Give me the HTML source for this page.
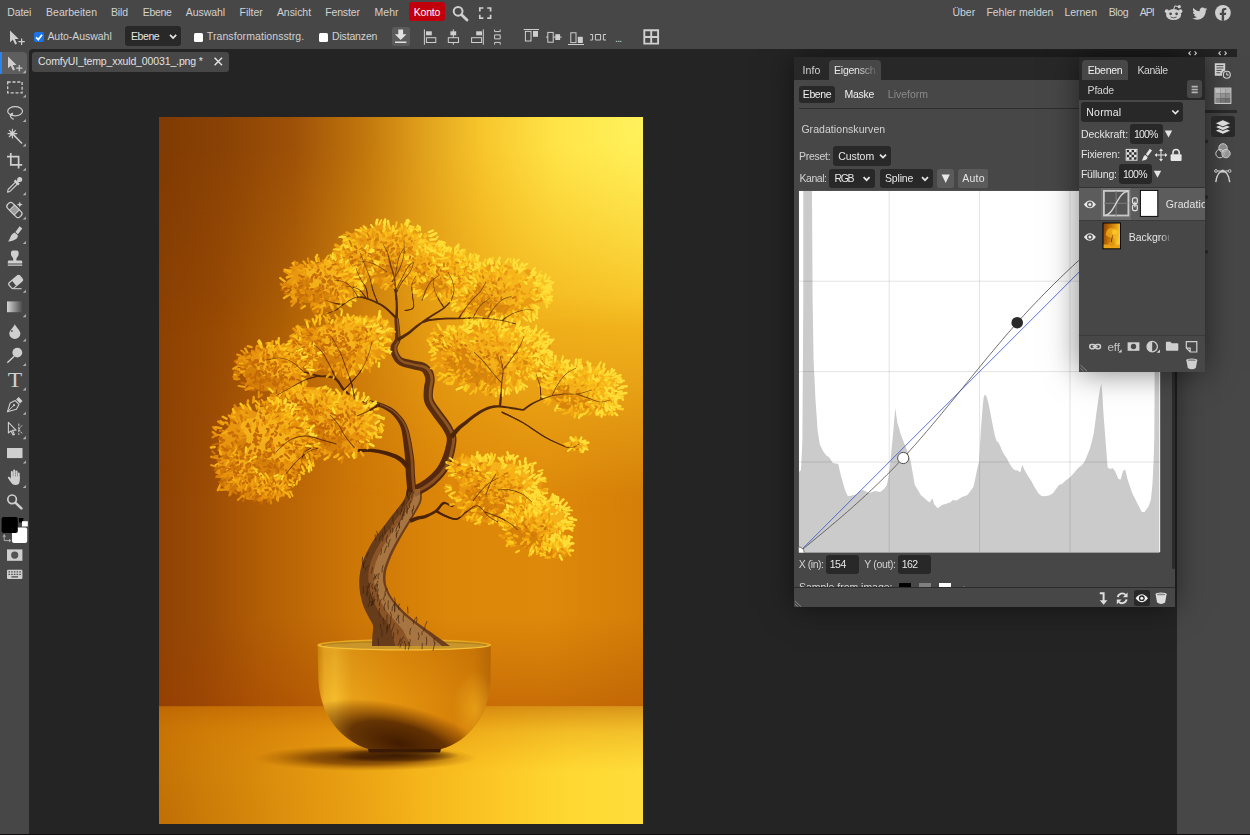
<!DOCTYPE html>
<html lang="de">
<head>
<meta charset="utf-8">
<title>Photopea</title>
<style>
*{box-sizing:border-box;margin:0;padding:0}
html,body{width:1250px;height:835px;overflow:hidden;background:#474747}
body{font-family:"Liberation Sans",sans-serif;font-size:10.5px;color:#d2d2d2;position:relative}
#app{position:absolute;left:0;top:0;width:1250px;height:835px}
#float{position:absolute;left:0;top:0;width:1250px;height:835px;will-change:transform;clip-path:inset(49px 0 0 0)}
.abs{position:absolute}
.t{position:absolute;white-space:nowrap;line-height:14px;height:14px}
svg{position:absolute;overflow:visible}
</style>
</head>
<body>
<div id="app">
<!-- workspace -->
<div class="abs" style="left:29.4px;top:49.0px;width:1147.6px;height:786.0px;background:#242424;border-radius:4px 0 0 0;"></div>
<div class="abs" style="left:1177.0px;top:49.0px;width:73.0px;height:786.0px;background:#474747;"></div>
<div class="abs" style="left:1177.0px;top:49.0px;width:60.4px;height:7.8px;background:#242424;"></div>
<div class="abs" style="left:1205.3px;top:110.0px;width:32.1px;height:3.0px;background:#2a2a2a;"></div>
<!-- menu bar -->
<span class="t" style="left:7.3px;top:5px;letter-spacing:-0.10px;">Datei</span>
<span class="t" style="left:46.0px;top:5px;letter-spacing:0.02px;">Bearbeiten</span>
<span class="t" style="left:111.0px;top:5px;letter-spacing:-0.17px;">Bild</span>
<span class="t" style="left:142.8px;top:5px;letter-spacing:-0.32px;">Ebene</span>
<span class="t" style="left:185.7px;top:5px;letter-spacing:-0.03px;">Auswahl</span>
<span class="t" style="left:239.6px;top:5px;letter-spacing:-0.03px;">Filter</span>
<span class="t" style="left:276.9px;top:5px;letter-spacing:-0.04px;">Ansicht</span>
<span class="t" style="left:325.2px;top:5px;letter-spacing:-0.15px;">Fenster</span>
<span class="t" style="left:374.5px;top:5px;letter-spacing:0.02px;">Mehr</span>
<div class="abs" style="left:409.2px;top:2.4px;width:35.5px;height:18.4px;background:#c1000c;border-radius:3px;"></div>
<span class="t" style="left:413.7px;top:5px;letter-spacing:-0.19px;color:#ffffff;">Konto</span>
<span class="t" style="left:952.4px;top:5px;letter-spacing:0.01px;">Über</span>
<span class="t" style="left:986.4px;top:5px;letter-spacing:-0.01px;">Fehler melden</span>
<span class="t" style="left:1064.5px;top:5px;letter-spacing:-0.04px;">Lernen</span>
<span class="t" style="left:1108.7px;top:5px;letter-spacing:-0.37px;">Blog</span>
<span class="t" style="left:1139.7px;top:5px;letter-spacing:-1.02px;">API</span>
<svg width="1250" height="835" viewBox="0 0 1250 835" style="left:0;top:0;pointer-events:none"><circle cx="458.1" cy="11.3" r="4.4" fill="none" stroke="#cfcfcf" stroke-width="2"/><path d="M461.6 14.8L467 20.1" stroke="#cfcfcf" stroke-width="2.8" stroke-linecap="round"/><path d="M479.8 11.4V8H483.4M487.2 8H490.6V11.4M490.6 14.8V18.2H487.2M483.4 18.2H479.8V14.8" fill="none" stroke="#cfcfcf" stroke-width="1.7"/><g fill="#cfcfcf"><ellipse cx="1173.6" cy="14.6" rx="7.6" ry="5.5"/><circle cx="1166.8" cy="11.2" r="2"/><circle cx="1180.4" cy="11.2" r="2"/><circle cx="1179.3" cy="6.7" r="1.6"/></g><path d="M1173.6 9.6L1174.8 5.9L1178.4 6.6" fill="none" stroke="#cfcfcf" stroke-width="1"/><circle cx="1170.6" cy="13.8" r="1.35" fill="#474747"/><circle cx="1176.6" cy="13.8" r="1.35" fill="#474747"/><path d="M1170.6 17Q1173.6 18.8 1176.6 17" fill="none" stroke="#474747" stroke-width=".9"/><path transform="translate(1192.3 6.1) scale(.625)" fill="#cfcfcf" d="M23.953 4.57a10 10 0 01-2.825.775 4.958 4.958 0 002.163-2.723c-.951.555-2.005.959-3.127 1.184a4.92 4.92 0 00-8.384 4.482C7.69 8.095 4.067 6.13 1.64 3.162a4.822 4.822 0 00-.666 2.475c0 1.71.87 3.213 2.188 4.096a4.904 4.904 0 01-2.228-.616v.06a4.923 4.923 0 003.946 4.827 4.996 4.996 0 01-2.212.085 4.936 4.936 0 004.604 3.417 9.867 9.867 0 01-6.102 2.105c-.39 0-.779-.023-1.17-.067a13.995 13.995 0 007.557 2.209c9.053 0 13.998-7.496 13.998-13.985 0-.21 0-.42-.015-.63A9.935 9.935 0 0024 4.59z"/><circle cx="1222.9" cy="12.8" r="7.9" fill="#cfcfcf"/><path fill="#474747" d="M1221.7 20.7v-5.7h-1.9v-2.3h1.9v-1.7c0-1.9 1.1-3 2.9-3 .8 0 1.7.15 1.7.15v1.9h-1c-.9 0-1.2.6-1.2 1.2v1.45h2.1l-.33 2.3h-1.77v5.7z"/></svg>
<!-- options bar -->
<div class="abs" style="left:34.0px;top:32.4px;width:10.0px;height:9.8px;background:#1a73e8;border-radius:2px;"></div>
<span class="t" style="left:47.4px;top:29px;letter-spacing:-0.04px;">Auto-Auswahl</span>
<div class="abs" style="left:125.2px;top:26.2px;width:55.8px;height:19.6px;background:#282828;border-radius:3px;"></div>
<span class="t" style="left:131.0px;top:29px;letter-spacing:-0.42px;color:#e6e6e6;">Ebene</span>
<div class="abs" style="left:193.7px;top:32.6px;width:9.5px;height:9.2px;background:#ffffff;border-radius:1.5px;"></div>
<span class="t" style="left:206.8px;top:29px;letter-spacing:0.08px;">Transformationsstrg.</span>
<div class="abs" style="left:319.0px;top:32.6px;width:9.4px;height:9.2px;background:#ffffff;border-radius:1.5px;"></div>
<span class="t" style="left:332.0px;top:29px;letter-spacing:-0.16px;">Distanzen</span>
<div class="abs" style="left:391.7px;top:27.1px;width:17.9px;height:18.7px;background:#5b5b5b;border-radius:2.5px;"></div>
<span class="t" style="left:615.0px;top:31px;letter-spacing:-0.73px;">...</span>
<svg width="1250" height="835" viewBox="0 0 1250 835" style="left:0;top:0;pointer-events:none"><path fill="#cfcfcf" d="M10 30.4V42.3L12.9 39.7L15.1 44.6L17 43.8L14.9 39H18.8Z"/><path d="M18.4 41.7H24.8M21.6 38.5V44.9" stroke="#cfcfcf" stroke-width="1.2"/><path d="M36.1 37.3L38.3 39.6L42 34.8" fill="none" stroke="#fff" stroke-width="1.7"/><path d="M170 34.9L173.1 38L176.2 34.9" fill="none" stroke="#e6e6e6" stroke-width="1.7"/><path fill="#e2e2e2" d="M398.3 29.4h4.8v4.9h3.4l-5.8 5.6l-5.8-5.6h3.4zM395 41.4h11.4v1.7H395z"/><path d="M424.4 29.4V44.8" stroke="#cfcfcf" stroke-width="1"/><rect x="426" y="31.3" width="5.8" height="4" fill="#cfcfcf"/><rect x="426.4" y="37.7" width="9.4" height="4.8" fill="none" stroke="#cfcfcf" stroke-width="1"/><path d="M453.3 29.4V44.8" stroke="#cfcfcf" stroke-width="1"/><rect x="450.4" y="31.3" width="5.8" height="4" fill="#cfcfcf"/><rect x="448.3" y="37.7" width="10.2" height="4.8" fill="#474747" stroke="#cfcfcf" stroke-width="1"/><path d="M483.3 29.4V44.8" stroke="#cfcfcf" stroke-width="1"/><rect x="476.2" y="31.3" width="5.8" height="4" fill="#cfcfcf"/><rect x="471.6" y="37.7" width="10" height="4.8" fill="none" stroke="#cfcfcf" stroke-width="1"/><path d="M494.6 29.6V31.6H500.2V29.6M494.6 34.9H500.2V38.9H494.6ZM494.6 44.6V42.4H500.2V44.6" fill="none" stroke="#cfcfcf" stroke-width="1"/><path d="M523.7 29.5H539" stroke="#cfcfcf" stroke-width="1"/><rect x="525.4" y="31.4" width="5.6" height="9.6" fill="none" stroke="#cfcfcf" stroke-width="1"/><rect x="533" y="31" width="5" height="5.8" fill="#cfcfcf"/><path d="M546 37.1H561.7" stroke="#cfcfcf" stroke-width="1"/><rect x="547.8" y="32.4" width="5.4" height="9.8" fill="#474747" stroke="#cfcfcf" stroke-width="1"/><rect x="555.3" y="34.2" width="4.8" height="5.8" fill="#cfcfcf"/><path d="M568 44.5H584" stroke="#cfcfcf" stroke-width="1"/><rect x="570.8" y="32.8" width="5.2" height="9.8" fill="none" stroke="#cfcfcf" stroke-width="1"/><rect x="577.8" y="36.8" width="5" height="6.2" fill="#cfcfcf"/><path d="M590.2 34.5H592.6V40H590.2M595.4 34.5H600.6V40H595.4ZM606 34.5H603.4V40H606" fill="none" stroke="#cfcfcf" stroke-width="1"/><path d="M644.3 30.3H658.1V43.6H644.3ZM651.2 30.3V43.6M644.3 37H658.1" fill="none" stroke="#cfcfcf" stroke-width="1.9"/></svg>
<!-- toolbar -->
<div class="abs" style="left:0.0px;top:51.8px;width:26.6px;height:21.9px;background:#5e5e5e;border-radius:0 4px 4px 0;"></div>
<div class="abs" style="left:0.0px;top:51.8px;width:2.2px;height:21.9px;background:#2c82f0;"></div>
<svg width="1250" height="835" viewBox="0 0 1250 835" style="left:0;top:0;pointer-events:none"><path fill="#b4b4b4" d="M25.9 70.1V73.2H22.8Z"/><path fill="#b4b4b4" d="M25.9 94.5V97.6H22.8Z"/><path fill="#b4b4b4" d="M25.9 118.9V122.0H22.8Z"/><path fill="#b4b4b4" d="M25.9 143.3V146.4H22.8Z"/><path fill="#b4b4b4" d="M25.9 167.7V170.8H22.8Z"/><path fill="#b4b4b4" d="M25.9 192.1V195.2H22.8Z"/><path fill="#b4b4b4" d="M25.9 216.5V219.6H22.8Z"/><path fill="#b4b4b4" d="M25.9 240.9V244.0H22.8Z"/><path fill="#b4b4b4" d="M25.9 289.7V292.8H22.8Z"/><path fill="#b4b4b4" d="M25.9 314.1V317.2H22.8Z"/><path fill="#b4b4b4" d="M25.9 338.5V341.6H22.8Z"/><path fill="#b4b4b4" d="M25.9 362.9V366.0H22.8Z"/><path fill="#b4b4b4" d="M25.9 387.3V390.4H22.8Z"/><path fill="#b4b4b4" d="M25.9 411.7V414.8H22.8Z"/><path fill="#b4b4b4" d="M25.9 436.1V439.2H22.8Z"/><path fill="#b4b4b4" d="M25.9 460.5V463.6H22.8Z"/><path fill="#b4b4b4" d="M25.9 484.9V488.0H22.8Z"/><path fill="#cfcfcf" d="M8 56.6V68.3L10.8 65.8L13 70.5L14.9 69.7L12.8 65H16.6Z"/><path d="M16.2 68.2H22.4M19.3 65.1V71.3" stroke="#cfcfcf" stroke-width="1.2"/><rect x="7.7" y="82" width="14.4" height="10.8" fill="none" stroke="#cfcfcf" stroke-width="1.3" stroke-dasharray="3 1.8"/><ellipse cx="15.1" cy="111.2" rx="7.4" ry="4.6" fill="none" stroke="#cfcfcf" stroke-width="1.2"/><path d="M12.6 113.4Q9.6 114.8 10.6 116.8Q11.4 118.4 13.6 119.4" fill="none" stroke="#cfcfcf" stroke-width="1.2"/><path d="M9.4 114.6L13.2 112.6L12.6 116" fill="#cfcfcf"/><path d="M14.2 135.6L22 143.6" stroke="#cfcfcf" stroke-width="1.5"/><path d="M12.4 128.8V138.4M7.6 133.6H17.2M9 130.2L15.8 137M15.8 130.2L9 137" stroke="#cfcfcf" stroke-width="1.1"/><circle cx="12.4" cy="133.6" r="2.3" fill="#cfcfcf"/><path d="M10.8 153V164.8H22.2M7 156.7H18.6V168.4" fill="none" stroke="#cfcfcf" stroke-width="1.7"/><circle cx="19.7" cy="179.5" r="2.5" fill="#cfcfcf"/><path d="M14.6 180.4L18.9 184.7" stroke="#cfcfcf" stroke-width="2.4"/><path d="M17.6 181.8L19 180.4" stroke="#cfcfcf" stroke-width="2.6"/><path d="M15.5 182.1L17.4 184L10 191.4L7.5 192.1L8.1 189.5Z" fill="none" stroke="#cfcfcf" stroke-width="1.1" stroke-linejoin="round"/><g transform="rotate(45 14.4 210)"><rect x="5.6" y="206.4" width="17.6" height="7.2" rx="3" fill="none" stroke="#cfcfcf" stroke-width="1.2"/><rect x="11" y="206.4" width="6.8" height="7.2" fill="#9a9a9a" stroke="#cfcfcf" stroke-width="1"/></g><path fill="#cfcfcf" d="M19.8 201.6L20.6 203.8L22.8 204.6L20.6 205.4L19.8 207.6L19 205.4L16.8 204.6L19 203.8Z"/><path fill="#cfcfcf" d="M19.6 226.2L22.3 228.5L17.9 234.2L15.4 232.1Z"/><path fill="#cfcfcf" d="M14.6 232.6L17.7 235.1C18.6 238.4 14.8 241.2 7.9 241.5C10.6 239.6 9.8 234.6 14.6 232.6Z"/><path fill="#cfcfcf" d="M11 252.4Q11 250.4 13 250.4H16.6Q18.6 250.4 18.6 252.4V254.6Q18.6 256 17.2 257.2Q16.4 258 16.4 259.2V260.4H20.8Q22.2 260.4 22.2 261.8V263.6H7.8V261.8Q7.8 260.4 9.2 260.4H13.2V259.2Q13.2 258 12.4 257.2Q11 256 11 254.6ZM7.8 264.6H22.2V265.8H7.8Z"/><g transform="rotate(-40 15.4 282)"><rect x="8.6" y="278.6" width="14" height="7" rx="1.6" fill="none" stroke="#cfcfcf" stroke-width="1.2"/><path fill="#cfcfcf" d="M13.6 278.6H21Q22.6 278.6 22.6 280.2V284Q22.6 285.6 21 285.6H13.6Z"/></g><path d="M13.4 288.7H21.6" stroke="#cfcfcf" stroke-width="1.1"/><defs><linearGradient id="tg" x1="0" x2="1"><stop offset="0" stop-color="#d4d4d4"/><stop offset="1" stop-color="#4c4c4c"/></linearGradient></defs><rect x="7" y="301.4" width="15.2" height="10.8" fill="url(#tg)"/><path fill="#cfcfcf" d="M14.85 324.2C17 328.2 20.4 330.6 20.4 333.5A5.55 5.4 0 0 1 9.3 333.5C9.3 330.6 12.7 328.2 14.85 324.2Z"/><circle cx="11.9" cy="331" r=".9" fill="#555"/><circle cx="17.3" cy="352.6" r="4.9" fill="#cfcfcf"/><path d="M14.2 356.2L7.3 362.8" stroke="#cfcfcf" stroke-width="1.4"/><text x="15" y="387" text-anchor="middle" font-family="Liberation Serif,serif" font-size="21.5" fill="#cfcfcf" transform="translate(15 0) scale(1.1 1) translate(-15 0)">T</text><path fill="#cfcfcf" d="M18.7 397L22.5 400.9L20 403.5L16.1 399.6Z"/><path d="M15.2 400.6L19 404.4L16.4 409.2L7.4 411.8L10.2 402.9Z" fill="none" stroke="#cfcfcf" stroke-width="1.1" stroke-linejoin="round"/><path d="M7.6 411.6L13.4 405.8" stroke="#cfcfcf" stroke-width="1"/><circle cx="14" cy="405.2" r="1.1" fill="#cfcfcf"/><path d="M8.4 422.4V433L11 430.8L13 435L14.4 434.4L12.5 430.2H16Z" fill="none" stroke="#cfcfcf" stroke-width="1.1" stroke-linejoin="round"/><path d="M18.8 423.6V434.8M18.8 429.2L22 425.4M18.8 429.2L22 433.4" stroke="#cfcfcf" stroke-width="1" stroke-dasharray="2.2 1"/><rect x="7" y="448" width="15.5" height="10.1" fill="#cfcfcf"/><g fill="#cfcfcf"><rect x="10.9" y="471" width="2" height="8" rx="1"/><rect x="13.2" y="469.6" width="2" height="9" rx="1"/><rect x="15.5" y="470.4" width="2" height="9" rx="1"/><rect x="17.8" y="472.6" width="1.9" height="7" rx=".95"/><path d="M10.9 476.4H19.7V480.4Q19.7 485 15.4 485Q12.6 485 11.2 482.8L7.9 478Q7.6 477.2 8.4 476.8Q9.2 476.4 9.8 477.2L10.9 478.6Z"/></g><circle cx="12.1" cy="499.3" r="4.3" fill="none" stroke="#cfcfcf" stroke-width="1.7"/><path d="M15.6 502.8L21.4 508.4" stroke="#cfcfcf" stroke-width="2.5" stroke-linecap="round"/><rect x="18.9" y="518" width="4.4" height="4.5" fill="#000"/><rect x="22" y="521.2" width="5.8" height="5.3" fill="#fff"/><rect x="12" y="527.6" width="15.2" height="15.4" rx="2" fill="#fff"/><rect x="1.6" y="517" width="16.2" height="16" rx="2" fill="#000"/><path d="M4.2 536.4V540.6H9.4" fill="none" stroke="#aaa" stroke-width="1"/><path fill="#aaa" d="M2.4 536.8L4.2 534L6 536.8ZM9 538.8L11.4 540.6L9 542.4Z"/><rect x="7" y="549.4" width="15.4" height="11.4" fill="#cfcfcf"/><circle cx="14.7" cy="555.1" r="3.6" fill="#555"/><rect x="7" y="569.7" width="15.4" height="9.4" rx="1" fill="#cfcfcf"/><path fill="#4a4a4a" d="M8.5 571.3h1.5v1.3h-1.5zM8.5 573.7h1.5v1.3h-1.5zM11.2 571.3h1.5v1.3h-1.5zM11.2 573.7h1.5v1.3h-1.5zM13.9 571.3h1.5v1.3h-1.5zM13.9 573.7h1.5v1.3h-1.5zM16.6 571.3h1.5v1.3h-1.5zM16.6 573.7h1.5v1.3h-1.5zM19.3 571.3h1.5v1.3h-1.5zM19.3 573.7h1.5v1.3h-1.5zM11.4 576.2h6.6v1.4h-6.6z"/></svg>
<!-- document tab -->
<div class="abs" style="left:32.4px;top:52.0px;width:196.2px;height:19.6px;background:#474747;border-radius:3px;"></div>
<span class="t" style="left:38.1px;top:54px;letter-spacing:-0.13px;color:#e2e2e2;">ComfyUI_temp_xxuld_00031_.png *</span>
<svg width="1250" height="835" viewBox="0 0 1250 835" style="left:0;top:0;pointer-events:none"><path d="M214.6 57.8L222 65.2M222 57.8L214.6 65.2" stroke="#e2e2e2" stroke-width="1.5"/></svg>
<!-- image canvas -->
<svg width="484" height="707" viewBox="0 0 484 707" preserveAspectRatio="none" style="left:159px;top:117px"><defs><linearGradient id="pwa" x1="0" x2="1" y1="0" y2="0"><stop offset="0" stop-color="#803a03"/><stop offset="0.14" stop-color="#883f03"/><stop offset="0.28" stop-color="#9a4a05"/><stop offset="0.43" stop-color="#be7008"/><stop offset="0.53" stop-color="#d99315"/><stop offset="0.67" stop-color="#f6be24"/><stop offset="0.82" stop-color="#ffe040"/><stop offset="1" stop-color="#fff055"/></linearGradient><linearGradient id="pwb" x1="0" x2="1" y1="0" y2="0"><stop offset="0" stop-color="#8c4203"/><stop offset="0.12" stop-color="#984a04"/><stop offset="0.25" stop-color="#aa5c05"/><stop offset="0.4" stop-color="#ca7a09"/><stop offset="0.55" stop-color="#e59a10"/><stop offset="0.75" stop-color="#f0ae18"/><stop offset="1" stop-color="#f5b81c"/></linearGradient><linearGradient id="pwc" x1="0" x2="1" y1="0" y2="0"><stop offset="0" stop-color="#8e4204"/><stop offset="0.1" stop-color="#9c4c05"/><stop offset="0.2" stop-color="#b05c05"/><stop offset="0.4" stop-color="#cc7607"/><stop offset="0.6" stop-color="#dd8709"/><stop offset="0.8" stop-color="#de890a"/><stop offset="1" stop-color="#d47e08"/></linearGradient><linearGradient id="pma" x1="0" x2="0" y1="0" y2="1"><stop offset="0" stop-color="#fff"/><stop offset="0.05" stop-color="#fff"/><stop offset="0.36" stop-color="#000"/></linearGradient><linearGradient id="pmb" x1="0" x2="0" y1="0" y2="1"><stop offset="0" stop-color="#fff"/><stop offset="0.3" stop-color="#fff"/><stop offset="0.64" stop-color="#000"/></linearGradient><mask id="pmka"><rect width="484" height="592" fill="url(#pma)"/></mask><mask id="pmkb"><rect width="484" height="592" fill="url(#pmb)"/></mask><linearGradient id="pwd" x1="0" x2="0" y1="0" y2="1"><stop offset="0" stop-color="#7a3600"/><stop offset="0" stop-color="#a03c00" stop-opacity="0"/><stop offset="1" stop-color="#a03c00" stop-opacity=".36"/></linearGradient><linearGradient id="pfl" x1="0" x2="1" y1="0" y2="0"><stop offset="0" stop-color="#d08008"/><stop offset="0.1" stop-color="#dc8e0b"/><stop offset="0.3" stop-color="#ea9e10"/><stop offset="0.5" stop-color="#f3b018"/><stop offset="0.7" stop-color="#fcc826"/><stop offset="0.85" stop-color="#ffd832"/><stop offset="1" stop-color="#ffdd3a"/></linearGradient><linearGradient id="pfv" x1="0" x2="0" y1="0" y2="1"><stop offset="0" stop-color="#b85a00" stop-opacity=".55"/><stop offset=".22" stop-color="#cc6c00" stop-opacity=".24"/><stop offset=".55" stop-color="#d87800" stop-opacity="0"/></linearGradient><linearGradient id="pbw" x1="0" x2="1" y1="0" y2="0"><stop offset="0" stop-color="#d48a10"/><stop offset="0.04" stop-color="#eeb026"/><stop offset="0.1" stop-color="#f4ba2c"/><stop offset="0.2" stop-color="#e8a018"/><stop offset="0.4" stop-color="#e4940e"/><stop offset="0.7" stop-color="#da860a"/><stop offset="0.9" stop-color="#d07c08"/><stop offset="1" stop-color="#b86a06"/></linearGradient><radialGradient id="pbs" cx=".5" cy=".5" r=".5"><stop offset="0" stop-color="#3a1600" stop-opacity=".95"/><stop offset=".5" stop-color="#4e2200" stop-opacity=".85"/><stop offset=".8" stop-color="#703400" stop-opacity=".4"/><stop offset="1" stop-color="#7a3c00" stop-opacity="0"/></radialGradient><radialGradient id="psh" cx=".5" cy=".5" r=".5"><stop offset="0" stop-color="#4a2000" stop-opacity=".9"/><stop offset=".5" stop-color="#6e3600" stop-opacity=".7"/><stop offset="1" stop-color="#a05a00" stop-opacity="0"/></radialGradient><linearGradient id="ptr" x1="0" x2="1" y1="0" y2="0"><stop offset="0" stop-color="#4a2810"/><stop offset="0.35" stop-color="#7c4c24"/><stop offset="0.7" stop-color="#b4824a"/><stop offset="1" stop-color="#8a5a2c"/></linearGradient><clipPath id="pbc"><path d="M158.6 528L159.4 563C161 598 181 623 209 632H282C309 625 331 598 331.5 563L331.8 528Z"/></clipPath><linearGradient id="pbt" x1="0" x2="0" y1="0" y2="1"><stop offset="0" stop-color="#8a4400" stop-opacity=".0"/><stop offset=".25" stop-color="#b05e00" stop-opacity=".22"/><stop offset="1" stop-color="#b05e00" stop-opacity="0"/></linearGradient><radialGradient id="phl" cx="1" cy="0" r="1"><stop offset="0" stop-color="#fff46a" stop-opacity=".35"/><stop offset=".5" stop-color="#ffe84a" stop-opacity=".08"/><stop offset="1" stop-color="#ffe84a" stop-opacity="0"/></radialGradient><radialGradient id="pfc" gradientUnits="userSpaceOnUse" cx="0" cy="720" r="260"><stop offset="0" stop-color="#a85400" stop-opacity=".42"/><stop offset=".5" stop-color="#a85400" stop-opacity=".16"/><stop offset="1" stop-color="#a85400" stop-opacity="0"/></radialGradient><radialGradient id="pbr" cx=".5" cy=".5" r=".5"><stop offset="0" stop-color="#f8b822" stop-opacity=".55"/><stop offset="1" stop-color="#f8b822" stop-opacity="0"/></radialGradient><radialGradient id="ps2" cx=".5" cy=".5" r=".5"><stop offset="0" stop-color="#2e1200" stop-opacity=".85"/><stop offset=".6" stop-color="#3a1800" stop-opacity=".6"/><stop offset="1" stop-color="#3a1800" stop-opacity="0"/></radialGradient></defs><rect width="484" height="592" fill="url(#pwc)"/><rect width="484" height="592" fill="url(#pwb)" mask="url(#pmkb)"/><rect width="484" height="592" fill="url(#pwa)" mask="url(#pmka)"/><rect y="500" width="484" height="92" fill="url(#pwd)"/><rect y="589.5" width="484" height="117.5" fill="url(#pfl)"/><rect y="589.5" width="484" height="117.5" fill="url(#pfv)"/><rect y="589.5" width="484" height="117.5" fill="url(#pfc)"/><ellipse cx="206" cy="641" rx="112" ry="13" fill="url(#psh)"/><ellipse cx="238" cy="638.5" rx="62" ry="7" fill="url(#ps2)"/><path d="M158.6 528L159.4 563C161 598 181 623 209 632H282C309 625 331 598 331.5 563L331.8 528Z" fill="url(#pbw)"/><g clip-path="url(#pbc)"><rect x="150" y="520" width="190" height="60" fill="url(#pbt)"/><ellipse cx="240" cy="626" rx="100" ry="38" transform="rotate(14 240 626)" fill="url(#pbs)"/><ellipse cx="316" cy="592" rx="22" ry="38" fill="url(#pbr)"/></g><ellipse cx="245.2" cy="527.6" rx="86.6" ry="5.4" fill="#e8a820"/><ellipse cx="245.2" cy="528" rx="83.5" ry="4.2" fill="#b8821e"/><ellipse cx="245.2" cy="528.8" rx="80" ry="3.2" fill="#c8962a"/><path d="M158.8 527.8A86.6 5.4 0 0 0 331.8 527.8" fill="none" stroke="#f6c03a" stroke-width="1.2"/><path d="M209 632H282L281 635.4H210Z" fill="#3a1a04"/><path d="M213.0 529.0C213.1 527.3 213.3 522.2 213.5 518.8C213.6 515.4 214.6 511.8 214.0 508.6C213.3 505.4 210.9 502.5 209.4 499.5C207.9 496.5 206.2 493.5 204.9 490.3C203.7 487.2 202.7 483.9 202.0 480.6C201.2 477.3 200.7 473.9 200.5 470.5C200.3 467.2 200.2 463.7 200.5 460.3C200.8 456.9 201.4 453.5 202.2 450.3C203.1 447.0 204.1 443.7 205.4 440.6C206.6 437.5 208.2 434.4 209.8 431.4C211.4 428.4 213.2 425.5 215.0 422.6C216.9 419.8 219.0 417.1 221.0 414.3C223.0 411.6 225.1 408.9 227.2 406.2C229.2 403.5 231.3 400.8 233.4 398.1C235.5 395.4 237.7 392.8 239.8 390.1C241.8 387.4 244.1 384.8 245.5 381.8C247.0 378.8 248.0 373.6 248.5 372.0L262.5 372.0C262.5 373.9 263.2 379.8 262.4 383.5C261.6 387.1 259.3 390.5 257.5 393.8C255.7 397.2 253.8 400.5 251.8 403.8C249.9 407.1 247.8 410.3 245.9 413.6C243.9 416.9 242.0 420.2 240.2 423.6C238.3 426.9 236.5 430.3 234.8 433.7C233.1 437.2 231.5 440.7 230.2 444.2C228.9 447.8 227.4 451.5 226.9 455.2C226.3 458.9 226.1 462.8 226.8 466.4C227.4 470.0 229.0 473.6 230.7 476.9C232.5 480.2 234.9 483.3 237.3 486.3C239.7 489.3 242.3 492.1 245.0 494.8C247.8 497.4 250.7 499.8 253.7 502.2C256.7 504.6 259.9 506.7 263.0 508.9C266.1 511.2 269.2 513.4 272.3 515.6C275.4 517.9 278.5 520.1 281.7 522.3C284.8 524.6 289.4 527.9 291.0 529.0Z" fill="#8a5426"/><path d="M256.5 379.9C258.2 379.0 263.4 376.6 266.7 374.5C270.1 372.4 273.2 370.3 276.5 367.4C279.7 364.5 283.6 360.7 286.2 357.1C288.9 353.6 290.7 349.9 292.3 346.1C293.9 342.2 295.0 338.3 295.9 334.1C296.7 329.8 297.8 324.6 297.4 320.5C296.9 316.5 294.7 312.8 293.3 309.9C291.8 307.0 290.9 305.9 288.9 303.0C286.8 300.0 283.3 295.7 280.9 292.3C278.5 288.9 275.6 285.6 274.5 282.5C273.4 279.3 274.0 276.6 274.2 273.2C274.5 269.9 275.9 265.9 275.7 262.5C275.6 259.0 274.8 255.4 273.1 252.6C271.4 249.9 268.8 247.4 265.6 245.9C262.4 244.4 257.6 244.3 254.0 243.5C250.4 242.7 246.4 242.3 244.0 241.1C241.7 240.0 240.8 238.2 239.9 236.4C239.0 234.6 238.2 232.6 238.5 230.5C238.7 228.4 241.0 226.5 241.4 223.6C241.9 220.6 241.3 216.6 241.0 212.9C240.7 209.2 239.9 203.2 239.7 201.3L235.3 201.7C235.4 203.6 235.9 209.7 236.0 213.1C236.1 216.6 236.5 219.7 235.8 222.4C235.0 225.1 232.0 226.6 231.5 229.5C231.1 232.4 231.7 236.5 233.1 239.6C234.5 242.7 236.8 246.0 240.0 248.1C243.1 250.1 248.3 250.7 252.0 251.7C255.6 252.7 259.7 253.1 261.8 254.1C264.0 255.0 264.1 255.9 264.9 257.4C265.6 258.8 266.3 260.2 266.3 262.7C266.2 265.3 264.9 269.0 264.8 272.8C264.6 276.6 264.1 281.4 265.5 285.5C266.9 289.7 270.5 293.9 273.1 297.7C275.7 301.5 279.2 305.7 281.1 308.4C283.1 311.2 283.6 311.9 284.7 314.1C285.9 316.3 287.6 318.5 287.8 321.5C288.1 324.4 287.0 328.5 286.1 331.9C285.3 335.3 284.1 338.8 282.7 341.9C281.3 345.1 280.0 347.9 277.8 350.9C275.6 353.8 272.3 357.1 269.5 359.6C266.8 362.0 264.3 363.8 261.3 365.5C258.3 367.3 253.2 369.3 251.5 370.1Z" fill="#55280e"/><path d="M257.5 374.6C257.2 371.9 256.4 363.8 256.0 358.7C255.6 353.5 255.7 348.0 255.3 343.7C254.9 339.3 254.3 336.0 253.7 332.4C253.2 328.9 252.7 325.7 251.9 322.3C251.2 318.9 250.6 315.3 249.3 311.9C248.1 308.6 246.9 305.6 244.5 302.3C242.0 299.0 238.4 294.8 234.5 292.0C230.7 289.2 225.8 287.3 221.3 285.7C216.8 284.2 211.6 283.5 207.4 282.7C203.2 281.9 199.8 282.8 196.2 281.0C192.7 279.2 189.0 275.3 186.0 272.1C183.0 268.8 181.1 263.9 178.3 261.7C175.5 259.4 172.3 259.1 169.2 258.5C166.1 257.9 163.7 258.8 159.7 258.1C155.7 257.4 150.0 255.5 145.2 254.3C140.4 253.2 133.3 251.8 130.9 251.3L130.7 252.3C133.0 252.9 140.1 254.4 144.8 255.7C149.6 256.9 155.3 259.1 159.3 259.9C163.3 260.7 165.9 259.9 168.8 260.5C171.7 261.1 174.2 261.3 176.7 263.5C179.3 265.8 181.0 270.6 184.0 273.9C187.0 277.3 191.0 281.8 194.8 283.8C198.5 285.9 202.4 285.3 206.6 286.3C210.8 287.2 215.7 288.1 219.9 289.7C224.0 291.3 228.2 293.3 231.5 296.0C234.8 298.7 237.7 302.7 239.5 305.7C241.4 308.7 241.9 311.1 242.7 314.1C243.4 317.1 243.6 320.4 244.1 323.7C244.5 326.9 244.9 330.1 245.3 333.6C245.7 337.0 246.0 340.1 246.3 344.3C246.6 348.6 246.6 354.1 247.0 359.3C247.4 364.5 248.3 372.7 248.5 375.4Z" fill="#52260c"/><path d="M213.0 529.0C213.1 527.3 213.3 522.2 213.5 518.8C213.6 515.4 214.6 511.8 214.0 508.6C213.3 505.4 210.9 502.5 209.4 499.5C207.9 496.5 206.2 493.5 204.9 490.3C203.7 487.2 202.7 483.9 202.0 480.6C201.2 477.3 200.7 473.9 200.5 470.5C200.3 467.2 200.2 463.7 200.5 460.3C200.8 456.9 201.4 453.5 202.2 450.3C203.1 447.0 204.1 443.7 205.4 440.6C206.6 437.5 208.2 434.4 209.8 431.4C211.4 428.4 213.2 425.5 215.0 422.6C216.9 419.8 219.0 417.1 221.0 414.3C223.0 411.6 225.1 408.9 227.2 406.2C229.2 403.5 231.3 400.8 233.4 398.1C235.5 395.4 237.7 392.8 239.8 390.1C241.8 387.4 244.1 384.8 245.5 381.8C247.0 378.8 248.0 373.6 248.5 372.0L252.7 372.0C252.4 373.7 251.9 379.1 250.6 382.3C249.3 385.5 247.0 388.3 245.1 391.2C243.1 394.1 241.0 396.9 238.9 399.8C236.9 402.7 234.8 405.5 232.8 408.4C230.7 411.3 228.7 414.2 226.7 417.1C224.8 420.0 222.8 422.9 221.0 425.9C219.2 429.0 217.4 432.1 215.9 435.2C214.4 438.4 212.9 441.7 211.8 445.0C210.8 448.3 210.0 451.7 209.6 455.1C209.2 458.5 209.2 461.9 209.6 465.3C209.9 468.7 210.7 472.0 211.5 475.3C212.4 478.5 213.6 481.8 214.9 484.9C216.2 488.0 217.8 491.0 219.6 493.9C221.3 496.8 223.5 499.5 225.5 502.3C227.5 505.1 230.1 507.8 231.5 510.7C232.9 513.6 233.1 516.8 233.9 519.9C234.8 522.9 236.0 527.5 236.4 529.0Z" fill="#4a2810" fill-opacity=".55"/><path d="M252.0 529.0C251.3 527.6 249.0 523.4 247.6 520.6C246.1 517.7 245.0 514.8 243.2 512.1C241.3 509.4 238.5 506.9 236.2 504.2C233.9 501.6 231.5 499.0 229.3 496.3C227.2 493.5 225.2 490.7 223.5 487.7C221.8 484.7 220.2 481.6 218.9 478.4C217.6 475.2 216.3 472.0 215.6 468.6C214.9 465.3 214.4 461.8 214.5 458.3C214.6 454.9 215.2 451.3 216.1 447.9C217.0 444.5 218.5 441.1 220.0 437.8C221.5 434.5 223.1 431.3 224.9 428.2C226.7 425.0 228.6 422.0 230.6 418.9C232.5 415.9 234.5 412.9 236.5 409.9C238.5 406.9 240.6 403.9 242.6 400.9C244.6 397.9 246.7 395.0 248.6 392.0C250.5 388.9 252.8 386.0 254.0 382.6C255.1 379.3 255.2 373.8 255.5 372.0L261.1 372.0C261.0 373.9 261.6 379.7 260.7 383.3C259.8 386.9 257.5 390.1 255.7 393.5C253.9 396.8 251.9 400.0 250.0 403.2C248.0 406.5 246.0 409.6 244.0 412.9C242.1 416.1 240.1 419.4 238.2 422.6C236.4 425.9 234.5 429.2 232.8 432.6C231.1 436.0 229.5 439.4 228.2 442.9C226.8 446.5 225.4 450.1 224.7 453.7C224.1 457.4 223.8 461.2 224.3 464.8C224.8 468.4 226.2 471.9 227.7 475.2C229.3 478.6 231.5 481.7 233.6 484.7C235.8 487.7 238.2 490.6 240.7 493.4C243.3 496.1 246.0 498.6 248.9 501.0C251.7 503.4 254.7 505.7 257.7 508.0C260.6 510.3 263.6 512.6 266.5 514.9C269.4 517.3 272.1 519.6 274.8 522.0C277.6 524.3 281.8 527.8 283.2 529.0Z" fill="#c09058" fill-opacity=".55"/><path d="M283.2 529.0C281.8 527.8 277.6 524.3 274.8 522.0C272.1 519.6 269.4 517.3 266.5 514.9C263.6 512.6 260.6 510.3 257.7 508.0C254.7 505.7 251.7 503.4 248.9 501.0C246.0 498.6 243.3 496.1 240.7 493.4C238.2 490.6 235.8 487.7 233.6 484.7C231.5 481.7 229.3 478.6 227.7 475.2C226.2 471.9 224.8 468.4 224.3 464.8C223.8 461.2 224.1 457.4 224.7 453.7C225.4 450.1 226.8 446.5 228.2 442.9C229.5 439.4 231.1 436.0 232.8 432.6C234.5 429.2 236.4 425.9 238.2 422.6C240.1 419.4 242.1 416.1 244.0 412.9C246.0 409.6 248.0 406.5 250.0 403.2C251.9 400.0 253.9 396.8 255.7 393.5C257.5 390.1 259.8 386.9 260.7 383.3C261.6 379.7 261.0 373.9 261.1 372.0L262.5 372.0C262.5 373.9 263.2 379.8 262.4 383.5C261.6 387.1 259.3 390.5 257.5 393.8C255.7 397.2 253.8 400.5 251.8 403.8C249.9 407.1 247.8 410.3 245.9 413.6C243.9 416.9 242.0 420.2 240.2 423.6C238.3 426.9 236.5 430.3 234.8 433.7C233.1 437.2 231.5 440.7 230.2 444.2C228.9 447.8 227.4 451.5 226.9 455.2C226.3 458.9 226.1 462.8 226.8 466.4C227.4 470.0 229.0 473.6 230.7 476.9C232.5 480.2 234.9 483.3 237.3 486.3C239.7 489.3 242.3 492.1 245.0 494.8C247.8 497.4 250.7 499.8 253.7 502.2C256.7 504.6 259.9 506.7 263.0 508.9C266.1 511.2 269.2 513.4 272.3 515.6C275.4 517.9 278.5 520.1 281.7 522.3C284.8 524.6 289.4 527.9 291.0 529.0Z" fill="#5a3014" fill-opacity=".6"/><path d="M256.9 376.5C258.6 375.6 263.7 373.3 266.9 371.3C270.1 369.4 273.1 367.4 276.1 364.7C279.2 361.9 282.9 358.3 285.4 354.9C287.8 351.6 289.5 348.2 291.1 344.6C292.6 341.0 293.6 337.3 294.5 333.3C295.3 329.4 296.3 324.5 296.0 320.9C295.6 317.2 293.5 314.0 292.2 311.4C290.9 308.7 290.1 307.7 288.1 304.9C286.0 302.0 282.5 297.7 280.1 294.2C277.6 290.6 274.5 287.1 273.2 283.5C272.0 280.0 272.6 276.6 272.8 273.1C273.0 269.6 274.4 265.7 274.3 262.6C274.2 259.4 273.5 256.6 272.1 254.3C270.8 252.0 268.9 250.1 266.1 248.8C263.2 247.5 258.6 247.2 255.0 246.4C251.4 245.5 246.9 245.0 244.2 243.6C241.5 242.1 240.1 239.7 239.0 237.5C237.9 235.3 237.2 232.5 237.4 230.1C237.7 227.7 240.1 226.0 240.6 223.2C241.1 220.3 240.5 216.6 240.2 213.0C240.0 209.3 239.2 203.4 239.0 201.4L237.7 201.6C237.9 203.5 238.6 209.5 238.8 213.0C238.9 216.6 239.5 220.0 238.9 222.8C238.3 225.6 235.7 227.3 235.4 229.9C235.0 232.5 235.7 235.9 237.0 238.5C238.3 241.1 240.1 243.9 243.0 245.6C245.9 247.4 250.7 247.9 254.4 248.8C258.1 249.8 262.4 250.1 264.9 251.2C267.5 252.4 268.6 253.8 269.7 255.7C270.8 257.6 271.4 259.8 271.5 262.6C271.5 265.5 270.1 269.3 270.0 272.9C269.8 276.6 269.3 280.6 270.6 284.5C271.8 288.3 275.2 292.1 277.7 295.8C280.3 299.5 283.8 303.7 285.7 306.5C287.7 309.3 288.4 310.2 289.6 312.6C290.8 315.1 292.8 317.8 293.1 321.1C293.4 324.5 292.4 329.0 291.5 332.7C290.7 336.4 289.6 340.0 288.1 343.4C286.7 346.8 285.2 349.9 282.8 353.1C280.5 356.2 277.0 359.7 274.1 362.3C271.1 364.9 268.4 366.8 265.3 368.7C262.2 370.5 257.1 372.7 255.5 373.5Z" fill="#a0622a" fill-opacity=".7"/><path d="M256.5 374.9C256.3 372.2 255.4 364.1 255.0 358.9C254.6 353.7 254.7 348.2 254.3 343.9C253.9 339.5 253.3 336.3 252.8 332.8C252.3 329.3 251.8 326.1 251.1 322.8C250.4 319.4 249.8 315.9 248.7 312.7C247.5 309.4 246.5 306.7 244.2 303.5C241.8 300.3 238.4 296.1 234.6 293.4C230.9 290.7 226.3 288.7 221.8 287.1C217.4 285.5 210.3 284.5 208.0 284.0L207.7 285.0C210.0 285.6 217.1 286.7 221.4 288.3C225.7 289.9 230.2 291.9 233.8 294.6C237.3 297.3 240.6 301.4 242.7 304.5C244.9 307.6 245.7 310.2 246.7 313.3C247.7 316.5 248.1 319.9 248.7 323.2C249.3 326.5 249.8 329.7 250.3 333.2C250.8 336.7 251.3 339.8 251.6 344.1C252.0 348.4 251.9 353.9 252.3 359.1C252.7 364.3 253.6 372.5 253.8 375.1Z" fill="#9a5c28" fill-opacity=".7"/><path d="M210.9 485.4q-1.7 -3.4 0.5 -8.8M205.0 451.3q-1.7 -4.7 0.7 -5.7M229.6 512.0q1.8 -3.3 0.6 -5.1M275.5 526.5q-1.4 -4.6 0.2 -5.7M239.9 506.5q-0.5 -3.4 -0.7 -8.8M244.3 504.8q-0.7 -3.2 0.8 -7.8M239.7 408.1q0.3 -3.4 2.5 -6.1M249.0 496.5q-0.3 -2.7 -0.4 -7.0M263.0 532.2q0.3 -2.4 0.3 -6.2M221.4 438.1q1.4 -2.2 0.9 -6.3M259.1 522.9q2.0 -2.5 0.1 -7.5M217.0 423.3q-1.3 -4.6 -0.8 -5.9M230.8 509.3q1.5 -4.8 0.8 -6.8M253.4 397.3q-0.9 -3.8 0.4 -5.5M249.0 378.3q-1.1 -4.3 0.9 -6.6M209.0 490.4q-0.5 -3.3 2.8 -6.2M216.9 462.0q-1.8 -2.3 2.1 -5.5M234.8 408.0q-1.6 -3.1 -0.8 -8.7M221.0 499.6q-1.8 -5.0 -0.4 -8.6M204.2 476.6q0.5 -4.6 0.0 -7.6M207.2 477.6q2.0 -3.6 0.9 -8.7M238.6 517.3q1.3 -4.5 -0.9 -5.2M207.2 454.0q-1.9 -3.4 2.9 -5.5M220.9 424.3q-1.3 -2.7 1.1 -5.9M213.5 488.1q1.9 -2.4 2.2 -5.7M226.2 417.0q-0.6 -4.9 -0.9 -7.9M237.2 503.7q-0.2 -2.2 3.0 -5.2M210.3 471.4q-1.2 -4.4 1.5 -5.4M242.3 402.7q1.2 -4.7 1.6 -5.4M240.5 411.2q-1.3 -2.6 0.3 -5.8M252.5 381.3q1.8 -2.8 -0.3 -8.5M263.0 518.2q-1.4 -2.5 2.9 -6.4M225.3 483.8q-1.9 -2.1 1.6 -6.9M247.7 396.2q1.3 -4.4 0.0 -7.8M232.9 494.2q-0.3 -4.6 2.6 -7.6M217.7 474.6q-0.3 -2.2 1.0 -6.9M204.6 451.1q-1.3 -5.0 2.2 -8.3M219.2 462.1q-0.7 -3.4 1.2 -5.9M251.0 517.7q-0.9 -2.7 1.0 -6.8M237.2 421.5q0.5 -3.5 1.0 -6.2M216.5 468.8q1.8 -2.9 2.5 -5.2M231.8 502.2q1.4 -4.6 -0.5 -7.2M232.7 514.7q0.7 -2.6 2.6 -8.4M233.2 415.9q1.5 -2.1 -0.1 -5.2M218.5 484.1q1.3 -4.5 0.7 -6.9M212.5 481.9q0.9 -4.9 1.2 -7.2M241.0 530.5q0.0 -4.8 2.9 -5.8M248.4 379.3q-1.8 -2.7 0.1 -8.5M226.1 478.2q-1.0 -4.6 2.7 -6.7M218.1 419.0q0.8 -3.7 -0.7 -5.2M225.2 436.1q1.4 -4.8 2.5 -7.2M225.4 493.4q-0.9 -4.6 1.1 -8.0M228.2 514.2q-1.2 -4.1 0.2 -6.0M229.3 492.4q-0.6 -4.9 0.0 -8.9M231.4 415.6q-0.1 -2.2 -0.6 -5.7M215.5 472.6q-0.4 -3.5 1.8 -5.1M235.5 494.1q0.5 -3.8 0.4 -8.8M222.1 512.5q-1.0 -4.5 -0.7 -5.6M245.2 399.1q-1.0 -4.1 0.8 -8.4M209.6 470.9q1.9 -3.4 -0.0 -5.1M218.3 480.0q-0.5 -3.6 1.0 -8.2M204.3 448.8q-1.6 -3.8 -0.8 -8.9M213.8 485.5q0.1 -2.7 1.6 -6.1M240.9 398.3q1.9 -4.6 1.9 -6.4M274.0 533.7q0.5 -2.8 2.2 -8.4M214.6 462.4q1.2 -2.5 1.3 -5.4M228.1 426.7q-1.9 -4.6 0.4 -8.6M243.5 402.8q0.5 -3.0 1.0 -9.0M240.4 411.5q0.1 -3.0 -0.7 -6.1M211.9 489.2q0.9 -4.4 2.0 -5.1M212.1 456.5q0.7 -2.7 1.5 -6.4M227.4 516.6q1.0 -4.1 1.3 -9.0M234.3 521.9q0.8 -3.0 0.2 -6.9M214.8 463.6q1.6 -4.4 2.9 -5.3M249.3 532.8q1.9 -3.7 0.1 -8.2M249.9 383.2q-1.4 -3.4 2.8 -8.5M236.7 414.6q0.8 -4.3 2.6 -7.1M219.5 528.9q-0.2 -4.1 -0.4 -7.6M235.8 485.8q1.0 -2.5 -0.5 -5.3M237.0 419.5q-0.5 -3.8 3.0 -6.6M216.7 474.8q-1.8 -4.7 2.3 -7.9M244.9 388.4q0.0 -4.4 0.5 -5.2M253.3 394.5q1.7 -2.2 1.2 -6.1M267.2 528.4q1.0 -3.1 0.1 -8.8M243.1 390.5q-0.6 -4.1 2.0 -5.1M235.7 495.4q0.2 -3.8 -0.3 -8.4M254.5 507.4q-1.1 -2.3 3.0 -7.2M228.1 505.4q-0.6 -4.7 -0.0 -8.0M223.1 455.6q-0.3 -3.8 1.1 -7.5M207.7 479.8q1.9 -4.6 1.0 -6.5M238.2 396.8q-1.0 -3.8 0.8 -5.2M248.4 397.0q-1.9 -2.9 2.6 -7.1M207.1 440.5q1.7 -2.5 2.4 -5.1M213.3 488.2q0.1 -3.0 2.8 -6.1M229.3 430.1q0.2 -4.9 2.1 -8.1M250.8 390.1q-1.5 -4.2 1.5 -6.2M223.0 519.6q0.3 -3.8 -0.1 -6.6M239.0 528.5q1.8 -3.1 2.5 -7.1M224.8 507.8q0.8 -4.1 -0.9 -7.0M223.6 424.5q0.7 -2.2 -0.1 -8.9M220.6 488.9q-1.2 -2.6 2.0 -7.0M257.4 505.7q1.3 -4.3 -0.1 -6.0M239.9 493.0q-1.3 -4.3 0.7 -6.3M249.0 380.9q-1.1 -2.1 -0.4 -8.8M241.5 525.0q1.5 -2.8 3.0 -5.3M212.1 489.2q1.0 -4.9 1.7 -7.5M213.7 472.2q-2.0 -4.2 0.4 -5.2M265.9 511.4q-0.6 -2.5 2.3 -7.3M250.3 527.5q1.7 -4.4 0.5 -5.4M246.2 532.7q1.1 -4.9 -0.9 -8.7" fill="none" stroke="#3a1e0a" stroke-width=".9" stroke-opacity=".7"/><path d="M250.8 348.1C249.2 346.7 245.1 341.8 241.2 339.5C237.3 337.2 232.0 335.6 227.5 334.3C222.9 333.0 218.4 332.1 213.9 331.7C209.4 331.4 205.0 332.3 200.6 332.0C196.3 331.6 192.0 330.5 187.7 329.7C183.3 328.9 178.8 327.8 174.4 327.2C169.9 326.6 165.1 325.2 160.8 326.1C156.5 326.9 151.9 329.6 148.5 332.4C145.1 335.2 141.9 340.9 140.5 342.6L141.5 343.4C142.8 341.7 146.2 336.2 149.5 333.6C152.8 331.0 157.1 328.6 161.2 327.9C165.3 327.3 169.7 328.7 174.0 329.4C178.4 330.2 182.8 331.4 187.1 332.3C191.5 333.3 196.0 334.6 200.4 335.0C204.7 335.5 209.2 334.7 213.5 335.3C217.8 335.8 222.1 336.8 226.3 338.1C230.5 339.5 235.3 341.0 238.8 343.3C242.3 345.6 245.8 350.5 247.2 351.9ZM177.7 326.3C175.3 325.7 168.3 323.7 163.1 322.4C158.0 321.1 152.4 318.5 147.0 318.5C141.6 318.5 135.8 319.9 130.8 322.6C125.8 325.3 119.1 332.7 116.8 334.7L117.2 335.3C119.6 333.3 126.2 326.0 131.2 323.4C136.2 320.7 141.7 319.5 147.0 319.5C152.3 319.5 157.8 322.2 162.9 323.6C167.9 324.9 174.9 327.0 177.3 327.7ZM196.0 330.4C194.4 328.5 189.2 322.7 186.4 318.7C183.6 314.8 181.8 310.3 179.3 306.8C176.8 303.3 172.6 299.3 171.2 297.8L170.8 298.2C172.1 299.7 176.2 303.7 178.7 307.2C181.2 310.7 182.9 315.3 185.6 319.3C188.3 323.3 193.5 329.2 195.0 331.2ZM159.3 330.3C157.5 331.0 152.5 332.2 148.8 334.6C145.0 337.0 140.4 341.0 136.7 344.7C133.1 348.4 128.4 354.8 126.8 356.8L127.2 357.2C128.9 355.2 133.6 348.9 137.3 345.3C140.9 341.6 145.5 337.7 149.2 335.4C153.0 333.1 158.0 332.0 159.7 331.3ZM220.1 286.8C218.9 287.6 215.2 289.9 212.6 291.3C210.1 292.7 207.2 294.2 204.7 295.4C202.3 296.6 199.0 298.0 197.8 298.5L198.2 299.5C199.4 299.0 202.7 297.7 205.3 296.6C207.8 295.5 210.7 294.0 213.4 292.7C216.0 291.4 219.8 289.3 221.1 288.6ZM178.1 262.3C177.0 260.0 173.9 253.3 171.5 248.8C169.0 244.2 166.0 238.2 163.3 234.8C160.6 231.3 156.6 228.9 155.2 227.8L154.8 228.2C156.1 229.4 160.1 231.7 162.7 235.2C165.3 238.8 168.2 244.6 170.5 249.2C172.9 253.9 175.8 260.6 176.9 262.9ZM196.2 282.3C195.8 279.9 195.0 273.1 193.6 267.8C192.1 262.6 189.5 256.3 187.5 250.8C185.4 245.3 183.7 239.8 181.4 234.8C179.0 229.8 174.6 223.2 173.3 220.9L172.7 221.1C174.1 223.5 178.3 230.2 180.6 235.2C182.9 240.2 184.6 245.7 186.5 251.2C188.5 256.7 191.0 262.9 192.4 268.2C193.8 273.4 194.4 280.1 194.8 282.5ZM185.4 273.4C188.1 270.4 197.4 261.0 201.4 255.3C205.4 249.6 207.3 244.2 209.3 239.1C211.3 234.1 212.6 227.4 213.2 225.1L212.8 224.9C212.1 227.3 210.7 233.9 208.7 238.9C206.7 243.8 204.6 249.1 200.6 254.7C196.6 260.4 187.2 269.6 184.6 272.6ZM159.3 258.5C157.1 259.2 150.6 260.6 145.8 262.6C141.1 264.6 135.7 268.0 130.8 270.7C126.0 273.4 119.2 277.4 116.9 278.8L117.1 279.2C119.5 277.9 126.3 273.9 131.2 271.3C136.0 268.7 141.4 265.4 146.2 263.4C150.9 261.4 157.4 260.2 159.7 259.5ZM145.3 254.6C143.3 253.0 137.2 247.0 133.2 244.7C129.2 242.3 125.4 241.0 121.0 240.7C116.7 240.4 109.3 242.4 107.0 242.8L107.0 243.2C109.4 242.9 116.7 241.0 121.0 241.3C125.3 241.7 128.8 243.0 132.8 245.3C136.8 247.7 142.7 253.7 144.7 255.4ZM294.1 321.4C295.2 320.1 298.1 315.8 300.4 313.4C302.7 311.0 305.3 309.3 307.9 307.1C310.5 304.9 313.0 302.4 315.9 300.3C318.8 298.2 322.5 295.8 325.4 294.3C328.3 292.8 330.7 291.8 333.3 291.2C335.8 290.6 337.8 290.5 340.9 290.6C344.0 290.7 348.0 291.4 351.9 291.9C355.7 292.5 362.1 293.5 364.2 293.8L364.4 292.2C362.4 291.9 356.0 290.7 352.1 290.1C348.2 289.4 344.3 288.6 341.1 288.4C337.8 288.2 335.6 288.2 332.7 288.8C329.9 289.3 327.3 290.2 324.2 291.7C321.1 293.2 317.2 295.6 314.1 297.7C311.0 299.8 308.4 302.2 305.7 304.3C302.9 306.5 300.1 308.2 297.6 310.6C295.1 313.0 291.8 317.2 290.7 318.6ZM342.2 289.6C342.3 287.7 342.7 282.0 342.9 278.1C343.1 274.1 343.2 270.2 343.4 266.1C343.7 261.9 344.9 257.5 344.6 253.0C344.2 248.4 341.9 241.3 341.4 238.9L340.6 239.1C341.1 241.4 343.2 248.6 343.4 253.0C343.7 257.5 342.4 261.8 342.0 265.9C341.6 270.1 341.4 274.0 341.1 277.9C340.7 281.8 340.0 287.5 339.8 289.4ZM343.2 265.6C341.5 263.8 336.3 258.2 333.3 254.7C330.4 251.2 328.3 248.1 325.3 244.8C322.2 241.5 316.9 236.5 315.2 234.8L314.8 235.2C316.5 236.9 321.8 241.9 324.7 245.2C327.7 248.6 329.7 251.8 332.7 255.3C335.6 258.8 340.7 264.5 342.2 266.4ZM344.5 253.4C346.0 251.3 350.6 245.3 353.4 241.3C356.2 237.2 359.3 232.9 361.3 229.2C363.3 225.5 364.6 220.8 365.2 219.1L364.8 218.9C364.1 220.6 362.7 225.2 360.7 228.8C358.7 232.5 355.5 236.8 352.6 240.7C349.8 244.7 345.0 250.7 343.5 252.6ZM364.8 293.7C366.0 292.8 369.0 290.1 371.9 288.4C374.8 286.6 378.7 284.6 382.2 283.1C385.8 281.6 389.3 280.3 393.1 279.3C396.9 278.4 400.9 277.8 405.0 277.5C409.2 277.1 413.4 278.1 418.1 277.4C422.7 276.7 430.6 274.0 433.1 273.3L432.9 272.7C430.4 273.4 422.6 276.0 417.9 276.6C413.3 277.3 409.1 276.3 405.0 276.5C400.8 276.8 396.7 277.4 392.9 278.3C389.0 279.2 385.4 280.4 381.8 281.9C378.1 283.4 374.1 285.3 371.1 287.0C368.1 288.8 365.0 291.4 363.8 292.3ZM393.4 279.0C394.4 277.1 397.0 270.8 399.3 267.2C401.6 263.6 404.2 259.9 407.2 257.2C410.2 254.6 415.5 252.2 417.1 251.2L416.9 250.8C415.2 251.8 409.8 254.1 406.8 256.8C403.8 259.4 401.0 263.2 398.7 266.8C396.3 270.4 393.6 276.6 392.6 278.6ZM382.5 282.5C382.3 280.2 382.2 273.2 381.3 268.9C380.5 264.7 377.9 258.9 377.2 256.9L376.8 257.1C377.4 259.1 379.9 264.8 380.7 269.1C381.4 273.3 381.4 280.3 381.5 282.5ZM417.8 277.4C419.7 278.1 425.0 280.0 428.9 281.3C432.7 282.7 437.3 285.0 441.0 285.3C444.7 285.6 449.4 283.6 451.0 283.2L451.0 282.8C449.3 283.1 444.7 285.0 441.0 284.7C437.4 284.3 432.9 282.0 429.1 280.7C425.3 279.3 420.0 277.3 418.2 276.6ZM342.4 295.7C344.1 296.5 349.2 298.8 352.7 300.6C356.3 302.3 360.0 304.1 363.7 306.2C367.4 308.3 371.1 311.1 374.7 313.4C378.4 315.8 381.7 318.2 385.6 320.4C389.4 322.6 393.6 324.6 397.8 326.4C402.1 328.2 407.3 331.0 411.0 331.2C414.7 331.3 418.6 327.9 420.1 327.3L419.9 326.7C418.4 327.3 414.6 330.6 411.0 330.4C407.4 330.3 402.3 327.4 398.2 325.6C394.0 323.8 389.8 321.8 386.0 319.6C382.2 317.4 378.9 315.0 375.3 312.6C371.7 310.2 368.0 307.4 364.3 305.2C360.6 303.0 356.8 301.2 353.3 299.4C349.7 297.6 344.7 295.2 343.0 294.3ZM238.9 201.5C238.9 199.4 239.1 193.2 238.9 189.0C238.8 184.7 238.6 180.3 237.7 176.2C236.9 172.2 235.3 168.3 233.7 164.7C232.2 161.1 230.1 157.8 228.4 154.5C226.7 151.2 225.0 148.4 223.5 144.8C221.9 141.2 220.0 134.9 219.3 132.9L218.7 133.1C219.3 135.1 221.1 141.5 222.5 145.2C224.0 148.8 225.6 151.7 227.2 155.1C228.8 158.4 230.8 161.7 232.3 165.3C233.7 168.9 235.1 172.6 235.9 176.6C236.6 180.5 236.6 184.9 236.7 189.0C236.7 193.2 236.2 199.4 236.1 201.5ZM237.4 176.7C238.4 174.8 241.1 168.9 243.4 165.3C245.7 161.7 249.3 158.5 251.3 155.2C253.3 151.8 254.6 146.8 255.2 145.1L254.8 144.9C254.1 146.6 252.7 151.5 250.7 154.8C248.7 158.1 245.0 161.2 242.6 164.7C240.2 168.3 237.3 174.2 236.2 176.1ZM228.1 154.3C226.6 153.4 222.4 150.2 219.2 148.6C216.0 147.0 212.4 145.3 209.1 144.7C205.7 144.0 200.7 144.7 199.0 144.8L199.0 145.2C200.7 145.3 205.6 144.6 208.9 145.3C212.2 146.0 215.7 147.7 218.8 149.4C221.9 151.0 226.0 154.3 227.5 155.3ZM233.4 165.2C234.8 162.9 239.4 155.9 241.4 151.2C243.3 146.5 244.7 141.4 245.3 137.0C246.0 132.7 245.3 127.0 245.2 125.0L244.8 125.0C244.7 127.0 245.4 132.6 244.7 137.0C244.0 141.3 242.7 146.2 240.6 150.8C238.6 155.5 233.9 162.4 232.6 164.8ZM238.3 200.7C236.9 199.2 232.6 194.6 229.7 192.2C226.8 189.8 224.4 188.0 221.0 186.2C217.6 184.4 212.9 182.4 209.3 181.2C205.6 180.1 202.0 179.1 199.0 179.3C195.9 179.5 193.1 181.2 190.7 182.4C188.3 183.6 187.2 186.0 184.6 186.5C182.0 187.0 178.2 186.2 175.1 185.6C172.0 184.9 167.6 183.2 166.1 182.7L165.9 183.3C167.4 183.8 171.8 185.7 174.9 186.4C178.1 187.1 182.1 188.0 184.8 187.5C187.5 187.0 188.9 184.7 191.3 183.6C193.6 182.4 196.1 180.8 199.0 180.7C202.0 180.6 205.2 181.6 208.7 182.8C212.3 184.0 216.9 186.0 220.2 187.8C223.4 189.6 225.6 191.4 228.3 193.8C231.1 196.2 235.3 200.9 236.7 202.3ZM199.5 179.7C198.4 178.2 195.7 173.2 193.3 170.7C190.9 168.2 188.2 166.0 185.1 164.7C182.1 163.4 176.7 163.1 175.0 162.8L175.0 163.2C176.6 163.6 181.9 164.0 184.9 165.3C187.8 166.6 190.4 168.8 192.7 171.3C195.0 173.8 197.6 178.8 198.5 180.3ZM209.5 181.9C209.2 180.1 208.8 174.4 207.4 170.8C206.0 167.3 203.0 164.2 201.3 160.9C199.6 157.5 197.9 152.6 197.2 150.9L196.8 151.1C197.4 152.8 199.1 157.8 200.7 161.1C202.3 164.5 205.3 167.7 206.6 171.2C207.9 174.6 208.1 180.3 208.5 182.1ZM184.4 186.6C183.2 187.7 179.8 191.0 176.8 192.7C173.9 194.4 168.6 196.1 166.9 196.8L167.1 197.2C168.8 196.6 174.2 194.9 177.2 193.3C180.1 191.6 183.7 188.3 185.0 187.4ZM239.5 224.4C240.6 223.7 243.7 221.6 245.8 220.2C247.8 218.8 249.7 217.7 251.8 216.0C253.9 214.4 256.1 212.1 258.2 210.4C260.3 208.7 261.6 207.8 264.3 205.8C267.0 203.9 270.9 201.1 274.5 198.7C278.0 196.3 282.6 193.8 285.6 191.4C288.7 188.9 291.6 185.2 292.8 184.0L292.0 183.2C290.8 184.4 287.8 187.9 284.8 190.2C281.7 192.6 277.1 195.0 273.5 197.3C269.9 199.6 265.9 202.3 263.1 204.2C260.3 206.1 258.9 207.0 256.8 208.6C254.6 210.2 252.3 212.4 250.2 214.0C248.1 215.5 246.3 216.5 244.2 217.8C242.1 219.0 238.8 220.9 237.7 221.6ZM293.0 183.7C293.4 182.0 295.4 176.5 295.5 173.0C295.5 169.5 294.4 165.9 293.3 162.9C292.3 159.9 289.9 156.2 289.2 154.9L288.8 155.1C289.4 156.4 291.7 160.1 292.7 163.1C293.6 166.1 294.7 169.6 294.5 173.0C294.4 176.4 292.3 181.7 291.8 183.5ZM285.7 190.5C284.6 188.9 281.1 184.1 279.4 180.8C277.7 177.5 276.0 174.2 275.3 170.9C274.6 167.6 275.3 162.7 275.2 161.0L274.8 161.0C274.7 162.7 274.0 167.7 274.7 171.1C275.3 174.4 276.9 177.9 278.6 181.2C280.3 184.5 283.7 189.4 284.7 191.1ZM264.0 206.2C265.2 205.8 267.7 204.6 271.2 204.0C274.7 203.4 280.3 202.8 285.0 202.5C289.8 202.2 294.8 202.4 299.6 202.3C304.4 202.1 309.2 201.7 314.0 201.7C318.8 201.6 323.5 201.7 328.4 202.0C333.2 202.4 338.2 203.1 342.9 203.9C347.7 204.8 354.6 206.8 356.9 207.3L357.1 206.7C354.8 206.1 347.9 204.0 343.1 203.1C338.3 202.1 333.3 201.4 328.4 201.0C323.6 200.5 318.8 200.4 314.0 200.3C309.2 200.3 304.4 200.7 299.6 200.7C294.7 200.8 289.7 200.5 285.0 200.7C280.2 200.9 274.4 201.5 270.8 202.0C267.2 202.5 264.6 203.5 263.4 203.8ZM300.1 201.9C301.2 200.3 304.2 195.4 306.4 192.3C308.6 189.2 310.8 186.1 313.3 183.3C315.8 180.4 318.9 178.2 321.3 175.2C323.6 172.2 326.2 166.8 327.2 165.1L326.8 164.9C325.8 166.5 323.1 171.8 320.7 174.8C318.4 177.8 315.2 179.9 312.7 182.7C310.2 185.5 307.9 188.6 305.6 191.7C303.3 194.8 300.1 199.6 299.1 201.1ZM328.9 201.8C329.9 200.0 332.9 194.3 335.3 191.3C337.7 188.2 340.2 185.3 343.2 183.3C346.1 181.3 351.4 179.9 353.1 179.2L352.9 178.8C351.2 179.4 345.9 180.7 342.8 182.7C339.8 184.7 337.1 187.7 334.7 190.7C332.2 193.8 329.1 199.5 327.9 201.2ZM314.4 201.3C315.6 199.2 318.5 192.6 321.3 189.2C324.1 185.9 329.5 182.5 331.2 181.2L330.8 180.8C329.2 182.1 323.6 185.4 320.7 188.8C317.8 192.1 314.8 198.8 313.6 200.7ZM343.2 203.9C344.9 202.8 349.5 199.1 353.2 197.3C356.8 195.6 361.4 194.0 365.1 193.3C368.7 192.6 373.3 193.3 375.0 193.2L375.0 192.8C373.3 192.7 368.6 192.0 364.9 192.7C361.3 193.4 356.5 194.9 352.8 196.7C349.1 198.4 344.4 202.0 342.8 203.1ZM237.8 183.0C237.6 179.4 237.1 167.3 236.3 161.9C235.6 156.5 234.3 154.0 233.3 150.4C232.3 146.8 231.2 143.2 230.3 140.3C229.4 137.4 228.5 134.1 228.1 132.9L227.5 133.1C227.8 134.3 228.7 137.6 229.5 140.5C230.3 143.4 231.4 147.0 232.3 150.6C233.2 154.2 234.4 156.7 235.1 162.1C235.7 167.5 236.0 179.6 236.2 183.0ZM236.2 161.9C235.4 159.4 232.6 151.2 231.4 146.9C230.2 142.6 230.0 139.2 228.8 135.9C227.6 132.6 225.0 128.4 224.2 126.9L223.8 127.1C224.5 128.6 227.1 132.8 228.2 136.1C229.3 139.4 229.4 142.8 230.6 147.1C231.8 151.4 234.5 159.6 235.2 162.1ZM236.2 162.1C236.9 158.5 238.7 145.8 240.3 140.5C242.0 135.2 245.0 132.2 245.9 130.5L245.5 130.3C244.5 131.9 241.4 135.0 239.7 140.3C237.9 145.6 236.0 158.3 235.2 161.9ZM237.4 173.2C238.4 171.2 241.4 164.9 243.4 161.2C245.3 157.4 247.0 153.4 248.9 150.7C250.7 148.0 253.5 146.1 254.5 145.2L254.1 144.8C253.2 145.7 250.3 147.6 248.3 150.3C246.4 153.0 244.6 157.1 242.6 160.8C240.7 164.6 237.6 170.8 236.6 172.8ZM219.0 184.8C218.2 182.9 215.7 177.2 214.5 173.4C213.2 169.5 212.8 165.7 211.6 161.9C210.4 158.1 208.9 154.7 207.2 150.4C205.5 146.1 202.4 138.3 201.4 135.9L201.0 136.1C201.9 138.5 205.0 146.3 206.6 150.6C208.2 155.0 209.7 158.3 210.8 162.1C212.0 166.0 212.4 169.8 213.5 173.6C214.7 177.5 217.1 183.3 217.8 185.2ZM207.3 180.3C206.3 179.1 203.4 174.9 201.5 173.2C199.5 171.5 197.9 171.0 195.5 170.3C193.1 169.6 188.5 169.0 187.0 168.8L187.0 169.2C188.3 169.5 193.0 170.1 195.3 170.9C197.6 171.7 199.1 172.1 200.9 173.8C202.8 175.5 205.6 179.7 206.5 180.9ZM245.9 194.1C247.3 193.6 253.3 193.4 254.7 190.9C256.0 188.4 254.2 183.0 254.0 179.2C253.7 175.3 252.7 171.1 253.2 167.8C253.7 164.4 256.6 160.5 257.2 159.1L256.8 158.9C256.1 160.4 253.2 164.3 252.6 167.6C252.0 171.0 253.0 175.4 253.2 179.2C253.4 183.0 255.2 188.2 253.9 190.5C252.6 192.8 246.9 192.6 245.5 193.1ZM263.5 183.7C264.1 181.9 266.0 176.2 267.4 173.2C268.8 170.1 269.9 167.5 271.8 165.2C273.8 162.9 277.8 160.2 279.0 159.2L278.6 158.8C277.4 159.8 273.4 162.5 271.4 164.8C269.4 167.1 268.1 169.7 266.6 172.8C265.2 175.9 263.2 181.6 262.5 183.3ZM251.7 405.9C253.0 405.3 257.0 403.5 259.5 402.7C262.0 401.8 263.9 402.1 267.0 400.9C270.0 399.6 274.8 397.4 277.8 395.1C280.9 392.9 282.7 388.0 285.2 387.2C287.7 386.4 290.7 390.3 292.9 390.1C295.1 389.9 295.7 386.9 298.3 385.9C301.0 385.0 305.3 385.3 308.8 384.4C312.3 383.5 315.9 382.1 319.3 380.6C322.7 379.2 325.9 377.1 329.2 375.5C332.6 374.0 337.5 372.1 339.2 371.4L338.8 370.6C337.2 371.2 332.1 373.0 328.8 374.5C325.4 375.9 322.1 378.0 318.7 379.4C315.3 380.7 311.9 382.0 308.4 382.8C304.9 383.6 300.3 383.2 297.7 384.1C295.1 384.9 294.9 387.8 292.7 387.9C290.5 388.0 287.2 384.0 284.4 384.8C281.7 385.6 279.3 390.7 276.2 392.9C273.1 395.1 268.8 396.9 265.8 397.9C262.9 399.0 261.1 398.6 258.5 399.3C255.9 400.0 251.7 401.7 250.3 402.1ZM276.5 395.1C278.2 395.9 283.5 399.0 287.1 400.3C290.8 401.6 294.6 403.8 298.2 402.8C301.8 401.9 305.5 396.8 309.0 394.6C312.4 392.4 315.5 388.7 318.9 389.6C322.2 390.4 326.0 397.1 329.3 399.8C332.6 402.4 337.2 404.4 338.8 405.3L339.2 404.7C337.6 403.8 333.2 401.7 329.9 399.0C326.6 396.3 322.8 389.4 319.1 388.4C315.5 387.5 311.8 391.3 308.2 393.4C304.7 395.5 301.2 400.3 297.8 401.2C294.4 402.0 291.2 399.8 287.9 398.5C284.5 397.1 279.3 393.9 277.5 392.9ZM314.4 384.3C315.5 382.8 318.8 378.1 321.3 375.3C323.8 372.4 326.2 369.6 329.2 367.3C332.2 364.9 337.5 362.2 339.1 361.2L338.9 360.8C337.2 361.8 331.8 364.4 328.8 366.7C325.8 369.1 323.2 371.9 320.7 374.7C318.2 377.6 314.8 382.2 313.6 383.7ZM325.8 395.5C327.7 396.1 333.0 397.7 336.8 399.4C340.7 401.0 345.2 403.0 348.8 405.3C352.5 407.6 357.2 411.9 358.8 413.2L359.2 412.8C357.5 411.5 352.8 407.1 349.2 404.7C345.5 402.4 341.0 400.3 337.2 398.6C333.3 396.9 328.0 395.2 326.2 394.5ZM339.0 373.4C341.0 373.4 347.0 372.7 350.9 373.4C354.9 374.0 359.2 375.3 362.9 377.3C366.5 379.2 371.2 383.9 372.8 385.2L373.2 384.8C371.5 383.5 366.8 378.8 363.1 376.7C359.5 374.7 355.1 373.3 351.1 372.6C347.0 371.9 341.0 372.6 339.0 372.6ZM327.4 378.2C328.1 376.3 329.7 370.6 331.3 367.1C332.9 363.6 336.2 358.8 337.2 357.1L336.8 356.9C335.8 358.5 332.4 363.4 330.7 366.9C329.0 370.4 327.3 376.0 326.6 377.8Z" fill="#4a2208"/><path d="M281.7 137.0C279.9 138.2 272.3 141.5 270.6 144.2C268.9 146.8 272.7 150.3 271.6 153.1C270.5 155.8 267.8 159.2 264.0 160.5C260.2 161.7 253.1 160.4 248.6 160.7C244.1 161.0 241.1 161.0 236.9 162.3C232.7 163.5 227.9 168.1 223.7 168.2C219.5 168.3 215.0 165.0 211.7 163.0C208.4 161.0 207.4 157.9 203.9 156.2C200.5 154.5 193.0 154.9 190.8 152.9C188.5 150.9 190.8 146.9 190.6 144.3C190.4 141.6 188.8 139.3 189.5 137.0C190.2 134.7 194.8 133.2 194.9 130.5C195.0 127.8 189.8 123.7 190.3 120.9C190.8 118.1 194.3 115.1 197.8 113.4C201.4 111.8 207.3 112.1 211.6 110.9C215.9 109.6 219.6 105.4 223.7 105.9C227.9 106.4 232.4 112.5 236.4 113.9C240.4 115.3 244.1 113.7 248.0 114.1C251.9 114.5 255.7 115.4 260.1 116.4C264.4 117.3 270.8 118.0 274.1 119.9C277.5 121.9 278.9 125.3 280.1 128.1C281.4 131.0 281.5 135.5 281.7 137.0ZM314.3 155.0C313.2 156.0 309.4 159.0 307.8 160.9C306.3 162.8 306.3 164.8 304.9 166.5C303.6 168.2 301.7 169.9 299.6 171.1C297.5 172.3 294.7 172.2 292.4 173.8C290.2 175.4 288.6 180.0 285.9 180.8C283.3 181.6 279.3 179.5 276.5 178.6C273.6 177.6 271.4 176.0 268.9 174.9C266.3 173.8 264.4 172.9 261.4 172.0C258.4 171.1 252.5 171.3 250.9 169.5C249.2 167.8 250.9 164.0 251.2 161.6C251.5 159.1 253.2 157.3 252.7 155.0C252.2 152.7 248.2 150.0 248.4 147.8C248.5 145.6 252.1 144.0 253.7 141.8C255.2 139.6 254.9 135.6 257.5 134.7C260.2 133.8 266.6 137.0 269.8 136.6C273.0 136.2 273.9 133.4 276.6 132.2C279.3 131.1 282.8 129.8 285.9 129.7C289.0 129.6 292.2 130.7 295.3 131.6C298.3 132.5 302.6 133.0 304.0 135.1C305.3 137.2 302.4 142.0 303.2 144.3C304.0 146.6 306.9 147.1 308.7 148.9C310.6 150.7 313.4 154.0 314.3 155.0ZM194.2 166.0C194.1 167.1 193.6 170.0 193.5 172.4C193.4 174.7 194.6 177.7 193.7 180.0C192.7 182.3 190.8 185.3 187.8 186.3C184.8 187.4 179.4 186.1 176.0 186.2C172.6 186.3 170.2 186.0 167.2 186.8C164.2 187.5 160.8 190.9 158.0 190.7C155.3 190.4 152.9 186.8 150.7 185.1C148.5 183.5 148.1 181.6 145.0 180.8C141.9 179.9 134.1 181.6 132.0 180.2C129.9 178.8 133.2 174.7 132.4 172.4C131.6 170.0 126.9 168.1 127.0 166.0C127.0 163.9 131.7 162.0 132.6 159.7C133.4 157.3 130.6 153.7 132.1 151.9C133.7 150.1 138.7 149.5 141.9 148.7C145.0 147.9 148.0 147.5 150.9 147.2C153.8 146.8 156.3 147.3 159.1 146.6C161.9 145.8 164.7 143.1 167.7 142.6C170.7 142.2 173.9 143.3 177.2 143.9C180.4 144.5 185.6 144.3 187.2 146.2C188.8 148.0 185.5 152.9 186.9 155.1C188.3 157.3 194.4 157.4 195.6 159.2C196.8 161.0 194.4 164.9 194.2 166.0ZM214.7 145.0C214.2 145.7 212.7 147.7 212.0 149.1C211.3 150.4 211.2 151.8 210.5 153.2C209.8 154.5 209.0 156.1 207.7 157.0C206.4 157.9 204.3 158.1 202.7 158.7C201.0 159.4 199.5 160.9 197.8 161.1C196.1 161.3 194.1 160.4 192.4 160.1C190.6 159.7 188.6 159.7 187.3 158.8C186.0 157.9 186.0 155.8 184.5 154.9C183.0 154.1 179.7 154.6 178.5 153.7C177.2 152.8 177.0 150.8 176.9 149.3C176.8 147.9 177.9 146.5 177.7 145.0C177.4 143.5 175.3 141.8 175.3 140.3C175.3 138.8 176.4 137.0 177.7 135.9C178.9 134.7 181.1 134.0 182.8 133.5C184.5 132.9 186.4 133.0 187.9 132.4C189.5 131.8 190.8 129.9 192.3 129.8C193.9 129.7 195.8 131.1 197.4 131.6C199.0 132.1 200.3 132.3 201.9 132.6C203.6 132.9 206.0 132.7 207.1 133.6C208.3 134.4 207.9 136.5 208.8 137.7C209.8 138.9 211.8 139.5 212.8 140.7C213.8 141.9 214.4 144.3 214.7 145.0ZM379.4 175.0C380.5 176.4 387.1 181.1 386.0 183.2C384.9 185.3 375.5 185.6 372.7 187.6C370.0 189.7 371.6 193.2 369.4 195.3C367.3 197.5 363.4 199.5 359.6 200.3C355.9 201.1 351.1 199.5 346.8 200.2C342.6 200.9 338.2 204.6 334.2 204.5C330.1 204.5 326.5 201.2 322.8 199.7C319.2 198.2 315.9 197.1 312.1 195.7C308.4 194.2 301.6 193.5 300.4 191.2C299.2 188.8 306.5 184.3 305.0 181.6C303.4 178.9 292.4 177.4 291.2 175.0C290.1 172.6 295.6 169.5 298.0 167.2C300.5 164.9 304.0 163.4 306.1 161.1C308.1 158.7 307.1 154.3 310.2 152.9C313.2 151.5 320.5 154.0 324.5 152.6C328.4 151.2 330.1 145.2 333.9 144.5C337.7 143.7 343.2 146.7 347.3 148.0C351.3 149.2 354.0 151.0 358.1 151.8C362.1 152.7 368.5 151.6 371.5 153.1C374.6 154.6 375.4 158.3 376.5 160.9C377.6 163.4 377.5 165.9 378.0 168.3C378.5 170.6 379.2 173.9 379.4 175.0ZM325.0 155.0C324.7 155.6 323.5 157.4 323.2 158.8C323.0 160.2 324.2 162.3 323.5 163.5C322.8 164.7 320.8 165.7 319.1 166.2C317.5 166.7 315.1 165.8 313.6 166.5C312.0 167.2 311.2 170.4 309.8 170.4C308.3 170.4 306.6 167.1 304.9 166.6C303.2 166.2 301.3 167.9 299.8 167.6C298.3 167.4 297.1 166.1 296.1 165.1C295.1 164.1 294.3 162.9 293.7 161.8C293.2 160.7 293.7 159.5 292.8 158.3C291.9 157.2 288.2 156.1 288.3 155.0C288.3 153.9 292.4 153.0 293.1 151.7C293.7 150.5 292.1 148.9 292.3 147.4C292.5 146.0 292.8 143.7 294.1 143.1C295.5 142.5 298.9 144.0 300.7 143.9C302.4 143.8 303.3 143.2 304.8 142.7C306.3 142.2 308.0 140.9 309.5 140.9C311.1 140.9 312.6 141.9 314.2 142.5C315.7 143.0 317.3 143.4 318.8 144.1C320.2 144.9 322.4 145.6 322.9 146.8C323.4 148.0 321.4 150.2 321.8 151.5C322.1 152.9 324.5 154.4 325.0 155.0ZM224.5 228.0C224.8 229.4 228.2 234.1 226.7 236.4C225.2 238.7 218.0 239.6 215.4 241.8C212.8 244.0 213.7 247.8 211.0 249.6C208.3 251.5 203.1 251.8 199.2 253.0C195.3 254.1 191.5 256.4 187.5 256.5C183.5 256.5 179.4 253.6 175.2 253.0C171.1 252.5 166.3 254.0 162.6 253.2C159.0 252.3 155.7 249.9 153.4 247.9C151.0 245.9 149.8 243.3 148.4 241.1C147.0 238.9 146.8 236.8 145.0 234.6C143.3 232.4 137.8 230.1 138.1 228.0C138.4 225.9 146.1 224.3 146.7 221.7C147.3 219.1 140.0 214.1 141.7 212.2C143.4 210.4 152.9 211.4 157.0 210.7C161.2 210.0 163.3 208.9 166.4 208.1C169.6 207.2 172.3 207.2 175.9 205.7C179.4 204.2 184.1 199.0 187.7 199.0C191.3 199.0 194.4 203.7 197.3 205.7C200.2 207.7 202.7 209.0 204.9 210.7C207.1 212.5 208.8 214.3 210.5 216.2C212.1 218.0 212.5 219.8 214.8 221.8C217.1 223.8 222.9 227.0 224.5 228.0ZM229.4 213.0C229.6 213.7 230.9 215.9 230.6 217.1C230.3 218.4 228.9 219.6 227.6 220.5C226.4 221.4 224.4 221.4 223.2 222.5C222.1 223.5 222.3 226.6 221.0 227.0C219.6 227.4 216.9 224.7 215.1 224.8C213.3 225.0 211.7 228.1 210.3 228.0C208.9 227.9 207.7 225.2 206.6 224.2C205.5 223.2 204.7 222.5 203.5 221.7C202.4 221.0 201.3 220.5 199.9 219.7C198.5 219.0 196.2 218.3 195.1 217.2C194.0 216.1 192.5 214.2 193.2 213.0C193.8 211.8 198.2 211.0 199.1 209.7C200.0 208.5 198.1 206.8 198.6 205.6C199.0 204.4 200.7 203.7 201.8 202.6C202.9 201.6 203.7 199.6 205.2 199.3C206.7 199.0 209.1 200.7 210.8 200.8C212.5 200.8 213.9 199.3 215.4 199.4C216.9 199.5 218.1 200.7 219.8 201.1C221.5 201.4 224.4 200.7 225.5 201.5C226.6 202.3 225.3 205.0 226.4 206.1C227.4 207.3 231.3 207.4 231.8 208.6C232.3 209.7 229.8 212.3 229.4 213.0ZM141.7 252.0C141.7 253.0 141.6 255.9 141.6 258.1C141.6 260.4 142.4 263.1 141.5 265.4C140.6 267.6 138.9 270.6 136.1 271.5C133.3 272.4 127.9 270.6 124.8 270.8C121.6 270.9 119.7 272.1 117.0 272.5C114.4 272.8 111.6 273.2 108.8 273.1C106.1 273.0 103.3 272.5 100.5 271.9C97.7 271.4 93.9 271.1 92.0 269.7C90.1 268.2 90.4 265.1 89.1 263.2C87.8 261.3 84.9 260.0 84.1 258.2C83.3 256.3 85.4 254.3 84.3 252.0C83.3 249.7 77.8 246.7 77.8 244.5C77.8 242.2 81.4 239.8 84.3 238.5C87.1 237.2 92.6 238.5 94.8 236.7C97.1 234.9 95.5 228.5 97.8 227.8C100.2 227.0 105.8 231.6 109.0 231.9C112.3 232.3 114.2 230.6 117.4 229.9C120.6 229.1 125.2 227.1 128.3 227.6C131.3 228.1 133.6 231.0 135.8 232.8C138.1 234.6 140.6 236.4 141.8 238.5C142.9 240.6 142.9 243.3 142.9 245.6C142.9 247.8 141.9 250.9 141.7 252.0ZM156.5 235.0C156.8 235.6 158.3 237.4 158.3 238.6C158.4 239.7 157.8 241.2 156.8 242.1C155.7 243.0 153.3 243.1 151.9 243.8C150.4 244.4 149.5 245.1 148.1 245.9C146.8 246.7 145.4 248.9 143.8 248.7C142.3 248.6 140.6 245.6 138.9 245.2C137.2 244.7 135.1 246.4 133.8 246.1C132.4 245.8 132.4 243.8 131.0 243.1C129.5 242.4 126.7 242.8 125.2 242.1C123.8 241.4 122.4 240.1 122.2 238.9C121.9 237.7 123.0 236.1 123.7 235.0C124.4 233.9 126.2 233.2 126.6 232.0C127.0 230.9 125.7 229.4 126.2 228.3C126.7 227.3 128.4 226.6 129.6 225.8C130.8 224.9 131.9 223.7 133.4 223.3C134.9 222.8 136.8 223.2 138.5 223.0C140.2 222.9 141.8 222.6 143.6 222.6C145.3 222.5 147.4 222.3 148.9 222.9C150.4 223.4 151.3 224.9 152.3 225.8C153.4 226.8 153.8 227.8 155.1 228.7C156.3 229.6 159.6 230.1 159.9 231.1C160.1 232.2 157.0 234.4 156.5 235.0ZM146.3 329.0C145.7 330.7 144.0 335.8 143.0 339.3C142.0 342.7 142.4 347.1 140.3 349.9C138.2 352.7 133.7 354.3 130.3 355.9C126.9 357.5 123.1 356.8 120.0 359.3C116.9 361.8 115.0 369.9 111.6 370.9C108.1 372.0 103.1 366.9 99.3 365.4C95.5 363.9 92.0 363.5 88.6 362.0C85.1 360.6 81.9 359.0 78.6 357.0C75.4 355.0 71.4 353.1 69.1 350.2C66.7 347.4 66.2 343.4 64.7 339.9C63.2 336.3 60.6 332.8 60.1 329.0C59.6 325.2 59.9 320.7 61.6 317.3C63.4 313.9 68.5 312.3 70.4 308.6C72.3 304.8 70.5 298.3 73.0 295.0C75.4 291.7 80.6 288.9 85.1 288.9C89.6 289.0 95.3 295.9 99.7 295.4C104.2 294.9 107.5 286.9 111.8 285.7C116.0 284.6 121.2 286.6 125.2 288.3C129.2 290.1 133.7 292.8 135.7 296.4C137.7 300.0 134.5 306.7 137.0 310.1C139.5 313.5 149.1 313.5 150.6 316.7C152.2 319.8 147.0 326.9 146.3 329.0ZM216.8 307.0C216.9 308.5 218.8 313.6 217.3 316.1C215.7 318.7 210.2 320.1 207.6 322.2C204.9 324.2 203.2 326.0 201.1 328.5C199.0 331.1 198.3 336.9 195.0 337.5C191.8 338.1 185.6 332.1 181.7 332.0C177.7 332.0 174.9 336.8 171.4 337.2C167.9 337.7 163.2 336.7 160.6 334.8C158.0 332.8 158.7 327.7 156.0 325.8C153.2 323.9 146.9 325.0 144.0 323.4C141.2 321.7 140.3 318.4 138.6 315.7C136.9 313.0 133.3 309.8 133.9 307.0C134.6 304.2 141.6 302.2 142.7 299.2C143.7 296.2 138.7 291.2 140.3 288.8C141.8 286.4 148.6 286.2 152.1 284.8C155.7 283.5 158.2 282.3 161.4 280.5C164.5 278.8 167.6 274.1 170.9 274.4C174.3 274.7 177.8 281.7 181.6 282.4C185.4 283.1 190.3 278.3 193.8 278.5C197.3 278.8 200.5 281.8 202.8 284.0C205.0 286.3 204.7 289.7 207.2 292.0C209.6 294.3 215.9 295.3 217.5 297.8C219.1 300.3 217.0 305.5 216.8 307.0ZM173.6 285.0C173.1 285.7 171.0 287.8 170.3 289.3C169.6 290.8 171.2 293.1 169.2 294.1C167.3 295.1 161.5 294.6 158.7 295.2C155.9 295.8 154.9 297.2 152.5 297.6C150.2 298.1 147.5 297.4 144.8 298.1C142.0 298.7 139.3 301.2 136.2 301.7C133.2 302.2 129.2 301.7 126.4 300.9C123.7 300.2 121.4 298.6 119.7 297.3C118.0 296.0 118.0 294.3 116.0 293.0C114.1 291.8 109.7 291.1 108.2 289.8C106.8 288.5 106.8 286.5 107.2 285.0C107.6 283.5 109.1 281.8 110.7 280.6C112.3 279.3 115.1 278.4 117.0 277.3C118.9 276.2 120.1 275.0 122.0 274.0C123.9 273.0 126.0 271.9 128.5 271.3C130.9 270.7 134.0 270.8 136.8 270.6C139.7 270.4 142.4 270.1 145.3 270.0C148.2 270.0 151.3 270.0 154.4 270.3C157.6 270.6 162.6 270.4 164.1 271.7C165.6 272.9 162.1 276.3 163.3 277.8C164.5 279.3 169.6 279.3 171.3 280.5C173.1 281.7 173.2 284.3 173.6 285.0ZM93.0 353.0C93.5 354.0 95.8 357.0 96.0 359.1C96.3 361.1 95.9 364.1 94.5 365.3C93.1 366.5 89.4 365.6 87.7 366.5C86.0 367.4 85.7 369.2 84.4 370.6C83.1 372.0 81.5 374.8 79.9 374.9C78.3 375.0 76.5 371.4 74.6 371.2C72.7 371.1 69.9 374.4 68.2 373.9C66.6 373.5 65.5 370.4 64.7 368.5C63.8 366.6 64.2 364.2 63.3 362.6C62.5 360.9 60.6 360.2 59.6 358.6C58.7 357.0 57.7 354.9 57.6 353.0C57.6 351.1 58.8 349.3 59.2 347.3C59.6 345.3 59.0 342.6 60.2 341.2C61.3 339.9 64.6 340.6 66.0 339.2C67.4 337.7 67.0 333.4 68.4 332.4C69.8 331.5 72.5 333.6 74.4 333.5C76.3 333.3 78.0 331.6 79.8 331.6C81.6 331.6 83.6 332.4 85.2 333.4C86.7 334.5 87.9 336.3 89.1 337.8C90.3 339.3 91.0 340.8 92.3 342.2C93.6 343.7 96.7 344.9 96.8 346.7C96.9 348.4 93.6 351.9 93.0 353.0ZM132.4 371.0C131.2 371.5 126.8 373.0 125.6 374.1C124.5 375.2 126.2 376.6 125.4 377.7C124.6 378.8 122.8 379.9 120.9 380.6C118.9 381.3 116.0 381.6 113.6 381.8C111.2 382.0 108.7 381.8 106.3 381.8C104.0 381.8 102.1 381.8 99.6 382.0C97.1 382.2 93.9 383.0 91.4 382.8C88.9 382.7 86.2 381.8 84.5 380.9C82.9 380.0 82.1 378.6 81.6 377.4C81.1 376.3 82.7 375.0 81.5 373.9C80.4 372.9 75.6 372.1 74.7 371.0C73.8 369.9 74.7 368.3 76.1 367.3C77.5 366.3 81.6 366.0 83.2 365.0C84.7 364.1 84.4 362.7 85.7 361.7C87.0 360.6 88.7 359.3 90.9 358.7C93.1 358.0 96.2 357.6 98.9 357.6C101.5 357.7 104.2 358.6 106.7 359.0C109.2 359.4 111.4 359.7 113.6 360.1C115.9 360.6 118.9 360.8 120.4 361.6C121.9 362.5 121.7 364.1 122.5 365.1C123.4 366.2 123.7 367.0 125.3 367.9C127.0 368.9 131.2 370.5 132.4 371.0ZM374.8 239.0C376.7 240.7 386.7 246.4 385.9 249.0C385.0 251.6 373.3 252.1 369.7 254.4C366.1 256.8 367.2 260.5 364.3 262.9C361.5 265.2 356.9 266.6 352.7 268.4C348.5 270.3 344.0 273.6 339.1 274.1C334.3 274.6 328.2 272.6 323.5 271.3C318.8 270.0 315.1 267.7 311.0 266.2C306.9 264.6 301.8 264.1 298.9 262.0C296.0 260.0 297.4 256.1 293.6 253.9C289.8 251.8 279.4 251.5 276.0 249.0C272.6 246.5 271.4 242.0 273.3 239.0C275.2 236.0 283.7 233.4 287.4 231.1C291.1 228.7 293.0 227.0 295.2 224.7C297.5 222.5 298.2 219.5 300.9 217.4C303.6 215.3 307.6 214.3 311.3 212.2C314.9 210.0 318.4 205.7 323.0 204.4C327.6 203.1 333.9 203.8 339.0 204.4C344.2 205.0 350.6 205.4 354.0 207.8C357.3 210.2 355.1 216.8 358.9 219.0C362.7 221.1 373.0 218.9 376.8 220.7C380.7 222.5 382.4 226.6 382.1 229.7C381.7 232.7 376.0 237.4 374.8 239.0ZM309.8 223.0C310.4 223.7 313.6 226.2 313.3 227.3C313.0 228.5 309.1 228.9 307.7 229.9C306.3 230.8 306.3 232.4 305.0 233.1C303.8 233.8 301.6 233.7 300.0 234.1C298.4 234.6 297.2 235.0 295.5 235.6C293.8 236.3 291.7 238.2 290.0 238.1C288.4 238.0 286.9 235.8 285.6 234.9C284.2 233.9 283.3 233.0 281.9 232.3C280.5 231.6 278.1 231.4 277.1 230.4C276.1 229.5 276.8 227.9 275.9 226.7C275.0 225.4 271.4 224.2 271.6 223.0C271.8 221.8 276.6 221.0 277.1 219.6C277.6 218.2 273.8 215.3 274.6 214.4C275.5 213.5 280.8 215.0 282.4 214.1C284.0 213.2 282.8 209.8 284.1 208.9C285.4 208.0 288.3 208.4 290.2 208.6C292.0 208.9 293.7 210.3 295.4 210.6C297.2 211.0 299.3 210.1 300.8 210.6C302.3 211.0 303.4 212.4 304.5 213.3C305.7 214.2 306.9 215.1 307.7 216.1C308.5 217.2 309.1 218.3 309.4 219.5C309.8 220.6 309.7 222.4 309.8 223.0ZM391.8 231.0C391.2 231.8 388.7 233.9 388.2 235.6C387.7 237.3 389.2 239.7 388.7 241.3C388.1 243.0 386.5 244.6 384.8 245.5C383.2 246.4 380.8 246.6 378.8 246.6C376.9 246.6 375.1 244.8 373.3 245.4C371.5 246.0 369.6 250.1 368.0 250.3C366.3 250.5 365.0 247.3 363.2 246.5C361.4 245.7 358.3 246.7 357.1 245.5C356.0 244.4 356.7 241.3 356.3 239.6C355.9 237.9 355.7 236.8 354.7 235.4C353.6 233.9 350.2 232.5 350.1 231.0C349.9 229.5 352.5 227.7 353.6 226.4C354.7 225.0 355.9 224.0 356.8 222.7C357.7 221.4 358.1 219.8 359.1 218.5C360.1 217.2 361.3 215.2 362.9 214.9C364.5 214.6 366.9 216.8 368.7 216.7C370.5 216.5 372.0 214.0 373.7 213.9C375.4 213.7 377.1 214.9 378.7 215.6C380.3 216.3 382.4 216.7 383.5 217.9C384.5 219.1 383.8 221.5 385.0 222.8C386.1 224.1 389.3 224.5 390.4 225.8C391.5 227.2 391.6 230.1 391.8 231.0ZM460.1 272.0C458.8 272.9 453.3 275.4 452.5 277.6C451.6 279.8 455.6 283.1 455.0 285.3C454.3 287.6 451.7 290.2 448.7 291.3C445.7 292.3 440.3 291.2 436.8 291.6C433.3 292.0 431.0 292.7 427.8 293.6C424.6 294.4 420.8 296.7 417.6 296.5C414.4 296.4 411.3 293.9 408.6 292.5C405.9 291.1 404.3 289.5 401.2 288.3C398.1 287.2 392.3 287.4 390.0 285.8C387.6 284.2 387.0 281.2 387.1 278.9C387.1 276.6 389.4 274.1 390.4 272.0C391.3 269.9 391.9 268.1 392.7 266.2C393.6 264.3 394.2 262.3 395.6 260.5C397.0 258.8 399.1 257.5 400.9 255.4C402.8 253.4 403.7 249.8 406.5 248.5C409.3 247.2 414.0 248.0 417.6 247.7C421.3 247.4 425.0 246.6 428.5 246.9C432.1 247.3 435.5 248.6 438.7 249.6C442.0 250.7 446.5 251.2 448.0 253.2C449.5 255.2 446.4 259.6 447.8 261.6C449.2 263.7 454.1 263.9 456.2 265.7C458.2 267.4 459.5 270.9 460.1 272.0ZM410.7 255.0C410.7 255.5 411.1 257.3 410.6 258.3C410.1 259.3 408.9 260.2 407.8 261.1C406.8 261.9 405.7 262.8 404.4 263.4C403.0 263.9 401.3 263.9 399.8 264.5C398.4 265.1 397.4 266.5 395.7 267.1C394.1 267.7 391.8 268.3 390.0 268.2C388.2 268.1 386.5 267.0 384.9 266.3C383.2 265.7 381.8 265.1 380.3 264.3C378.9 263.6 376.9 262.9 376.3 261.8C375.7 260.8 377.2 259.2 376.6 258.1C376.0 256.9 373.1 256.1 372.8 255.0C372.6 253.9 374.4 252.8 375.1 251.7C375.7 250.5 376.0 249.4 376.8 248.4C377.7 247.4 378.8 246.3 380.2 245.6C381.6 244.9 383.5 244.5 385.2 244.2C386.9 243.9 388.8 243.8 390.5 243.8C392.2 243.8 393.9 243.9 395.5 244.1C397.1 244.3 398.5 244.7 400.2 245.0C401.8 245.3 404.1 245.2 405.4 245.9C406.8 246.5 407.3 247.8 408.3 248.7C409.4 249.7 411.3 250.5 411.7 251.5C412.0 252.6 410.8 254.4 410.7 255.0ZM461.1 287.0C460.9 287.5 460.1 288.8 459.9 289.8C459.6 290.8 460.1 292.1 459.6 293.1C459.2 294.1 458.2 295.1 457.1 295.7C456.0 296.3 454.3 296.5 452.9 296.7C451.5 296.9 450.2 296.8 448.9 296.8C447.6 296.9 446.3 297.2 445.1 297.1C443.8 297.0 442.6 296.5 441.4 296.3C440.1 296.0 438.2 296.0 437.3 295.4C436.5 294.7 436.7 293.1 436.2 292.2C435.7 291.3 434.8 290.7 434.3 289.8C433.7 288.9 433.0 287.9 433.0 287.0C433.0 286.1 433.8 285.1 434.3 284.2C434.8 283.3 435.6 282.7 436.1 281.7C436.6 280.8 436.4 279.3 437.2 278.5C437.9 277.6 439.3 276.8 440.6 276.6C442.0 276.3 443.7 276.7 445.0 276.8C446.4 276.9 447.7 276.7 448.9 277.0C450.1 277.3 451.1 278.1 452.1 278.6C453.2 279.0 454.6 279.1 455.4 279.7C456.3 280.3 456.4 281.3 457.3 282.1C458.1 282.8 459.9 283.2 460.5 284.0C461.2 284.8 461.0 286.5 461.1 287.0ZM428.9 328.0C428.8 328.3 428.5 329.3 428.0 329.9C427.5 330.4 426.8 330.9 426.0 331.3C425.2 331.6 424.0 331.5 423.4 332.0C422.8 332.5 423.1 333.8 422.4 334.2C421.8 334.6 420.4 334.3 419.4 334.3C418.4 334.4 417.5 334.6 416.5 334.6C415.5 334.6 414.4 334.6 413.5 334.3C412.5 334.1 411.6 333.6 411.0 333.1C410.5 332.6 410.4 331.8 410.2 331.2C410.1 330.6 410.1 330.0 409.9 329.5C409.7 329.0 409.3 328.5 409.2 328.0C409.0 327.5 408.7 326.8 408.9 326.3C409.0 325.8 409.4 325.1 410.0 324.7C410.6 324.3 411.7 324.2 412.4 323.9C413.2 323.6 413.8 323.4 414.5 323.1C415.2 322.7 415.8 322.0 416.6 321.8C417.4 321.6 418.5 321.7 419.4 321.8C420.2 322.0 420.8 322.6 421.7 322.8C422.7 322.9 424.4 322.4 425.2 322.7C425.9 323.0 426.2 324.0 426.3 324.6C426.4 325.2 425.3 326.0 425.7 326.6C426.2 327.1 428.4 327.8 428.9 328.0ZM381.4 373.0C381.9 374.6 385.8 379.9 384.4 382.4C383.0 385.0 375.9 386.3 373.1 388.5C370.2 390.8 370.1 394.5 367.1 395.9C364.0 397.4 358.6 397.2 354.8 397.5C350.9 397.8 347.8 396.3 344.0 397.7C340.3 399.1 336.3 405.1 332.3 405.9C328.3 406.7 323.0 404.6 319.9 402.6C316.8 400.6 316.9 395.8 313.6 393.8C310.2 391.8 302.9 392.8 299.8 390.8C296.8 388.9 295.3 385.0 295.4 382.1C295.5 379.1 299.9 375.9 300.3 373.0C300.8 370.1 298.3 367.5 298.1 364.5C297.9 361.5 296.8 357.1 299.2 354.9C301.5 352.6 308.6 353.0 312.0 350.9C315.4 348.9 315.8 343.3 319.4 342.6C323.0 341.8 329.4 346.0 333.6 346.4C337.8 346.9 340.7 345.4 344.7 345.1C348.6 344.8 354.2 343.2 357.3 344.5C360.5 345.8 361.2 350.6 363.6 352.9C366.0 355.1 368.3 356.3 371.6 358.2C374.9 360.0 381.7 361.3 383.4 363.8C385.0 366.2 381.7 371.5 381.4 373.0ZM410.0 407.0C409.1 408.1 405.0 411.1 404.4 413.7C403.8 416.3 407.5 420.5 406.4 422.7C405.3 425.0 400.7 425.9 397.8 427.0C395.0 428.2 392.1 428.9 389.3 429.5C386.5 430.0 383.9 429.8 381.0 430.5C378.2 431.1 375.1 433.8 372.4 433.4C369.8 433.1 368.3 429.1 365.3 428.3C362.3 427.5 356.2 430.3 354.3 428.8C352.4 427.3 355.3 421.7 354.1 419.3C352.9 416.8 348.6 416.3 347.2 414.3C345.8 412.3 345.2 409.3 345.6 407.0C346.0 404.7 349.0 402.8 349.5 400.3C350.0 397.7 347.4 393.8 348.7 391.8C350.0 389.8 355.0 389.8 357.5 388.2C359.9 386.6 361.0 383.6 363.5 382.3C366.0 381.1 369.6 380.8 372.5 380.9C375.4 381.0 378.3 382.4 381.1 383.0C384.0 383.6 387.2 383.2 389.4 384.4C391.6 385.5 392.8 388.4 394.6 390.1C396.4 391.8 397.8 393.0 400.4 394.5C402.9 396.0 408.4 396.8 410.0 398.9C411.7 401.0 410.0 405.7 410.0 407.0ZM330.8 351.0C330.2 351.5 327.6 352.8 327.3 354.0C326.9 355.2 329.2 357.2 328.6 358.2C328.0 359.3 325.2 359.6 323.7 360.3C322.1 361.1 321.1 362.4 319.4 362.7C317.7 363.0 315.3 362.0 313.5 362.0C311.6 362.0 310.2 362.6 308.4 362.7C306.6 362.8 304.2 363.1 302.7 362.6C301.2 362.1 300.1 360.7 299.2 359.7C298.4 358.6 299.0 357.3 297.6 356.5C296.2 355.7 292.1 355.7 290.9 354.8C289.7 353.8 289.9 352.2 290.4 351.0C290.9 349.8 292.9 348.8 294.1 347.8C295.3 346.9 296.9 346.6 297.4 345.4C297.9 344.3 296.3 341.8 297.2 340.9C298.1 339.9 301.0 339.7 302.9 339.7C304.8 339.7 306.9 340.7 308.7 340.8C310.5 340.9 311.9 340.0 313.5 340.1C315.0 340.2 316.0 341.2 317.9 341.4C319.7 341.6 323.3 340.4 324.5 341.1C325.8 341.7 324.3 344.1 325.4 345.1C326.6 346.1 330.7 346.2 331.6 347.2C332.4 348.1 330.9 350.4 330.8 351.0ZM412.7 431.0C412.2 431.5 410.4 432.9 409.6 433.8C408.8 434.6 408.2 435.2 407.8 436.2C407.4 437.2 408.1 439.2 407.1 439.8C406.2 440.3 403.4 439.0 402.1 439.3C400.7 439.6 400.2 441.2 399.0 441.4C397.8 441.6 396.5 440.7 395.1 440.7C393.8 440.7 391.9 441.6 390.7 441.3C389.5 441.0 388.9 439.6 387.8 438.9C386.8 438.2 384.9 437.9 384.5 437.0C384.0 436.2 385.5 434.6 385.2 433.6C384.9 432.6 382.8 431.9 382.5 431.0C382.2 430.1 382.9 428.9 383.4 428.0C383.9 427.1 384.9 426.4 385.6 425.5C386.2 424.6 386.4 423.3 387.2 422.5C388.1 421.7 389.3 420.7 390.7 420.6C392.0 420.5 393.9 421.9 395.3 422.0C396.6 422.2 397.6 421.5 398.8 421.5C400.0 421.5 401.4 421.6 402.5 422.0C403.5 422.4 404.4 423.2 405.2 423.9C405.9 424.6 406.3 425.5 406.9 426.2C407.6 426.9 408.3 427.5 409.3 428.3C410.2 429.1 412.1 430.5 412.7 431.0Z" fill="#e8960f"/><path d="M244.1 146.6C244.8 147.5 248.3 150.2 248.3 151.8C248.3 153.4 245.6 154.8 244.1 156.3C242.6 157.8 241.7 160.0 239.2 160.6C236.8 161.2 232.3 160.1 229.5 160.1C226.8 160.0 225.0 160.3 222.8 160.3C220.6 160.4 218.7 160.3 216.3 160.4C214.0 160.5 211.3 161.3 208.8 161.1C206.3 161.0 203.2 160.5 201.4 159.5C199.6 158.5 198.8 156.6 198.1 155.1C197.3 153.6 197.4 152.1 196.7 150.7C196.1 149.3 194.8 148.1 194.3 146.6C193.7 145.1 193.3 143.4 193.7 141.9C194.0 140.4 195.2 138.9 196.5 137.5C197.7 136.1 199.3 134.7 201.2 133.5C203.0 132.4 205.1 131.0 207.6 130.4C210.0 129.8 213.1 129.6 215.7 129.9C218.2 130.3 220.2 132.6 222.8 132.7C225.5 132.8 229.4 130.0 231.5 130.5C233.6 130.9 233.7 134.1 235.5 135.3C237.2 136.5 240.6 136.6 241.9 137.8C243.2 138.9 243.1 140.8 243.5 142.3C243.9 143.7 244.0 145.9 244.1 146.6ZM288.3 163.1C288.5 163.7 289.3 165.4 289.4 166.7C289.5 168.0 290.0 169.9 289.1 170.8C288.1 171.7 285.2 171.6 283.7 172.3C282.2 172.9 281.5 174.2 280.1 174.6C278.7 175.1 277.0 174.7 275.4 175.2C273.8 175.7 271.9 177.7 270.3 177.7C268.6 177.8 266.7 176.5 265.5 175.6C264.3 174.6 263.9 172.9 262.9 171.9C262.0 170.9 261.0 170.3 259.9 169.5C258.8 168.6 257.2 167.8 256.4 166.8C255.5 165.7 255.0 164.4 254.8 163.1C254.6 161.8 254.2 160.2 255.0 159.1C255.9 158.1 258.7 157.6 259.9 156.8C261.2 155.9 261.7 155.1 262.6 154.0C263.4 152.9 263.8 150.7 265.1 150.1C266.5 149.4 268.9 150.0 270.6 150.1C272.3 150.2 273.9 150.4 275.5 150.7C277.0 150.9 278.2 151.5 280.1 151.6C281.9 151.7 285.4 150.6 286.6 151.4C287.8 152.2 286.6 154.9 287.3 156.2C288.0 157.5 290.6 158.1 290.7 159.2C290.9 160.4 288.7 162.5 288.3 163.1ZM175.4 174.1C174.7 174.7 172.1 176.4 171.2 177.6C170.4 178.7 170.6 179.9 170.1 181.2C169.7 182.5 169.6 184.4 168.5 185.4C167.3 186.5 165.3 187.6 163.4 187.7C161.5 187.8 158.9 186.3 157.1 186.1C155.2 185.9 153.9 186.3 152.2 186.3C150.5 186.2 148.7 186.3 147.0 186.0C145.3 185.7 143.4 185.2 142.1 184.4C140.8 183.6 139.8 182.3 139.3 181.1C138.7 180.0 139.0 178.6 138.6 177.4C138.3 176.3 137.8 175.3 137.2 174.1C136.6 172.9 135.2 171.4 135.1 170.0C135.0 168.7 135.1 166.6 136.6 165.9C138.1 165.1 142.4 166.1 144.0 165.4C145.7 164.7 145.3 162.5 146.6 161.6C147.9 160.6 150.0 159.4 151.7 159.6C153.4 159.8 155.0 162.6 156.9 162.7C158.9 162.9 162.0 160.1 163.4 160.5C164.8 160.9 164.3 164.1 165.6 165.1C166.9 166.2 169.9 165.7 171.1 166.6C172.4 167.4 172.5 169.0 173.2 170.2C173.9 171.5 175.0 173.5 175.4 174.1ZM202.2 150.4C202.2 150.9 202.8 152.6 202.2 153.3C201.5 154.0 199.0 154.0 198.1 154.6C197.3 155.2 197.5 156.1 197.0 156.9C196.5 157.7 196.0 159.0 195.1 159.3C194.2 159.5 192.7 158.1 191.6 158.3C190.4 158.5 189.3 160.5 188.4 160.4C187.5 160.4 186.9 158.4 185.9 158.0C184.9 157.6 182.9 158.4 182.2 157.9C181.6 157.3 182.4 155.5 182.0 154.7C181.5 153.9 180.3 153.7 179.6 152.9C178.9 152.2 177.5 151.2 177.7 150.4C177.8 149.6 179.9 148.9 180.6 148.1C181.2 147.4 181.2 146.7 181.6 145.9C182.0 145.2 182.2 144.1 182.9 143.6C183.7 143.0 184.9 142.8 185.9 142.7C186.8 142.6 187.9 142.9 188.8 142.8C189.8 142.8 190.7 142.3 191.6 142.4C192.5 142.4 193.1 143.1 194.2 143.1C195.4 143.1 197.4 142.3 198.4 142.6C199.3 143.0 199.3 144.4 199.9 145.3C200.6 146.1 201.7 146.7 202.0 147.5C202.4 148.4 202.2 149.9 202.2 150.4ZM351.9 184.3C352.0 185.0 353.3 187.2 352.9 188.5C352.4 189.7 350.2 190.6 349.2 191.9C348.2 193.3 348.2 195.2 346.8 196.3C345.4 197.5 342.9 198.5 340.7 198.8C338.4 199.1 335.6 197.9 333.2 198.2C330.8 198.4 328.6 200.2 326.3 200.3C324.0 200.3 321.5 199.2 319.7 198.3C317.9 197.4 317.8 195.4 315.5 194.6C313.3 193.9 307.3 194.9 306.0 193.9C304.8 192.8 307.7 189.9 308.0 188.3C308.3 186.7 307.6 185.6 307.8 184.3C308.0 183.0 309.1 182.0 309.1 180.5C309.2 179.0 307.6 177.1 308.0 175.5C308.5 174.0 309.9 172.3 311.7 171.2C313.5 170.1 316.2 169.2 318.7 168.9C321.2 168.6 324.1 169.2 326.6 169.4C329.0 169.6 331.3 169.6 333.3 170.1C335.3 170.6 336.5 172.1 338.8 172.4C341.1 172.7 345.0 171.5 347.1 172.0C349.2 172.6 350.5 174.4 351.5 175.8C352.4 177.1 352.8 178.7 352.8 180.1C352.9 181.6 352.0 183.6 351.9 184.3ZM312.8 159.8C312.6 160.2 312.2 161.2 312.0 162.0C311.8 162.8 312.3 163.9 311.8 164.5C311.3 165.2 310.1 165.6 309.2 165.9C308.3 166.2 307.3 166.2 306.4 166.5C305.6 166.9 305.0 167.7 304.1 168.1C303.2 168.5 301.8 169.2 301.0 168.9C300.1 168.6 299.8 166.8 298.8 166.4C297.9 166.0 295.8 167.1 295.3 166.6C294.7 166.1 295.7 164.2 295.5 163.5C295.2 162.7 294.1 162.5 293.7 161.9C293.4 161.3 293.7 160.6 293.4 159.8C293.2 159.0 292.3 158.2 292.3 157.4C292.2 156.5 292.4 155.5 293.0 154.9C293.5 154.2 294.6 153.6 295.5 153.3C296.5 153.0 297.8 153.3 298.7 152.9C299.6 152.5 300.1 151.0 301.0 150.9C301.9 150.8 303.0 151.9 303.9 152.3C304.8 152.7 305.4 153.0 306.4 153.1C307.4 153.2 309.2 152.6 310.0 153.0C310.8 153.3 310.9 154.6 311.4 155.3C311.8 156.0 312.6 156.7 312.8 157.4C313.0 158.2 312.8 159.4 312.8 159.8ZM195.5 237.0C194.9 237.7 193.1 239.8 191.9 240.9C190.7 242.1 189.3 243.1 188.0 244.1C186.8 245.1 185.3 245.6 184.1 246.9C183.0 248.2 183.0 251.2 181.2 251.8C179.5 252.4 175.9 250.6 173.5 250.4C171.2 250.3 169.4 251.0 167.2 251.0C165.1 251.0 162.4 251.0 160.7 250.3C159.0 249.6 158.6 247.6 157.1 246.6C155.7 245.6 153.2 245.4 151.8 244.5C150.5 243.5 150.2 242.2 149.0 240.9C147.8 239.7 144.9 238.3 144.8 237.0C144.7 235.7 147.3 234.2 148.4 233.0C149.5 231.7 150.7 230.9 151.4 229.4C152.1 227.9 150.9 225.0 152.4 224.0C153.9 223.0 158.1 223.9 160.5 223.3C162.8 222.8 164.4 220.8 166.6 220.5C168.9 220.2 171.9 220.8 174.0 221.6C176.0 222.4 177.0 224.7 178.9 225.4C180.9 226.1 183.8 225.4 185.7 226.0C187.6 226.6 188.6 228.0 190.2 229.1C191.8 230.1 194.6 231.1 195.5 232.4C196.4 233.7 195.5 236.2 195.5 237.0ZM218.2 217.8C218.4 218.2 219.7 219.7 219.4 220.3C219.1 221.0 217.0 221.2 216.3 221.8C215.6 222.3 215.6 223.2 215.1 223.8C214.5 224.3 213.6 224.7 212.8 225.2C212.0 225.6 211.1 226.2 210.1 226.4C209.2 226.6 208.0 226.5 207.1 226.4C206.1 226.2 205.0 225.9 204.3 225.4C203.5 224.9 203.0 224.1 202.4 223.6C201.8 223.0 201.0 222.5 200.7 221.9C200.3 221.3 200.6 220.5 200.1 219.8C199.5 219.1 197.8 218.5 197.5 217.8C197.2 217.1 198.2 216.2 198.5 215.4C198.8 214.7 198.8 213.6 199.5 213.1C200.2 212.6 201.9 212.8 202.7 212.4C203.6 212.0 203.8 211.2 204.5 210.7C205.2 210.1 206.1 209.4 207.1 209.2C208.0 209.0 209.2 209.3 210.1 209.7C210.9 210.0 211.4 211.0 212.3 211.4C213.1 211.8 214.1 211.6 215.1 211.8C216.0 212.1 217.7 212.3 218.0 212.9C218.4 213.6 217.4 214.9 217.4 215.7C217.4 216.5 218.1 217.5 218.2 217.8ZM124.7 260.1C124.7 260.8 125.3 263.0 124.8 264.4C124.3 265.7 123.0 266.9 121.8 268.0C120.6 269.1 119.1 270.0 117.8 271.0C116.4 271.9 115.1 273.2 113.4 273.8C111.7 274.3 109.5 274.2 107.6 274.2C105.8 274.3 103.8 274.4 102.1 274.1C100.4 273.7 98.7 272.9 97.3 272.2C95.8 271.5 94.9 270.4 93.5 269.7C92.0 268.9 89.3 268.7 88.7 267.7C88.0 266.7 89.7 264.7 89.4 263.4C89.1 262.1 87.5 261.3 86.8 260.1C86.2 258.9 85.3 257.3 85.5 256.0C85.7 254.7 87.1 253.4 88.2 252.3C89.4 251.2 90.7 250.1 92.2 249.5C93.8 248.9 96.1 249.2 97.8 248.8C99.5 248.4 100.7 247.4 102.3 247.1C103.9 246.8 105.7 246.9 107.5 246.9C109.2 247.0 111.3 246.8 112.8 247.3C114.4 247.9 115.2 249.4 116.6 250.2C118.0 251.0 119.9 251.5 121.3 252.4C122.7 253.3 124.5 254.5 125.1 255.8C125.6 257.1 124.7 259.4 124.7 260.1ZM146.3 239.2C146.1 239.5 145.7 240.4 145.3 241.0C144.9 241.5 144.3 241.9 144.0 242.5C143.8 243.2 144.2 244.3 143.7 245.0C143.3 245.6 142.1 246.0 141.2 246.2C140.2 246.4 139.1 246.4 138.1 246.4C137.1 246.4 136.1 246.2 135.2 246.1C134.2 245.9 133.1 246.0 132.4 245.7C131.6 245.4 131.5 244.4 130.6 244.0C129.7 243.7 127.5 244.0 126.9 243.5C126.4 243.1 127.6 241.8 127.5 241.1C127.3 240.4 126.4 239.9 126.2 239.2C125.9 238.5 125.8 237.7 126.0 237.0C126.2 236.3 126.7 235.5 127.3 235.0C128.0 234.5 129.2 234.3 130.1 234.0C131.0 233.7 131.9 233.6 132.7 233.3C133.6 233.0 134.3 232.2 135.2 232.2C136.0 232.1 136.8 233.1 137.9 233.1C138.9 233.1 140.4 232.0 141.2 232.2C142.0 232.3 142.1 233.7 142.8 234.2C143.6 234.6 145.5 234.5 146.0 235.0C146.4 235.5 145.4 236.7 145.5 237.4C145.5 238.1 146.1 238.9 146.3 239.2ZM116.6 342.8C117.1 343.9 119.7 347.6 119.5 349.7C119.2 351.8 116.5 353.4 115.2 355.4C113.9 357.3 113.5 360.2 111.6 361.5C109.8 362.9 106.5 362.2 104.2 363.3C101.9 364.4 100.3 367.9 98.0 368.4C95.7 368.8 92.6 367.0 90.4 366.0C88.1 364.9 86.3 363.4 84.4 362.1C82.5 360.9 80.5 360.1 79.0 358.7C77.5 357.3 76.9 355.4 75.4 353.8C73.9 352.2 70.5 351.1 70.1 349.3C69.6 347.4 72.5 344.9 72.5 342.8C72.6 340.7 69.8 338.2 70.3 336.4C70.7 334.6 74.1 333.6 75.4 331.8C76.6 330.0 76.3 327.1 77.7 325.5C79.1 323.8 81.5 322.8 83.6 321.9C85.7 320.9 88.0 320.5 90.4 319.7C92.8 319.0 95.9 316.5 98.0 317.4C100.0 318.3 100.4 324.2 102.7 325.2C105.1 326.2 110.1 322.6 112.2 323.5C114.2 324.4 113.8 328.4 114.8 330.5C115.9 332.6 118.2 334.1 118.5 336.2C118.8 338.2 116.9 341.7 116.6 342.8ZM190.3 317.2C190.3 318.1 191.5 321.1 190.3 322.4C189.2 323.7 184.4 323.6 183.1 325.0C181.8 326.5 183.7 329.4 182.8 331.0C181.8 332.6 179.6 334.0 177.6 334.6C175.5 335.1 172.7 334.8 170.5 334.3C168.3 333.8 166.6 332.0 164.6 331.6C162.7 331.2 160.3 332.3 158.8 331.7C157.2 331.1 156.5 329.1 155.2 328.0C153.8 327.0 152.6 326.4 150.6 325.5C148.7 324.6 144.4 324.0 143.4 322.6C142.3 321.3 144.3 318.9 144.6 317.2C144.9 315.5 144.7 313.8 145.1 312.2C145.6 310.5 146.1 308.7 147.1 307.2C148.1 305.6 149.2 303.7 151.0 302.7C152.8 301.7 155.7 301.7 157.9 301.2C160.0 300.7 162.0 300.0 164.1 299.7C166.2 299.5 168.4 299.5 170.6 299.7C172.7 299.9 175.1 300.1 177.0 300.8C179.0 301.5 180.5 302.8 182.2 304.0C183.8 305.1 186.2 306.0 186.9 307.5C187.6 309.0 185.9 311.2 186.5 312.9C187.0 314.5 189.6 316.5 190.3 317.2ZM148.7 290.4C149.3 290.9 152.8 292.5 152.4 293.2C152.0 294.0 148.0 294.2 146.4 294.7C144.9 295.2 143.9 295.4 143.0 296.2C142.2 296.9 142.4 298.8 141.1 299.2C139.8 299.6 137.2 298.4 135.4 298.6C133.6 298.7 131.8 300.1 130.3 300.0C128.8 299.8 127.6 298.4 126.4 297.8C125.1 297.1 124.6 296.6 123.0 296.2C121.4 295.9 118.0 296.2 116.6 295.7C115.2 295.2 115.2 294.0 114.6 293.1C114.0 292.2 113.0 291.3 113.0 290.4C113.0 289.5 113.4 288.4 114.5 287.7C115.7 287.0 118.9 286.9 120.0 286.2C121.0 285.5 119.9 284.1 120.8 283.3C121.7 282.6 123.5 282.0 125.1 281.7C126.7 281.4 128.7 281.8 130.6 281.6C132.4 281.4 134.4 280.1 136.0 280.3C137.6 280.5 138.2 282.5 140.0 282.9C141.7 283.2 145.1 282.2 146.6 282.6C148.2 283.0 149.1 284.3 149.3 285.2C149.4 286.1 147.7 287.4 147.7 288.3C147.6 289.1 148.5 290.0 148.7 290.4ZM81.4 360.2C81.5 360.7 82.0 362.3 81.9 363.3C81.9 364.4 81.6 365.5 81.2 366.5C80.8 367.6 80.2 368.6 79.6 369.5C78.9 370.5 78.1 371.5 77.2 372.2C76.3 372.9 75.0 373.9 73.9 373.6C72.9 373.2 72.0 370.5 70.8 370.3C69.7 370.1 68.2 372.3 67.1 372.3C66.0 372.3 65.1 371.0 64.2 370.2C63.4 369.4 62.3 368.5 61.8 367.5C61.3 366.4 61.3 364.9 61.4 363.7C61.4 362.5 62.1 361.4 62.0 360.2C61.8 359.0 60.4 357.6 60.4 356.4C60.4 355.3 61.3 354.0 62.0 353.1C62.7 352.1 63.7 351.5 64.5 350.6C65.4 349.7 66.0 348.1 67.0 347.8C68.0 347.6 69.6 348.6 70.7 348.9C71.8 349.2 72.5 349.9 73.5 349.9C74.5 349.9 75.7 349.0 76.8 349.1C77.9 349.2 79.4 349.4 80.0 350.3C80.7 351.1 79.9 353.3 80.5 354.3C81.1 355.4 83.4 355.6 83.6 356.5C83.7 357.5 81.8 359.6 81.4 360.2ZM111.7 375.2C111.4 375.5 110.0 376.3 109.7 377.0C109.4 377.7 110.8 378.8 110.1 379.3C109.5 379.9 107.1 379.8 106.0 380.4C104.9 380.9 104.7 382.1 103.5 382.5C102.3 382.9 100.3 382.7 98.7 382.7C97.1 382.8 95.6 382.9 94.0 382.8C92.5 382.8 90.4 383.0 89.2 382.5C88.1 382.1 87.9 380.8 87.4 380.1C86.8 379.4 86.3 378.9 85.6 378.4C85.0 377.9 83.8 377.5 83.4 377.0C82.9 376.4 82.8 375.8 82.9 375.2C83.0 374.6 83.5 374.0 83.9 373.5C84.4 373.0 85.2 372.6 85.6 372.0C86.0 371.3 85.8 370.5 86.4 369.8C87.0 369.2 88.1 368.3 89.4 368.1C90.7 367.8 92.7 368.5 94.3 368.4C95.9 368.2 97.3 367.3 98.8 367.3C100.4 367.2 102.4 367.4 103.4 368.0C104.5 368.6 103.9 370.1 104.9 370.6C105.8 371.2 108.5 370.9 109.4 371.3C110.3 371.7 109.9 372.6 110.3 373.3C110.7 373.9 111.5 374.9 111.7 375.2ZM342.9 249.8C344.1 250.8 350.3 254.1 349.9 255.6C349.5 257.0 342.1 257.0 340.5 258.7C338.8 260.3 341.3 263.7 339.9 265.3C338.4 266.9 334.5 267.3 331.7 268.1C328.9 268.9 325.7 270.3 322.9 269.8C320.0 269.4 317.3 266.2 314.6 265.6C311.8 264.9 308.5 266.5 306.4 265.9C304.2 265.2 304.3 262.5 301.7 261.6C299.0 260.8 292.9 261.9 290.5 260.9C288.1 259.8 287.8 257.3 287.4 255.4C287.0 253.6 287.5 251.6 288.0 249.8C288.6 248.0 289.7 246.3 290.8 244.8C292.0 243.3 294.0 242.2 295.1 240.6C296.2 238.9 295.4 236.0 297.3 234.8C299.1 233.6 303.5 234.1 306.3 233.5C309.1 233.0 311.3 231.2 313.9 231.3C316.5 231.3 319.4 233.4 321.9 234.0C324.4 234.6 327.1 234.2 329.2 234.9C331.3 235.6 332.0 237.4 334.5 238.1C337.1 238.9 342.3 238.3 344.3 239.4C346.3 240.5 346.8 242.9 346.5 244.6C346.3 246.4 343.5 248.9 342.9 249.8ZM299.4 227.8C299.1 228.1 298.0 229.1 297.5 229.8C297.0 230.4 296.7 230.9 296.5 231.7C296.2 232.4 296.6 233.7 296.0 234.4C295.4 235.0 294.1 235.5 293.0 235.6C292.0 235.7 290.6 235.1 289.6 235.0C288.5 234.8 287.7 234.8 286.8 234.7C285.9 234.5 285.2 234.2 284.2 234.1C283.2 234.0 281.6 234.4 280.7 234.1C279.8 233.7 279.3 232.8 278.9 232.1C278.5 231.4 278.5 230.6 278.4 229.9C278.2 229.2 278.4 228.5 278.2 227.8C278.0 227.1 277.2 226.2 277.2 225.5C277.2 224.7 277.8 223.9 278.3 223.2C278.8 222.5 279.4 221.6 280.2 221.2C281.1 220.7 282.4 220.4 283.5 220.3C284.6 220.2 285.7 220.5 286.7 220.6C287.8 220.7 288.5 221.1 289.5 221.0C290.6 220.9 292.1 219.8 293.1 220.0C294.0 220.1 294.3 221.4 295.2 221.9C296.0 222.5 297.7 222.5 298.1 223.2C298.4 223.8 297.0 225.1 297.2 225.9C297.4 226.6 299.0 227.5 299.4 227.8ZM377.9 237.0C377.5 237.4 376.3 238.8 375.7 239.5C375.0 240.3 374.3 240.7 374.0 241.6C373.6 242.4 374.1 244.0 373.6 244.8C373.1 245.6 371.8 246.0 370.8 246.3C369.9 246.7 368.8 246.8 367.7 247.0C366.7 247.2 365.4 247.9 364.5 247.5C363.6 247.2 363.2 245.3 362.2 244.9C361.1 244.6 359.1 245.8 358.1 245.5C357.1 245.1 356.4 243.8 356.3 242.8C356.1 241.8 357.1 240.4 357.1 239.4C357.2 238.4 356.7 237.9 356.5 237.0C356.2 236.1 355.6 235.1 355.6 234.2C355.7 233.3 356.3 232.3 356.9 231.6C357.5 230.9 358.6 230.4 359.5 230.0C360.3 229.5 361.3 229.4 362.1 229.0C363.0 228.6 363.7 227.5 364.6 227.4C365.5 227.3 366.5 228.2 367.5 228.3C368.6 228.3 369.8 227.6 370.9 227.6C372.0 227.7 373.6 227.8 374.2 228.6C374.8 229.3 373.9 231.3 374.4 232.2C374.8 233.1 376.4 233.3 377.0 234.1C377.5 234.9 377.7 236.5 377.9 237.0ZM435.3 279.8C434.8 280.4 432.7 282.0 432.0 283.2C431.3 284.4 431.7 285.6 431.3 286.9C430.8 288.2 430.5 290.1 429.1 291.0C427.7 291.8 424.9 292.0 422.8 292.1C420.8 292.2 418.7 291.5 416.8 291.6C414.9 291.8 413.1 292.8 411.3 292.8C409.5 292.7 408.1 291.7 406.1 291.4C404.0 291.1 400.5 291.9 399.2 291.0C398.0 290.2 399.0 287.7 398.5 286.4C398.0 285.0 397.1 284.3 396.2 283.2C395.3 282.1 393.1 280.9 393.3 279.8C393.4 278.7 396.7 277.8 397.3 276.6C397.9 275.4 396.6 273.9 396.9 272.6C397.2 271.2 397.7 269.3 399.2 268.5C400.7 267.8 403.8 268.0 405.9 267.9C407.9 267.8 409.7 268.0 411.6 267.9C413.4 267.7 415.2 267.1 417.0 267.1C418.9 267.1 421.1 267.2 422.6 267.8C424.1 268.5 424.8 270.1 425.8 271.1C426.9 272.0 428.1 272.7 429.0 273.6C429.9 274.5 430.1 275.5 431.1 276.6C432.2 277.6 434.6 279.3 435.3 279.8ZM397.9 259.2C398.0 259.5 398.3 260.5 398.2 261.1C398.0 261.7 397.4 262.2 397.0 262.8C396.6 263.4 396.4 264.3 395.8 264.8C395.1 265.3 393.9 265.5 392.9 265.8C391.9 266.2 391.0 266.7 389.9 266.9C388.8 267.1 387.5 267.1 386.4 266.8C385.4 266.6 384.6 265.9 383.6 265.6C382.6 265.3 381.3 265.3 380.4 264.9C379.5 264.5 378.8 263.9 378.2 263.3C377.6 262.7 376.9 262.0 376.7 261.3C376.6 260.7 377.3 259.9 377.2 259.2C377.2 258.5 376.5 257.7 376.6 257.0C376.8 256.4 377.7 255.8 378.3 255.2C378.8 254.5 379.0 253.5 380.0 253.2C381.0 252.9 383.1 253.9 384.1 253.6C385.2 253.3 385.5 251.5 386.4 251.4C387.3 251.4 388.4 253.2 389.5 253.4C390.6 253.5 392.1 252.2 393.1 252.3C394.1 252.4 394.8 253.2 395.6 253.8C396.3 254.3 396.6 254.9 397.4 255.4C398.2 255.9 400.2 256.3 400.3 256.9C400.4 257.6 398.3 258.8 397.9 259.2ZM451.1 290.6C451.2 290.9 451.6 291.8 451.4 292.3C451.2 292.9 450.2 293.1 449.9 293.7C449.6 294.3 450.0 295.3 449.5 295.8C449.0 296.2 447.8 296.2 447.0 296.4C446.2 296.5 445.4 296.7 444.6 296.6C443.9 296.5 443.2 295.9 442.5 295.8C441.8 295.7 441.0 296.0 440.3 295.8C439.6 295.7 439.0 295.3 438.4 295.0C437.8 294.7 437.1 294.4 436.6 293.9C436.2 293.5 436.0 292.9 435.6 292.3C435.3 291.8 434.7 291.2 434.5 290.6C434.3 290.0 434.3 289.2 434.7 288.7C435.0 288.1 436.2 287.8 436.8 287.4C437.4 287.0 437.8 286.6 438.3 286.2C438.9 285.7 439.4 285.3 440.0 284.9C440.7 284.5 441.4 283.7 442.2 283.7C442.9 283.7 443.8 284.7 444.6 285.0C445.3 285.2 446.1 285.0 446.8 285.1C447.6 285.2 448.8 285.2 449.2 285.6C449.7 286.0 449.3 287.1 449.5 287.7C449.7 288.3 450.4 288.5 450.7 289.0C451.0 289.5 451.0 290.3 451.1 290.6ZM420.4 330.1C420.4 330.2 420.3 330.7 420.3 331.0C420.3 331.3 420.4 331.7 420.2 332.0C420.1 332.3 419.9 332.8 419.6 333.0C419.2 333.3 418.5 333.3 417.9 333.4C417.4 333.5 416.9 334.0 416.4 333.9C415.9 333.9 415.4 333.3 414.9 333.1C414.4 332.9 414.2 332.8 413.7 332.8C413.1 332.8 412.1 333.1 411.7 333.0C411.3 332.8 411.5 332.2 411.2 331.9C410.9 331.6 410.1 331.5 409.9 331.2C409.8 330.9 410.2 330.4 410.3 330.1C410.5 329.8 410.7 329.5 410.9 329.2C411.0 328.9 411.0 328.6 411.3 328.3C411.6 328.1 412.2 328.1 412.4 327.8C412.7 327.5 412.6 326.7 413.0 326.5C413.4 326.3 414.2 326.5 414.8 326.5C415.3 326.6 415.8 326.7 416.3 326.8C416.8 326.9 417.4 326.8 417.8 327.0C418.3 327.1 418.8 327.3 419.0 327.6C419.3 327.8 419.1 328.2 419.5 328.5C420.0 328.7 421.4 328.7 421.5 329.0C421.7 329.3 420.6 329.9 420.4 330.1ZM353.7 383.2C353.1 384.0 351.5 386.4 350.3 387.7C349.1 389.1 347.3 389.9 346.4 391.4C345.6 392.9 346.7 396.0 345.2 396.9C343.6 397.8 339.4 396.3 337.1 396.6C334.8 397.0 333.7 397.9 331.6 398.8C329.5 399.7 326.6 402.2 324.7 401.8C322.7 401.5 321.6 397.8 319.7 396.8C317.7 395.8 315.3 396.4 313.0 395.8C310.7 395.2 307.7 394.6 306.1 393.4C304.4 392.2 303.0 390.2 303.2 388.5C303.3 386.8 306.5 384.8 307.1 383.2C307.6 381.6 306.5 380.3 306.5 378.6C306.5 377.0 305.7 374.7 306.8 373.4C308.0 372.1 311.6 372.2 313.3 370.9C315.0 369.5 315.0 366.0 317.0 365.5C319.0 365.0 322.8 368.2 325.3 367.9C327.9 367.7 330.2 364.0 332.3 363.9C334.5 363.9 336.7 366.5 338.4 367.7C340.2 369.0 341.1 370.4 342.8 371.5C344.4 372.5 347.3 372.9 348.3 374.1C349.3 375.4 347.9 377.5 348.7 379.0C349.6 380.5 352.9 382.5 353.7 383.2ZM388.0 416.0C387.6 416.7 386.2 418.7 385.5 420.0C384.8 421.3 384.5 422.6 383.8 423.9C383.1 425.2 382.6 426.8 381.5 427.9C380.3 429.0 378.7 430.2 377.0 430.5C375.4 430.8 373.2 429.3 371.4 429.7C369.6 430.0 367.8 432.6 366.2 432.5C364.7 432.4 363.5 429.8 362.0 429.0C360.4 428.2 357.9 428.8 356.8 427.8C355.7 426.9 356.0 424.6 355.5 423.3C355.0 421.9 355.1 420.9 353.9 419.7C352.8 418.5 349.3 417.4 348.7 416.0C348.1 414.6 349.8 412.9 350.5 411.5C351.2 410.0 351.5 408.2 352.9 407.3C354.3 406.5 357.4 406.8 359.0 406.3C360.7 405.8 361.4 405.0 362.7 404.4C364.0 403.8 365.3 403.1 366.8 402.8C368.2 402.5 369.8 402.5 371.4 402.6C372.9 402.7 374.6 402.8 376.1 403.2C377.6 403.6 379.4 404.1 380.4 405.1C381.4 406.1 381.2 407.9 382.0 409.1C382.8 410.2 384.3 410.9 385.3 412.0C386.3 413.2 387.6 415.3 388.0 416.0ZM318.1 355.2C317.6 355.5 315.5 356.2 315.2 356.9C314.8 357.6 316.2 358.5 316.0 359.2C315.8 359.9 315.0 360.7 314.1 361.0C313.1 361.3 311.4 360.9 310.4 361.1C309.3 361.3 308.8 361.9 307.7 362.2C306.7 362.6 305.4 363.2 304.4 363.2C303.3 363.1 302.3 362.3 301.4 361.8C300.5 361.4 299.5 361.1 298.9 360.6C298.2 360.0 297.9 359.3 297.6 358.7C297.4 358.1 297.4 357.5 297.1 356.9C296.8 356.3 295.9 355.8 295.7 355.2C295.5 354.6 295.5 353.9 295.9 353.3C296.3 352.7 297.2 352.3 297.8 351.8C298.4 351.3 298.7 350.6 299.4 350.2C300.1 349.9 301.3 350.0 302.1 349.6C303.0 349.2 303.5 348.1 304.5 347.8C305.4 347.5 306.8 347.6 307.8 347.9C308.8 348.2 309.5 349.0 310.3 349.4C311.2 349.8 311.9 350.0 312.8 350.3C313.6 350.7 314.8 350.9 315.5 351.4C316.1 351.9 316.1 352.6 316.5 353.3C317.0 353.9 317.8 354.9 318.1 355.2ZM402.6 434.6C402.4 434.9 401.9 435.8 401.5 436.4C401.2 436.9 400.8 437.4 400.5 438.0C400.1 438.5 400.0 439.4 399.4 439.8C398.9 440.2 397.8 440.3 397.0 440.3C396.1 440.4 395.3 440.1 394.5 440.1C393.8 440.0 393.1 440.2 392.4 440.1C391.8 439.9 391.1 439.7 390.5 439.4C390.0 439.2 389.8 438.7 389.0 438.4C388.3 438.2 386.8 438.5 386.2 438.1C385.5 437.8 385.0 437.1 385.0 436.5C384.9 435.9 385.7 435.2 386.0 434.6C386.3 434.0 386.5 433.6 386.6 433.1C386.7 432.5 386.3 431.8 386.5 431.2C386.6 430.6 387.1 430.0 387.7 429.6C388.2 429.1 388.9 428.4 389.7 428.4C390.5 428.4 391.6 429.3 392.5 429.3C393.3 429.2 393.9 428.2 394.7 428.1C395.5 428.0 396.4 428.3 397.2 428.6C397.9 428.8 398.7 429.2 399.1 429.7C399.6 430.2 399.6 431.0 399.8 431.5C400.0 432.1 399.9 432.6 400.4 433.1C400.8 433.6 402.2 434.3 402.6 434.6Z" fill="#d07c08" fill-opacity=".85"/><path d="M270.4 130.0C270.0 130.8 268.6 133.2 267.9 134.9C267.2 136.6 267.2 138.5 266.0 140.1C264.8 141.7 262.6 142.8 260.7 144.4C258.9 146.1 257.8 149.4 255.1 149.8C252.4 150.3 247.6 146.9 244.3 147.0C241.1 147.2 238.5 150.5 235.5 150.8C232.5 151.1 229.4 149.6 226.4 148.8C223.5 148.0 220.2 147.2 217.8 146.0C215.4 144.7 213.2 143.0 211.8 141.2C210.4 139.5 209.6 137.4 209.4 135.6C209.2 133.7 210.4 131.7 210.9 130.0C211.3 128.2 211.4 126.5 212.2 124.9C212.9 123.2 214.3 121.8 215.3 120.0C216.3 118.3 215.8 115.0 218.1 114.1C220.4 113.3 226.1 115.1 229.1 114.8C232.2 114.6 233.7 113.7 236.3 112.8C239.0 111.9 242.5 109.2 245.2 109.4C247.8 109.6 250.1 112.6 252.3 113.9C254.4 115.2 256.2 116.3 257.9 117.5C259.7 118.7 260.5 120.0 262.7 121.1C264.8 122.3 269.5 123.0 270.8 124.5C272.1 125.9 270.5 129.0 270.4 130.0ZM306.4 149.1C306.4 149.7 305.8 151.5 306.1 153.2C306.5 154.9 309.1 157.7 308.4 159.1C307.7 160.6 303.8 160.5 302.0 161.6C300.2 162.7 299.6 165.4 297.7 165.8C295.8 166.3 292.7 164.2 290.4 164.4C288.2 164.6 286.0 167.1 284.0 167.0C282.1 166.8 280.3 164.7 278.7 163.6C277.0 162.5 276.2 161.2 274.4 160.4C272.6 159.5 269.5 159.6 267.7 158.6C265.9 157.6 263.6 155.9 263.8 154.3C264.0 152.7 268.2 150.7 268.6 149.1C269.0 147.4 266.1 145.9 266.1 144.4C266.1 142.8 267.2 141.0 268.6 140.0C270.0 138.9 272.9 138.8 274.6 137.9C276.3 137.1 277.2 135.5 278.9 134.9C280.6 134.4 282.9 134.9 284.8 134.9C286.7 134.8 288.4 134.4 290.3 134.5C292.1 134.6 293.8 135.2 295.7 135.5C297.7 135.8 300.3 135.7 302.1 136.4C303.9 137.2 305.8 138.5 306.5 139.9C307.2 141.3 306.3 143.4 306.2 144.9C306.2 146.5 306.4 148.4 306.4 149.1ZM191.7 160.1C191.7 160.8 192.6 163.3 191.7 164.6C190.9 165.9 188.2 166.7 186.8 167.8C185.5 169.0 185.0 170.3 183.7 171.5C182.5 172.6 181.1 173.8 179.4 174.9C177.7 176.0 175.6 178.4 173.5 178.3C171.5 178.1 169.2 174.7 167.0 174.1C164.8 173.5 162.7 174.8 160.4 174.8C158.1 174.7 155.6 174.3 153.5 173.5C151.4 172.7 148.4 171.7 147.8 170.1C147.2 168.6 149.8 165.9 150.1 164.2C150.4 162.5 150.6 161.6 149.8 160.1C148.9 158.5 145.2 156.5 144.9 154.8C144.5 153.2 146.1 151.1 147.7 150.0C149.4 148.8 152.7 148.3 155.0 147.9C157.3 147.5 159.9 148.4 161.7 147.4C163.6 146.4 164.3 142.3 166.2 141.8C168.0 141.4 170.6 144.3 173.0 144.6C175.4 144.9 178.5 143.0 180.5 143.4C182.6 143.9 183.6 146.2 185.3 147.3C187.1 148.5 190.3 149.0 191.0 150.4C191.7 151.8 189.2 154.4 189.3 156.0C189.5 157.6 191.3 159.4 191.7 160.1ZM212.2 141.0C211.8 141.5 210.0 142.6 209.8 143.6C209.5 144.7 211.1 146.4 210.5 147.1C210.0 147.9 207.4 147.4 206.4 148.1C205.5 148.9 205.8 150.8 204.9 151.6C203.9 152.4 202.3 152.7 201.0 152.7C199.7 152.7 198.2 152.3 197.1 151.8C196.0 151.2 195.4 149.9 194.3 149.5C193.1 149.0 191.3 149.7 190.3 149.2C189.3 148.7 189.3 147.4 188.3 146.7C187.3 145.9 184.6 145.5 184.5 144.5C184.3 143.6 187.2 142.2 187.3 141.0C187.4 139.9 185.0 138.8 184.8 137.6C184.6 136.5 185.3 135.2 186.1 134.3C186.9 133.4 188.5 132.9 189.7 132.3C190.8 131.6 191.7 130.4 192.9 130.2C194.2 130.1 195.9 131.7 197.3 131.4C198.6 131.1 199.9 128.7 201.1 128.7C202.3 128.7 203.1 130.7 204.4 131.2C205.7 131.7 207.7 131.2 208.9 131.7C210.1 132.2 211.3 133.3 211.5 134.4C211.8 135.5 210.2 137.2 210.3 138.3C210.4 139.4 211.9 140.6 212.2 141.0ZM382.3 168.2C381.1 168.9 375.4 170.8 374.6 172.7C373.9 174.5 378.9 177.9 377.8 179.3C376.7 180.7 370.6 180.0 368.1 181.1C365.6 182.2 365.2 184.5 363.0 185.9C360.8 187.2 357.8 189.2 354.9 189.4C352.0 189.6 348.6 187.7 345.6 187.1C342.6 186.5 339.2 186.9 336.9 186.0C334.5 185.0 332.9 183.0 331.5 181.4C330.2 179.8 329.8 178.1 328.8 176.6C327.8 175.2 326.4 174.0 325.5 172.6C324.6 171.2 324.3 169.8 323.4 168.2C322.5 166.5 319.8 164.4 320.1 162.7C320.5 161.1 323.6 159.8 325.3 158.3C327.0 156.9 328.5 155.6 330.3 154.1C332.0 152.5 333.3 149.5 336.0 149.1C338.6 148.8 343.2 151.6 346.2 151.9C349.2 152.3 351.1 151.6 353.9 151.4C356.7 151.1 360.9 149.6 363.1 150.4C365.2 151.2 365.3 154.7 366.6 156.3C368.0 157.8 369.4 158.6 371.2 159.7C373.0 160.9 375.6 161.8 377.4 163.2C379.3 164.6 381.5 167.3 382.3 168.2ZM321.9 151.5C321.8 151.9 321.8 153.3 321.4 154.0C320.9 154.8 319.6 155.0 319.2 155.9C318.9 156.9 320.0 158.8 319.4 159.6C318.9 160.5 317.2 160.7 316.0 161.0C314.9 161.3 313.6 161.9 312.4 161.6C311.3 161.4 310.4 159.6 309.2 159.5C307.9 159.4 306.2 161.2 305.1 161.2C303.9 161.1 302.9 160.1 302.1 159.3C301.4 158.5 301.3 157.4 300.6 156.6C300.0 155.8 298.5 155.2 298.2 154.4C297.9 153.5 298.5 152.4 298.8 151.5C299.1 150.6 299.6 149.8 300.1 149.0C300.6 148.3 301.2 147.6 301.8 146.9C302.3 146.3 302.7 145.3 303.4 144.8C304.2 144.4 305.4 144.4 306.4 144.0C307.3 143.6 308.0 142.9 309.0 142.5C310.0 142.0 311.3 141.3 312.4 141.2C313.6 141.2 314.7 141.8 315.9 142.2C317.0 142.6 318.4 142.8 319.3 143.4C320.2 144.0 321.1 145.0 321.4 145.9C321.7 146.9 321.2 148.1 321.3 149.0C321.3 149.9 321.8 151.1 321.9 151.5ZM220.2 221.4C219.9 222.3 219.3 225.0 218.5 226.7C217.7 228.4 216.8 230.2 215.4 231.7C214.0 233.3 212.5 235.4 209.9 236.0C207.4 236.7 202.6 234.9 199.9 235.5C197.3 236.1 196.2 239.2 193.9 239.7C191.5 240.2 188.6 238.5 185.7 238.4C182.8 238.4 179.3 239.8 176.5 239.4C173.6 239.1 171.2 237.6 168.9 236.4C166.5 235.2 162.9 234.1 162.4 232.4C161.9 230.6 166.7 227.6 165.8 225.8C165.0 223.9 158.7 223.1 157.5 221.4C156.2 219.7 157.6 217.5 158.3 215.7C159.1 213.8 159.5 211.3 162.0 210.3C164.4 209.3 170.3 210.1 173.2 209.5C176.0 208.9 176.7 207.2 178.8 206.6C181.0 205.9 183.7 205.9 186.1 205.8C188.4 205.7 190.3 206.7 193.1 206.2C195.9 205.8 200.1 203.2 202.9 203.2C205.8 203.2 208.4 205.1 210.4 206.4C212.4 207.8 213.3 209.7 214.9 211.3C216.5 212.8 219.3 214.1 220.1 215.8C221.0 217.5 220.2 220.5 220.2 221.4ZM227.8 209.5C227.7 209.9 227.1 211.0 227.1 211.9C227.0 212.9 227.8 214.2 227.3 215.0C226.9 215.8 225.5 216.4 224.5 216.7C223.4 217.1 222.0 216.7 221.0 217.1C220.0 217.6 219.4 219.3 218.4 219.4C217.4 219.5 216.3 217.8 215.1 217.7C213.9 217.6 212.3 219.1 211.2 219.0C210.0 218.9 209.2 217.8 208.2 217.2C207.3 216.5 206.2 216.0 205.6 215.1C205.0 214.3 204.7 213.2 204.6 212.3C204.5 211.4 205.0 210.4 205.2 209.5C205.3 208.6 205.2 207.7 205.4 206.9C205.7 206.0 206.5 205.4 206.8 204.5C207.2 203.5 206.9 201.7 207.8 201.3C208.7 200.9 211.1 202.3 212.3 201.9C213.4 201.5 213.7 198.9 214.7 198.8C215.6 198.7 217.0 201.0 218.0 201.4C219.1 201.9 220.1 201.3 221.1 201.6C222.1 201.8 222.7 202.4 223.9 202.8C225.0 203.1 227.3 203.0 228.0 203.6C228.7 204.3 228.2 205.8 228.1 206.8C228.1 207.8 227.8 209.0 227.8 209.5ZM139.7 246.1C140.1 246.9 142.5 249.5 141.9 250.8C141.3 252.1 137.5 252.7 136.0 253.7C134.5 254.8 134.1 256.1 132.8 257.2C131.6 258.2 130.3 259.8 128.6 260.3C126.8 260.7 124.3 259.5 122.3 259.7C120.4 259.9 118.7 261.2 116.6 261.6C114.5 262.0 111.6 262.6 109.6 262.2C107.5 261.7 105.7 260.3 104.2 259.1C102.8 257.8 102.1 256.2 101.0 254.8C99.9 253.4 98.0 252.3 97.5 250.8C96.9 249.4 97.2 247.5 97.7 246.1C98.3 244.6 100.4 243.5 100.8 242.0C101.2 240.5 99.6 238.3 100.4 237.0C101.2 235.7 104.0 235.3 105.6 234.2C107.1 233.1 108.0 231.2 109.7 230.2C111.5 229.1 113.9 227.9 116.1 227.9C118.3 228.0 120.6 229.9 122.7 230.4C124.9 230.9 127.0 230.6 129.1 231.0C131.2 231.4 133.9 231.7 135.4 232.8C136.8 233.9 137.2 236.0 137.9 237.5C138.5 239.0 138.8 240.5 139.1 241.9C139.4 243.3 139.6 245.4 139.7 246.1ZM155.5 231.9C155.7 232.3 157.0 233.7 156.8 234.4C156.6 235.2 155.0 235.6 154.3 236.3C153.7 237.0 154.0 238.4 153.1 238.8C152.2 239.2 150.1 238.2 149.0 238.6C147.9 239.1 147.6 241.3 146.6 241.5C145.6 241.7 144.0 240.4 143.0 239.8C141.9 239.3 141.3 238.8 140.3 238.5C139.4 238.1 138.2 238.2 137.3 237.8C136.4 237.4 135.2 237.0 134.8 236.3C134.4 235.7 135.2 234.7 134.9 233.9C134.6 233.2 133.2 232.6 132.9 231.9C132.7 231.2 133.2 230.4 133.4 229.6C133.5 228.8 133.2 227.7 133.9 227.1C134.5 226.5 136.1 226.2 137.1 225.9C138.1 225.5 139.0 225.1 140.0 224.9C141.0 224.6 142.0 224.7 143.0 224.3C144.1 224.0 145.2 223.2 146.4 223.0C147.6 222.8 149.3 222.8 150.3 223.2C151.3 223.6 151.9 224.8 152.5 225.5C153.1 226.3 153.0 227.2 153.8 227.8C154.6 228.4 156.9 228.6 157.2 229.3C157.5 230.0 155.8 231.5 155.5 231.9ZM145.3 318.9C144.1 320.0 140.0 323.4 138.3 325.4C136.7 327.5 135.6 328.6 135.3 331.5C135.0 334.4 137.9 340.5 136.5 342.8C135.1 345.0 130.2 345.0 127.1 345.2C124.0 345.4 120.7 344.4 117.9 344.0C115.1 343.6 112.8 343.2 110.3 342.7C107.8 342.2 105.3 341.9 103.0 341.1C100.6 340.3 98.8 339.0 96.0 338.0C93.3 337.0 88.1 337.1 86.5 335.1C85.0 333.2 86.5 329.0 86.6 326.3C86.8 323.6 88.2 321.6 87.3 318.9C86.5 316.2 81.6 312.8 81.5 310.1C81.3 307.4 83.9 304.2 86.4 302.6C88.9 300.9 94.2 302.2 96.4 300.2C98.7 298.2 97.8 292.2 100.0 290.6C102.2 289.0 106.5 290.9 109.6 290.6C112.7 290.4 115.7 288.8 118.7 289.1C121.6 289.4 124.2 291.4 127.1 292.4C130.0 293.5 133.7 293.7 136.1 295.4C138.5 297.1 139.9 300.1 141.6 302.6C143.2 305.1 145.3 307.5 145.9 310.3C146.5 313.0 145.4 317.4 145.3 318.9ZM210.2 299.5C210.2 300.5 210.5 303.4 210.0 305.2C209.6 307.1 208.4 308.8 207.3 310.6C206.3 312.5 205.8 315.3 203.7 316.3C201.6 317.2 197.4 315.9 194.9 316.4C192.4 316.9 190.9 318.8 188.6 319.3C186.3 319.8 183.7 319.4 181.3 319.2C178.8 319.1 176.3 318.8 173.8 318.4C171.2 318.0 167.4 318.0 165.8 316.5C164.2 315.1 165.7 311.6 164.2 309.8C162.7 308.0 157.7 307.6 156.9 305.9C156.1 304.2 158.9 301.5 159.3 299.5C159.8 297.5 158.7 295.5 159.6 293.8C160.4 292.1 163.0 290.9 164.3 289.3C165.7 287.7 166.3 285.9 167.6 284.1C168.9 282.2 170.1 279.1 172.3 278.1C174.5 277.2 178.2 278.4 181.0 278.3C183.8 278.2 186.6 276.8 189.0 277.4C191.4 278.0 193.3 280.7 195.3 282.0C197.3 283.2 199.5 283.8 201.2 285.0C202.9 286.2 204.1 287.8 205.7 289.2C207.3 290.6 210.2 291.9 211.0 293.6C211.7 295.3 210.3 298.5 210.2 299.5ZM165.9 281.0C165.9 281.5 165.4 282.6 165.7 283.7C165.9 284.8 168.1 286.5 167.5 287.5C166.8 288.4 163.6 288.6 162.0 289.4C160.3 290.2 159.6 291.8 157.7 292.2C155.7 292.5 152.6 291.9 150.5 291.5C148.4 291.2 146.8 290.2 144.9 290.1C142.9 289.9 140.8 290.6 138.8 290.5C136.8 290.4 134.9 289.9 132.9 289.4C130.9 289.0 128.3 288.5 126.8 287.7C125.2 286.9 123.7 285.7 123.6 284.6C123.4 283.4 125.4 282.1 126.0 281.0C126.7 280.0 126.4 278.9 127.3 278.1C128.3 277.2 130.7 276.9 131.6 275.9C132.5 275.0 131.4 273.1 132.7 272.5C134.0 271.9 137.3 272.3 139.3 272.1C141.3 272.0 143.0 271.6 144.7 271.5C146.5 271.5 148.4 271.8 150.1 272.0C151.8 272.2 153.0 272.7 155.0 272.8C157.1 272.8 161.1 271.9 162.5 272.4C163.9 272.9 162.0 275.1 163.5 275.9C164.9 276.8 170.9 276.7 171.3 277.5C171.7 278.4 166.8 280.5 165.9 281.0ZM96.0 347.7C95.8 348.5 95.4 350.8 94.8 352.1C94.2 353.5 93.3 354.7 92.3 355.7C91.3 356.6 90.1 357.3 89.0 357.9C87.9 358.4 86.7 357.9 85.7 359.0C84.7 360.0 84.2 363.5 83.1 364.1C82.0 364.8 80.3 363.2 79.0 362.9C77.6 362.6 75.9 363.0 74.9 362.2C73.9 361.4 73.7 359.1 72.8 358.0C71.9 356.9 70.5 356.7 69.5 355.8C68.4 354.8 66.9 353.7 66.4 352.4C65.8 351.1 66.1 349.2 66.4 347.7C66.6 346.2 67.2 344.7 67.9 343.5C68.6 342.3 69.8 341.5 70.5 340.4C71.3 339.3 71.8 338.3 72.5 337.1C73.2 335.8 73.7 333.5 74.8 333.0C75.9 332.5 77.8 334.1 79.2 334.0C80.5 334.0 81.7 332.6 82.9 332.6C84.2 332.7 85.3 333.7 86.6 334.2C87.9 334.7 89.6 334.6 90.7 335.5C91.8 336.3 92.8 337.8 93.2 339.2C93.5 340.6 92.3 342.5 92.7 343.9C93.2 345.4 95.5 347.1 96.0 347.7ZM124.6 367.9C124.9 368.3 127.1 369.7 126.8 370.4C126.5 371.2 123.9 371.6 122.9 372.3C121.8 372.9 121.6 373.9 120.4 374.4C119.2 374.9 117.2 375.0 115.6 375.3C114.1 375.6 112.6 376.3 111.0 376.3C109.4 376.3 107.6 375.6 106.1 375.3C104.6 375.0 103.9 374.5 102.0 374.4C100.1 374.4 96.1 375.6 94.7 375.3C93.4 374.9 94.1 373.2 93.9 372.3C93.6 371.4 94.0 370.7 93.3 370.0C92.6 369.3 90.3 368.7 89.6 367.9C89.0 367.1 88.7 366.0 89.5 365.3C90.4 364.7 93.8 364.5 94.9 363.9C96.0 363.2 95.2 361.9 96.2 361.4C97.3 360.8 99.7 361.0 101.3 360.7C102.9 360.4 104.3 359.5 105.8 359.6C107.4 359.6 109.1 360.6 110.6 360.9C112.1 361.2 112.8 361.5 114.8 361.4C116.7 361.4 120.3 360.3 122.0 360.6C123.8 360.8 124.7 362.0 125.3 362.8C125.9 363.7 125.7 364.7 125.6 365.6C125.5 366.4 124.7 367.5 124.6 367.9ZM377.9 231.1C378.2 232.3 381.9 236.4 380.0 238.1C378.1 239.8 369.6 239.9 366.6 241.1C363.5 242.3 363.2 243.7 361.6 245.5C360.1 247.4 359.5 250.7 357.1 252.3C354.7 254.0 350.6 255.2 347.1 255.5C343.6 255.7 339.4 254.7 336.2 253.7C333.0 252.7 331.0 250.4 327.9 249.5C324.9 248.5 321.0 248.8 318.0 247.9C315.0 246.9 310.7 245.6 309.7 243.7C308.8 241.8 312.5 238.5 312.3 236.4C312.1 234.3 308.9 232.9 308.6 231.1C308.3 229.3 309.5 227.2 310.6 225.5C311.8 223.8 314.3 222.6 315.7 220.8C317.0 219.0 316.6 216.1 318.8 214.9C320.9 213.6 325.5 214.1 328.5 213.5C331.5 213.0 334.0 211.7 336.9 211.5C339.8 211.3 342.5 212.3 345.8 212.1C349.1 211.9 354.2 209.5 356.7 210.3C359.2 211.2 358.0 215.9 360.7 217.3C363.3 218.7 370.9 217.2 372.8 218.6C374.6 220.0 370.7 223.5 371.6 225.6C372.4 227.7 376.8 230.2 377.9 231.1ZM309.6 219.5C309.9 220.0 311.6 221.6 311.6 222.6C311.7 223.6 310.6 224.6 309.8 225.5C309.0 226.3 308.1 227.5 306.8 227.7C305.4 228.0 303.1 227.0 301.7 227.1C300.4 227.2 299.9 227.8 298.7 228.3C297.6 228.9 295.9 230.4 294.8 230.2C293.8 230.0 293.4 227.5 292.3 227.0C291.1 226.5 288.6 227.7 287.7 227.3C286.7 226.8 287.5 225.1 286.6 224.3C285.7 223.6 282.5 223.4 282.4 222.6C282.2 221.8 285.7 220.5 285.8 219.5C285.9 218.5 282.9 217.3 283.1 216.5C283.2 215.7 285.4 215.1 286.4 214.6C287.5 214.0 288.3 213.5 289.3 213.1C290.3 212.7 291.4 212.8 292.4 212.1C293.3 211.5 293.8 209.3 294.9 209.0C296.0 208.6 297.7 209.5 298.9 209.9C300.0 210.3 300.8 211.2 301.9 211.6C303.0 212.0 304.2 212.0 305.4 212.4C306.7 212.7 309.0 212.8 309.5 213.6C310.0 214.4 308.5 216.0 308.5 217.0C308.5 218.0 309.4 219.1 309.6 219.5ZM389.5 226.6C389.4 227.2 389.8 229.4 389.1 230.4C388.4 231.4 386.2 231.7 385.4 232.7C384.6 233.7 385.1 235.6 384.2 236.3C383.3 237.0 381.4 236.6 380.2 237.1C379.0 237.6 378.1 239.5 377.0 239.4C375.8 239.4 374.7 236.9 373.3 236.8C372.0 236.7 370.2 238.8 368.8 238.8C367.4 238.8 365.9 237.9 365.1 237.0C364.2 236.0 364.3 234.2 363.9 233.1C363.4 231.9 362.6 231.1 362.2 230.0C361.9 228.9 361.6 227.7 361.6 226.6C361.6 225.5 361.5 224.1 362.1 223.2C362.8 222.3 365.1 222.3 365.6 221.1C366.0 219.9 364.3 216.9 365.0 216.2C365.8 215.4 368.6 216.7 370.0 216.6C371.3 216.6 372.2 216.0 373.3 215.9C374.4 215.9 375.5 216.1 376.6 216.2C377.7 216.3 378.7 216.5 380.0 216.6C381.3 216.6 383.7 215.9 384.5 216.6C385.2 217.4 384.1 219.9 384.4 221.1C384.6 222.3 385.1 222.7 386.0 223.7C386.8 224.6 388.9 226.1 389.5 226.6ZM457.7 266.3C457.5 267.1 457.9 270.0 456.4 271.3C454.9 272.6 450.6 273.0 448.8 274.0C447.0 275.1 446.9 276.6 445.5 277.8C444.2 278.9 442.6 280.5 440.6 281.1C438.6 281.6 435.8 280.9 433.5 281.1C431.2 281.2 428.7 282.3 426.8 281.9C424.8 281.5 423.6 279.2 421.6 278.5C419.6 277.8 416.8 278.4 414.8 277.8C412.9 277.2 410.7 276.0 410.0 274.7C409.3 273.4 410.9 271.4 410.7 270.0C410.5 268.6 410.1 267.7 409.0 266.3C407.8 264.8 403.8 262.8 403.7 261.2C403.6 259.7 406.8 258.5 408.2 257.1C409.7 255.7 410.4 253.8 412.3 252.8C414.2 251.9 417.4 252.1 419.8 251.5C422.2 250.9 424.1 249.7 426.4 249.3C428.8 248.9 431.5 248.8 434.0 248.9C436.5 249.1 439.8 249.1 441.4 250.3C443.0 251.6 441.9 255.1 443.6 256.2C445.2 257.4 450.0 256.5 451.3 257.5C452.6 258.5 450.4 260.7 451.5 262.2C452.6 263.7 456.7 265.6 457.7 266.3ZM408.1 251.9C408.3 252.3 408.8 253.3 409.0 254.2C409.2 255.0 410.0 256.4 409.4 257.0C408.7 257.6 406.0 257.3 404.9 257.7C403.7 258.2 403.6 259.3 402.5 259.7C401.5 260.1 400.1 260.2 398.8 260.2C397.6 260.2 396.6 259.6 395.2 259.7C393.8 259.8 391.7 261.1 390.6 260.8C389.6 260.5 389.8 258.5 388.9 257.9C387.9 257.2 385.4 257.5 384.9 256.9C384.4 256.2 385.6 254.9 385.7 254.0C385.8 253.2 386.1 252.7 385.6 251.9C385.1 251.1 382.7 250.0 382.8 249.3C382.9 248.5 384.9 247.9 386.1 247.5C387.2 247.0 388.6 246.9 389.5 246.5C390.5 246.0 390.7 245.0 391.7 244.6C392.6 244.1 393.9 244.0 395.1 243.8C396.3 243.5 397.9 242.7 399.0 243.0C400.1 243.2 400.8 244.7 401.8 245.2C402.7 245.8 403.5 245.9 404.8 246.1C406.2 246.4 408.7 246.2 409.7 246.7C410.7 247.3 410.9 248.5 410.6 249.4C410.3 250.2 408.5 251.5 408.1 251.9ZM459.7 284.4C459.4 284.7 458.0 285.4 457.9 286.1C457.8 286.9 459.4 288.2 459.0 288.8C458.7 289.3 456.6 289.0 455.8 289.5C455.0 290.0 455.0 291.2 454.3 291.6C453.6 292.1 452.4 292.1 451.4 292.3C450.4 292.4 449.2 292.9 448.3 292.5C447.5 292.2 447.0 290.8 446.3 290.3C445.5 289.8 444.7 289.9 443.7 289.7C442.8 289.4 441.0 289.4 440.7 288.8C440.5 288.2 442.0 286.8 442.1 286.1C442.3 285.3 441.9 285.0 441.7 284.4C441.4 283.7 440.5 282.9 440.5 282.3C440.5 281.6 441.4 281.2 441.8 280.5C442.2 279.8 442.1 278.7 442.7 278.2C443.4 277.6 444.6 277.4 445.5 277.2C446.5 277.1 447.5 277.3 448.5 277.1C449.5 277.0 450.6 276.0 451.5 276.1C452.4 276.2 453.1 277.3 453.9 277.8C454.7 278.2 455.4 278.5 456.2 278.9C457.0 279.3 458.0 279.7 458.4 280.2C458.9 280.8 458.5 281.7 458.8 282.4C459.0 283.1 459.6 284.0 459.7 284.4ZM426.4 326.5C426.5 326.7 427.1 327.4 426.9 327.8C426.7 328.1 425.6 328.2 425.2 328.6C424.8 328.9 425.0 329.6 424.6 329.8C424.1 330.0 422.9 329.6 422.3 329.7C421.7 329.8 421.4 330.1 420.9 330.4C420.3 330.6 419.6 331.1 418.9 331.1C418.3 331.1 417.7 330.6 417.2 330.4C416.6 330.2 415.8 330.1 415.4 329.8C415.1 329.5 415.3 328.9 415.0 328.5C414.7 328.1 413.9 328.0 413.7 327.6C413.4 327.3 413.2 326.8 413.3 326.5C413.3 326.1 414.0 325.8 414.1 325.4C414.3 325.0 413.9 324.4 414.2 324.1C414.4 323.7 415.2 323.6 415.6 323.3C416.1 322.9 416.2 322.2 416.8 322.0C417.4 321.9 418.3 322.1 419.0 322.2C419.7 322.3 420.3 322.3 420.9 322.4C421.5 322.6 421.9 322.9 422.4 323.1C422.9 323.3 423.2 323.5 423.8 323.6C424.4 323.8 425.7 323.7 426.0 324.0C426.3 324.3 425.4 325.0 425.5 325.4C425.6 325.8 426.2 326.3 426.4 326.5ZM376.3 365.5C376.6 366.6 378.9 370.1 377.9 371.8C376.8 373.5 372.1 374.4 369.9 375.6C367.7 376.9 366.3 378.1 364.5 379.3C362.7 380.6 361.3 382.5 359.1 383.2C356.9 384.0 354.0 382.8 351.3 383.7C348.6 384.6 345.4 388.9 342.9 388.8C340.4 388.6 338.9 384.1 336.5 382.8C334.1 381.6 330.1 382.5 328.4 381.2C326.7 380.0 327.8 376.8 326.4 375.2C324.9 373.5 320.8 372.9 319.7 371.3C318.6 369.7 319.7 367.4 319.9 365.5C320.1 363.6 319.7 361.5 320.9 360.0C322.0 358.4 325.1 357.4 326.8 356.0C328.5 354.7 329.8 353.8 331.1 352.0C332.3 350.1 332.3 346.0 334.4 345.0C336.5 344.1 340.9 346.0 343.7 346.3C346.6 346.6 349.0 346.6 351.4 347.0C353.9 347.4 356.1 348.1 358.4 348.8C360.7 349.5 363.3 350.1 365.2 351.2C367.1 352.3 368.8 353.8 369.8 355.4C370.8 357.0 370.1 358.9 371.2 360.6C372.2 362.3 375.4 364.7 376.3 365.5ZM403.8 400.4C404.1 401.3 406.0 404.3 405.3 405.7C404.5 407.2 400.6 407.5 399.4 408.9C398.1 410.3 399.1 413.1 397.9 414.3C396.7 415.5 393.9 415.4 392.1 416.0C390.2 416.7 388.5 418.1 386.6 418.2C384.6 418.4 382.4 417.7 380.6 417.1C378.8 416.4 377.5 415.1 375.8 414.5C374.0 413.9 371.7 414.1 370.2 413.2C368.7 412.3 367.7 410.7 366.9 409.3C366.1 407.9 366.3 406.3 365.2 404.9C364.1 403.4 360.6 401.9 360.4 400.4C360.2 398.9 363.3 397.3 364.2 395.7C365.1 394.1 365.3 392.7 365.9 391.0C366.4 389.2 366.2 386.4 367.5 385.0C368.8 383.6 371.6 383.4 373.7 382.6C375.8 381.8 377.8 380.7 380.0 380.4C382.2 380.1 385.0 379.6 386.9 380.5C388.8 381.4 389.8 384.7 391.4 386.0C393.0 387.2 395.4 386.7 396.6 387.8C397.9 388.8 397.5 390.9 398.9 392.1C400.4 393.3 404.6 393.7 405.4 395.0C406.2 396.4 404.1 399.5 403.8 400.4ZM329.2 347.9C328.7 348.3 326.4 349.2 325.9 350.0C325.5 350.8 327.2 352.1 326.8 352.7C326.3 353.4 324.3 353.5 323.3 354.1C322.3 354.6 321.9 355.7 320.9 356.2C319.8 356.7 318.3 357.2 317.0 357.1C315.8 357.0 314.4 356.1 313.2 355.7C312.1 355.2 311.6 354.6 310.2 354.6C308.8 354.5 306.1 355.5 305.1 355.2C304.1 354.8 304.9 353.1 304.1 352.4C303.4 351.6 301.1 351.4 300.6 350.6C300.0 349.9 300.8 348.8 301.0 347.9C301.1 347.0 301.0 346.2 301.3 345.4C301.6 344.5 301.9 343.6 302.7 342.9C303.5 342.2 304.8 341.7 306.0 341.3C307.1 340.9 308.3 340.5 309.6 340.4C310.8 340.3 312.1 341.0 313.3 340.8C314.6 340.6 315.8 339.1 317.0 339.1C318.1 339.0 319.2 340.0 320.3 340.5C321.4 340.9 322.4 341.2 323.6 341.5C324.8 341.9 327.2 342.0 327.6 342.8C328.0 343.5 325.8 345.0 326.1 345.8C326.4 346.7 328.7 347.6 329.2 347.9ZM408.5 428.4C408.7 428.7 409.8 429.9 409.7 430.5C409.6 431.2 408.5 431.8 407.8 432.2C407.1 432.6 406.1 432.7 405.4 433.1C404.7 433.5 404.3 434.2 403.6 434.5C403.0 434.9 402.1 435.3 401.2 435.4C400.4 435.5 399.4 435.4 398.6 435.2C397.8 435.0 397.0 434.6 396.3 434.2C395.6 433.9 395.0 433.5 394.5 433.1C393.9 432.6 393.9 432.0 393.1 431.6C392.2 431.3 389.8 431.3 389.2 430.7C388.6 430.2 389.1 429.0 389.5 428.4C390.0 427.7 391.6 427.3 391.9 426.6C392.2 425.9 391.1 425.0 391.2 424.2C391.4 423.4 391.9 422.5 392.6 422.1C393.4 421.7 394.8 421.7 395.8 421.7C396.8 421.7 397.8 422.2 398.7 422.1C399.6 422.1 400.4 421.3 401.2 421.3C402.1 421.2 403.1 421.6 403.8 421.9C404.5 422.3 404.8 423.0 405.5 423.5C406.3 423.9 407.7 423.9 408.1 424.4C408.4 424.9 407.6 426.0 407.6 426.7C407.7 427.3 408.4 428.1 408.5 428.4Z" fill="#f8b81c" fill-opacity=".8"/><path d="M201.1 129.8l-1.0 -1.7M223.7 148.2l1.2 1.7M230.7 127.8l1.8 0.3M240.2 135.1l-1.6 2.4M206.3 149.1l-1.4 3.2M214.4 153.3l-1.7 1.0M247.3 146.5l2.8 0.9M212.6 155.6l-2.1 3.6M236.6 146.0l-2.9 0.4M219.7 140.7l-1.5 2.4M224.9 135.8l0.7 2.8M232.0 155.6l-2.3 1.1M227.9 143.2l-2.2 0.2M216.6 155.5l-1.4 1.9M237.9 151.4l-2.7 0.2M229.6 156.1l-2.6 0.1M228.6 142.4l-2.1 0.7M208.5 136.1l-1.6 0.5M235.0 131.5l-2.0 0.4M228.1 148.6l2.7 0.9M230.2 152.2l2.2 1.7M209.8 130.3l-1.5 0.7M234.2 149.6l0.9 2.0M250.6 143.7l2.1 1.0M209.1 139.1l-0.2 2.4M233.8 144.5l-0.0 2.1M214.6 143.7l-2.5 1.8M260.8 150.2l1.8 0.7M283.7 160.7l2.1 0.6M269.8 159.3l-2.5 0.1M265.7 146.3l0.8 2.1M270.7 145.7l-0.9 2.5M264.1 154.1l-0.0 2.4M279.1 156.3l0.4 1.7M283.9 159.8l-1.7 1.4M275.2 152.8l-1.5 2.2M151.8 179.2l2.3 0.2M143.2 168.6l-2.7 1.5M161.7 156.0l-0.5 2.1M174.8 159.6l1.4 1.1M136.8 170.7l-2.4 0.4M153.8 176.9l1.0 1.8M156.3 174.1l2.1 0.9M147.3 176.0l0.4 2.9M170.9 163.0l-1.5 1.3M142.3 159.2l2.3 0.6M166.5 159.5l2.0 0.8M163.8 162.0l2.2 2.3M147.9 169.0l0.6 2.5M153.1 178.7l0.6 1.8M152.7 150.6l-1.9 1.8M143.4 159.6l-1.8 1.9M172.8 164.5l-1.7 1.7M139.3 176.8l-2.1 1.2M141.3 160.0l-1.1 -1.6M146.1 155.3l-0.5 -1.6M165.1 181.3l0.7 2.8M164.7 175.6l-2.0 0.8M157.2 158.5l-0.2 2.6M141.2 162.7l2.3 0.5M163.8 170.5l0.6 1.6M153.2 160.0l-0.6 1.7M158.1 159.6l-1.6 1.2M132.0 169.7l-3.9 0.4M141.6 165.6l-2.8 0.9M179.0 160.9l2.6 0.2M178.5 179.5l0.2 3.2M159.6 152.5l-1.1 2.1M160.6 172.0l-2.3 2.0M155.6 157.2l-1.7 1.6M141.3 172.5l-2.5 1.0M177.9 161.5l1.1 2.2M174.1 171.6l-0.9 1.7M184.6 143.5l-1.0 1.5M184.4 140.7l-0.7 2.9M184.7 141.8l2.5 1.4M197.2 148.6l-1.7 0.8M189.9 144.0l2.1 1.3M192.0 148.0l-1.5 1.6M186.8 141.7l2.8 0.1M186.5 139.8l-1.9 0.6M199.9 156.1l-1.3 2.0M191.1 139.5l1.9 0.7M191.7 144.8l2.1 1.0M332.9 178.2l-2.0 0.8M318.0 175.5l1.2 2.8M298.9 159.2l0.6 2.8M306.0 151.9l-0.9 2.0M162.9 232.0l1.1 2.2M164.9 227.6l2.4 0.6M176.5 223.3l-2.5 1.3M194.4 236.6l2.0 2.0M163.7 249.2l-4.2 2.4M173.9 222.1l1.5 0.9M181.5 235.3l1.4 1.8M188.3 220.9l1.2 2.8M152.2 218.4l-3.8 -0.3M171.5 226.3l-1.4 2.7M163.1 229.0l0.6 1.6M180.3 226.7l-0.4 3.1M161.4 224.8l-2.7 0.6M186.9 241.2l1.5 1.3M189.7 236.7l2.0 0.7M175.8 214.3l-1.6 0.4M179.6 239.9l-3.2 0.6M160.7 223.1l-2.5 1.1M164.7 231.2l-0.3 2.4M182.5 225.9l-0.3 1.7M173.2 246.2l-0.1 3.7M175.4 228.3l2.4 0.1M167.2 243.1l2.0 1.7M141.5 223.6l-3.6 -1.6M177.5 247.6l-2.2 2.1M186.3 237.1l-1.8 1.3M159.3 219.6l-0.1 2.5M153.3 224.9l-0.9 2.2M157.9 235.3l-1.6 2.1M182.0 216.3l2.4 1.1M170.1 211.7l1.9 1.6M185.4 223.9l-1.6 0.3M152.9 217.5l-2.1 -1.5M149.5 238.7l-3.6 -0.2M164.9 239.0l1.1 1.4M180.4 219.1l1.6 2.6M171.3 228.0l-2.6 0.1M160.2 219.0l2.0 2.3M187.3 228.8l-2.7 0.8M140.4 232.4l-3.4 2.1M208.6 218.7l-0.0 2.0M201.0 216.8l-2.4 2.5M213.9 224.6l-2.3 2.0M204.8 212.7l1.5 1.0M200.2 211.1l3.0 0.6M204.6 210.8l2.2 1.4M92.3 244.9l-1.7 -1.4M102.9 252.6l0.6 2.6M95.1 271.4l-4.5 -0.7M116.2 238.2l-1.7 2.4M114.0 266.5l1.6 1.9M114.0 251.3l1.6 2.1M93.5 260.9l-2.0 0.2M85.7 249.2l-2.6 -0.5M132.2 260.1l1.7 2.2M89.3 240.9l-2.7 -2.3M131.2 262.1l0.1 1.9M135.7 250.7l1.3 2.6M113.5 252.6l-2.7 0.3M91.6 257.3l-2.0 1.9M108.8 262.0l-1.7 1.1M101.8 246.9l-2.9 1.3M114.5 251.0l-2.6 1.1M103.4 254.8l1.1 1.9M133.8 260.4l1.3 1.8M90.9 258.2l-1.5 1.5M117.0 259.7l-1.7 1.3M104.2 241.5l0.5 1.8M98.5 243.1l-2.5 0.6M99.7 255.9l-0.1 2.9M102.3 253.3l-3.0 1.2M124.5 257.8l-1.3 1.0M96.5 258.0l-0.7 2.0M108.4 240.2l-1.0 2.1M91.0 260.6l-3.7 0.1M87.4 267.1l-4.7 -1.4M99.7 254.7l-1.8 0.0M116.0 245.2l0.9 2.3M124.3 270.3l0.5 2.6M126.2 260.1l2.5 1.2M122.4 254.6l-2.2 0.4M104.6 263.1l0.9 1.7M95.5 245.2l-2.3 0.4M109.9 256.7l1.3 1.2M123.5 260.9l-2.0 2.6M108.3 249.8l1.0 1.4M102.5 246.5l1.8 0.7M112.5 263.0l-2.8 0.6M98.9 255.5l0.8 1.9M97.0 264.8l-2.2 0.8M106.3 254.4l1.0 2.7M110.5 260.3l0.4 1.6M95.5 273.1l-4.0 -0.2M86.3 252.1l-4.0 -0.1M116.9 250.2l0.4 2.2M90.6 241.9l-2.9 -0.1M116.5 235.0l-1.5 2.3M129.4 235.1l-0.1 2.2M147.6 241.8l-1.6 2.4M148.0 234.9l0.1 2.5M127.0 241.1l-3.2 3.9M135.6 227.8l-1.2 2.4M99.3 336.3l-1.2 1.6M77.7 356.0l-2.9 -0.6M113.0 322.4l-1.5 0.9M83.4 332.3l-2.6 0.4M81.2 333.1l2.4 1.7M122.0 358.1l1.7 2.4M67.9 331.7l-3.5 -0.5M105.5 303.3l1.9 0.9M101.6 337.1l-0.9 1.6M100.0 333.0l1.2 1.6M79.5 365.6l-1.1 3.1M73.6 315.6l-3.4 0.8M108.4 326.3l-1.1 1.7M77.0 323.6l0.4 2.9M114.2 316.8l-1.6 0.8M68.6 340.9l-3.3 0.5M112.0 321.2l0.6 2.8M129.3 321.0l-2.3 1.6M124.6 327.7l-2.7 0.8M97.1 326.5l2.3 1.0M81.7 351.4l-3.1 2.2M84.7 337.4l-2.0 2.2M86.5 297.9l-2.3 -2.0M81.6 339.6l0.1 2.0M91.1 342.5l2.4 1.1M124.2 347.8l-1.9 2.4M73.5 347.8l-2.7 1.0M98.7 323.4l-2.1 1.6M105.7 343.4l-1.6 0.6M88.1 349.6l-0.7 1.6M95.9 324.6l-1.7 0.4M109.4 312.9l-0.4 2.7M126.0 337.4l1.6 1.2M130.1 323.5l1.2 1.9M74.2 328.4l2.3 1.7M74.5 330.3l1.0 1.3M112.1 327.3l0.2 2.0M104.8 300.8l-0.1 3.2M85.2 330.2l0.7 2.0M112.1 336.1l-0.9 2.6M116.2 349.7l1.0 1.5M68.2 339.8l-2.2 -1.7M78.3 319.3l-0.1 2.2M96.1 316.5l-1.1 2.1M89.7 362.0l-1.6 2.8M78.4 350.2l-1.6 1.5M88.5 363.9l-4.5 1.0M87.4 326.6l1.5 0.9M80.6 358.3l-4.2 0.3M95.2 322.3l2.8 1.2M119.0 309.3l-1.6 2.6M123.1 339.2l-1.6 0.7M126.5 343.6l-0.2 1.7M85.9 333.9l-1.8 0.7M121.0 316.5l0.7 1.5M109.5 348.3l2.3 2.1M106.3 337.5l-0.1 2.1M115.0 331.3l-2.1 0.9M109.4 355.3l-2.2 1.6M62.8 320.2l-2.9 1.5M111.0 327.6l-1.2 2.4M91.2 334.3l-0.5 1.8M129.7 330.6l-2.7 0.2M112.3 360.0l2.1 2.8M95.9 318.7l1.0 2.8M92.2 333.7l-1.4 2.4M77.3 339.5l1.3 2.0M100.5 355.3l-1.2 1.9M88.8 306.8l1.1 2.6M97.1 361.4l-0.6 3.2M114.7 363.6l1.5 2.4M98.0 311.1l-0.2 3.0M76.3 333.2l1.2 2.6M94.0 347.9l2.2 0.6M111.2 338.8l-2.4 1.2M100.2 351.6l-1.8 1.4M75.5 351.1l-2.2 0.5M96.2 325.7l0.9 2.2M97.1 313.5l1.9 1.3M98.5 350.0l1.9 2.0M89.5 308.2l-1.5 1.3M114.0 308.2l-1.5 2.1M102.2 359.3l-2.0 2.2M73.0 326.0l2.6 0.4M108.3 336.8l-2.5 0.0M104.1 337.8l2.0 1.8M90.3 345.8l-2.2 2.0M98.7 338.1l-1.0 3.1M110.3 336.1l-1.6 1.7M115.0 366.0l0.6 4.7M99.4 318.1l2.0 1.0M61.8 350.3l-5.9 2.4M118.9 352.9l0.7 3.0M98.8 304.8l-0.4 3.0M114.0 328.5l-2.8 1.2M65.1 323.4l-4.6 -1.4M95.5 339.6l-1.6 0.4M68.6 333.3l-3.3 -0.5M97.7 317.4l-1.9 1.6M86.2 328.2l2.5 1.6M79.0 306.1l-3.9 -0.7M96.4 331.4l-0.6 2.4M107.5 330.0l-0.0 1.6M78.9 355.8l-2.4 2.1M127.1 353.3l1.0 3.5M110.5 324.5l-1.5 1.2M160.6 314.7l-1.3 1.5M167.6 327.0l-1.7 0.2M145.6 325.2l-5.3 1.6M178.8 301.9l2.6 0.9M165.5 310.8l2.2 1.3M163.2 306.8l-2.2 1.7M153.9 306.6l2.6 0.6M158.7 304.8l-2.5 0.8M188.7 296.4l0.8 2.8M172.0 296.0l1.7 0.9M181.9 320.2l1.1 1.4M153.3 323.3l-2.8 0.1M169.1 309.9l1.1 1.4M143.9 312.4l-2.5 -1.0M169.6 309.1l-0.8 2.2M178.1 299.1l0.2 2.0M172.8 308.3l-1.2 1.8M167.3 304.6l-1.9 1.8M170.6 325.2l-0.2 2.9M166.3 298.1l0.5 2.1M185.7 311.2l-1.9 2.4M183.1 314.7l-2.3 0.2M177.7 301.1l-1.5 0.9M173.2 309.2l-1.2 1.6M174.4 296.9l1.8 1.0M186.4 302.1l1.8 1.1M153.5 297.9l-1.2 -1.8M158.6 310.1l2.7 0.6M187.6 293.7l-0.2 2.1M182.5 305.5l0.7 1.6M187.4 317.1l0.7 1.9M161.6 323.9l2.4 0.6M164.2 321.5l1.4 1.2M188.8 298.8l2.1 2.4M177.0 308.0l0.1 2.9M171.8 303.9l-0.3 2.4M176.4 312.8l-1.7 2.6M159.7 314.7l0.2 2.7M163.2 311.0l1.1 1.5M141.9 312.3l-4.5 -1.9M191.4 306.8l-0.4 1.9M154.1 305.2l-2.8 1.2M156.3 295.8l-2.1 1.8M170.4 309.6l1.6 0.5M158.9 302.9l-1.4 1.0M165.9 324.8l1.5 2.7M146.0 281.4l1.0 2.6M118.5 287.9l-3.5 -0.4M149.1 288.6l-2.4 1.0M135.8 287.0l1.6 0.4M130.4 281.0l-2.7 1.5M133.8 284.0l2.3 1.3M133.8 290.0l0.1 3.1M143.5 283.9l2.9 1.1M129.4 280.9l-2.2 0.9M138.8 283.3l-2.5 2.0M120.0 283.1l1.3 1.1M135.2 295.7l-0.8 2.1M150.0 292.8l-2.1 1.7M146.6 286.2l-1.4 1.2M136.8 286.0l-0.9 2.8M140.1 293.5l-0.8 2.2M124.4 278.2l-1.7 0.5M160.6 288.3l3.0 0.7M132.1 291.3l2.7 0.7M119.8 298.1l-2.5 2.5M143.9 291.3l-0.0 2.3M153.6 290.2l1.6 0.9M126.1 279.0l-2.6 0.9M84.9 352.7l2.6 1.8M78.8 345.7l-2.7 0.3M75.9 349.7l1.4 1.1M70.1 364.5l-1.5 1.4M82.2 347.5l-0.2 2.5M82.0 359.2l0.6 2.7M72.9 373.6l-0.7 3.4M63.9 349.8l2.2 1.1M76.7 356.2l2.6 0.4M70.7 353.2l-1.5 0.6M63.3 346.2l-2.8 -0.8M79.0 360.3l-1.7 0.4M70.1 341.4l1.8 0.2M79.2 356.4l-0.1 2.1M90.1 363.0l1.0 2.3M83.2 360.2l-0.9 2.7M60.0 359.0l-3.0 1.2M88.7 360.9l-1.7 1.3M66.6 354.6l-3.0 0.1M83.4 362.3l2.5 0.4M89.2 370.6l2.3 0.0M93.3 379.8l-3.1 0.2M94.6 376.9l-1.2 2.7M99.6 381.2l-3.0 1.0M91.6 372.3l-1.2 1.6M97.8 376.0l2.0 0.0M85.9 373.1l1.3 2.1M84.8 376.3l-3.3 1.2M113.5 371.0l1.3 2.5M98.5 378.5l-1.8 1.7M95.2 368.0l1.7 2.6M86.9 369.4l-1.1 2.1M115.2 365.0l-2.2 2.0M103.6 381.4l-1.2 5.1M329.4 238.7l-1.8 1.2M287.2 226.1l2.1 0.0M290.5 217.7l1.3 2.9M284.6 225.7l-2.9 0.7M336.3 376.8l0.6 1.9M314.7 350.9l1.5 1.2" stroke="#c46907" stroke-width="2.4" stroke-linecap="round" fill="none"/><path d="M214.8 132.2l2.5 0.6M220.3 139.9l-0.5 3.0M225.3 118.4l1.7 0.8M193.2 136.3l-4.2 0.8M191.7 154.2l-4.3 1.9M213.2 137.1l-1.1 1.6M206.8 146.2l1.1 3.0M231.0 145.2l-0.2 2.9M218.1 138.3l-1.9 2.6M229.0 153.4l-0.5 3.0M195.7 151.0l-4.7 -0.5M248.2 142.3l-2.7 1.4M227.4 143.6l-0.3 1.8M215.0 146.9l1.8 0.8M182.9 144.6l-6.1 0.2M248.1 151.7l1.5 1.2M232.3 143.6l-1.5 2.4M191.0 152.8l-3.7 -0.1M199.6 151.6l-4.0 -0.8M212.1 156.9l-1.6 3.7M197.6 134.2l-2.9 1.1M215.7 124.6l1.1 2.9M204.7 131.6l-1.1 1.2M221.2 154.2l0.3 1.7M242.7 123.5l2.2 0.8M188.2 144.1l-2.9 -0.2M224.0 135.2l-0.3 2.8M227.5 125.8l-1.8 0.2M230.8 151.3l-1.3 2.1M233.1 133.4l-1.7 2.2M232.2 125.4l1.3 1.5M211.9 141.3l-0.9 1.4M198.9 155.9l-4.7 -0.5M237.6 121.0l-0.5 2.6M218.0 122.5l-1.5 1.3M212.8 160.9l-0.5 4.2M249.0 134.7l-2.7 0.9M252.8 130.1l-2.3 0.8M211.2 152.8l-2.2 2.0M202.2 138.9l-2.0 1.6M283.4 152.2l-1.7 1.0M282.5 164.9l-2.1 0.6M261.1 159.1l-1.6 1.5M291.1 154.0l0.5 2.2M259.8 172.5l-3.1 -0.9M279.4 140.9l-0.5 3.1M271.6 163.3l-1.3 2.5M260.7 165.6l-3.9 1.1M295.6 160.9l1.7 1.7M290.0 164.7l1.4 1.0M259.4 159.2l-2.7 -1.5M261.5 167.9l-4.3 0.2M272.4 172.8l-0.0 3.2M141.8 174.2l-2.3 0.8M158.1 189.1l-1.4 3.2M151.9 149.0l-1.9 -3.2M162.4 149.0l2.2 2.3M169.2 164.9l1.8 1.2M149.4 150.2l-3.6 -1.4M171.7 176.5l-0.4 2.4M185.3 166.9l-2.0 1.6M153.1 163.2l-2.3 1.7M168.8 187.1l-0.4 2.5M172.6 167.0l2.5 0.6M175.0 180.8l0.3 2.8M163.7 174.3l0.3 2.5M148.8 166.8l1.4 2.1M155.4 191.3l0.5 5.2M151.5 163.0l1.2 2.0M143.0 162.9l0.1 3.1M185.8 164.9l-0.1 2.6M172.2 150.1l-1.8 2.4M172.4 164.8l-1.1 3.0M146.8 163.7l1.0 1.5M174.3 185.2l-1.4 3.5M171.5 172.3l0.6 2.8M185.2 148.3l-0.6 3.0M178.9 139.9l-1.3 -3.4M345.5 166.5l2.4 2.0M336.5 171.9l0.9 1.7M318.9 175.8l-1.4 1.5M330.7 194.7l-2.1 2.6M315.7 171.9l1.5 0.8M339.0 174.1l0.4 3.0M333.0 195.1l-1.8 0.9M331.2 172.1l2.5 1.1M349.1 169.5l0.9 3.1M336.7 179.9l-0.9 2.9M317.0 167.3l-1.6 0.9M297.1 155.6l-1.5 2.0M305.9 150.2l-0.1 3.0M303.7 153.5l2.0 2.4M303.0 164.9l-2.0 0.4M310.1 152.5l-2.6 1.7M187.4 216.5l-0.7 2.7M184.5 225.1l2.2 0.3M149.2 215.1l-1.4 -2.6M191.5 247.2l-1.1 2.2M183.7 213.9l-0.2 1.8M151.5 225.7l-2.1 1.0M150.7 241.4l-3.0 3.4M200.4 222.9l1.1 1.5M155.7 236.9l-1.6 0.7M160.3 234.4l1.3 1.5M170.3 245.0l-0.0 2.3M165.3 217.9l0.0 2.7M166.8 237.4l-1.1 2.9M196.1 221.9l1.5 1.0M139.3 237.5l-2.8 1.4M191.4 238.3l-0.0 2.0M174.0 246.4l-3.2 1.1M178.7 225.3l-1.8 0.0M148.0 221.6l-3.0 1.2M168.1 250.3l-0.4 3.8M188.4 232.2l1.5 1.3M182.2 254.5l-2.6 2.9M185.6 235.0l-1.6 0.9M196.1 213.9l-1.7 1.7M151.6 223.6l-1.6 -2.9M176.2 218.7l-1.1 1.5M160.7 215.4l-1.1 2.4M180.3 235.2l1.6 0.8M176.0 253.1l0.9 2.8M188.4 239.9l-1.8 0.4M167.5 212.4l1.2 2.7M168.3 251.3l-2.7 2.2M201.3 224.5l0.3 2.2M170.1 220.2l3.0 0.2M222.3 208.5l1.0 2.5M219.5 220.8l1.0 2.6M217.7 216.1l1.0 1.4M203.4 207.5l-0.6 3.0M198.0 214.8l-3.2 0.4M208.7 204.7l-1.8 1.2M220.1 216.7l-1.6 1.9M222.3 209.1l-0.8 2.9M208.0 204.8l0.0 2.4M110.5 245.1l-1.7 1.0M84.1 245.6l-1.6 -2.2M92.2 267.7l-3.8 3.7M98.2 245.6l2.0 1.6M126.2 249.3l1.6 0.3M111.9 252.9l2.5 1.2M107.8 258.6l2.9 0.1M108.4 263.5l-2.0 0.9M89.1 257.7l-1.6 1.5M129.1 273.9l2.1 2.9M109.0 244.7l0.7 1.9M80.3 253.1l-4.8 1.9M99.3 267.1l-2.9 0.1M107.5 239.6l-3.0 0.4M119.9 250.0l-2.6 1.7M78.8 246.8l-2.8 -2.6M108.4 237.8l0.9 1.7M103.2 249.6l-1.4 0.9M125.9 265.5l0.4 2.8M87.7 249.6l-4.2 0.1M111.2 241.5l-1.8 0.8M90.2 246.6l-3.2 1.2M94.2 270.8l-4.8 -0.7M113.6 246.4l1.5 1.2M87.7 239.7l-2.4 -3.3M124.4 235.5l1.1 -1.7M123.3 243.1l-1.9 0.4M135.5 244.9l1.9 -0.1M81.6 246.2l-3.7 -2.8M92.1 244.6l0.5 2.6M128.1 267.2l3.2 2.2M124.9 255.1l2.1 0.5M133.7 245.4l0.8 2.5M101.5 260.7l0.9 2.5M127.1 239.2l-1.9 1.2M138.4 239.9l-1.7 1.9M137.7 246.0l0.0 2.8M137.7 233.0l-0.7 2.1M140.2 245.2l-2.3 2.9M149.1 240.4l-0.2 3.0M127.7 232.1l-2.9 1.7M128.5 244.5l-4.7 0.5M134.3 240.7l0.2 2.1M112.1 324.1l0.6 3.0M82.9 300.6l-1.3 -2.0M72.8 346.3l-2.7 1.1M122.8 346.2l-0.5 1.9M119.7 351.3l2.4 1.2M67.4 350.6l-3.9 4.2M79.9 314.2l-2.7 -1.6M134.6 334.2l-1.9 1.0M74.9 342.2l-3.4 1.2M83.9 338.9l-1.4 2.5M123.7 305.6l-1.8 1.0M66.5 338.7l-3.7 -0.1M103.0 339.6l1.2 2.4M108.1 294.6l-0.1 -2.9M129.2 312.5l1.8 -2.3M108.4 294.1l2.8 -3.2M138.7 339.3l2.0 2.3M63.1 332.6l-3.4 -2.0M112.3 360.9l-0.7 2.2M131.1 334.4l0.8 2.8M86.6 361.4l-2.7 2.3M75.8 318.2l-2.3 -0.9M114.8 334.0l1.0 2.2M128.7 313.9l-1.9 2.2M117.4 354.3l-0.1 3.0M111.5 374.5l-2.3 3.4M119.7 343.4l-2.3 0.5M74.5 303.5l-2.7 -0.0M64.1 331.3l-4.6 1.9M99.7 345.9l2.6 1.8M117.4 342.6l0.3 2.2M109.7 360.6l-1.0 2.5M121.6 305.9l-2.7 1.0M125.1 356.1l1.2 3.4M88.0 298.5l-0.5 -2.6M176.3 285.0l0.6 2.7M195.4 303.1l-0.8 2.2M181.4 297.8l2.5 1.7M180.6 311.2l-1.6 0.5M152.2 295.3l-0.7 -2.5M183.1 320.7l3.1 0.8M148.1 308.5l-2.6 -0.1M167.8 329.7l-1.1 3.2M143.8 293.8l-1.2 -3.0M177.8 286.0l-3.0 0.9M202.6 306.6l-1.2 1.4M148.1 291.7l-0.8 -4.7M151.3 289.6l-4.6 -1.5M132.9 310.8l-2.5 -4.1M181.4 322.1l-2.2 1.6M192.4 292.4l1.0 2.4M187.3 301.8l-0.1 2.5M200.8 301.4l-1.9 0.9M158.4 326.5l-3.1 2.2M185.3 331.1l-2.9 2.3M178.1 320.4l1.9 0.7M179.8 324.4l2.6 1.1M153.0 295.1l-2.4 0.6M179.8 329.4l0.9 3.0M144.6 296.1l-1.3 -2.4M162.6 294.7l1.1 2.1M185.4 305.7l-1.4 1.6M182.4 319.6l-0.1 1.7M138.4 308.0l-4.6 1.8M170.4 302.7l0.0 1.8M147.0 322.8l-3.2 0.0M199.5 316.4l-2.5 0.9M194.6 301.9l-1.7 2.2M181.9 316.6l0.3 1.7M180.7 310.2l2.1 2.2M179.3 316.5l-0.7 1.7M148.7 286.7l2.1 1.5M107.3 289.9l-5.4 -2.4M127.4 298.1l-0.3 3.7M144.3 274.8l2.4 0.5M149.2 290.0l1.9 0.1M110.5 292.0l-4.0 -0.6M152.3 278.0l-0.4 1.6M122.3 294.2l-3.7 1.6M112.1 290.1l-2.4 1.3M133.0 276.6l2.2 1.3M151.3 287.7l1.4 1.4M123.7 286.9l-0.7 1.8M115.7 290.8l-3.3 3.7M113.3 285.4l-2.8 0.7M91.5 353.7l4.1 0.2M66.9 338.6l-0.5 -4.3M88.4 353.0l-2.9 0.3M70.3 356.4l-1.1 2.6M79.9 349.1l0.2 2.9M88.7 365.2l3.5 2.0M64.7 352.8l-1.4 2.6M88.5 357.5l3.1 1.2M74.7 345.2l0.5 3.0M63.2 345.4l-3.9 -1.7M89.2 356.8l2.9 1.1M86.0 372.1l-2.8 1.4M113.4 375.8l-1.0 2.8M77.3 368.7l-5.4 -0.1M117.5 370.1l0.8 2.4M102.1 370.0l-1.3 1.7M76.1 371.9l-3.8 -4.3M96.3 374.5l-1.8 2.0M92.5 377.5l-1.6 3.5M77.3 376.4l-3.6 -2.7M94.1 369.1l2.3 0.6M291.6 243.3l-4.0 -0.3M336.9 241.1l2.7 1.0M327.4 225.5l-0.2 2.1M298.6 232.7l-0.3 2.7M330.2 242.1l-1.9 1.9M342.4 239.1l0.8 1.4M290.2 242.2l-3.6 1.6M340.7 246.0l2.4 0.5M300.5 232.3l-0.7 1.7M325.6 245.3l0.7 3.1M298.5 243.3l-1.0 2.6M344.9 249.5l2.0 1.1M320.4 244.1l0.9 1.4M318.4 224.1l-2.5 0.1M337.4 254.9l-1.0 1.3M324.8 238.1l0.3 3.0M336.4 241.4l1.5 1.3M306.4 232.3l-2.5 0.3M339.2 235.1l-0.0 1.7M320.8 248.0l-1.6 0.6M286.9 249.7l-4.0 0.2M329.4 235.8l1.7 1.8M279.4 223.3l-3.6 0.3M280.5 222.9l-1.0 2.3M279.8 218.1l-2.1 0.0M292.1 231.8l-0.2 3.1M278.3 224.0l-4.2 0.7M374.7 235.5l2.3 0.7M373.6 234.7l1.5 2.5M408.8 270.7l-1.0 2.3M392.9 258.2l2.3 0.2M385.4 259.1l-1.2 1.3M397.3 256.2l0.6 1.8M317.9 369.9l0.8 1.6M323.1 384.9l1.2 2.6M329.1 370.5l2.2 2.3M348.8 378.6l-2.3 0.4M335.9 370.3l-1.7 0.3M339.9 379.8l2.3 1.6M316.7 388.1l-2.2 0.3M325.7 377.6l2.2 1.6M333.2 392.4l-0.7 1.8M320.0 367.2l-0.5 2.7M317.6 370.6l-2.0 0.6M355.4 374.3l-1.3 1.6M313.4 388.4l-2.9 2.1M343.1 383.2l-1.6 0.7M344.9 382.9l-2.0 0.7M310.8 385.4l-3.5 -0.1M327.1 368.1l2.1 1.2M370.6 406.7l-1.2 2.7M366.5 413.1l2.0 1.9M375.9 405.4l-0.5 1.7M373.3 403.4l1.5 1.1M309.6 352.5l-2.2 0.3M314.1 351.1l-1.4 2.5" stroke="#d07708" stroke-width="2.4" stroke-linecap="round" fill="none"/><path d="M221.7 125.0l3.1 0.9M189.0 141.4l-2.2 -2.4M189.2 124.9l-4.7 1.5M219.0 120.0l-1.0 -2.9M258.0 144.0l-0.8 2.9M190.0 135.4l-3.7 0.3M261.5 143.8l2.6 1.2M240.1 138.4l-0.4 2.2M228.2 137.8l-0.4 2.7M208.7 132.7l-2.0 0.6M201.7 156.4l-2.7 0.1M204.9 153.4l-4.0 0.0M222.7 116.5l-1.2 -3.1M200.1 131.3l-0.6 2.3M201.1 158.4l-5.0 2.2M238.1 142.4l-1.5 0.8M224.5 150.6l-0.4 2.1M207.5 141.3l-1.5 1.2M236.3 164.2l1.7 3.0M210.1 128.6l-1.8 2.3M245.2 119.4l2.4 -1.5M203.7 124.0l-2.1 -1.0M222.7 163.7l-1.7 3.9M182.4 132.8l-4.8 2.1M251.0 132.9l2.6 1.8M220.5 160.4l0.6 4.2M228.1 143.5l1.9 2.2M229.3 137.6l1.2 1.4M205.5 164.2l-1.3 4.7M243.7 155.2l-0.7 1.9M183.6 142.0l-3.1 -0.9M238.6 117.1l1.0 -3.5M240.8 128.4l-1.5 1.4M262.3 137.9l0.0 1.8M253.9 146.0l0.5 2.7M241.4 150.2l1.8 0.4M220.4 149.5l2.1 0.8M249.9 129.0l-2.5 0.8M243.1 145.7l-2.4 0.9M184.0 152.3l-3.6 -2.7M247.8 139.2l2.2 0.6M234.4 118.2l-0.9 2.8M187.1 130.1l-2.4 1.5M251.2 160.2l1.5 2.8M249.3 133.7l1.3 2.1M237.8 143.7l1.9 2.0M245.8 146.6l-0.7 1.6M237.2 153.9l-2.1 1.8M257.7 147.1l3.2 0.6M219.6 164.0l0.3 3.0M221.0 148.0l1.8 1.2M239.2 133.4l-1.5 1.8M252.4 130.2l-1.4 1.6M233.4 152.1l-0.6 1.8M236.9 142.5l1.0 3.0M250.3 132.4l-2.4 1.8M250.2 122.1l2.7 -1.5M214.7 138.0l-1.0 1.6M208.5 121.8l2.9 0.3M246.4 157.4l-1.4 1.9M263.4 154.7l-1.8 1.7M288.8 172.2l-1.2 3.5M287.4 153.7l1.8 2.7M289.7 154.9l-1.4 1.4M279.1 176.6l-2.4 2.6M256.9 152.9l-2.7 -0.4M280.0 141.7l-1.3 2.6M266.3 148.1l-0.6 2.9M295.6 150.5l-0.1 2.3M278.8 151.0l-0.6 2.0M279.9 164.8l-2.3 0.4M280.5 175.6l-2.3 2.5M283.3 139.1l-2.2 1.5M301.8 162.6l2.1 1.8M283.0 168.8l-1.0 2.0M252.0 150.1l-3.5 0.4M279.1 162.5l2.5 1.4M287.6 157.8l0.4 2.5M263.2 158.8l-1.9 2.2M288.7 146.5l0.3 2.8M161.1 169.9l2.0 0.3M165.9 183.7l-2.3 1.9M134.9 153.6l-1.7 -3.3M162.3 167.6l2.0 2.5M163.9 178.0l0.3 2.9M150.6 173.7l-2.7 1.3M175.0 167.1l1.1 1.6M151.9 180.1l-1.7 1.6M161.8 174.5l-1.3 1.8M142.7 179.8l-3.0 -0.3M162.3 172.9l0.6 2.1M129.8 169.5l-4.5 -2.8M153.6 186.0l-1.4 3.8M170.3 177.9l3.0 1.1M184.5 166.2l2.4 0.9M138.3 169.3l-3.1 -0.2M174.5 181.9l-2.4 2.7M143.9 152.0l-3.8 0.1M159.0 170.4l-2.6 1.7M166.2 149.2l-1.7 2.3M169.0 168.5l-1.0 2.6M183.6 171.0l-2.3 0.7M181.2 166.5l2.0 0.0M179.5 175.0l-1.1 2.5M154.8 175.0l-2.5 1.5M136.9 184.4l-4.9 0.6M148.9 175.6l1.3 1.5M124.8 169.6l-2.9 -2.6M170.8 159.4l1.0 1.7M187.1 159.8l2.1 -2.7M143.6 182.6l-2.3 3.0M170.2 187.0l-3.5 3.3M162.9 161.0l-2.2 0.5M187.9 158.6l0.2 4.6M208.5 146.4l3.4 -0.7M182.4 152.2l-4.4 0.9M199.7 153.3l0.4 2.8M178.0 147.2l-4.2 -1.0M197.3 151.6l2.9 0.6M197.6 151.9l-1.6 1.4M178.6 138.6l-4.8 -2.4M178.4 146.6l-4.2 -2.3M183.1 151.9l-1.9 1.5M346.4 185.1l-1.4 1.8M350.9 180.3l-1.8 0.6M323.9 165.6l-2.6 0.6M348.9 170.9l-2.4 0.0M326.4 169.9l-1.7 0.4M303.1 191.8l-1.7 2.9M312.6 164.2l-2.3 -0.7M361.7 185.1l1.0 2.1M346.7 172.4l-1.5 2.5M320.5 189.8l-1.9 1.4M318.7 173.7l-1.3 2.7M303.0 183.1l-2.4 0.5M321.5 182.2l2.4 1.6M345.8 191.3l-2.8 1.2M333.0 166.1l1.5 2.2M334.7 166.8l1.4 0.8M316.3 185.2l-2.7 0.9M306.0 185.3l-2.1 1.0M316.5 189.4l-2.2 0.3M344.0 194.6l-1.9 2.5M325.7 182.3l2.1 0.1M310.2 169.4l-2.1 -1.6M359.9 167.6l1.1 2.2M357.5 182.1l-0.4 1.9M342.2 172.9l-0.8 2.2M333.9 185.9l0.5 2.3M337.1 165.6l0.1 2.3M335.1 167.9l0.7 2.5M354.7 188.1l-1.7 0.5M302.7 155.9l2.0 2.4M306.9 160.5l2.5 0.9M297.5 161.6l-1.8 1.5M312.1 156.0l-1.2 2.3M301.4 165.1l-2.8 2.8M310.5 151.4l-0.6 1.9M313.7 153.5l-2.4 0.1M184.3 209.5l-1.1 -2.1M193.7 241.4l-1.6 0.7M178.6 237.0l-1.0 1.6M204.5 216.6l0.7 -2.3M155.5 252.3l-2.7 4.3M206.4 224.9l2.5 0.3M179.4 254.4l-2.6 3.1M155.5 236.7l2.3 0.5M169.9 210.4l1.5 0.9M154.9 245.2l-2.9 3.6M156.1 231.1l2.8 0.1M168.7 238.8l-1.4 1.8M169.9 242.0l-0.8 1.5M207.0 222.5l-3.1 0.2M197.2 212.4l-2.4 1.2M167.9 231.9l-2.2 1.1M149.2 216.8l-4.2 1.3M147.4 217.3l-2.7 -0.5M202.4 230.1l-1.6 1.5M193.7 237.2l1.5 2.3M213.1 235.1l0.8 2.9M196.4 220.0l0.9 2.2M192.4 244.4l0.6 1.9M180.5 228.1l-2.9 0.1M156.2 210.9l-0.2 -3.5M186.4 242.8l-2.9 0.2M165.2 212.0l-0.7 2.5M158.5 247.1l-2.5 2.5M148.8 230.6l-1.4 -2.5M173.7 208.9l-1.2 -2.2M152.1 223.6l-1.6 -1.2M150.8 246.3l-4.6 1.2M203.8 213.9l1.9 -2.7M173.2 247.0l-2.0 2.2M195.9 252.6l2.6 3.9M182.5 245.7l0.9 2.1M213.2 227.8l1.5 -1.6M196.8 221.2l-2.4 2.1M158.4 218.5l2.3 1.8M149.4 217.1l-3.5 0.0M191.5 249.7l-2.3 2.5M196.8 211.0l1.9 -1.2M199.4 231.1l0.3 2.7M148.1 234.4l-4.0 0.0M184.2 234.1l2.0 1.9M197.1 219.5l-0.9 2.7M207.7 218.9l2.5 0.4M220.9 204.9l0.1 -2.4M210.2 202.9l1.3 -3.9M212.9 202.6l-2.6 1.1M195.2 217.0l-3.3 -2.8M209.9 204.1l-1.3 2.8M96.8 235.2l-3.7 -1.4M107.1 268.2l-2.1 0.8M134.2 246.0l2.8 0.9M119.4 272.6l-0.0 4.0M102.2 250.6l1.2 2.0M136.9 253.2l3.2 1.7M130.8 254.8l-2.2 0.9M89.8 263.9l-2.7 4.0M120.9 244.6l0.2 2.3M118.5 239.1l-1.6 1.7M78.7 258.5l-3.0 1.6M80.3 262.0l-5.8 -2.3M121.4 247.4l-0.2 2.4M112.1 277.7l1.4 4.0M121.8 271.0l-0.1 3.0M102.9 277.5l-2.9 2.2M109.8 228.9l-2.5 -2.8M111.5 260.5l1.8 1.0M110.5 247.7l1.2 1.2M128.9 271.2l1.4 3.1M118.6 268.3l1.4 2.7M114.0 250.8l-0.7 1.5M114.2 276.7l-1.2 4.7M114.1 235.0l1.0 1.7M119.2 236.0l2.1 -2.4M140.3 257.4l4.1 -0.7M140.9 259.2l1.8 2.3M118.1 231.9l1.1 -3.0M114.0 260.5l-1.0 1.9M90.1 261.0l-1.9 1.5M125.9 237.2l0.6 2.4M122.7 277.5l0.3 3.5M143.6 227.0l2.0 -1.8M132.6 241.4l-2.7 2.3M142.1 232.0l-0.1 2.9M133.4 240.6l-2.9 0.2M125.6 243.1l-4.1 -2.2M141.4 237.9l-2.4 1.9M149.3 235.3l2.3 0.6M143.1 234.3l2.0 2.3M78.6 293.7l-3.4 -2.9M135.5 353.8l2.7 1.9M105.1 349.5l-0.3 2.3M136.4 356.3l-0.0 4.7M71.0 330.3l-3.3 -1.7M109.1 295.3l2.3 -3.8M107.1 356.7l0.9 2.4M71.8 345.7l-2.7 2.8M109.4 353.6l-1.7 0.9M83.5 322.9l-1.9 2.2M138.1 336.8l2.6 1.0M75.0 324.5l0.8 3.1M83.0 293.3l-3.0 -2.6M128.8 354.4l3.8 2.0M76.7 319.5l-2.3 -0.5M108.7 359.3l1.5 2.4M133.7 345.7l1.3 1.9M90.9 367.1l-1.7 2.4M105.1 334.6l3.0 0.8M59.5 342.5l-2.9 -3.4M126.6 343.6l2.4 1.7M86.2 318.9l-2.8 0.3M78.0 291.8l-2.3 -3.5M79.4 321.5l-1.5 0.9M57.4 318.0l-3.7 2.3M105.6 351.3l-1.2 2.0M130.8 313.3l-1.5 2.1M126.8 367.0l-0.8 5.0M134.2 330.4l3.0 0.9M127.3 358.9l-1.5 4.4M113.3 329.8l0.9 1.9M62.0 345.1l-2.7 -2.7M106.2 304.9l-0.2 1.8M120.8 328.9l-2.9 0.1M119.0 373.8l0.3 3.4M110.9 308.4l2.7 1.1M108.0 316.8l-1.2 1.7M69.5 308.1l-2.5 -2.5M138.5 318.9l2.1 -0.5M68.4 356.5l-2.1 2.7M71.6 317.1l-2.8 -0.7M132.9 351.8l3.1 1.3M98.7 361.5l-4.0 1.0M148.0 297.9l-1.4 -3.5M188.5 289.5l0.7 2.3M164.5 292.2l-0.7 2.4M143.9 314.7l-2.5 -0.5M147.0 308.1l-2.5 0.5M189.4 329.3l1.4 1.9M141.8 326.2l-4.9 -1.9M183.9 339.7l-1.4 5.8M171.2 319.0l0.2 1.7M160.3 318.5l-2.7 0.7M180.8 310.8l3.0 0.1M149.3 297.4l-0.9 -2.6M165.7 297.9l-0.3 2.0M178.6 289.0l1.4 2.1M189.7 316.9l-2.2 0.9M181.0 309.0l-2.1 1.7M156.0 331.9l-3.8 1.3M143.2 329.0l-5.9 -1.0M142.2 312.9l-4.2 2.9M147.5 289.0l-1.5 -3.9M192.8 298.2l-1.2 1.3M161.4 296.1l-2.9 1.2M159.1 335.6l-5.6 0.2M146.7 289.5l-4.3 -3.2M200.0 309.9l-1.3 1.7M192.1 290.6l3.2 0.5M194.8 309.8l2.4 1.6M156.7 317.7l-2.8 0.8M180.7 311.3l0.8 1.5M179.8 291.5l3.2 0.6M177.2 321.3l-2.3 0.9M195.2 296.3l0.2 2.2M144.6 327.0l-2.5 5.7M198.4 328.4l2.0 1.9M188.5 314.6l-0.5 1.7M173.4 305.4l-2.9 0.8M204.3 316.6l0.3 2.4M191.9 301.7l1.8 0.7M204.1 319.5l3.9 1.6M144.6 285.5l0.5 3.1M120.6 296.4l-4.8 -1.2M156.9 282.4l-0.5 2.3M125.8 294.4l-3.4 -0.3M133.1 279.3l-0.6 2.7M117.0 289.8l-3.0 1.7M135.5 276.6l0.6 2.9M159.0 289.4l-1.3 1.8M143.3 272.9l1.5 -4.1M126.8 289.5l-1.9 0.3M128.8 299.2l-2.7 1.7M142.0 290.8l-0.1 1.8M135.4 281.6l0.3 2.0M161.2 280.7l1.1 -2.6M143.3 276.1l1.6 1.9M139.6 301.3l1.4 4.4M137.7 274.4l1.8 0.0M91.5 354.6l3.4 0.1M61.3 360.0l-3.2 -0.5M87.0 365.4l1.2 1.8M74.2 337.8l2.0 2.1M74.9 343.0l0.4 3.0M78.7 361.2l-1.6 2.6M86.6 343.3l3.3 -1.6M71.7 374.1l-1.1 4.2M112.1 376.8l3.0 1.0M111.1 380.8l0.9 5.5M89.4 376.6l-3.0 0.6M122.5 370.4l2.6 0.4M102.7 382.6l-2.5 1.1M120.3 375.6l3.8 0.8M118.1 364.9l3.4 -1.3M352.1 240.1l-0.3 2.3M330.8 247.5l-2.0 0.9M335.2 228.8l-2.0 0.1M324.7 223.5l-2.3 0.7M344.4 232.8l2.4 1.4M284.4 240.3l-1.9 -2.6M301.6 248.8l-0.7 2.6M308.1 228.1l-1.1 2.4M292.0 241.3l-3.7 -0.7M309.7 263.9l-2.7 2.1M288.9 253.3l-3.3 3.2M313.2 226.0l1.2 2.7M300.4 256.2l-1.8 1.5M287.5 247.6l-2.6 -0.5M332.6 255.8l-0.2 2.5M341.6 233.9l-0.4 1.9M306.8 220.7l0.2 -2.3M326.0 226.8l-1.9 1.2M340.7 247.9l-2.0 1.1M330.4 265.1l0.2 2.5M317.7 227.6l2.1 0.2M353.1 227.2l-2.8 0.3M319.3 228.8l2.9 0.7M314.2 254.2l-2.4 0.1M337.1 235.2l1.3 2.9M358.1 251.3l0.3 2.1M335.1 235.9l-2.2 1.4M297.8 234.9l-1.6 1.3M308.3 260.3l-3.1 1.4M333.9 255.2l2.5 0.2M303.2 251.7l-2.1 2.1M326.5 233.6l2.7 0.2M327.8 256.1l1.0 1.5M289.0 221.9l-1.5 1.2M278.5 221.9l-3.1 1.6M298.1 215.3l-0.3 2.6M281.6 219.4l-2.8 -1.7M288.1 222.0l-1.9 2.4M366.2 233.4l-1.5 1.0M377.3 232.1l-0.4 1.8M378.0 238.8l-1.7 1.4M373.6 235.2l-2.6 0.2M365.5 232.6l-2.3 0.4M404.9 284.9l-2.9 0.4M419.4 272.7l-1.8 2.4M425.2 280.8l-2.8 1.6M431.0 277.7l-2.0 1.8M417.1 277.8l1.8 1.9M406.0 278.1l2.4 1.2M399.7 253.5l-2.2 0.8M386.9 255.0l-2.2 1.7M439.7 286.1l2.1 1.6M442.9 283.2l-2.0 2.0M360.7 386.2l2.4 0.3M347.4 376.4l1.8 1.7M319.5 381.4l0.8 2.4M323.7 388.5l0.4 1.9M348.4 397.8l0.6 3.5M337.0 391.8l-1.8 2.2M333.3 371.7l0.3 2.8M343.4 362.6l0.9 1.8M329.6 387.3l3.1 0.6M301.3 376.5l-4.0 0.2M317.9 361.7l1.3 1.3M328.9 392.6l0.2 2.5M321.4 382.4l-3.1 0.5M342.0 387.7l2.0 0.6M352.2 368.0l-2.2 0.3M301.3 367.4l-4.2 -1.4M344.5 384.3l1.7 1.7M356.5 370.2l-3.0 0.7M312.8 374.6l-1.7 1.2M352.4 368.1l-1.0 2.9M306.2 379.9l-3.5 1.6M346.4 362.4l1.2 1.2M313.8 363.4l-1.8 0.8M338.6 382.1l-2.6 1.0M339.6 388.6l-0.5 2.7M314.0 372.5l1.4 2.3M310.9 382.9l-1.6 1.1M334.4 377.5l0.9 1.4M327.8 360.2l-1.6 0.8M321.4 355.8l1.1 2.5M342.6 365.0l-2.6 0.8M313.8 369.6l-0.3 1.8M330.4 395.2l-2.5 0.5M338.9 394.3l-1.8 1.0M322.6 358.4l1.6 2.1M385.7 408.0l1.9 1.7M392.0 411.7l-1.1 2.0M373.3 400.9l-2.0 0.1M375.7 407.2l-1.3 1.4M370.4 408.1l-0.7 2.7M376.6 408.0l-1.9 1.3M357.3 405.6l-2.9 1.0M358.1 416.6l-3.0 0.2M367.4 418.8l-0.6 1.7M387.7 412.7l-2.0 0.2M360.2 420.5l-3.4 0.5M384.6 403.4l0.6 2.2M368.5 417.9l1.0 3.0M380.3 417.9l-1.2 2.3M320.7 353.3l-2.0 1.3M315.4 350.9l2.2 1.9M313.9 351.4l3.2 0.6M313.4 346.6l1.0 2.1M322.5 347.6l-1.6 1.3M306.8 358.3l-1.6 2.8M393.9 437.2l-1.4 3.4" stroke="#dd850a" stroke-width="2.4" stroke-linecap="round" fill="none"/><path d="M263.4 142.6l3.1 -0.6M214.0 119.2l-0.2 2.3M214.2 133.7l1.9 0.6M218.8 162.1l-3.7 3.2M270.4 142.3l1.6 3.2M259.1 142.3l0.2 3.2M244.4 150.2l0.6 1.9M179.9 132.4l-3.2 -0.3M242.2 146.8l2.7 1.5M258.2 158.7l-0.0 3.1M266.3 142.5l2.9 -0.1M179.3 139.4l-1.9 -3.3M240.3 132.5l-1.0 1.9M187.5 141.2l-3.8 1.0M197.6 143.2l-3.0 1.7M217.1 118.4l0.8 1.8M219.6 151.1l-1.3 1.7M240.4 130.7l-1.9 0.5M240.6 167.7l-4.0 3.0M265.1 151.0l2.9 2.6M181.1 132.4l-5.0 -3.8M230.9 166.1l-1.0 3.4M226.5 130.9l1.3 1.4M262.0 130.5l-1.0 2.9M192.2 159.4l-3.7 -1.0M231.6 118.8l-0.3 3.1M218.3 146.6l-0.2 2.5M232.9 138.7l-1.1 2.6M243.2 117.3l-0.4 -2.0M240.9 160.7l-1.4 1.8M199.8 117.0l0.1 -2.9M245.9 140.4l-0.2 2.6M180.6 130.4l-4.4 -2.2M232.9 165.5l-2.7 2.8M234.2 158.4l1.0 3.2M241.7 164.1l-0.4 5.8M264.8 149.2l0.6 3.8M234.5 116.8l-0.6 -1.9M256.1 153.4l2.3 3.2M245.3 158.0l2.1 3.0M245.7 155.8l0.3 3.8M264.3 130.6l1.9 -2.4M239.4 115.9l0.3 -3.7M214.9 128.2l1.6 1.8M225.2 112.2l0.8 -3.6M241.8 162.0l-2.4 2.4M197.2 141.7l-3.3 0.4M250.6 158.4l-5.2 1.3M283.0 181.7l-1.3 3.0M287.0 162.7l2.6 1.4M265.6 164.3l-1.0 1.7M266.8 142.0l0.1 -2.7M275.2 138.3l-1.4 -1.2M267.3 153.3l-1.1 2.0M289.4 150.4l2.0 1.4M258.0 144.4l-2.2 -0.6M275.5 157.2l1.9 2.2M247.8 164.3l-4.3 2.2M263.0 154.2l-2.5 0.1M267.8 161.6l-2.0 1.2M299.0 170.1l2.2 2.8M292.8 139.2l1.5 -3.6M252.1 165.5l-4.9 -2.4M277.1 154.4l-2.6 1.1M283.1 158.3l-0.3 2.5M275.4 162.3l-1.6 1.3M256.2 168.9l-1.5 2.6M249.3 164.3l-3.9 -1.9M301.9 157.0l2.4 0.1M267.5 153.1l1.6 1.6M282.1 178.5l1.7 4.8M276.0 167.9l-1.4 1.0M261.8 161.3l-1.3 2.5M259.3 167.7l-2.4 -1.1M287.1 163.2l1.0 1.7M248.0 146.4l-4.1 1.0M280.6 146.7l1.3 1.2M274.9 177.0l-0.7 3.5M299.3 143.6l-1.8 1.9M246.8 160.2l-5.6 -2.6M272.2 171.5l-3.0 2.6M268.4 174.0l-0.2 4.4M154.2 148.8l-0.7 -2.2M166.5 156.3l1.5 1.7M141.2 173.3l1.8 0.1M152.4 181.8l-2.0 0.9M180.9 176.2l2.0 2.0M175.9 176.1l2.6 0.9M164.0 146.4l1.7 -2.2M136.3 173.5l-2.4 -2.3M175.6 177.3l1.1 2.7M193.7 166.1l2.1 -1.8M137.0 184.0l-4.3 4.8M173.4 188.2l1.0 5.7M161.9 181.2l2.4 0.3M154.8 186.2l-2.3 1.2M152.7 179.3l0.3 1.7M165.0 152.0l1.2 2.2M184.6 160.1l2.5 0.5M186.2 159.7l1.7 -0.8M144.9 175.8l-2.3 0.4M183.0 154.7l1.7 -1.4M190.5 161.4l2.9 -3.1M182.2 176.5l2.9 1.7M140.2 160.5l1.9 1.7M131.0 156.6l-3.7 -2.2M192.6 164.9l3.6 -1.4M175.7 178.6l-0.7 2.6M129.5 173.0l-2.6 1.6M161.2 190.3l-4.3 2.8M182.1 162.6l0.8 1.6M137.0 181.9l-4.4 2.1M183.3 135.5l-3.3 -0.6M198.8 158.2l1.7 2.7M188.6 159.6l-1.0 4.1M189.8 158.5l-4.0 3.2M194.9 137.7l1.5 0.6M188.6 137.7l-1.5 1.7M207.5 138.8l-0.4 3.1M192.7 134.7l-1.5 0.9M186.6 158.0l-1.2 2.8M200.0 139.8l1.6 2.4M193.9 161.3l-0.5 4.5M300.1 179.4l-2.8 0.2M342.6 175.6l-1.9 2.3M362.8 174.6l0.1 1.9M332.3 174.3l1.1 2.0M296.5 184.1l-4.0 -2.0M373.2 174.3l1.3 1.5M323.8 171.3l1.5 0.9M294.4 174.4l-3.3 1.5M310.6 183.7l-2.3 -1.0M338.7 180.6l-1.6 2.3M297.3 171.3l-4.2 -1.1M309.8 181.6l-2.4 1.0M324.5 157.2l-0.3 -3.6M313.0 194.2l-4.6 -1.2M321.6 168.3l1.5 1.6M313.4 176.8l2.7 1.0M355.4 171.9l-1.7 0.9M331.3 180.6l2.7 1.0M359.7 162.2l3.1 0.8M317.9 200.0l-3.5 2.8M341.8 160.8l0.9 1.5M305.0 166.8l-3.0 -0.4M358.9 168.4l-2.6 0.8M297.8 180.7l-4.6 0.6M332.2 158.4l-1.3 1.6M320.9 176.0l-1.4 2.6M307.6 191.7l-3.8 4.0M312.8 193.8l-3.5 2.4M315.2 191.2l-1.5 2.3M342.1 186.6l2.9 0.3M356.9 176.8l-0.3 1.8M351.0 171.3l-1.2 2.0M335.6 161.2l0.1 1.7M295.1 180.1l-4.7 1.3M316.3 195.5l-3.1 -0.1M294.3 150.7l-1.5 -1.7M299.5 155.0l-1.1 1.9M306.8 154.9l1.0 2.6M307.5 150.5l2.3 0.5M303.6 164.8l0.1 3.3M312.7 163.7l-1.2 2.8M306.7 149.7l1.8 1.0M307.8 154.4l1.5 1.1M200.7 215.2l2.0 2.1M194.3 245.9l1.2 3.2M138.9 215.5l-4.5 -4.0M192.5 244.8l-2.1 0.4M140.3 219.2l-3.3 -4.4M208.3 227.1l-2.1 1.1M156.0 213.4l-3.6 -2.0M140.9 218.3l-4.3 0.4M173.0 249.5l0.0 2.7M207.3 243.9l1.9 2.1M197.1 230.4l1.6 2.2M190.0 255.9l-3.8 3.1M151.1 233.4l-2.3 -2.4M149.5 237.5l-2.9 -2.6M217.9 221.1l2.5 0.4M193.0 244.8l1.1 2.7M169.1 210.1l-1.6 -1.5M200.0 245.0l2.2 1.5M181.8 245.4l1.9 0.2M144.3 224.0l-2.9 0.2M174.8 210.3l-0.0 -2.1M185.3 207.4l-1.2 -2.0M145.4 218.4l-3.0 1.3M140.3 224.3l-4.6 0.3M143.5 222.2l-2.8 1.8M180.2 237.3l1.2 2.5M161.4 221.0l-1.8 0.7M220.0 234.1l3.6 0.2M212.3 237.0l0.3 4.0M140.7 216.4l-1.7 -5.5M192.8 248.3l1.6 2.4M168.1 206.3l-1.6 -3.1M199.9 231.7l-1.8 0.5M180.1 209.9l-0.3 2.1M200.7 234.4l-1.1 2.7M150.6 204.6l-4.3 -1.8M180.7 211.7l2.7 0.1M178.2 249.8l-2.7 2.4M154.2 247.9l-1.5 3.1M209.8 224.1l1.7 0.9M208.0 248.3l2.8 3.4M212.2 213.4l1.3 1.3M207.7 204.6l-1.3 -1.6M219.7 219.8l-0.8 1.5M201.6 214.8l2.5 1.7M221.0 217.8l-1.0 3.0M81.5 238.7l-3.2 -1.0M123.3 237.8l0.4 -1.8M80.4 255.8l-3.4 1.5M121.1 266.7l-0.8 2.2M124.1 236.8l2.2 -2.5M131.2 239.7l0.2 -3.1M109.0 268.1l-0.8 2.4M119.0 242.2l1.9 1.0M84.2 250.2l-4.7 -1.5M104.3 237.4l-1.8 1.6M123.4 274.7l1.5 5.8M115.1 274.0l0.5 5.5M126.4 274.9l-2.7 4.1M90.3 240.5l-2.8 0.5M131.9 264.5l-0.5 3.1M106.8 239.1l-0.1 2.4M83.6 254.7l-2.8 -0.9M94.1 271.4l-3.7 -0.5M101.3 229.3l-1.3 -3.2M115.5 271.5l0.0 3.4M90.4 271.6l-3.8 1.1M122.2 236.4l2.7 -1.7M134.0 251.5l0.1 1.9M136.5 242.4l-2.7 1.1M149.5 243.4l-1.0 4.9M132.4 236.2l-1.4 1.0M132.5 351.9l1.6 1.8M84.9 371.2l-3.3 1.8M125.5 311.3l0.6 2.8M134.7 345.2l3.7 0.4M98.3 306.8l-0.1 2.2M56.8 312.7l-2.5 -2.5M94.8 358.8l-1.4 3.0M114.2 301.9l-0.2 -2.0M124.1 312.7l0.2 1.8M126.7 313.1l-0.5 1.8M149.6 322.6l2.7 1.0M87.5 361.3l-1.4 4.7M63.9 314.0l-2.7 -0.4M75.6 302.5l-4.1 -2.0M143.2 320.4l2.5 1.2M96.5 367.2l-3.8 3.1M65.9 336.2l-4.8 0.3M71.6 353.9l-3.7 3.2M102.8 362.3l-1.0 2.3M73.6 356.4l-3.1 1.2M128.4 333.2l-1.8 1.9M132.4 306.9l1.4 -2.9M74.0 357.4l-3.4 1.9M135.8 343.7l2.1 1.8M108.9 371.6l-2.8 4.2M147.1 344.8l3.7 1.2M90.9 309.5l-0.1 3.1M107.5 303.6l0.5 1.6M125.6 343.8l0.7 2.6M130.1 344.6l0.5 2.8M126.1 362.0l3.1 3.9M65.4 330.3l-4.1 1.0M57.2 340.9l-4.9 -1.1M63.7 343.7l-3.6 0.3M65.7 320.4l-3.4 -2.0M95.8 372.9l-1.7 4.6M76.2 365.1l-1.6 3.1M125.5 354.9l1.4 3.5M87.7 363.2l-2.6 0.0M62.8 307.0l-3.6 -2.5M131.4 349.2l2.3 2.0M57.8 318.3l-4.0 -3.3M100.7 361.4l-2.0 3.4M197.2 315.2l-2.1 1.7M181.5 330.8l-2.5 2.1M174.2 284.4l-0.5 -2.7M206.2 320.6l4.5 1.4M193.1 332.8l2.3 2.9M203.2 304.6l2.0 -0.6M145.8 299.7l-4.4 -0.0M134.9 295.5l-3.4 -0.3M192.5 300.7l-0.4 2.6M198.7 302.6l0.2 2.8M168.9 294.0l1.9 0.6M137.3 304.7l-2.0 -2.4M149.2 296.3l-3.1 -2.9M146.1 326.5l-3.5 4.9M161.1 331.0l-1.8 3.5M151.1 333.2l-3.3 2.3M171.1 309.5l1.8 2.2M200.0 292.0l2.5 -0.9M176.7 290.3l-2.3 0.2M204.8 320.8l-0.2 2.7M134.6 298.0l-2.8 -5.3M183.8 282.0l3.0 -1.9M192.9 303.8l-1.6 0.7M173.2 316.0l1.5 2.4M146.8 322.8l-2.7 3.0M205.4 316.9l1.6 2.4M145.2 320.3l-3.0 0.1M189.2 308.4l1.2 1.9M198.0 291.4l1.5 -1.2M168.9 304.4l1.6 1.5M148.4 319.1l-1.9 2.2M148.3 312.4l-3.2 -0.9M168.2 287.0l-0.1 2.9M167.0 303.7l-2.0 2.1M162.0 291.4l0.7 2.9M119.9 281.1l-2.0 -0.9M170.4 290.1l2.0 3.9M121.4 283.2l0.4 2.2M138.0 294.9l0.6 2.6M119.9 287.4l-2.5 0.4M114.9 289.0l-4.5 -0.3M126.8 276.7l-2.5 -1.3M148.7 298.1l0.1 2.8M147.3 298.9l0.4 4.1M141.2 294.1l1.4 1.0M60.1 356.0l-2.7 -0.6M72.5 336.9l-2.5 -1.6M69.7 368.2l-2.9 2.4M92.6 346.5l3.9 -3.1M74.7 331.5l2.6 -3.8M97.4 355.0l2.4 2.2M66.5 372.5l-5.3 0.2M67.0 344.4l-2.8 -1.2M118.8 377.4l1.0 2.0M92.2 379.1l-3.9 0.6M95.0 363.1l-0.8 2.5M107.3 379.2l-1.3 1.7M91.4 380.2l-3.0 0.7M102.2 361.7l2.4 -2.5M104.5 378.8l-1.3 2.6M80.3 364.2l-3.8 -0.1M119.7 374.0l-1.0 1.7M121.8 371.1l2.3 -2.0M81.9 362.9l-5.7 -2.7M342.8 252.0l2.5 0.8M328.9 266.3l-3.5 2.0M340.4 224.7l-2.0 0.4M350.1 232.1l-0.7 2.3M295.0 232.9l-1.6 -1.2M294.4 232.7l-2.0 -0.3M351.0 255.3l-1.5 1.9M315.3 226.8l-2.2 0.4M341.0 227.1l-1.7 2.3M299.9 235.0l1.7 2.1M349.9 256.7l-0.8 1.7M279.9 234.0l-3.7 0.2M287.0 225.2l-2.4 -1.2M317.7 251.6l1.6 0.9M305.0 247.5l-1.4 2.8M343.1 225.7l0.6 2.3M317.9 244.1l1.7 1.3M296.9 230.7l-1.7 -0.6M319.5 227.2l-1.4 2.0M322.2 254.7l1.8 0.2M285.8 228.9l-3.5 -2.0M286.5 254.4l-3.5 1.1M291.7 264.2l-2.9 4.3M346.6 245.3l-3.0 0.6M285.0 245.6l-3.9 -0.4M296.4 241.5l-0.3 2.7M316.8 242.6l-0.8 2.4M291.0 250.4l-3.9 -0.8M320.7 231.8l-2.3 0.0M314.2 267.7l-0.9 2.8M296.8 238.5l-1.5 2.1M334.1 239.7l-1.6 0.4M308.2 227.9l2.8 1.3M323.2 215.6l-1.4 -2.1M334.0 215.6l0.3 2.6M316.8 239.2l2.1 1.0M337.9 219.7l-0.0 2.3M289.6 223.5l-0.9 -2.4M299.8 267.2l-3.0 0.9M321.4 241.3l2.2 0.2M301.6 222.3l-2.7 1.4M285.4 224.8l-0.4 2.9M283.3 225.4l1.5 1.2M302.7 216.9l2.9 -0.7M285.2 219.8l-3.0 0.7M284.0 223.4l-1.4 2.0M291.1 213.6l1.2 -3.6M284.1 215.0l-2.3 -0.8M297.7 226.2l0.0 2.0M302.5 217.4l2.9 -1.2M360.5 241.1l-3.3 1.3M357.1 227.3l2.4 1.3M357.4 224.7l-4.1 0.8M371.6 230.9l1.2 2.7M375.5 222.3l-3.2 0.4M362.5 235.8l2.4 1.0M359.0 231.1l2.7 0.0M380.9 231.9l1.3 2.2M367.9 225.9l0.3 2.3M362.5 244.3l-3.1 1.2M358.5 237.3l-1.7 2.4M411.8 286.9l-2.0 0.1M435.6 272.6l2.6 0.3M412.3 279.4l-0.8 1.6M415.9 265.7l0.3 3.1M431.0 273.6l-1.3 2.4M406.6 279.2l0.4 2.4M423.3 276.7l-2.0 2.0M402.7 269.6l-0.3 2.0M410.8 284.8l-2.4 2.1M416.6 264.9l-1.9 1.6M397.7 275.0l3.0 0.2M417.6 259.0l0.3 2.1M398.2 276.4l3.1 0.6M415.3 278.8l-1.8 1.1M416.1 258.0l1.3 1.4M413.4 291.2l-3.3 3.8M392.5 249.3l2.6 1.6M401.7 257.8l1.2 2.4M385.8 261.9l-3.2 1.6M405.2 251.5l-0.8 1.6M383.2 256.4l1.6 1.3M446.9 286.5l0.5 2.5M442.3 293.3l-1.7 2.6M412.5 330.2l-2.5 -0.9M354.2 373.4l-1.7 2.3M306.2 362.3l-3.3 -2.0M360.7 369.0l-0.9 1.6M345.2 362.8l-1.5 2.3M317.1 393.1l-1.4 3.6M337.5 365.9l-2.0 0.8M309.9 371.4l-0.4 2.9M312.0 386.9l-2.9 2.1M315.1 371.4l1.2 1.6M328.3 368.5l-1.5 1.8M360.5 381.6l-2.0 0.8M319.4 356.7l-0.2 -2.3M306.2 357.1l-1.3 -4.7M355.6 362.4l-3.1 0.4M364.5 387.9l2.6 2.3M307.9 387.3l-2.2 1.9M346.9 356.9l2.3 0.8M321.9 399.2l-1.4 4.8M308.2 398.1l-3.8 4.1M336.2 391.8l2.9 0.8M345.1 367.0l1.2 2.9M334.5 363.1l-1.6 0.9M330.0 381.9l1.3 1.5M320.4 384.6l1.2 1.4M327.7 357.5l-3.0 0.2M333.4 397.0l-1.3 4.0M312.0 389.8l-4.4 -0.4M350.4 384.3l2.8 0.8M363.0 383.7l-1.2 2.0M365.4 390.0l2.4 1.2M339.4 360.8l-0.6 2.1M308.9 381.6l-3.3 0.5M363.4 368.5l0.1 2.2M348.9 364.0l1.4 2.5M334.3 387.0l-0.2 1.7M326.4 358.6l1.6 2.0M338.9 371.8l2.2 0.1M333.5 369.8l-0.4 2.3M330.0 393.2l0.2 3.1M352.3 386.4l1.0 1.3M337.2 353.9l1.1 1.5M338.4 399.3l-1.9 2.4M360.5 385.1l-0.7 1.8M346.6 358.0l1.8 1.7M337.8 355.0l1.2 2.7M301.0 382.0l-3.3 0.5M337.4 383.0l1.0 2.9M336.1 361.2l-0.6 1.8M328.4 372.3l1.8 1.4M356.1 395.7l-2.6 -3.2M374.0 411.9l2.5 0.8M348.1 418.3l-5.2 2.0M385.9 413.2l1.7 1.0M371.9 417.5l-1.3 1.6M386.1 414.1l-2.4 0.7M365.7 390.4l-2.4 -1.7M351.4 398.9l-3.0 -2.5M366.3 411.0l-2.9 0.3M363.7 413.1l1.9 0.7M380.0 416.2l-0.4 2.3M384.0 406.4l2.1 0.8M361.3 395.0l-2.1 -2.2M379.2 418.4l0.7 2.7M354.8 400.9l-3.3 -1.1M391.0 408.2l0.4 1.9M358.8 395.1l-0.7 -2.2M372.4 394.6l1.6 2.4M365.5 400.8l1.3 1.2M352.2 404.9l-2.9 -0.8M300.0 352.9l-2.8 1.3M301.2 348.8l-0.4 2.0M317.9 349.6l2.2 1.0M296.5 347.3l-3.2 -1.8M312.8 347.4l-1.5 1.2M394.0 434.6l2.1 0.6M395.2 437.1l-2.3 2.4M391.1 432.5l-0.8 3.1" stroke="#e9930c" stroke-width="2.4" stroke-linecap="round" fill="none"/><path d="M216.7 156.5l-3.6 0.7M211.8 115.7l0.9 -3.6M251.6 139.1l2.3 0.6M220.2 111.3l0.7 -5.4M255.0 149.5l-2.0 2.4M198.8 124.6l-3.4 -1.0M210.3 121.8l1.2 2.0M244.7 130.5l-0.8 1.5M192.1 117.8l-4.5 -2.4M203.7 131.0l-1.1 1.2M250.4 140.8l1.1 1.8M241.0 155.8l0.4 2.8M263.4 142.4l3.0 0.9M196.2 151.0l-3.0 1.3M200.9 148.2l-2.7 0.6M258.9 141.6l-0.5 2.2M232.9 165.9l2.6 5.1M232.0 125.3l-3.0 0.9M195.7 156.5l-4.4 -1.7M199.7 133.9l-1.5 2.7M208.8 116.4l-1.0 -3.5M186.0 145.8l-5.0 1.3M200.4 148.9l-3.4 0.2M241.3 125.4l-0.0 2.8M244.5 128.0l-1.0 2.6M262.3 144.9l3.3 -0.0M224.5 113.8l-0.1 -3.4M190.0 144.5l-3.6 0.7M228.7 160.1l-3.2 2.9M181.9 130.7l-5.2 -3.1M255.8 137.5l2.7 1.7M191.6 148.3l-4.2 -1.6M229.9 127.3l-1.9 1.1M241.0 143.4l-1.0 2.0M208.2 152.7l-1.1 2.8M254.5 163.1l1.6 2.8M228.8 133.2l0.1 2.0M238.9 167.6l0.2 4.5M271.4 136.3l3.1 1.5M190.1 155.6l-5.0 -2.7M217.0 125.5l2.2 1.9M251.5 127.1l-1.1 1.9M260.1 144.7l1.0 1.8M258.1 150.2l2.3 0.7M245.8 133.7l1.5 1.5M196.4 149.9l-3.5 2.4M272.0 147.7l3.2 2.3M198.6 138.8l-2.9 0.6M250.8 128.0l-2.0 2.0M243.0 112.4l1.8 -3.2M248.1 153.8l1.5 1.7M184.0 146.2l-4.0 0.5M293.3 152.4l1.1 3.0M276.4 175.1l-3.5 3.1M271.5 140.6l-2.1 0.2M264.7 177.4l-0.7 5.4M295.7 168.1l-3.2 0.1M254.4 154.8l-3.2 -0.3M283.2 179.2l-0.8 3.1M291.2 139.0l-0.5 -2.8M277.9 157.3l-1.3 2.1M272.3 160.2l0.7 2.2M275.6 165.3l2.3 2.1M294.4 171.0l-1.1 2.6M282.8 137.7l-2.7 1.7M306.2 164.0l2.5 1.3M286.8 138.7l-0.4 -3.7M283.7 166.1l-0.1 2.2M255.8 144.6l-3.5 0.8M275.8 137.5l2.0 2.3M291.4 137.7l-0.5 -4.0M305.3 166.2l1.4 3.4M304.6 155.6l1.0 1.5M279.9 154.6l1.4 1.4M291.6 154.9l-0.0 2.6M294.3 146.0l1.3 1.8M256.4 160.8l-4.1 -1.2M293.0 165.6l2.4 1.0M288.0 137.6l2.7 -2.5M274.5 176.8l-0.1 5.0M303.3 153.8l2.0 -1.4M263.9 174.2l-3.0 0.7M304.1 170.4l2.3 1.9M249.3 150.3l-3.9 -2.0M290.3 173.6l2.3 4.1M299.4 147.1l1.5 2.8M290.8 151.7l-0.9 2.6M136.1 163.8l-1.9 1.6M137.0 181.8l-3.7 -1.4M163.3 191.6l-0.9 5.4M174.8 147.3l2.6 -1.0M180.9 154.7l-2.1 1.0M179.1 181.4l0.5 2.4M146.1 155.2l-2.1 2.4M190.8 168.0l1.0 2.2M155.4 151.0l1.8 0.6M145.2 153.7l-0.8 -1.9M135.1 174.4l-2.8 0.9M159.2 191.6l-0.7 3.1M180.1 165.5l1.9 1.4M163.3 149.1l-2.0 0.5M179.2 146.9l-0.6 -2.8M162.4 187.0l-4.0 2.5M189.6 153.4l4.4 -2.6M146.6 147.1l-2.1 -2.6M181.7 171.0l-1.5 1.3M157.5 189.5l-3.7 2.7M142.8 154.1l-3.7 -1.6M151.7 151.6l-1.2 -1.9M206.9 155.6l-0.5 3.1M189.2 135.6l-1.6 -2.5M180.0 145.8l-2.4 0.6M206.8 141.3l2.2 -0.8M200.9 152.1l1.3 2.9M197.7 144.0l1.9 0.2M178.4 135.7l-3.9 -0.2M340.6 171.7l2.4 0.6M360.3 186.0l2.5 0.2M333.5 155.7l-1.5 -2.5M371.1 173.5l1.6 -1.7M373.4 180.9l2.9 1.8M340.1 155.1l-1.2 -2.7M355.1 160.4l-1.0 2.0M326.0 152.7l0.9 -2.9M335.3 171.0l1.5 2.5M327.6 178.7l-1.9 2.3M348.5 195.6l-0.4 2.7M323.6 177.9l-1.7 1.8M357.3 177.2l-1.4 1.4M327.9 163.2l-0.9 2.3M333.3 158.3l1.8 1.7M301.6 186.6l-2.7 0.9M359.3 200.7l3.7 4.4M306.2 168.6l-2.1 -2.8M341.6 156.8l0.4 -2.8M306.0 164.2l-3.0 -1.2M331.4 201.5l-1.0 4.9M319.4 180.0l0.4 2.3M302.5 168.9l-4.0 -0.5M371.1 192.2l2.0 4.5M344.4 155.8l-1.5 -3.0M358.8 177.7l-0.9 2.6M315.6 164.8l2.7 0.0M300.2 186.3l-4.2 3.9M351.1 170.0l-2.0 2.5M335.9 203.6l-4.8 3.2M330.9 188.0l2.2 0.0M302.2 180.7l-2.2 -1.8M304.0 183.3l-4.0 -1.4M342.7 181.2l1.6 2.2M306.5 145.1l-1.7 1.2M293.0 157.6l-2.9 0.5M315.8 159.9l2.2 2.4M298.1 163.1l-2.2 1.8M306.0 160.6l-0.4 2.2M308.4 157.2l1.9 0.3M292.9 165.6l-3.7 -1.3M299.8 157.0l2.0 1.9M197.6 225.4l-0.1 2.4M205.4 219.6l-2.9 1.1M216.3 215.7l3.5 -3.1M144.6 239.6l-2.4 1.8M192.7 252.7l-2.6 3.9M203.9 215.7l3.1 -0.3M213.3 227.9l3.5 -0.5M179.8 245.9l-1.9 1.3M170.6 201.3l-2.8 -4.9M193.2 240.6l-0.8 2.5M201.5 212.1l-0.2 -2.6M195.7 241.8l-1.3 2.3M209.5 221.1l2.1 -1.4M217.2 227.7l3.5 -0.1M134.3 221.7l-3.6 2.3M185.1 210.0l-2.5 0.7M201.9 224.8l1.8 1.2M167.0 211.0l-2.4 -2.0M197.9 237.7l2.9 1.1M172.1 250.8l-2.1 1.9M165.5 213.0l-1.7 0.6M160.6 250.9l-4.6 3.0M139.0 229.9l-3.7 -3.7M192.7 254.8l-4.1 4.4M147.6 224.0l-4.2 -0.4M170.6 257.0l-2.6 2.8M161.6 201.4l-4.8 -3.0M144.0 234.6l-3.3 2.0M137.7 219.9l-5.0 -0.9M216.5 223.2l3.0 2.0M210.6 244.0l2.2 1.3M179.4 249.7l1.5 3.4M226.8 221.4l3.8 3.9M208.9 225.9l-2.1 2.0M218.6 201.4l2.8 -4.0M223.1 217.6l2.8 1.1M205.6 208.2l-2.5 0.2M204.4 203.4l-3.2 -4.3M212.2 203.4l2.3 0.0M220.6 215.9l1.2 1.5M219.7 204.5l1.2 1.1M198.9 211.9l-3.5 -0.3M204.9 223.5l-3.2 4.5M227.4 207.6l2.1 -2.9M211.1 202.1l1.4 2.5M229.3 214.1l3.1 3.9M215.2 201.9l0.7 -2.2M216.9 218.5l2.9 1.1M112.4 229.3l1.2 -5.2M144.6 261.6l3.0 4.2M123.4 239.6l2.2 0.8M141.3 241.6l2.2 -2.5M77.8 249.8l-3.4 2.0M92.6 230.1l-3.8 -1.0M140.1 247.5l3.7 0.1M80.2 252.3l-3.0 0.4M139.6 237.1l1.8 -2.8M88.3 235.5l-2.1 -4.0M132.2 271.2l0.4 5.8M117.7 236.4l1.2 -2.3M142.8 261.3l0.7 3.0M130.6 243.8l1.3 1.2M123.4 240.3l2.1 0.2M83.2 245.0l-4.7 -0.0M121.1 229.9l3.6 -2.8M128.8 239.9l-2.7 1.3M127.6 241.0l1.5 1.0M123.3 230.4l-3.9 -0.8M155.7 228.4l1.7 -3.0M64.1 307.2l-2.6 -3.1M106.0 295.3l0.2 -2.3M126.3 359.9l0.2 2.9M129.3 303.3l-0.2 -3.2M131.4 291.0l4.3 -2.5M100.6 370.1l-3.8 1.6M130.8 353.4l-0.1 2.6M72.9 364.9l-3.8 0.1M132.9 323.6l-1.9 0.1M123.2 314.4l-2.6 0.9M109.8 302.0l0.5 -2.6M85.2 298.0l-0.9 -3.1M140.3 307.1l2.9 -0.8M150.1 324.8l2.9 -3.2M94.9 284.6l-0.2 -4.6M132.4 320.5l0.2 1.6M144.3 344.5l2.9 3.8M144.1 320.8l2.8 0.1M125.1 308.7l1.8 1.5M117.3 287.1l2.3 -2.0M134.1 360.9l-1.5 3.1M122.2 309.5l-0.6 2.1M82.8 304.9l-2.2 -3.4M97.3 303.2l1.6 1.2M146.3 336.4l2.4 2.1M129.1 313.4l-1.5 2.5M150.3 334.3l3.2 4.2M135.9 299.7l2.8 -3.4M62.1 311.1l-5.7 -0.9M119.1 370.6l1.1 3.0M123.7 369.6l-2.8 3.1M80.9 363.8l-5.2 -0.8M88.4 287.4l0.6 -4.0M126.4 326.6l0.4 2.0M129.9 316.2l-2.1 0.1M126.5 298.0l0.5 -3.6M109.0 374.8l-2.4 2.7M127.8 301.0l3.6 -0.8M120.7 356.6l-0.4 3.7M84.1 296.6l-1.9 -2.6M88.8 298.7l-2.6 -1.1M193.7 327.2l-1.1 1.9M206.7 307.1l2.2 -1.4M146.6 294.5l-3.8 0.5M201.8 335.0l2.6 3.4M211.3 300.4l2.1 -2.4M170.9 338.0l-2.1 2.9M198.6 293.4l0.4 2.1M137.9 305.7l-5.1 2.3M165.2 289.3l-2.5 -1.9M210.9 304.0l1.5 -2.0M198.1 290.0l0.9 -1.8M215.1 304.7l3.2 -3.2M177.2 294.1l1.5 2.6M192.5 283.7l3.4 -2.5M155.7 290.7l-0.1 -2.4M143.6 327.9l-4.5 1.9M188.8 293.4l1.1 2.1M197.4 334.3l-0.3 5.8M166.2 332.9l-0.5 4.2M161.5 330.4l-1.8 3.0M160.9 338.6l-4.6 0.6M185.8 334.7l2.0 2.7M166.9 277.8l-1.7 -2.6M135.7 317.3l-3.8 2.5M179.5 336.9l-2.7 3.0M202.2 308.4l0.4 1.7M123.0 299.8l-3.3 1.7M145.2 300.1l-2.6 1.7M122.9 298.4l-3.4 5.4M170.7 286.7l5.0 -1.4M108.8 284.3l-3.1 1.0M154.6 289.3l2.4 1.7M129.4 275.1l0.8 -4.0M118.9 297.0l-4.3 3.4M161.1 282.4l-2.1 2.3M148.9 274.0l-0.9 1.8M136.0 272.9l0.1 -2.7M114.9 281.7l-3.7 -1.4M141.4 271.0l3.7 -3.5M166.7 289.7l1.4 4.3M87.6 364.1l1.5 2.6M76.0 332.4l1.6 -2.4M61.5 367.4l-2.7 5.8M90.7 349.5l2.3 0.1M117.5 380.3l1.0 2.6M114.5 367.5l1.7 1.8M115.2 378.6l2.0 1.4M110.3 363.1l2.1 -2.7M110.8 362.1l0.2 2.9M118.9 380.1l-0.2 3.5M340.6 242.0l-1.4 1.6M314.5 240.9l-2.5 0.8M322.5 263.2l-1.6 3.5M367.6 250.1l3.7 1.0M332.8 253.6l1.4 2.0M323.8 248.5l2.2 1.7M326.8 234.3l-0.1 2.2M371.8 238.7l1.7 -1.5M339.5 253.8l-0.7 1.5M312.6 224.4l-2.5 0.3M357.1 220.5l-0.0 -3.4M306.2 252.2l0.5 2.8M353.1 264.3l-1.7 4.4M325.7 224.6l0.9 1.4M323.9 264.6l0.8 3.0M340.9 233.9l-2.7 1.0M323.8 226.4l0.6 2.2M316.5 227.2l1.3 2.4M296.6 244.3l-2.0 -2.2M353.9 261.0l2.1 1.5M320.5 233.0l-1.7 2.0M354.4 258.0l-0.6 2.3M337.2 217.5l-0.4 -2.6M325.9 271.6l-0.4 5.4M335.5 225.5l-0.3 1.8M295.9 257.6l-2.9 1.2M348.8 266.5l1.6 2.0M372.7 235.3l2.3 -2.8M324.9 247.4l-1.3 2.4M304.9 256.6l-1.1 3.0M359.5 247.1l-1.6 1.5M337.1 255.3l1.1 1.2M339.4 231.2l2.0 1.6M344.2 272.8l-0.5 5.4M293.2 216.5l-3.6 -2.6M322.5 268.0l0.1 3.5M337.3 256.6l-1.0 1.8M338.4 261.4l-0.4 3.6M354.8 254.2l-0.5 3.1M338.3 225.0l-0.4 3.1M306.6 230.1l1.6 0.6M316.7 253.2l1.2 1.3M335.3 218.6l-0.6 1.8M337.0 243.2l1.4 0.9M284.7 250.0l-2.6 -0.4M295.7 231.4l-3.1 -1.0M321.2 228.7l-2.4 0.5M298.9 244.5l-0.7 3.0M348.8 235.7l-2.5 0.7M346.8 257.6l1.9 2.1M356.7 253.2l-1.4 0.8M369.5 242.6l2.0 2.6M347.3 226.0l-1.8 0.3M353.2 237.7l0.2 2.3M367.6 252.4l1.1 2.1M309.0 261.2l-2.1 0.9M330.6 225.7l0.9 1.7M342.4 262.2l0.9 1.9M306.9 221.1l-0.2 -3.6M314.5 240.0l1.0 1.3M342.8 247.5l1.5 1.8M326.0 244.9l2.1 0.8M286.7 236.3l-2.7 0.1M292.9 233.0l-3.5 0.6M342.1 272.3l0.2 3.5M324.3 261.7l-1.2 2.1M329.8 258.6l-0.6 1.6M342.1 243.9l1.2 1.8M319.1 246.3l-1.0 3.1M311.5 240.4l0.1 2.5M351.0 245.2l-2.6 0.1M306.7 265.7l-2.3 1.3M291.2 212.5l1.9 1.9M283.3 224.1l0.9 2.6M283.5 234.5l-0.6 3.3M294.2 213.4l1.4 -3.4M290.3 217.6l2.0 0.2M293.8 212.4l0.8 1.7M277.1 216.6l-2.5 -4.8M281.2 227.4l0.9 1.7M274.4 222.9l-5.5 -1.8M309.4 223.1l3.7 -2.9M293.6 236.5l-0.8 2.7M293.3 233.9l-3.1 1.7M304.6 217.0l-0.7 1.8M369.1 221.6l2.7 1.5M382.3 228.9l-2.8 0.5M351.8 229.4l-4.8 -0.7M370.8 225.6l-1.0 2.2M377.9 222.0l1.2 1.4M419.3 274.8l0.8 1.7M425.8 258.5l0.7 2.4M412.9 292.0l-2.7 1.0M398.7 258.0l-4.4 -1.1M430.3 288.6l2.0 2.5M389.2 278.6l-2.5 1.4M438.8 277.7l-0.2 2.5M425.0 258.7l1.8 0.1M422.0 286.5l1.1 2.0M401.0 285.8l-2.5 1.0M405.9 261.1l-2.5 1.1M421.4 274.4l0.1 2.5M386.7 276.4l-2.6 -4.1M398.3 276.6l-2.1 2.0M423.2 280.6l1.4 1.1M423.0 286.4l1.7 0.8M428.5 265.6l-1.6 1.8M419.2 286.3l-0.8 2.6M446.1 271.7l1.9 2.0M441.6 265.0l-2.4 0.0M415.1 295.5l-2.7 2.8M403.5 283.1l-1.9 -0.1M413.0 267.7l1.8 1.3M400.1 286.4l-2.1 3.9M414.7 292.1l-2.4 3.2M420.3 277.9l-1.3 1.3M423.9 290.7l-1.9 2.5M441.1 270.8l1.8 0.2M410.3 277.8l1.5 0.8M439.2 283.4l-1.1 2.5M383.9 246.8l-2.8 -1.4M387.5 248.3l0.5 1.7M402.3 258.5l-0.1 2.4M393.3 248.5l-1.0 2.5M380.6 250.3l-0.7 -2.1M393.4 266.6l1.1 3.4M448.2 292.4l-1.3 2.3M440.0 293.3l-2.3 4.4M440.8 288.1l-1.6 1.3M422.2 331.8l-1.2 3.3M417.5 326.5l-3.2 0.3M419.8 329.6l2.0 0.0M318.4 377.3l1.7 1.5M309.0 386.2l-2.5 -0.1M318.0 353.7l-2.4 -0.3M339.7 364.1l2.2 2.2M329.8 378.4l0.4 2.1M347.1 356.9l-1.9 0.8M320.9 401.6l-0.3 5.9M304.3 393.6l-2.3 5.3M318.5 399.8l-2.8 1.2M348.0 357.5l2.8 1.3M361.1 370.4l-0.4 2.4M290.9 370.0l-5.0 1.0M343.5 361.5l-0.1 1.9M362.8 363.0l-1.9 2.0M311.7 355.4l-2.7 -1.2M335.6 393.5l0.5 1.7M335.4 382.7l0.4 1.8M333.4 395.6l-2.5 1.2M367.3 361.8l2.6 0.8M342.5 359.0l-1.5 1.2M309.0 388.1l-2.7 0.7M342.3 371.4l-1.9 1.5M353.1 398.0l-1.3 2.2M338.3 381.8l0.1 1.7M362.1 398.1l-1.2 3.2M308.5 386.7l-3.4 -2.0M352.1 393.5l-1.7 3.4M313.9 362.4l-1.5 -1.9M315.7 385.4l-1.3 2.2M309.5 396.8l-1.5 4.5M316.5 359.9l-2.6 -0.3M346.4 397.6l0.8 2.2M325.1 380.7l-1.7 1.5M317.1 400.0l-4.0 1.4M321.4 384.9l2.0 0.8M361.3 360.8l2.4 0.9M346.0 396.0l-0.8 4.2M314.6 367.2l2.0 0.1M334.9 392.8l-2.8 1.4M359.2 359.0l-1.2 1.1M302.9 377.0l-2.2 -2.0M341.6 377.9l1.3 1.2M373.4 376.6l1.8 3.7M358.7 361.2l-1.5 1.6M360.2 397.8l2.6 0.5M363.6 392.3l2.7 0.3M387.3 402.8l1.7 0.3M389.9 401.2l0.7 1.6M390.3 418.2l1.0 1.4M374.3 432.2l-0.6 3.9M360.4 387.1l0.3 -2.9M356.7 425.6l-3.7 1.9M398.5 407.8l-1.7 0.6M375.5 392.6l2.5 0.4M379.8 421.5l1.7 2.1M369.3 421.8l-3.1 0.3M351.7 417.0l-2.5 -0.0M370.7 386.2l0.4 -2.1M387.4 420.8l-2.8 0.8M364.1 421.6l2.2 1.3M354.7 424.6l-2.6 4.4M371.6 393.2l2.4 0.4M354.7 428.7l-4.1 -1.3M384.8 392.7l1.8 0.6M343.7 406.2l-3.3 1.2M366.6 395.8l2.4 0.9M364.2 397.7l-3.0 0.4M363.6 400.7l-1.7 0.7M349.6 406.3l-1.7 -1.9M392.7 404.2l1.0 3.1M345.0 420.6l-4.2 -2.5M375.9 410.5l1.9 0.7M375.3 393.7l-0.5 1.9M385.4 390.9l-2.4 0.5M352.0 400.9l-2.0 -1.0M361.1 408.5l2.9 1.0M300.1 361.4l-3.7 -0.5M319.2 351.7l2.0 1.2M305.0 359.6l-1.1 4.7M318.8 352.2l-0.9 1.8M311.7 350.7l2.2 1.4M309.6 342.3l-2.4 -2.9M316.1 351.3l1.8 1.8M397.9 423.9l1.5 1.6M395.7 430.2l1.4 2.3M396.5 437.2l-0.5 1.9" stroke="#efa20f" stroke-width="2.4" stroke-linecap="round" fill="none"/><path d="M231.3 117.5l-2.3 1.4M251.5 154.9l3.1 2.0M258.2 160.2l0.3 5.5M197.8 126.4l-4.0 1.2M243.0 159.7l1.6 3.5M206.5 114.0l-4.7 -2.9M275.8 141.0l4.8 2.8M213.5 122.4l-0.4 1.9M248.1 138.3l-1.6 0.4M195.4 156.5l-1.9 2.6M184.1 134.5l-5.0 0.4M225.9 116.8l0.7 -1.9M202.2 163.0l-2.1 2.6M240.5 113.4l0.6 -2.3M207.1 161.8l-1.3 4.1M272.4 152.7l2.5 3.8M185.0 138.8l-4.2 -2.5M243.2 160.1l2.4 3.5M235.1 158.5l-1.9 2.8M253.1 136.4l-1.9 1.3M266.9 147.7l3.8 2.7M261.8 126.2l1.1 -3.8M195.0 155.6l-1.3 3.0M274.2 133.8l3.6 -3.0M202.0 119.6l-2.5 -0.1M252.5 164.3l2.5 4.8M254.6 137.6l1.6 2.7M229.3 168.2l-3.1 4.1M273.3 133.2l3.5 -2.9M253.6 158.1l2.7 3.1M240.4 128.3l1.8 1.7M206.2 117.4l-4.3 -1.9M217.0 106.0l1.6 -3.3M275.1 141.3l2.5 2.4M250.2 156.6l1.6 1.9M230.7 158.7l-1.8 1.3M189.2 150.1l-2.7 3.7M181.4 144.3l-3.0 -2.8M260.4 136.1l1.6 1.2M273.8 136.3l4.1 -1.9M247.8 150.8l-2.1 -2.5M298.4 138.5l-0.3 -4.0M309.9 168.4l2.7 2.6M275.2 131.4l-3.0 -2.3M301.5 138.8l3.1 -1.8M303.5 146.9l2.2 -1.5M290.6 165.6l1.5 2.6M264.4 138.5l-2.3 -1.1M298.6 152.9l-0.5 1.9M285.7 174.8l-1.2 4.2M290.5 178.8l-1.1 3.9M302.6 168.8l2.3 2.3M286.8 141.0l-0.8 2.4M289.9 164.6l2.0 1.0M273.5 133.8l0.1 -4.4M272.7 173.7l-2.1 1.2M312.2 165.0l4.6 2.9M261.3 151.8l0.5 2.2M287.9 180.9l-3.6 4.0M284.8 177.5l-3.8 3.6M282.6 169.4l-2.2 0.1M290.7 148.4l-1.0 1.3M298.4 163.0l-1.4 2.8M259.9 154.1l0.5 3.2M289.5 135.9l-1.1 -4.6M304.7 162.3l2.6 1.8M281.8 134.5l2.5 -2.7M299.9 147.2l-2.4 1.2M294.4 145.5l-0.3 2.3M289.8 176.7l-0.3 4.9M277.6 134.1l0.2 -3.8M310.5 168.6l1.4 5.6M145.9 189.1l-3.6 2.2M136.2 149.2l-2.5 -3.0M166.5 147.3l-1.6 -2.9M130.4 177.5l-5.4 3.5M178.6 189.0l4.2 4.1M132.7 158.7l-4.9 1.8M125.6 164.4l-4.3 -3.3M164.9 186.0l1.1 2.5M165.0 188.4l-3.0 1.8M179.4 154.9l-0.6 2.7M171.5 187.0l1.5 4.0M187.6 148.3l1.1 -5.4M196.3 165.9l4.7 -0.1M180.0 179.3l1.6 3.5M162.5 149.1l1.2 -1.8M181.7 148.9l3.0 -2.1M131.1 155.1l-5.5 -2.4M155.3 146.4l-3.0 -1.8M196.7 176.1l0.0 4.5M194.8 130.7l-1.0 -4.3M207.7 137.5l1.5 -2.1M350.3 195.3l-0.1 3.2M313.4 174.6l1.1 2.6M351.5 157.0l1.7 -1.9M297.3 166.6l-2.8 1.0M297.8 176.4l-4.9 1.9M297.2 191.2l-4.8 -1.2M347.2 170.1l-2.0 1.7M311.9 198.6l-5.7 -0.6M345.3 153.2l2.7 -2.3M334.6 155.8l1.0 2.6M355.6 162.7l-1.4 0.9M361.2 198.4l0.0 4.4M323.3 160.4l1.1 2.8M319.3 161.2l-3.1 -0.6M349.0 157.0l0.4 -2.0M357.1 194.8l2.4 2.0M294.2 171.6l-2.9 2.3M328.7 202.8l-1.5 6.1M366.4 168.5l-2.4 0.5M297.6 173.3l-3.1 -4.0M349.2 200.7l-3.2 3.9M331.0 168.6l1.4 1.2M355.1 157.4l-0.9 -2.8M311.8 178.0l-1.2 1.9M325.0 157.6l0.2 -1.9M325.8 154.8l-0.2 -2.1M359.7 195.1l2.8 2.8M329.5 182.3l-2.7 0.9M359.6 162.0l1.8 2.6M297.1 162.5l-5.6 -0.1M305.4 191.0l-3.7 0.4M316.8 187.0l-2.2 0.0M316.2 167.4l1.2 1.6M311.7 188.4l-3.2 0.8M341.7 179.4l1.3 1.3M365.3 175.0l2.9 0.9M294.1 183.8l-4.7 -1.7M363.1 181.9l0.9 2.7M329.7 191.6l-3.2 0.1M311.1 142.8l-1.9 -3.8M300.9 147.7l-1.6 1.1M305.6 144.9l-2.2 -2.2M293.6 154.3l-1.7 -2.3M311.3 143.5l4.3 -2.4M295.3 145.4l-1.0 -3.4M304.3 164.1l-1.4 3.1M318.1 159.2l0.0 1.8M211.0 233.8l1.8 2.2M182.2 208.9l-0.3 -2.3M194.3 254.8l2.4 3.3M176.9 204.4l1.2 -2.5M190.8 202.0l2.2 -1.8M195.5 204.7l3.0 -4.4M186.6 209.0l2.9 -2.1M211.1 244.4l1.0 4.4M200.5 213.3l0.7 -2.4M212.8 238.6l2.9 1.5M181.5 210.1l1.7 0.1M140.7 213.6l-3.2 -3.8M210.5 221.1l3.1 -0.5M165.8 212.7l-0.3 -1.8M187.8 210.5l-0.2 1.6M195.1 247.5l-0.6 4.1M176.0 207.6l-0.5 -2.7M205.8 249.0l2.8 2.3M141.8 222.4l-4.6 1.7M160.8 207.3l-0.0 -3.5M209.3 226.2l-5.1 1.8M202.2 206.8l-3.9 0.6M210.0 203.5l-1.9 -1.3M150.2 253.4l1.7 4.0M145.2 240.0l3.9 -2.9M144.6 238.7l2.2 -2.4M134.5 269.7l-1.6 3.9M102.7 228.9l-3.5 -4.3M140.8 253.6l3.3 1.0M136.3 241.2l3.3 -0.3M79.0 256.4l-3.6 1.2M129.6 240.6l-0.8 2.7M159.3 237.2l3.2 2.0M155.2 239.2l3.3 0.7M153.2 234.4l2.3 1.7M135.8 313.1l3.7 0.0M67.6 301.7l-3.8 -1.9M75.8 300.1l-5.3 -1.0M55.7 330.0l-3.8 0.5M125.1 300.9l3.1 -1.8M103.4 373.0l-4.0 1.9M115.0 366.4l-1.4 2.8M128.5 291.5l-0.5 -4.1M131.7 308.1l1.6 -2.6M115.9 374.4l-2.9 2.6M145.9 311.8l1.9 -3.9M132.9 301.0l3.1 -2.4M144.5 310.8l2.2 -4.4M117.3 286.1l-0.3 -5.6M126.0 297.7l3.5 -0.9M185.8 287.0l-1.5 1.3M182.8 279.8l3.4 -2.7M201.3 316.0l1.2 2.7M200.4 322.3l-0.7 3.4M176.3 280.1l2.1 -2.1M182.3 340.2l-2.4 2.2M146.3 325.7l-5.6 0.5M192.5 289.5l-0.4 2.1M179.0 338.4l-3.7 1.8M204.8 308.5l3.6 0.2M170.8 279.2l1.9 -4.0M174.3 280.6l-3.0 -2.6M208.4 327.0l0.1 4.2M198.6 287.2l1.4 -3.1M206.1 309.5l3.9 -0.5M200.9 304.0l-1.9 1.3M209.5 287.4l2.1 -2.2M205.8 290.6l4.6 -2.3M199.8 294.4l2.0 0.2M201.5 294.9l1.6 -1.0M148.4 281.3l-2.2 -2.9M203.9 315.6l0.9 2.7M181.6 288.3l-1.2 1.1M204.6 295.4l2.1 -3.0M205.9 314.1l3.6 0.3M184.7 278.4l1.0 -3.5M139.3 273.6l-1.5 -3.4M134.7 274.0l-2.1 -1.5M154.4 274.7l-1.7 2.7M173.0 288.3l4.7 -0.9M167.8 284.3l2.9 -1.5M91.8 354.9l2.9 0.3M61.8 337.3l-0.9 -3.8M78.0 365.4l-4.0 -3.1M83.3 364.3l-2.6 -2.8M124.9 370.6l2.4 -1.3M124.9 374.7l3.9 2.2M128.3 375.0l2.6 5.1M304.8 265.0l-3.3 2.2M300.0 252.7l-1.9 2.6M333.4 244.5l1.6 1.8M342.8 223.9l-1.9 0.2M300.2 258.1l-3.5 2.6M355.1 225.7l-1.9 1.1M291.8 236.7l-3.1 -0.1M291.6 266.5l-3.3 -0.5M307.2 237.9l1.8 1.5M326.5 243.1l2.6 1.5M320.5 228.6l1.7 1.5M347.2 253.4l1.7 2.5M301.5 240.4l0.3 1.6M361.9 233.6l1.5 1.8M327.7 249.3l0.9 2.7M283.3 248.2l-3.8 -1.3M361.7 236.6l-2.5 0.4M299.8 225.5l-2.5 -1.2M370.3 231.4l2.0 -3.2M368.1 249.9l0.9 2.2M330.5 216.5l-1.8 -1.7M312.6 260.1l-2.9 0.7M364.3 254.1l-0.4 3.1M297.8 225.9l-0.8 -2.4M292.0 229.1l-2.2 0.2M323.0 229.6l0.7 2.4M371.8 254.6l2.6 2.1M309.2 255.8l1.6 1.6M340.5 229.2l-1.6 1.6M289.5 261.5l-4.4 3.4M340.4 230.0l-0.3 2.8M349.6 231.5l-0.4 1.9M286.1 217.7l-3.7 -4.8M307.0 210.3l-1.8 -3.6M332.5 230.3l0.3 2.0M290.7 261.1l-2.1 2.2M332.2 235.6l0.8 2.5M291.6 215.9l-1.7 -3.9M353.1 230.9l1.6 1.8M306.1 269.3l-2.9 0.7M358.8 264.8l-0.1 5.5M309.2 225.9l-1.5 0.9M350.8 265.9l1.4 2.4M326.3 218.6l-1.7 0.3M334.3 255.4l0.9 2.4M357.9 267.2l-0.0 3.9M289.3 256.4l-3.4 1.6M298.7 243.6l-1.6 1.6M314.3 221.9l1.2 1.6M280.5 246.8l-4.4 1.3M330.1 214.5l-0.8 -3.1M302.4 214.4l-4.0 -0.7M335.4 219.8l-0.7 2.2M294.6 231.4l-3.0 1.4M293.8 253.2l-4.0 -0.6M305.0 262.2l-1.0 3.9M357.1 224.0l1.4 0.9M311.8 227.6l1.3 2.5M286.7 242.6l-3.2 -1.8M294.0 216.7l-4.3 -1.7M283.1 229.0l-2.3 -1.5M351.9 267.4l2.5 4.5M297.1 215.3l-0.5 1.6M293.0 218.9l-0.9 1.7M273.3 223.8l-3.0 -1.6M304.7 224.6l0.1 2.4M299.9 223.7l0.8 2.0M277.3 228.8l-4.5 0.6M289.3 214.6l-1.7 -2.2M274.2 220.2l-2.9 1.2M358.0 238.6l-3.7 2.3M355.3 220.6l-4.0 -3.8M385.2 243.4l2.6 2.6M355.2 235.0l-3.0 0.3M373.5 239.5l-1.1 2.0M371.2 217.1l1.1 -3.5M375.0 245.8l0.7 2.5M369.0 242.6l1.2 1.1M380.3 236.7l-0.2 2.1M366.4 248.9l-3.9 3.3M425.8 276.4l-0.0 2.7M447.7 279.6l-0.1 3.8M437.6 282.0l2.2 1.7M437.7 269.9l1.9 1.7M414.9 267.8l1.7 0.1M449.1 265.0l2.3 -1.3M437.6 258.3l0.0 -2.6M396.0 266.8l-2.6 -1.6M423.1 264.8l-2.6 1.1M441.8 283.6l0.8 2.2M402.2 266.4l2.4 0.9M391.6 283.4l-2.6 4.0M413.1 289.1l-0.4 3.6M442.5 263.3l2.7 -1.1M433.4 273.6l-2.8 1.5M440.5 262.3l-3.0 0.5M426.6 287.5l-2.4 0.3M427.9 286.0l-2.7 1.5M413.2 264.8l1.0 2.8M390.0 275.5l-3.8 0.4M395.6 272.4l-2.4 -0.4M404.6 263.7l2.4 1.4M435.4 278.6l-1.5 2.1M415.8 257.5l1.4 1.3M421.3 275.2l-2.3 1.7M389.6 281.2l-4.1 4.2M406.0 280.1l-0.7 2.2M390.2 265.9l-4.9 -1.2M422.9 289.5l-1.7 1.5M405.1 256.3l-1.1 -3.7M441.9 279.3l-2.2 0.7M408.2 283.2l-2.4 1.0M409.8 295.1l-5.4 1.7M419.5 269.6l1.2 1.6M418.8 281.3l0.7 1.6M393.4 263.8l-3.7 -1.4M401.5 263.3l-2.0 -1.4M404.1 265.3l-2.3 0.5M386.7 252.8l0.8 2.4M390.6 262.9l-2.9 1.7M381.5 258.5l-2.1 0.1M379.2 257.6l-3.9 -0.1M394.0 245.9l1.0 1.6M376.0 250.2l-3.2 -5.1M379.7 258.9l-3.4 1.0M401.2 248.7l1.3 -2.7M435.6 284.4l-3.8 0.2M447.6 279.6l-0.7 -3.6M444.6 281.4l-1.6 1.3M452.1 295.4l-1.7 1.7M413.6 329.1l1.3 1.8M411.6 330.7l2.9 0.0M342.5 355.7l-0.2 2.6M357.1 389.5l-1.4 2.7M307.7 379.6l-1.8 -1.3M353.2 360.9l-3.0 0.9M358.9 362.6l-2.2 1.5M357.8 360.0l-2.6 0.2M355.1 352.9l2.4 -0.9M322.8 364.8l1.5 2.3M307.8 366.2l-3.1 0.6M349.6 402.5l1.6 4.6M326.0 351.8l-0.7 -2.4M304.2 391.2l-5.0 -0.7M366.2 367.7l2.0 1.8M337.3 375.5l1.2 1.4M343.7 347.8l-1.7 -2.6M337.6 375.8l0.2 2.1M344.9 398.2l-2.5 2.0M318.2 370.3l1.6 0.5M317.5 357.8l-0.3 -2.3M299.8 380.0l-3.4 1.7M350.7 355.0l2.2 -2.3M319.2 376.8l2.2 1.7M359.5 392.3l0.6 2.2M320.7 387.1l-1.4 2.3M295.4 387.0l-4.0 0.8M371.9 384.0l3.3 1.9M324.5 344.8l0.9 -4.3M312.1 357.9l-2.8 0.2M328.3 366.3l-0.3 2.0M331.8 371.7l-1.7 0.6M314.4 384.8l-1.8 0.9M347.2 397.5l-2.5 2.8M359.8 395.6l2.7 4.1M358.0 375.1l1.5 1.7M347.1 362.1l-0.1 1.6M303.4 368.9l-1.9 -1.5M362.9 383.5l-0.9 1.8M369.7 390.1l0.7 4.9M345.2 364.1l-0.3 2.3M373.2 411.5l-1.1 2.5M383.6 389.5l0.4 -3.6M365.4 387.9l-0.9 -4.1M346.9 407.8l-3.9 -1.7M360.4 408.7l2.1 1.2M389.6 392.7l-2.0 0.7M403.5 419.3l0.8 3.0M369.6 409.4l-1.0 1.3M383.4 427.2l-1.5 2.8M387.8 389.0l2.5 -0.7M379.4 432.0l-1.4 4.9M391.4 392.7l2.7 -0.3M367.6 416.3l2.2 0.8M385.8 418.6l1.9 0.3M363.1 410.5l0.0 1.8M372.5 403.8l0.6 1.7M358.3 419.4l-3.1 -1.0M375.2 403.0l2.7 0.1M369.1 423.1l-0.0 3.3M344.1 404.0l-3.6 -1.8M344.8 405.0l-4.0 3.4M370.2 394.1l1.4 1.9M360.0 395.7l-0.6 -1.5M403.4 407.1l2.8 0.9M367.0 400.1l3.0 0.8M363.8 425.0l-1.6 2.0M376.9 409.5l-2.6 0.2M396.2 421.1l3.5 1.2M366.3 389.8l-0.0 -2.1M379.0 396.0l-0.7 1.8M387.8 403.9l0.7 1.5M375.7 427.1l-1.9 2.4M387.0 415.4l2.2 0.2M391.0 389.5l1.2 -2.4M391.1 408.7l0.7 2.9M325.7 347.9l4.7 0.1M301.0 352.5l-2.3 0.3M322.6 350.0l1.0 1.3M302.3 341.9l1.6 -4.3M319.8 359.7l0.4 4.8M293.7 357.6l-3.8 1.1M297.9 351.8l0.1 2.6M396.1 437.3l-1.7 2.4M403.3 434.5l2.1 1.5M390.7 440.5l-4.0 -0.0M385.8 431.0l-2.9 0.2M399.9 424.4l1.3 2.4M397.0 429.4l1.3 2.6" stroke="#f5b113" stroke-width="2.4" stroke-linecap="round" fill="none"/><path d="M271.1 153.6l-0.5 3.4M188.7 127.4l-4.1 -2.7M270.1 126.7l4.5 -0.0M214.3 162.5l-1.5 3.7M190.1 130.1l-3.8 -2.9M253.6 120.3l0.9 -4.0M263.5 160.0l1.4 4.6M273.0 142.0l2.3 3.8M270.6 151.0l1.1 2.7M247.9 109.2l-1.3 -3.3M264.3 129.1l3.1 -0.2M198.4 119.9l-1.1 -3.2M272.7 126.3l3.7 0.4M240.9 162.4l-3.0 2.8M254.3 156.6l3.6 2.0M276.4 136.2l3.3 -0.6M192.0 121.7l-5.6 -0.3M271.9 148.1l1.9 3.5M186.1 122.4l-2.9 -3.2M243.5 111.4l-0.9 -3.9M280.7 133.0l4.5 0.3M257.2 156.0l0.5 3.4M260.7 161.1l-0.8 2.9M227.1 167.3l-4.6 3.1M232.0 116.0l1.8 -1.9M268.3 139.2l0.5 -2.6M271.0 134.5l-4.6 -2.2M312.8 151.1l2.6 -2.8M303.7 155.2l-1.2 1.8M280.4 131.6l-1.0 -4.8M298.1 144.9l2.0 -1.8M259.0 136.6l-2.9 -1.6M313.8 163.8l1.9 3.6M302.0 150.4l1.8 -2.7M293.8 144.5l1.3 2.0M260.7 173.1l-5.1 1.1M252.1 145.9l-1.9 -4.0M300.7 139.8l4.6 -1.2M302.0 155.8l-1.4 1.1M301.7 136.9l4.7 -2.0M296.9 164.7l1.8 0.4M311.4 168.4l3.2 3.1M311.2 161.1l4.0 -0.8M262.7 176.2l-3.8 3.0M311.2 144.9l3.3 -4.0M300.4 148.0l2.4 0.2M187.8 153.3l2.0 -2.0M185.1 157.1l3.3 -0.5M157.7 144.4l-0.7 -4.8M184.7 178.5l2.1 3.3M157.0 140.9l1.2 -3.0M196.0 170.9l3.5 2.7M189.7 153.4l2.3 -3.3M199.2 169.7l4.8 1.4M138.2 146.1l-3.1 -0.5M196.6 155.8l3.6 -4.4M189.8 184.0l2.1 5.2M191.8 161.9l3.9 -2.1M190.6 154.5l4.2 0.3M188.8 181.8l-1.4 3.9M190.1 164.5l3.0 -1.2M186.1 173.8l2.9 2.0M195.8 168.0l4.4 -1.2M182.6 184.1l-1.1 4.9M209.2 141.4l2.0 0.5M190.7 129.5l-2.1 -5.0M201.2 132.6l-2.0 -4.2M216.7 144.1l2.1 4.5M173.2 147.4l-2.2 -3.1M199.5 132.7l-1.0 -2.8M378.7 161.2l2.8 -0.9M299.6 174.4l-3.4 -1.9M307.1 194.9l-2.2 3.3M369.2 192.6l0.3 3.0M360.9 189.0l-0.2 1.8M305.3 187.6l-2.7 0.4M373.1 190.8l1.5 2.3M317.1 198.6l-4.2 3.3M308.5 176.4l-3.6 -0.5M339.3 203.9l-4.2 3.2M360.4 163.8l2.0 0.0M322.9 200.3l-3.1 0.4M304.6 175.0l-2.6 -2.4M321.9 148.7l-3.7 -4.3M373.1 174.2l2.2 0.8M297.8 178.8l-2.8 -2.3M340.1 157.4l-1.7 1.4M338.6 155.0l1.1 2.6M337.0 196.8l-0.3 2.4M307.0 189.2l-3.2 1.2M374.5 188.9l3.1 3.4M316.7 153.2l-4.8 -2.0M307.0 185.3l-4.1 1.7M334.1 162.3l-1.5 2.9M338.1 160.3l-0.7 1.6M354.3 193.7l1.4 2.8M303.5 160.1l-5.4 -0.6M349.8 166.1l-0.8 2.6M329.2 146.6l1.4 -2.8M356.3 201.2l2.5 2.5M376.5 167.3l3.2 1.3M347.1 198.3l2.2 4.3M351.4 159.0l-2.4 1.8M346.4 153.6l-1.9 -3.0M365.5 193.4l0.1 2.9M351.6 200.3l-1.5 3.3M342.1 150.4l3.2 -3.8M301.6 192.3l-5.0 -2.4M363.1 183.4l-2.0 0.6M372.3 177.3l3.2 0.2M305.9 181.2l-2.1 1.9M327.7 158.4l-1.7 -1.4M372.1 179.3l1.0 1.6M334.9 203.5l0.9 4.2M330.0 194.7l-2.6 2.6M294.1 148.3l-3.1 -4.5M313.2 167.3l2.6 4.9M304.4 165.7l-1.8 1.2M191.5 257.4l-3.2 3.4M132.8 224.0l-3.3 0.6M155.6 207.2l-1.9 -5.1M211.6 244.6l2.2 1.6M206.3 216.3l1.7 -3.1M136.2 221.7l-2.0 -3.2M192.0 202.8l2.6 -4.0M161.3 202.6l-0.6 -4.3M136.1 235.0l-5.2 3.3M198.7 205.4l-1.6 -5.0M200.1 248.1l2.5 3.9M226.8 223.2l3.9 -0.9M191.9 252.6l0.3 4.8M207.1 204.7l0.3 -5.3M223.4 226.6l4.5 -2.0M136.9 222.8l-2.1 -2.4M195.2 254.4l-1.6 2.5M209.5 216.3l3.1 -2.0M220.3 230.1l4.4 2.0M222.5 238.6l2.4 2.3M209.5 217.8l1.7 -1.4M191.5 208.4l2.2 -3.2M211.1 242.3l2.2 2.9M157.0 204.8l1.0 -4.9M218.7 202.2l2.7 -3.1M229.8 214.3l3.6 -0.1M201.7 205.1l-1.1 -4.2M132.6 270.6l3.8 3.6M127.5 275.2l2.3 5.8M138.9 245.8l1.5 -1.8M119.2 227.5l0.6 -6.3M143.3 261.2l2.9 1.5M144.2 263.4l0.2 5.3M137.1 270.3l3.5 2.8M128.1 236.6l1.3 -4.0M102.5 230.3l-2.2 -5.0M115.6 231.8l-1.7 -3.1M142.7 256.9l3.9 0.6M117.9 227.5l-0.7 -3.0M111.4 229.2l-2.3 -3.1M108.1 230.3l2.7 -4.4M151.1 228.5l0.2 -2.9M152.6 244.0l0.2 4.3M137.5 223.1l-0.2 -4.7M158.8 236.0l5.8 -0.3M155.0 242.3l3.7 2.9M130.5 299.9l4.4 -1.5M142.1 355.3l2.6 1.5M141.4 329.1l2.2 1.2M143.1 349.4l2.1 4.8M133.3 298.1l3.2 -1.8M128.6 298.6l-0.7 -4.5M117.7 293.4l0.9 -2.5M115.3 286.5l2.8 -3.3M106.4 293.4l1.8 -3.5M126.2 368.6l-2.9 4.3M118.9 289.1l4.1 -2.2M91.7 292.5l-2.6 -4.4M75.3 296.1l-1.3 -3.9M153.3 343.0l1.2 5.9M140.8 291.9l-6.0 0.0M219.5 300.0l3.6 1.0M207.2 295.8l4.1 -0.1M168.6 340.4l-3.1 2.0M195.8 288.9l1.1 -3.5M161.6 279.1l-3.2 -2.0M179.9 279.5l0.6 -3.2M166.7 279.7l1.4 -2.7M207.9 298.5l1.8 -3.5M188.4 283.6l1.4 -3.0M220.0 310.9l2.5 4.6M209.9 317.0l4.2 0.2M203.9 294.5l2.2 -3.2M152.4 280.6l-5.0 -2.8M192.6 275.7l1.3 -4.2M212.0 316.4l4.6 0.1M207.3 306.2l2.4 1.5M215.8 292.5l3.2 -0.5M165.3 271.6l3.8 -0.2M173.5 288.3l3.2 3.7M175.4 285.3l3.1 -0.7M94.6 351.6l4.3 1.6M118.4 361.7l3.5 -2.8M282.7 221.7l-3.1 -3.6M295.0 261.8l-2.0 5.4M318.7 217.9l-1.3 -2.4M288.3 256.7l-2.0 2.1M359.3 263.5l3.1 2.5M342.3 272.5l-2.6 4.3M290.8 227.9l-2.2 -1.2M283.4 260.0l-3.8 2.9M349.0 217.6l1.8 -2.3M291.9 228.4l-1.4 -4.0M306.0 212.5l1.3 -4.2M370.7 240.5l1.7 1.0M344.0 218.0l1.8 -2.6M349.5 258.5l-1.4 2.5M365.8 260.1l2.1 2.2M341.8 218.6l2.9 1.3M353.8 215.3l2.9 -1.4M384.4 240.9l5.4 1.5M362.3 223.3l1.6 -2.1M328.5 269.4l-1.1 3.9M358.2 227.1l-2.5 1.4M375.0 231.4l3.4 -3.0M294.7 215.5l-1.8 -3.3M309.9 268.8l-3.2 5.0M332.8 216.8l1.4 2.3M344.9 213.6l-0.2 -3.2M276.6 241.3l-4.3 1.6M326.1 210.6l0.2 -4.5M366.0 237.5l1.4 1.2M336.4 230.9l2.1 0.6M293.6 257.3l-3.8 -0.8M353.8 231.3l2.2 2.1M374.0 221.7l3.6 0.1M351.3 246.7l-1.4 2.2M368.0 237.4l2.8 1.8M323.4 267.8l-2.4 4.0M352.8 222.6l1.8 -1.7M371.9 222.1l3.9 0.5M280.9 223.5l-4.1 1.2M316.1 220.7l1.7 0.1M339.9 270.0l1.6 4.4M288.8 230.2l-4.0 -2.3M335.5 220.2l-2.2 1.5M318.0 204.8l-4.1 -4.1M343.1 216.9l-0.0 -2.0M350.6 215.8l2.6 -1.6M296.8 219.0l-1.8 -1.8M352.0 248.8l-1.7 0.4M296.6 214.7l-1.5 0.8M275.5 215.6l-3.2 1.0M278.6 218.6l-3.0 -2.8M296.6 211.8l2.1 -2.0M294.4 236.1l2.3 5.3M306.4 228.2l2.2 0.7M304.6 216.4l-0.4 2.5M379.9 230.9l-1.9 1.4M384.9 236.4l1.1 3.7M361.0 242.1l-2.3 1.9M387.8 238.8l2.9 1.4M412.0 257.9l0.1 -2.4M427.3 266.1l1.5 2.0M422.1 257.8l-2.5 0.3M426.2 275.0l-2.1 1.2M398.2 274.2l-2.1 -0.5M416.8 295.9l-1.2 4.4M383.6 267.0l-4.0 1.6M434.3 255.4l3.1 -1.1M440.3 275.5l-0.3 2.5M433.8 258.7l-3.1 0.3M392.8 270.3l-4.4 1.5M424.0 265.3l-1.2 1.8M387.6 266.0l-4.4 -3.1M415.7 253.5l-2.0 -4.3M446.1 260.8l1.9 -2.8M392.3 256.4l-5.9 -1.7M417.5 277.0l-2.4 0.1M435.8 286.0l0.4 1.7M440.2 291.0l-1.6 3.0M421.7 286.6l0.0 3.1M447.4 265.9l2.9 -1.1M413.6 259.5l2.2 1.3M396.5 265.7l-3.0 -2.5M438.4 285.2l-0.4 2.1M439.1 271.0l-1.7 2.1M418.0 261.8l0.4 2.8M386.1 270.2l-2.6 -1.6M447.9 284.5l3.3 3.1M432.4 263.3l-2.7 1.7M431.2 277.7l1.9 2.5M431.7 274.2l1.2 2.9M424.3 289.2l0.2 3.0M429.2 270.9l0.0 2.4M431.0 266.5l-1.7 1.8M416.6 288.8l0.4 2.6M387.0 249.8l1.7 1.9M407.3 264.2l0.1 3.2M384.8 251.8l2.2 1.8M387.5 267.3l-3.2 1.0M392.3 245.7l0.9 -2.2M378.5 249.4l-4.4 -2.4M397.9 264.6l1.2 3.3M394.6 246.1l1.0 -2.1M389.6 262.1l2.3 0.7M394.5 266.1l-0.0 3.4M387.8 244.9l-3.2 -3.9M402.5 253.4l-2.3 1.4M384.6 254.0l-2.4 2.0M409.0 255.9l1.9 3.7M406.1 258.3l2.3 -0.2M434.0 286.0l-2.9 -0.6M452.2 294.0l1.1 3.5M445.5 297.2l-4.0 1.5M435.3 282.4l-5.1 -2.9M415.2 330.1l0.3 2.8M425.3 327.0l2.3 3.2M417.9 327.3l2.1 1.3M417.5 323.6l-0.9 -3.3M374.5 379.6l3.7 0.2M315.2 397.1l-2.8 4.6M313.7 400.5l-5.9 -0.4M341.8 342.8l2.1 -3.2M347.5 355.9l-0.4 2.1M300.0 383.7l-4.4 -2.6M322.2 353.6l-1.9 -2.0M367.5 376.6l2.5 -0.5M316.6 393.3l-4.0 0.4M317.6 399.3l-2.7 1.1M359.8 393.9l-0.9 3.6M354.0 399.5l3.4 3.2M361.8 399.9l-2.4 3.3M336.4 354.9l-2.1 0.2M324.7 350.9l-1.1 -2.5M330.0 399.1l-1.6 2.2M371.5 377.7l2.1 2.4M367.1 376.6l-0.0 2.4M334.1 403.4l-0.4 3.0M369.0 381.0l2.9 2.0M306.7 351.9l-5.5 -0.7M323.8 349.9l1.2 -3.5M377.1 373.2l4.5 1.0M332.3 396.0l-1.8 2.7M349.8 404.7l3.3 4.7M335.5 356.4l-2.0 1.5M359.9 390.5l1.8 1.0M355.2 373.3l-2.1 2.0M380.0 373.3l3.0 0.3M357.1 364.3l1.3 2.7M319.7 402.4l-5.5 0.5M305.8 390.5l-3.9 0.4M291.8 371.1l-2.9 -1.7M321.6 360.9l-2.0 0.6M392.2 403.6l-0.9 2.0M404.2 419.5l4.3 1.6M373.5 428.9l-0.8 2.9M384.0 408.0l2.2 0.2M354.0 426.2l-3.9 0.5M403.6 422.8l0.8 3.6M361.0 403.6l0.5 1.9M390.4 430.0l-0.5 4.4M406.2 420.6l0.9 4.6M360.5 385.4l-1.8 -4.2M373.5 393.4l0.1 2.2M368.6 388.5l-2.1 -1.2M362.9 388.8l-1.7 -1.6M389.9 383.8l2.4 -1.6M350.9 399.4l-3.1 -2.5M397.6 427.9l3.9 2.6M404.1 404.0l2.3 -3.1M377.1 403.6l1.8 0.5M380.8 397.5l3.0 1.0M377.9 424.9l0.7 1.7M405.9 408.5l4.9 0.1M393.8 421.4l1.7 1.4M399.6 392.6l0.3 -2.9M377.5 410.2l2.9 0.5M379.9 388.6l2.5 1.2M350.7 423.5l-2.9 5.4M359.7 405.1l0.0 3.1M384.1 426.4l-0.8 2.1M389.1 390.8l1.2 -3.5M348.6 408.6l-4.4 -1.5M398.8 408.5l-1.2 1.4M384.6 420.0l-0.2 2.4M298.5 345.5l-2.0 -1.3M325.3 343.0l3.3 -2.0M293.8 347.6l-5.2 -1.4M294.8 354.1l-5.0 -0.1M386.7 429.4l-2.1 -1.6M395.6 427.3l0.7 2.6M389.5 427.3l-2.2 -1.3M407.8 433.0l2.1 1.9M393.6 424.5l1.2 1.4" stroke="#fbc017" stroke-width="2.4" stroke-linecap="round" fill="none"/><path d="M269.4 157.1l3.3 2.1M280.1 137.4l3.8 2.1M224.5 114.1l1.4 -2.5M202.1 113.8l-5.4 -0.9M206.6 164.2l-4.3 3.9M252.2 114.4l2.9 -2.2M271.0 132.4l4.0 -1.5M236.2 116.4l2.2 -3.0M276.3 150.1l1.6 3.3M260.2 125.5l1.8 -2.5M235.0 113.6l-0.8 -4.5M246.2 107.2l4.3 -3.0M263.1 125.4l2.9 -2.9M279.8 147.7l3.5 0.0M275.2 152.5l1.0 3.6M274.7 140.9l2.9 -0.1M233.9 113.9l-0.2 -3.5M298.9 133.0l0.8 -5.6M309.1 153.7l2.6 0.9M273.9 132.1l-3.3 -3.8M290.3 133.6l-0.3 -3.7M295.9 137.0l0.2 -4.8M282.3 138.6l-0.6 -2.3M307.7 163.3l4.1 1.7M292.8 135.5l-0.8 -4.6M252.3 141.0l-6.2 -0.9M251.5 146.1l-2.8 -0.0M287.5 180.5l2.3 3.1M301.6 135.8l4.2 -3.0M303.4 171.4l3.2 1.7M298.9 138.5l3.3 -0.6M306.3 148.1l2.3 -2.3M311.0 159.4l3.0 1.6M315.0 157.6l3.7 -0.6M313.9 148.3l4.2 2.2M298.1 137.6l4.9 -0.9M187.7 186.4l3.2 2.4M170.7 144.0l2.5 -4.7M192.4 153.6l2.7 -3.2M196.2 171.0l4.6 1.3M181.3 145.2l3.3 -1.5M198.8 172.5l5.1 -0.5M196.8 176.3l3.5 2.7M210.8 152.5l2.9 2.5M179.9 132.5l-5.0 0.3M187.1 131.1l-2.5 -3.5M212.6 148.0l5.2 0.9M182.1 132.2l0.6 -3.5M210.1 155.1l2.2 2.5M366.3 194.4l1.0 2.9M353.4 202.2l-1.5 4.9M324.3 147.4l2.0 -4.7M335.5 153.8l-1.2 -2.1M358.3 195.4l-1.1 2.6M380.6 169.1l3.4 -1.0M375.6 168.4l2.5 0.4M297.4 178.8l-3.8 -2.4M321.2 148.9l-2.1 -4.2M300.8 175.3l-2.8 1.4M300.4 190.0l-2.7 4.2M382.4 171.2l2.6 -1.0M386.9 182.1l3.8 3.9M297.3 190.1l-3.7 3.0M384.7 172.9l3.6 -0.1M373.0 157.4l2.4 -2.9M385.1 184.4l4.5 1.5M361.9 153.2l4.7 -1.8M354.9 195.1l2.2 2.8M344.3 155.3l1.9 -3.3M374.3 190.7l2.7 1.9M307.9 162.6l-2.0 -3.2M365.8 191.1l-0.9 2.4M337.0 150.2l0.4 -3.4M296.5 163.8l-3.0 -5.0M315.2 143.6l2.6 -3.3M308.2 145.9l1.4 -3.0M183.8 205.4l2.2 -4.2M172.4 205.7l1.1 -2.5M190.0 201.7l-1.5 -4.2M210.5 213.3l3.5 -1.2M215.3 225.7l3.5 -1.1M210.7 204.3l3.7 -0.9M214.4 209.9l2.9 -5.0M221.4 226.5l2.7 1.6M212.0 217.4l2.7 -1.9M149.1 209.9l-1.4 -5.2M226.3 208.1l1.8 -3.5M227.4 221.5l4.5 2.7M218.5 203.1l3.1 -3.4M201.2 202.8l-5.0 -1.0M117.7 230.3l1.2 -3.8M124.6 232.7l4.2 -2.4M134.8 234.8l2.6 -0.9M102.2 226.8l-2.1 -3.4M118.1 229.3l1.3 -2.5M141.0 223.0l0.3 -5.2M154.8 228.5l0.8 -3.4M142.7 308.1l2.2 -3.8M154.7 328.6l5.6 -2.4M110.8 284.4l-1.8 -3.4M84.1 289.8l-2.6 -3.0M140.3 357.9l0.2 4.6M149.9 343.6l1.6 4.0M119.8 286.4l-1.5 -5.6M114.2 287.3l-1.3 -3.0M147.1 336.8l1.4 4.4M148.5 328.4l4.3 1.9M212.4 308.8l3.5 2.5M180.8 277.0l-3.5 -4.5M198.6 281.1l0.8 -5.5M221.6 308.1l2.1 5.6M209.1 315.2l2.6 2.8M192.8 336.9l2.5 4.0M216.6 310.1l1.3 4.1M195.0 334.0l-0.3 5.4M217.3 320.0l4.8 0.3M145.4 284.9l-3.1 -1.0M216.1 315.4l1.6 3.5M139.4 271.3l-0.3 -3.2M114.3 275.4l-4.2 -3.7M173.6 285.1l5.0 -0.5M169.5 275.3l2.1 -2.9M174.1 285.2l1.4 4.1M158.4 271.9l2.9 -0.9M172.6 277.8l2.3 -2.2M161.8 271.6l5.2 -2.0M92.7 341.3l4.4 -1.7M86.9 334.8l0.2 -4.3M97.2 353.7l3.1 4.3M104.3 360.3l-3.2 -3.9M130.0 367.6l4.9 0.5M378.4 223.9l4.7 -0.5M292.4 212.4l-1.3 -3.2M325.8 266.6l0.5 4.6M368.3 219.5l4.5 -2.3M356.1 231.7l2.5 0.2M293.2 221.9l-3.4 -2.5M349.2 273.7l1.0 3.2M285.7 258.3l-5.0 -2.0M363.0 269.0l-1.5 3.7M380.9 237.5l3.4 -2.8M353.8 227.3l-0.9 2.5M358.2 212.9l0.1 -4.0M361.3 263.1l-1.1 4.6M275.0 233.5l-4.5 1.6M327.4 209.7l1.6 -2.5M278.4 233.1l-5.1 -2.6M307.5 268.0l-2.0 4.5M317.4 206.7l-3.7 -3.5M373.1 223.8l2.9 -2.8M290.4 223.9l-2.2 -1.4M343.0 218.3l-1.0 2.2M288.6 221.5l-2.8 -0.8M287.2 221.4l-4.9 -2.9M349.7 263.2l-2.3 3.2M370.9 259.2l4.5 3.0M335.9 271.9l-3.8 2.9M284.5 226.3l-4.8 -0.7M308.6 207.3l-3.1 -3.8M383.0 239.9l2.3 3.0M327.7 216.9l0.6 -2.6M364.1 218.5l2.7 -4.1M372.7 217.5l5.6 0.2M361.3 232.1l-1.3 1.5M343.8 216.5l-0.9 -1.9M292.8 266.3l-5.0 0.1M359.3 211.3l-1.2 -5.0M275.9 229.6l-4.9 -2.0M329.2 268.6l-0.5 4.0M281.5 212.4l-2.8 -5.2M303.9 212.6l0.8 -4.0M294.4 212.8l0.5 -2.5M294.4 211.8l0.1 -2.9M312.0 222.8l4.1 2.6M299.1 210.7l2.7 -1.3M288.1 212.5l1.7 -3.2M383.9 228.5l1.8 -0.4M388.7 225.7l2.7 0.8M369.8 248.6l-2.1 5.1M383.6 225.0l-1.5 1.1M352.9 238.3l-3.9 -0.1M378.3 228.0l1.7 0.1M383.2 218.3l5.1 -2.7M428.9 255.1l2.8 -2.0M447.4 261.2l3.3 -0.3M440.6 260.6l-0.9 3.0M439.7 274.6l-1.2 1.5M439.4 263.5l-0.8 2.6M429.9 261.3l0.1 2.2M447.6 279.2l3.2 0.9M437.3 253.7l3.1 -2.7M436.8 253.1l2.7 -3.4M437.6 265.2l0.2 2.8M449.1 277.4l1.4 1.7M401.5 291.9l-4.8 0.0M439.8 257.3l1.3 -2.8M393.3 261.1l-3.8 0.0M428.9 294.0l-3.3 3.0M447.6 290.2l-1.7 3.7M434.9 278.7l1.9 2.4M419.0 250.1l2.1 -4.2M449.3 267.7l1.8 -2.4M424.7 296.8l-2.7 1.9M416.3 257.5l-0.1 -2.5M417.5 255.9l-1.7 1.1M395.3 270.1l-2.6 -1.0M441.7 284.2l0.3 3.0M407.8 260.4l5.0 0.5M377.0 257.3l-3.1 -1.0M391.8 248.6l2.2 0.8M402.9 250.2l0.9 -1.8M452.5 293.8l0.8 4.2M458.6 288.9l0.5 2.7M451.3 278.6l3.1 -2.2M460.3 291.7l3.5 0.6M435.7 286.0l-2.9 1.9M410.0 327.9l-2.6 0.5M421.0 332.0l1.9 2.7M327.6 344.2l-2.1 -4.3M375.4 383.9l0.7 3.0M376.1 392.4l1.2 3.3M333.3 341.6l-0.9 -4.9M324.5 345.2l-2.0 -2.4M297.2 357.6l-4.1 1.1M374.2 373.1l2.9 1.5M356.3 399.5l1.6 3.3M325.8 343.0l-2.6 -2.4M321.3 404.7l-5.0 2.1M318.7 356.4l-0.6 -1.9M381.3 363.3l5.1 -1.8M375.4 367.1l4.0 -2.3M293.5 381.1l-3.1 -2.7M292.1 372.4l-5.0 2.0M322.5 400.0l-3.1 3.4M369.1 348.9l2.4 -1.9M323.0 345.6l-1.2 -3.0M357.7 351.4l3.8 -1.4M313.7 348.7l-1.4 -3.3M301.8 382.4l-3.9 1.6M354.8 346.6l0.9 -3.7M355.8 397.6l-2.0 2.6M331.6 342.8l-0.7 -3.2M372.5 356.4l1.7 -3.7M377.7 384.3l2.7 2.3M301.2 360.5l-2.0 -1.8M372.7 389.8l4.8 1.6M368.5 362.5l2.5 -1.5M295.7 375.5l-3.7 1.3M384.8 372.8l3.5 -0.3M346.2 358.0l1.6 2.4M334.5 403.9l-4.4 2.8M374.1 365.6l3.4 1.2M382.0 363.2l4.5 1.2M336.6 401.3l0.5 3.2M368.2 382.9l0.2 2.4M393.1 422.1l2.0 2.3M359.9 385.2l-3.3 -2.3M399.8 407.4l1.1 1.6M393.1 424.7l-1.7 3.4M377.1 430.0l1.3 4.6M369.7 392.2l-0.7 2.3M354.9 399.7l-2.6 -1.5M403.8 408.1l1.8 2.9M353.3 425.2l-3.8 -0.9M353.5 385.3l-3.8 -1.6M362.0 389.3l-1.4 -2.4M386.1 429.1l-1.2 2.7M395.9 409.2l2.1 0.9M344.3 409.3l-4.0 -3.9M408.2 405.8l5.2 -0.7M403.3 410.4l0.8 3.5M374.5 394.8l-1.3 1.0M396.0 417.5l1.8 2.9M407.8 408.1l4.0 -0.2M403.2 424.7l3.2 2.9M410.7 407.1l4.6 1.4M397.9 426.0l0.2 3.9M385.6 428.6l2.0 4.2M291.6 349.4l-4.0 1.9M329.2 348.0l2.5 -5.0M313.0 363.0l-2.8 4.5M409.0 429.7l4.0 -3.6M384.9 434.0l-2.1 -2.6M388.5 423.9l0.0 -5.7M385.8 438.0l-4.3 -1.5M385.4 431.8l-2.6 -2.9M408.5 430.7l1.8 -2.1M393.2 422.2l1.4 -3.5" stroke="#fdcf25" stroke-width="2.4" stroke-linecap="round" fill="none"/><path d="M249.3 113.9l2.1 -4.6M257.8 112.9l1.0 -4.1M224.9 105.6l1.3 -3.2M260.8 119.6l1.4 -2.6M265.8 126.1l2.2 -0.7M247.4 106.7l0.4 -3.3M267.7 156.8l2.4 5.6M229.7 108.6l-0.6 -4.6M265.6 160.3l0.8 3.6M272.1 134.0l3.9 -1.3M270.2 119.0l5.1 -2.2M217.5 107.4l0.5 -4.5M278.9 136.5l5.0 1.9M225.1 109.8l1.2 -5.1M274.0 140.6l1.5 3.3M272.3 132.9l4.0 1.7M248.3 108.9l0.8 -5.9M251.9 114.3l0.9 -4.6M271.3 122.7l4.9 -0.5M257.4 111.7l3.2 -1.0M269.7 115.3l4.2 -1.8M271.9 119.2l5.3 -3.1M283.7 132.8l3.1 -2.4M280.0 129.0l3.7 -1.9M280.0 124.8l5.2 0.7M279.9 147.8l5.7 0.6M303.3 143.7l3.9 -1.6M296.3 131.2l2.5 -2.7M305.8 167.2l4.0 1.6M287.1 134.1l1.7 -3.2M307.6 169.6l2.6 1.7M271.6 132.2l-2.9 -1.6M312.5 165.8l3.5 3.0M311.5 148.9l3.9 1.3M263.1 133.3l-2.6 -3.8M254.9 139.3l-5.3 0.5M309.1 158.8l2.8 1.1M258.4 137.6l-0.8 -3.8M251.7 143.3l-4.8 -1.3M306.0 170.1l1.7 4.9M199.6 165.4l2.7 3.7M185.2 147.6l3.4 -4.3M176.8 142.9l-1.4 -3.2M183.0 145.2l-1.0 -6.2M210.3 136.4l2.3 -4.0M212.0 134.9l4.3 -0.3M188.4 129.9l-2.7 -4.0M215.8 145.3l3.2 1.5M205.5 132.6l2.9 -4.1M210.9 137.4l3.7 -4.7M340.9 147.2l-1.4 -3.1M380.4 163.5l2.8 -4.8M371.7 158.9l3.7 -1.1M374.2 197.7l4.0 3.4M375.9 188.6l3.7 2.2M374.9 166.0l3.1 -0.5M377.4 168.0l4.2 -1.8M320.7 148.7l-5.1 -2.1M387.4 184.7l0.6 5.2M390.4 181.0l2.3 2.5M369.5 199.2l2.1 5.2M366.4 192.2l3.6 2.5M385.5 161.6l1.3 -4.3M377.7 178.9l0.9 2.1M368.6 161.0l3.8 -0.2M386.7 179.2l3.1 3.5M377.5 181.7l2.5 -0.2M377.4 161.0l3.7 -2.3M355.0 150.6l-0.2 -3.3M387.6 171.6l4.6 0.1M338.8 150.9l-0.8 -2.4M332.5 147.1l-1.6 -5.5M386.1 164.1l5.3 0.0M374.1 157.6l1.1 -2.6M361.2 150.0l2.1 -3.7M390.1 171.3l2.9 1.7M385.4 170.3l4.3 2.8M338.4 145.5l2.4 -4.8M387.8 170.3l4.1 -1.0M372.4 155.9l3.3 -4.7M328.8 146.2l0.8 -3.2M326.3 148.7l-3.7 -2.8M384.0 170.1l3.2 0.6M332.9 153.9l0.1 -3.9M358.5 155.4l2.5 -2.4M386.8 169.4l3.8 -1.2M374.3 196.6l0.5 6.2M296.3 186.6l-3.6 2.2M378.3 163.7l3.1 -2.0M364.4 148.9l3.9 -2.2M377.8 192.8l-0.1 4.8M354.5 148.3l0.5 -5.9M365.5 164.3l2.0 2.3M388.2 167.8l5.9 -2.2M389.1 180.4l3.9 -0.9M386.1 173.9l4.8 1.4M310.7 140.9l0.7 -3.7M300.9 145.1l-2.2 -2.6M317.8 143.5l1.8 -4.7M205.2 206.7l0.2 -4.7M218.2 213.3l4.0 -2.5M229.6 232.5l1.5 3.5M221.0 221.7l3.0 -2.0M213.9 210.3l2.7 -3.2M212.7 213.9l1.9 -3.8M220.0 246.0l-0.1 3.6M222.8 215.5l5.2 -1.9M217.3 214.4l5.0 0.0M219.7 200.4l1.1 -6.3M143.7 239.2l1.7 -3.3M143.0 241.5l5.1 -2.0M141.8 237.3l2.7 -3.9M148.3 252.4l6.2 0.6M146.3 249.9l4.2 -4.2M159.6 236.2l4.8 -2.0M134.5 293.0l0.3 -6.0M153.3 316.4l5.6 2.8M148.0 313.2l4.6 -0.1M128.2 288.0l4.1 -1.5M150.5 316.8l2.9 -2.6M152.6 318.4l4.6 0.3M125.5 286.5l1.4 -4.2M152.0 311.0l3.0 -2.5M132.6 296.5l1.3 -5.1M147.4 305.5l1.0 -3.8M134.4 292.6l2.4 -5.2M204.8 289.2l3.2 -0.1M206.1 284.2l3.2 -4.2M211.8 289.6l5.1 -3.4M192.5 276.0l3.1 -1.9M203.8 283.2l1.6 -3.6M219.2 298.5l5.5 3.4M193.3 277.5l-0.2 -5.3M198.0 283.6l-0.2 -4.2M210.7 326.9l3.8 2.0M206.9 290.9l2.8 -4.4M216.8 306.4l3.3 -2.6M173.0 290.5l2.9 5.6M386.3 231.0l2.7 -3.4M385.1 242.2l5.0 -0.0M323.8 209.2l0.0 -3.5M380.4 256.3l2.5 3.2M359.2 208.6l1.6 -4.0M357.7 213.4l4.0 -2.7M389.6 237.4l3.4 3.9M334.6 274.9l2.3 4.1M340.4 214.7l0.1 -2.7M371.4 216.7l2.1 -2.7M375.7 238.8l2.7 -1.7M311.7 210.7l1.9 -4.4M368.1 217.2l5.2 -0.2M279.0 222.6l-4.1 -0.4M384.1 226.9l2.2 -2.4M382.0 235.1l3.2 -2.8M361.4 219.1l1.5 -3.0M364.0 211.2l5.6 -1.6M336.5 208.4l-1.6 -2.9M341.5 205.8l1.9 -5.7M357.9 213.3l2.5 -0.9M361.7 269.5l-3.3 4.8M388.9 236.1l4.2 -0.4M303.2 270.2l-5.5 2.3M308.5 215.1l-2.9 -2.0M338.4 203.6l-2.4 -4.8M365.0 223.4l2.0 -2.2M388.4 239.9l4.7 -2.0M342.8 272.3l-2.3 2.1M368.5 224.9l2.6 -1.5M296.4 214.2l-2.9 -2.3M316.0 206.4l-2.5 -2.3M342.9 217.9l-1.7 0.6M343.9 209.9l3.1 -3.4M387.1 245.4l4.4 -0.6M339.4 273.2l-3.5 3.8M344.2 213.6l1.9 -1.4M386.9 246.0l3.0 1.8M382.9 229.8l5.4 -1.9M382.3 252.5l4.0 1.3M388.6 233.3l4.2 1.7M384.1 235.4l5.2 -2.5M307.8 207.7l0.6 -3.4M341.4 210.1l-0.3 -2.7M379.4 224.4l2.5 -3.8M317.6 205.7l-4.2 -3.9M346.3 213.4l3.1 -1.5M356.8 270.4l1.3 5.3M310.7 210.9l1.1 -3.0M348.4 271.3l-1.2 5.4M385.6 249.4l3.9 2.0M376.3 229.0l3.2 0.1M375.3 215.3l1.3 -3.8M322.5 204.9l-3.0 -4.7M357.0 214.2l0.3 -3.7M313.3 205.3l-5.2 -3.0M373.6 230.2l2.3 -1.1M369.9 239.0l2.6 -2.7M371.6 218.4l2.9 -3.3M368.4 226.3l1.1 -4.1M302.3 210.6l2.5 -1.9M309.5 214.3l4.8 0.0M306.8 213.2l4.2 -3.9M311.5 223.7l3.0 0.1M380.3 216.0l3.4 -3.4M379.2 220.9l0.6 -2.7M391.1 226.0l3.2 -3.5M373.7 250.1l-2.6 2.8M388.2 225.0l2.1 -2.5M372.6 218.2l2.0 -2.8M357.1 222.4l-3.8 -1.5M361.0 214.7l0.7 -3.8M353.7 219.9l-0.8 -5.4M380.9 242.4l-1.6 3.5M382.5 224.4l-1.8 1.2M388.9 222.3l3.1 0.6M385.1 233.4l2.2 1.7M384.6 219.2l4.9 0.2M354.5 241.8l-3.1 2.3M383.9 234.3l2.6 1.1M455.9 284.7l3.1 4.7M459.4 271.5l4.9 -1.0M421.9 297.5l-1.9 3.2M445.5 257.9l3.8 -0.9M409.0 249.5l-2.4 -5.9M422.4 251.9l0.4 -3.2M448.7 275.7l2.1 1.2M442.6 293.2l3.9 4.2M459.6 275.0l3.0 -0.5M438.0 262.0l-0.8 2.7M459.0 265.4l3.8 -0.4M423.3 250.8l-2.6 -2.7M437.6 293.5l-0.1 3.9M421.2 248.9l0.1 -3.8M455.1 262.2l3.0 0.8M455.9 261.4l5.8 -0.1M417.4 252.3l-1.7 -2.2M450.4 281.4l2.4 1.5M452.6 288.8l2.8 3.9M443.0 292.5l-1.0 3.3M446.7 286.0l2.3 3.5M446.4 288.5l0.1 4.8M446.3 290.1l5.2 3.1M461.5 277.0l5.8 -1.0M462.4 269.8l5.4 -0.6M446.9 289.8l1.3 4.5M430.7 251.3l0.5 -4.9M454.6 261.0l3.4 -1.7M416.5 247.7l0.6 -5.2M453.5 258.4l3.1 -2.1M440.9 294.1l-2.0 3.3M460.3 276.7l1.2 4.0M431.8 253.9l-0.3 -2.7M442.6 287.7l0.4 2.6M441.2 256.0l3.1 -3.1M454.5 273.7l3.0 0.2M453.2 261.4l2.9 -0.2M441.7 279.3l1.2 2.5M435.3 258.6l1.4 -1.7M410.8 252.7l-3.1 -3.1M444.1 255.0l1.6 -3.0M388.4 261.6l-2.8 -3.3M461.9 279.0l2.0 3.7M448.1 257.4l3.1 -0.0M431.4 255.4l-0.7 -1.9M449.4 270.9l2.7 -0.3M452.4 255.6l0.5 -3.7M444.3 250.3l0.9 -3.4M453.7 278.7l4.2 0.3M396.8 256.3l-3.9 -1.9M412.4 251.8l0.5 -3.8M446.1 270.3l1.6 2.8M452.2 256.0l2.9 -2.9M407.9 253.3l-0.4 -3.8M456.9 281.1l5.1 -0.3M416.6 254.3l-0.7 -2.5M405.5 258.1l-1.7 -3.6M457.8 279.5l5.9 0.2M398.4 288.4l-2.1 5.2M430.1 249.6l-1.7 -4.8M399.4 265.3l-2.6 4.9M411.9 257.2l0.7 3.8M405.7 256.8l0.5 1.9M377.1 249.1l-1.6 -5.7M383.6 247.1l-2.8 -2.7M402.4 250.4l1.2 -3.0M387.7 243.4l-4.2 -2.5M396.2 244.1l0.3 -5.1M387.4 243.9l-3.2 -2.4M408.2 258.5l0.6 3.7M404.1 245.6l4.1 -2.2M379.3 248.2l-2.4 -3.8M403.7 248.6l1.0 -2.9M456.7 281.2l2.0 -3.9M455.0 281.4l4.1 -1.6M452.2 279.1l-1.9 2.3M456.2 283.6l1.6 -1.7M455.7 295.9l2.4 2.3M432.6 285.4l-3.2 -0.3M458.0 288.5l3.1 0.7M422.7 325.2l3.6 -1.0M425.4 326.6l4.0 -1.1M424.4 330.6l4.0 1.9M420.9 324.2l1.5 -3.6M415.4 323.1l-3.8 -2.9M425.2 331.8l-1.5 3.3M413.9 323.9l-2.4 -2.8M423.7 324.4l2.4 -0.7M344.8 350.8l2.2 -2.6M378.1 372.3l2.1 3.0M375.9 384.0l2.0 1.5M378.8 393.5l-0.8 3.6M370.4 387.7l1.6 2.3M370.4 390.5l1.1 2.8M365.8 364.2l-1.5 2.1M378.3 376.6l1.9 2.8M367.0 355.8l2.9 -1.7M377.2 387.2l4.9 0.7M343.5 349.4l1.2 -2.4M360.5 357.2l0.3 -2.3M351.0 342.5l3.3 -4.4M375.3 361.0l4.2 -2.7M374.9 366.5l3.8 -1.6M381.0 384.9l3.1 3.1M353.1 403.6l3.4 4.3M370.7 381.5l3.1 2.5M358.4 354.9l2.5 -0.8M361.5 349.1l-0.8 -4.8M350.1 340.8l-1.5 -4.9M321.8 343.5l-4.4 -4.1M379.8 374.8l1.3 2.8M326.9 343.2l-0.1 -5.1M382.0 378.4l4.7 3.1M373.8 368.8l2.9 1.7M371.3 396.9l0.7 4.0M366.0 350.5l1.5 -3.0M354.6 342.4l4.2 -3.4M371.4 396.9l0.1 4.5M296.8 357.2l-4.3 0.7M380.6 362.0l4.7 -1.0M347.8 341.9l4.1 -2.9M341.6 343.1l-2.1 -2.3M384.1 376.7l3.8 -1.0M343.8 343.8l-1.3 -2.7M380.0 389.0l2.0 2.7M356.4 355.3l1.8 -0.7M377.7 392.7l4.5 2.5M373.2 369.6l4.2 0.6M380.8 358.8l2.1 -2.9M307.5 348.0l-4.0 -0.6M370.8 347.9l5.8 -2.1M332.2 344.2l-1.9 -4.1M363.5 399.9l-0.9 3.9M365.9 345.0l0.6 -3.9M291.1 370.4l-3.6 -1.5M374.9 393.6l2.3 5.0M316.1 353.3l-1.4 -3.3M365.3 353.7l3.4 -3.1M400.7 386.0l3.7 -3.6M411.1 401.7l5.9 1.2M374.4 433.7l-2.7 3.8M398.8 386.1l0.4 -5.1M349.9 396.5l-4.1 -3.3M409.8 420.1l-0.2 6.2M361.7 384.8l-0.5 -4.9M385.9 386.6l3.1 -2.2M403.9 390.4l3.9 -4.7M368.2 378.9l-3.2 -4.8M408.2 404.6l5.0 0.4M348.7 398.2l-3.4 -2.8M398.9 406.5l3.4 0.9M395.6 383.8l0.4 -4.8M353.6 390.4l-5.2 -1.9M347.1 398.3l-3.4 -1.6M399.1 431.1l-1.4 4.3M408.5 411.4l5.1 -0.1M404.1 406.0l3.2 -2.8M397.5 391.1l0.5 -2.5M390.1 384.2l2.8 -2.3M378.5 378.6l-0.2 -5.7M393.8 382.9l0.3 -5.1M409.7 419.2l3.1 1.1M400.8 414.3l0.2 2.3M402.1 411.3l2.5 0.7M393.5 387.8l4.0 -3.0M375.0 379.7l1.6 -5.9M404.4 409.9l2.3 1.7M383.8 386.8l1.4 -3.7M405.9 399.6l2.7 -2.9M405.0 392.3l5.3 -1.9M370.8 378.9l-5.2 -3.5M392.0 381.9l5.8 -1.9M401.0 393.4l1.3 -4.3M397.3 385.7l1.8 -5.6M403.4 406.1l2.2 -2.2M399.9 420.6l2.3 3.0M393.3 381.1l0.4 -3.8M318.3 340.0l0.1 -4.8M292.8 346.8l-5.3 -1.5M327.2 359.3l3.0 1.6M321.4 344.1l-0.3 -3.9M400.6 438.3l2.3 4.3M406.4 429.0l2.1 -2.7M410.8 433.4l3.3 0.1M408.7 426.3l5.7 0.2M406.1 424.9l4.6 -2.4M404.6 426.5l3.1 -2.4M393.7 423.1l-3.7 -1.5M394.4 424.0l-2.7 -2.2" stroke="#fedd36" stroke-width="2.4" stroke-linecap="round" fill="none"/><path d="M209.8 136.7l2.5 0.6M194.4 144.8l-2.1 1.6M204.7 133.1l1.9 1.6M232.6 155.8l2.0 1.6M251.3 139.3l-0.6 2.3M206.6 148.3l1.3 2.2M213.0 148.1l2.0 0.9M220.4 132.7l-2.6 0.1M229.1 157.6l-1.6 1.5M235.4 166.1l-3.6 3.1M197.8 136.2l-1.8 -1.4M257.2 150.7l1.3 2.6M222.6 132.8l-1.2 2.6M229.8 129.3l-1.2 1.9M202.5 130.9l-2.5 1.3M246.3 134.9l-2.0 0.6M218.9 122.0l-1.8 0.6M254.1 141.1l0.4 2.5M199.8 147.5l-1.4 1.5M212.5 152.9l-2.0 -0.1M198.1 131.6l-2.5 -2.3M218.7 140.0l-2.3 1.8M206.1 143.2l-1.8 2.0M261.0 153.2l-1.8 2.2M256.1 165.2l-3.3 1.9M262.8 148.0l1.3 2.9M266.1 154.2l-0.6 2.0M278.4 152.8l-0.8 1.9M284.1 151.9l-2.3 1.9M273.3 160.6l-0.5 2.0M278.6 149.8l1.6 0.8M165.5 165.6l-1.7 0.0M169.0 170.3l-1.4 1.0M168.6 168.4l-0.2 2.0M161.1 173.7l-2.9 0.2M170.6 151.7l-1.9 0.2M139.7 175.5l-2.8 3.1M164.0 168.7l-0.2 1.7M142.5 179.4l-2.7 -1.3M186.9 165.3l2.0 2.3M178.4 175.0l0.8 3.1M161.3 178.1l1.0 2.1M160.9 167.5l0.1 2.8M154.1 172.0l-2.5 0.2M163.2 163.6l0.8 1.8M144.7 178.3l-3.1 -0.9M162.9 184.9l-1.8 1.7M177.2 172.7l-0.7 1.5M142.0 178.4l-1.3 2.6M127.3 173.1l-4.9 -0.3M155.6 181.9l-0.9 2.6M198.1 142.3l-3.0 1.2M193.2 143.4l-0.9 1.7M203.3 138.1l-1.5 2.4M201.5 147.3l-2.8 1.2M177.3 147.0l-4.0 0.7M356.4 180.0l-2.7 1.1M333.5 164.8l0.9 1.9M324.1 183.3l-2.6 1.0M340.3 161.4l-0.8 1.8M342.5 180.1l-0.4 2.6M332.0 187.8l-0.4 2.5M328.0 184.8l1.1 1.4M195.0 232.7l2.1 1.3M207.1 240.5l0.8 2.7M161.8 247.3l-2.2 3.5M185.0 248.3l-1.1 2.5M155.9 224.7l1.6 1.8M182.0 237.9l-1.8 0.2M163.4 233.8l1.8 0.0M177.1 221.2l-1.1 2.9M182.8 220.2l2.3 1.4M186.9 227.2l1.7 1.0M174.7 227.1l2.4 2.0M198.8 230.3l-2.1 0.4M163.8 252.5l-3.1 3.1M195.1 244.1l-1.7 2.3M191.3 231.6l-1.5 1.3M186.6 246.9l-2.1 2.4M193.1 248.1l-2.5 2.9M171.7 221.6l-0.2 1.8M158.1 239.1l-1.8 0.1M145.8 230.0l-2.3 0.5M198.3 227.9l1.2 1.9M170.5 218.3l2.2 2.4M136.9 227.5l-2.7 -3.0M191.2 229.9l-3.0 1.0M178.9 233.4l-1.8 0.6M202.1 221.7l-3.9 2.1M212.5 211.4l-1.2 1.6M207.6 219.6l-0.6 2.2M203.6 216.5l0.4 2.1M206.6 212.5l1.6 2.4M120.6 258.3l1.1 1.8M99.3 264.1l2.8 0.4M130.3 250.8l-0.3 1.8M93.3 247.1l1.9 2.0M97.2 245.3l-3.2 0.6M112.7 247.5l-2.3 0.6M101.5 268.2l-0.0 4.0M106.3 259.7l1.6 0.8M114.2 262.9l1.9 1.4M116.1 267.0l1.7 1.3M95.6 259.9l1.2 2.5M101.8 257.6l-1.7 1.5M115.5 255.3l-0.2 1.8M94.6 249.1l2.0 1.4M80.3 255.5l-3.3 -2.1M115.4 264.9l1.5 1.3M104.5 269.0l-0.3 2.9M100.4 265.5l2.9 0.3M108.2 237.5l2.2 0.9M138.1 262.7l3.3 1.0M102.3 262.4l0.7 2.5M119.7 265.7l-0.5 1.7M99.3 255.5l-2.5 1.4M96.8 243.1l2.3 1.2M96.1 264.1l-1.4 1.7M117.3 253.8l-1.2 2.5M108.3 251.7l1.5 1.1M128.5 234.7l1.6 2.7M143.3 235.4l-0.1 1.6M139.5 226.7l2.5 1.1M146.7 237.5l-2.7 0.5M135.6 233.8l-2.0 2.4M138.7 224.8l-2.9 -1.9M136.2 227.5l-2.4 -1.3M150.6 233.8l-1.8 0.6M91.5 347.2l-0.4 2.3M101.6 361.9l-1.2 4.1M94.1 357.3l-1.9 0.7M133.4 350.5l2.1 2.6M102.2 358.8l-1.4 3.4M95.8 302.8l-1.2 1.7M91.7 333.7l-1.9 2.6M77.1 334.6l1.4 1.8M116.0 348.1l-1.5 2.6M76.9 333.7l-1.6 0.5M76.7 318.2l-2.6 1.1M137.4 330.5l2.0 1.6M87.5 308.6l2.7 0.8M77.9 306.4l-3.1 -0.8M102.3 317.7l-0.2 2.1M109.6 311.6l-1.9 0.4M102.4 296.6l-1.6 -1.5M109.1 349.2l1.4 1.8M132.5 333.8l-2.2 0.0M61.7 343.1l-3.3 0.7M66.3 332.5l-3.3 -3.0M78.9 344.6l-1.4 2.0M122.1 365.0l-1.6 2.0M73.3 315.1l-2.9 1.1M135.7 332.6l-0.8 3.1M58.8 326.4l-5.3 1.8M90.4 312.8l1.3 2.1M101.9 300.9l-0.7 -2.2M107.3 338.3l-0.2 2.7M82.5 341.4l2.1 0.4M108.3 360.7l0.7 4.1M118.7 371.3l1.5 4.3M117.3 317.7l-1.5 1.2M91.3 326.9l-1.5 1.9M107.3 335.5l-2.1 2.4M113.4 334.6l1.6 1.1M128.6 339.6l1.7 1.7M119.0 341.5l-1.1 2.1M73.2 361.1l-3.3 2.7M81.5 329.0l-1.7 1.6M95.1 359.7l-3.1 1.6M106.9 349.6l-2.0 0.4M68.7 332.3l-2.8 0.4M136.1 326.8l1.5 -1.2M64.0 316.3l-2.2 -3.3M111.1 346.1l2.3 1.9M89.7 341.7l0.1 2.9M116.0 314.2l1.9 1.8M81.8 335.1l2.6 0.4M120.0 325.7l1.0 2.4M85.0 365.7l-2.7 2.5M89.5 342.1l1.3 1.3M106.2 354.8l2.6 0.9M90.8 339.1l-2.9 0.5M108.5 353.0l2.7 1.6M63.7 325.0l-4.7 2.0M166.8 308.2l-1.8 2.3M142.3 328.6l-5.0 -1.5M167.4 318.7l1.5 0.7M196.0 311.3l1.4 2.0M160.2 309.5l-2.0 1.0M177.7 332.8l-3.2 2.7M195.4 294.6l0.9 2.9M165.3 317.2l-0.5 2.1M179.9 297.9l-1.9 2.3M185.6 311.2l-0.7 1.7M181.1 297.9l1.4 2.7M155.1 321.5l-2.1 -0.5M175.8 315.7l1.5 2.6M172.9 321.2l2.8 0.3M169.6 315.0l-1.5 1.2M158.6 294.2l1.1 1.8M172.6 302.9l2.1 0.5M183.3 296.9l1.0 2.8M182.5 309.8l0.9 1.6M161.4 295.7l-0.2 2.0M194.3 322.9l2.4 1.4M158.6 318.7l-0.2 2.3M184.5 335.8l-3.6 3.4M176.1 306.1l1.4 1.9M193.0 321.9l-1.5 1.4M159.2 319.2l-1.9 1.5M156.5 304.3l2.5 0.4M151.6 329.9l-3.2 1.5M197.0 324.4l-0.9 2.2M184.1 305.9l0.1 1.8M141.8 287.8l-2.9 0.3M141.5 283.6l1.4 2.1M111.6 293.8l-4.8 3.4M157.3 293.9l-0.7 3.6M136.2 296.9l-1.7 2.0M137.3 281.3l-0.9 2.2M158.0 283.2l-0.0 2.4M140.9 288.1l2.6 0.2M128.7 285.2l2.5 0.7M133.6 289.6l-1.7 1.1M72.9 348.7l1.9 0.4M63.1 365.3l-3.2 -0.3M74.7 350.0l0.5 1.9M77.0 339.0l1.7 1.4M78.0 340.0l-2.8 1.0M74.5 351.1l-0.2 2.6M66.3 362.9l-3.5 1.3M85.8 360.6l3.0 0.6M84.5 372.8l0.4 3.3M84.9 354.7l-2.1 2.4M74.9 352.7l0.6 1.9M69.5 351.5l2.5 1.2M95.0 373.4l2.1 0.0M92.0 377.1l-2.1 2.5M86.7 380.3l-3.0 3.9M105.2 363.8l0.5 2.2M108.7 368.6l2.9 0.5M88.5 366.2l-1.8 -2.2M101.7 378.4l-2.2 1.7M106.1 372.9l3.0 0.4M102.2 367.7l-2.3 2.2M116.5 379.1l-0.9 3.5M99.1 381.5l-4.2 2.7M313.9 242.1l2.2 0.6M337.9 238.1l1.1 2.7M343.5 247.5l-1.2 2.7M301.2 227.8l1.7 0.1M340.8 256.0l2.4 0.4M306.1 228.0l1.4 0.8M321.1 234.3l1.5 1.6M339.2 242.5l1.8 2.5M281.7 218.0l2.3 1.0M280.7 226.2l-2.6 2.0M285.0 231.0l2.1 0.4M284.6 230.3l-1.4 1.9M283.8 227.1l-0.1 1.7M358.3 235.4l-3.6 1.6M417.9 329.9l-2.4 0.2M318.2 369.3l-1.9 0.3M320.2 379.9l0.4 2.7M337.7 397.3l-3.3 1.8M343.0 370.7l-0.5 1.6M386.4 411.0l-0.3 1.8M372.3 401.3l-0.2 2.9M383.9 409.1l-2.8 0.4M366.7 409.2l1.3 2.7M316.7 353.8l2.1 0.4M300.7 347.3l-1.6 0.9" stroke="#c46907" stroke-width="1.9" stroke-linecap="round" fill="none"/><path d="M217.3 121.5l1.7 1.8M211.4 121.9l-2.7 1.1M202.0 157.6l-1.7 4.9M252.8 122.8l-0.2 1.9M233.5 150.0l-2.3 1.9M201.4 156.5l-2.8 -0.7M238.0 126.9l1.3 2.3M209.7 118.9l-0.9 -2.4M229.3 152.5l0.2 2.4M234.7 137.1l-2.0 2.0M203.4 132.2l2.6 1.4M229.2 132.7l-1.4 1.0M246.4 148.2l-1.4 1.5M227.7 130.8l-0.7 2.8M243.6 132.7l1.2 1.4M215.2 138.1l3.0 0.3M249.5 131.0l2.7 1.1M278.9 152.6l-0.9 3.0M260.5 160.7l-3.0 1.8M296.9 145.4l2.1 0.4M284.9 146.5l0.1 2.6M292.5 172.7l0.0 3.3M292.6 162.9l2.0 0.7M263.8 148.6l2.9 0.7M263.7 150.8l-1.2 1.5M259.2 153.5l2.6 1.9M282.4 164.8l0.4 2.9M276.3 139.4l1.6 2.2M283.5 153.7l1.7 1.2M251.0 165.4l-5.2 2.1M187.5 177.1l-0.2 2.8M171.2 158.4l-2.1 0.8M129.2 177.0l-3.6 -0.5M172.3 150.5l-1.7 1.8M160.4 170.0l2.2 1.4M144.8 181.3l-3.7 0.9M139.7 177.7l-2.5 -0.9M173.2 165.5l1.3 1.3M160.1 158.1l-2.3 0.1M186.7 169.1l1.9 1.9M176.2 175.4l-0.2 2.6M158.5 180.4l0.1 2.8M178.0 180.7l1.3 1.7M136.8 149.0l-0.1 -3.0M162.2 179.2l-1.4 1.1M159.2 191.8l-5.1 2.8M143.1 187.1l-1.6 3.5M185.3 145.4l-0.4 1.7M323.7 158.7l0.8 2.4M310.5 170.5l1.8 2.7M319.0 167.6l1.0 2.3M308.7 178.5l-1.6 1.2M335.7 183.9l2.0 0.2M313.1 187.5l-3.1 -1.6M305.7 194.3l-4.5 0.9M298.8 160.0l-2.6 1.2M155.8 211.9l-1.8 -4.1M165.7 235.8l-2.1 2.1M200.4 228.6l2.3 1.1M187.6 251.8l1.1 2.3M183.3 229.5l-2.7 1.2M195.2 236.9l-1.8 0.1M193.8 233.6l1.4 2.5M168.5 234.4l-0.0 2.6M181.1 252.2l-0.3 2.8M206.5 233.2l0.5 3.0M162.9 219.4l3.1 0.9M146.2 209.9l-5.4 -0.3M192.3 234.3l-1.1 2.0M181.9 228.9l-2.3 1.6M174.7 235.8l1.4 2.1M185.6 239.8l-1.2 1.2M148.6 247.2l-3.6 1.4M178.9 233.7l-2.0 0.9M173.6 209.6l1.2 -2.3M185.8 245.8l-1.1 3.1M173.6 243.0l-1.7 1.4M151.9 231.7l-3.1 0.9M169.8 217.9l-2.7 0.1M199.2 220.5l-3.2 -0.1M93.2 238.6l-3.4 -2.7M108.7 242.4l1.1 1.9M120.8 254.6l0.8 2.5M104.6 237.3l0.5 -2.2M119.2 276.2l0.7 6.3M102.5 233.3l-3.6 -2.4M107.4 242.3l1.6 1.7M82.0 248.6l-2.2 -1.6M118.8 269.4l0.1 1.9M124.5 251.9l-2.2 1.3M117.1 236.3l-1.3 2.7M109.6 268.0l-1.7 0.5M80.2 257.9l-4.0 -2.5M121.8 264.3l1.0 1.4M84.6 245.9l-4.8 -0.6M112.9 251.2l-2.3 1.6M116.1 230.7l2.6 -3.0M140.6 241.2l-2.0 0.6M83.1 304.7l-1.0 -3.5M99.3 353.4l0.4 1.7M89.6 340.5l-1.2 1.2M81.7 363.3l-0.7 4.3M143.9 324.8l2.6 -1.1M124.3 351.8l-0.8 3.3M98.9 356.8l-2.0 2.6M113.2 341.8l1.4 2.4M55.7 336.6l-2.5 -2.3M86.7 348.5l1.3 1.3M83.5 346.1l-0.3 3.1M71.1 331.8l-3.5 -0.4M124.1 357.8l0.5 3.8M88.4 348.5l1.6 2.5M86.2 351.7l-1.2 1.5M129.5 335.2l2.2 1.7M76.7 367.1l-2.5 2.9M132.1 324.2l0.9 2.9M73.7 333.4l-1.1 -1.4M101.7 322.3l-0.9 2.1M135.2 347.0l2.8 2.2M155.6 323.5l-2.1 1.7M149.7 291.8l-3.4 -1.5M167.3 305.8l-1.8 0.9M148.4 297.3l-3.3 1.0M168.8 302.3l2.2 1.4M168.3 325.1l-0.0 2.1M169.4 315.9l-0.8 2.2M199.0 323.7l1.5 2.9M181.2 329.9l-1.0 3.7M163.1 282.8l0.2 -4.1M144.0 303.8l-2.5 -0.2M169.7 326.8l-1.4 1.2M158.3 324.5l-3.1 1.5M156.5 317.1l-1.3 2.2M159.3 311.0l-1.7 2.7M201.8 299.6l2.2 -1.5M156.4 290.3l-0.1 -4.0M170.1 311.0l-0.5 1.6M193.0 335.4l-2.1 3.5M165.1 313.5l-2.4 2.2M180.2 303.3l2.2 0.6M161.2 332.5l-1.6 2.5M120.9 287.0l1.3 1.9M120.9 291.1l-1.9 2.9M141.5 284.3l0.1 2.2M157.7 292.9l1.9 3.1M72.0 371.1l-1.6 2.8M75.1 349.5l2.4 0.8M64.5 367.2l-2.4 0.9M63.8 353.1l-1.9 0.3M75.5 357.5l0.6 2.1M72.0 350.7l2.5 1.5M109.7 381.1l-0.9 3.6M100.2 362.7l-0.9 -4.1M121.5 374.1l1.6 2.2M299.9 250.0l2.9 0.6M298.8 233.4l2.2 0.4M308.1 253.0l-2.7 1.0M317.1 255.4l0.9 2.3M340.1 252.2l1.9 1.8M297.7 245.4l-2.1 1.0M326.4 268.2l-2.0 4.5M318.0 266.3l0.1 3.1M293.1 240.0l-2.5 -0.2M293.7 233.4l-1.7 -2.4M331.6 273.3l-0.1 4.7M280.1 219.0l1.8 0.1M278.8 221.2l2.2 1.8M290.2 226.5l1.8 0.8M290.7 229.7l1.1 1.8M289.0 228.5l1.0 2.0M298.2 224.0l-2.1 2.3M290.0 223.6l2.8 0.4M400.0 267.9l-2.7 -1.7M397.8 277.7l-1.9 -0.1M319.3 364.0l2.7 0.6M332.7 372.8l-1.7 0.2M341.4 365.1l-2.7 1.6M337.1 366.4l-1.7 1.1M335.6 375.4l2.6 0.5M328.9 391.6l-0.7 1.8M310.1 374.0l-2.4 -0.4M333.0 387.9l2.7 0.2M345.6 373.1l2.3 0.9M361.7 370.7l-2.1 0.8M344.4 377.2l-0.3 2.9M348.3 356.1l-2.7 1.1M384.3 418.0l-1.0 1.4M372.4 417.6l2.3 1.3M366.3 391.8l-2.0 1.8M322.0 355.4l-0.5 2.2M322.8 346.1l-2.4 0.8M307.6 358.8l-0.3 1.8M309.5 354.5l-1.0 2.2M311.2 350.9l2.0 0.2" stroke="#d07708" stroke-width="1.9" stroke-linecap="round" fill="none"/><path d="M191.0 137.2l-3.0 1.5M232.7 126.9l-0.3 2.3M244.3 121.4l-2.3 0.8M200.7 117.4l-3.7 -2.8M190.9 133.3l-2.9 -1.1M240.5 121.3l0.4 2.9M238.0 131.9l2.6 0.4M215.6 124.6l0.2 1.8M202.0 150.1l-2.2 3.2M253.0 142.8l3.2 0.4M207.7 109.8l-3.8 -1.5M216.5 135.9l-3.0 0.8M218.3 125.4l-1.8 0.1M199.7 143.6l-2.1 -1.9M235.9 121.1l2.3 0.8M228.4 132.8l-1.6 1.0M236.8 139.1l-2.1 0.2M233.3 152.1l-1.6 1.9M208.2 152.2l-3.5 1.0M216.7 131.1l-0.2 3.0M229.9 156.3l-2.1 0.6M260.0 149.5l-1.9 -0.6M289.2 155.1l-3.0 0.0M266.8 147.2l-0.0 2.4M292.2 140.5l1.3 2.9M269.3 159.7l0.5 2.7M267.8 151.5l2.4 1.1M256.3 139.4l-4.0 -3.1M250.0 153.5l-4.7 0.9M261.4 168.3l-1.2 3.0M273.4 148.1l-1.9 0.9M257.5 162.9l-1.6 -1.2M287.1 177.2l1.3 4.6M249.2 165.1l-4.7 -1.6M277.9 148.8l1.1 3.0M259.9 152.7l-2.7 1.2M272.7 165.2l-2.2 1.7M253.4 150.1l-3.2 0.7M273.7 162.9l2.5 0.8M130.0 167.2l-3.0 -0.6M159.2 150.3l-1.0 -2.5M180.7 170.3l-0.5 2.9M179.5 154.5l-1.6 2.3M163.9 145.6l-0.2 -2.3M138.2 147.1l-2.6 -3.0M178.3 168.7l-2.3 1.1M163.1 183.0l-1.5 1.1M182.5 170.4l1.4 2.9M204.4 137.6l-1.8 1.0M199.4 158.3l-1.5 4.1M179.7 148.0l-1.9 -1.6M346.5 157.4l1.2 -3.0M307.9 182.9l-2.5 2.1M345.2 168.8l0.5 2.1M340.5 186.9l-0.1 2.6M357.9 172.9l0.3 1.9M295.8 167.1l-5.4 -2.9M313.1 191.7l-2.2 3.4M325.6 181.5l-1.3 1.4M336.1 170.8l2.3 1.6M335.9 165.8l1.1 2.5M357.2 192.5l2.0 1.9M325.0 179.5l-0.5 2.7M332.9 164.6l2.5 0.6M347.7 189.6l-1.5 1.2M299.5 158.6l1.5 2.3M305.2 166.4l-2.0 1.6M293.2 161.0l-3.2 0.2M136.5 222.5l-5.0 -2.0M137.8 241.4l-3.4 2.8M136.4 228.1l-3.2 -0.7M176.0 219.9l0.1 1.8M158.1 248.0l-1.3 3.2M159.4 247.7l-2.6 0.4M149.9 223.4l-2.8 -1.1M162.3 245.1l-3.5 -0.2M150.2 243.7l-2.5 3.3M155.9 248.2l-0.8 2.7M174.6 251.6l-3.8 3.3M159.7 244.3l-3.9 1.0M199.6 215.9l1.5 1.1M189.6 237.6l1.0 3.0M181.3 254.6l-0.1 5.0M179.9 203.7l1.6 -4.6M209.1 220.8l2.0 -1.8M191.5 252.7l-1.8 2.1M153.6 214.2l-2.9 -0.8M213.5 224.3l-2.0 2.5M217.5 206.8l3.0 0.1M127.6 238.7l0.5 -2.2M123.2 276.4l-0.3 4.9M121.9 255.0l0.2 1.7M109.0 251.6l-1.9 0.2M85.0 256.0l-4.1 -0.2M133.5 249.1l-0.7 1.9M125.2 271.0l2.5 2.4M115.2 275.9l-1.6 3.3M107.3 235.8l0.8 -2.7M119.3 234.2l3.1 -2.2M126.6 237.4l-0.9 2.1M135.5 254.7l2.0 -0.6M146.7 227.2l-2.0 0.4M100.4 360.4l-0.3 3.6M124.2 290.6l-1.7 -4.6M111.6 365.7l-3.5 2.8M114.5 359.5l-1.1 2.2M58.8 338.8l-4.7 1.0M74.1 330.5l1.4 1.0M93.9 373.5l-2.3 2.9M82.9 335.9l-1.5 1.6M104.5 300.3l-0.6 2.5M107.0 337.0l0.7 2.0M73.2 353.1l-2.7 2.0M133.9 323.0l-2.8 1.3M113.9 367.3l-1.6 2.9M100.4 287.6l-0.2 -3.7M100.8 347.3l1.7 1.9M93.8 353.0l-1.2 1.6M86.3 303.5l0.3 -1.8M144.4 342.9l2.8 -0.0M156.9 328.8l-4.5 0.9M165.9 319.3l1.8 2.6M166.0 303.3l1.4 2.0M169.9 292.4l-2.6 0.9M183.0 303.2l-0.2 1.7M168.5 304.9l2.7 1.2M188.9 331.6l-2.0 3.4M146.1 331.7l-6.0 -0.5M200.6 319.0l1.8 2.9M202.2 318.4l2.2 2.0M186.6 319.0l-0.6 2.1M184.9 319.2l-1.2 1.3M177.1 309.2l-0.9 3.0M207.0 296.4l1.2 -3.8M177.4 306.7l0.7 2.7M149.5 304.2l-2.6 0.4M167.2 285.1l0.6 -2.1M202.7 313.7l2.1 1.0M185.6 287.4l0.8 -2.6M148.7 295.3l-2.2 -3.0M138.8 308.6l-3.3 0.0M166.6 330.1l-2.9 3.1M123.2 274.4l-0.6 -3.3M110.0 294.7l-3.7 -2.6M145.9 276.2l-2.2 1.4M148.2 280.8l-2.6 0.1M163.3 274.9l3.3 -1.5M143.7 285.3l0.6 2.1M72.5 341.0l-1.8 1.8M81.4 337.7l-1.1 -3.7M106.9 367.6l-0.5 1.6M90.0 378.4l-2.3 1.4M101.1 380.9l-2.7 1.8M120.3 373.7l-1.6 1.4M114.4 375.4l-1.0 1.9M311.5 259.7l-2.9 1.6M318.4 255.5l1.5 1.0M329.5 259.9l-1.4 2.9M295.0 220.7l-0.6 -2.5M282.7 228.4l-2.4 -4.1M356.7 243.7l-1.8 1.3M295.5 241.0l0.4 2.5M278.6 227.0l-4.3 1.5M300.4 262.0l-1.4 2.4M330.3 261.5l-1.0 3.4M325.4 261.0l-2.1 1.8M312.8 239.6l0.4 2.5M317.7 218.6l1.2 1.3M300.6 249.4l-2.2 0.4M316.6 262.8l-2.3 2.0M305.4 242.6l-1.4 2.0M300.1 249.1l1.2 2.2M303.2 231.4l-1.6 3.1M281.9 220.0l-2.5 0.8M295.9 222.1l-0.6 1.9M290.2 221.1l-0.9 1.6M276.8 221.1l-1.5 -1.8M279.5 230.3l-2.5 -0.6M358.9 241.0l-1.3 2.2M417.6 276.2l1.7 2.6M424.6 268.4l-1.7 0.2M420.2 274.8l0.8 2.2M404.1 285.5l-2.5 1.2M412.5 279.4l1.2 2.7M425.0 287.1l-0.0 3.1M337.8 381.7l-2.5 0.7M299.1 377.2l-2.7 -0.5M329.1 400.8l-2.2 2.0M327.9 367.6l-1.5 0.9M314.9 379.8l2.5 0.7M361.9 389.8l2.9 2.1M343.2 374.9l1.6 2.8M311.9 365.6l-2.1 1.6M343.4 358.7l2.8 1.2M306.8 396.4l-1.6 2.7M342.7 393.0l-1.7 1.2M313.1 385.8l-3.4 -0.1M330.4 376.9l-1.8 0.7M382.1 389.4l1.2 -2.3M381.1 427.3l-0.1 3.6M366.7 411.7l2.6 1.6M382.5 424.1l-3.0 0.5M377.0 412.7l-0.7 1.8M365.8 402.0l-0.1 1.6M402.5 431.7l1.6 1.1" stroke="#dd850a" stroke-width="1.9" stroke-linecap="round" fill="none"/><path d="M243.9 119.7l1.0 2.3M243.8 122.4l-1.0 2.3M266.8 154.8l3.3 2.9M181.0 139.2l-3.4 1.8M230.6 120.0l-2.2 1.8M249.2 126.6l-1.7 1.4M225.5 117.0l-1.6 2.7M209.2 156.5l-0.5 4.1M254.4 116.7l0.6 -2.5M253.1 135.1l-0.2 1.9M267.4 140.4l1.6 1.4M256.6 135.0l-2.5 1.5M195.5 120.9l-2.7 0.2M278.4 140.6l2.8 4.6M266.7 134.6l2.0 0.3M180.7 135.4l-6.1 -1.7M226.2 168.9l-3.0 1.5M226.8 143.0l0.6 2.8M246.2 126.1l1.9 0.6M214.9 147.7l2.3 1.9M219.2 111.9l2.0 -4.4M256.1 123.9l-1.3 2.8M248.0 158.2l1.4 4.4M242.1 132.3l2.5 1.3M255.5 143.8l-4.3 -1.4M272.4 169.7l-0.4 3.3M257.2 171.5l-3.6 -0.1M275.4 148.0l-1.6 0.3M293.7 147.1l2.3 0.2M265.6 176.5l-2.4 2.9M262.7 148.7l2.3 1.0M267.0 152.2l-0.7 1.6M129.6 156.9l-4.5 -2.6M144.2 148.3l-3.1 -0.8M149.4 144.4l-0.5 -3.2M183.7 181.3l0.2 4.5M169.0 170.1l0.4 2.9M172.2 142.9l-1.1 -2.6M137.3 156.1l-4.1 -1.2M177.9 143.7l2.3 -3.9M146.9 170.0l-1.2 1.6M138.1 150.2l-3.0 -0.8M135.9 151.7l-4.5 -1.3M126.3 169.3l-2.9 1.8M185.0 154.3l3.7 0.3M153.9 149.1l-3.3 -1.8M142.2 150.2l-2.9 -1.7M133.4 157.1l-3.6 1.1M206.7 150.0l-0.9 2.0M181.7 141.4l-3.0 1.1M204.0 158.1l-1.9 3.5M193.8 157.9l-1.7 2.9M363.0 180.6l1.1 1.2M320.2 156.6l-1.8 -2.1M360.0 173.5l-1.7 0.2M333.0 161.6l-1.5 2.2M363.5 176.3l2.8 0.9M317.3 180.2l-0.2 2.5M329.3 163.8l-0.4 2.0M336.6 191.2l-2.2 0.4M346.0 157.1l0.8 -2.2M304.1 196.9l-5.6 -0.9M318.9 175.2l2.1 1.7M359.8 168.6l-2.6 0.0M321.8 173.4l2.1 0.3M321.3 183.0l-0.7 2.1M366.1 163.0l1.7 -0.2M349.1 170.1l-0.5 2.3M317.9 200.8l-2.9 1.8M357.3 155.7l1.6 -1.5M359.0 168.7l-1.6 1.7M330.6 178.1l1.5 2.4M310.4 183.5l-2.1 -0.6M304.4 180.6l-3.6 -0.7M310.6 169.4l-2.0 0.3M339.5 184.4l0.9 2.7M307.7 182.9l-2.5 0.7M302.9 149.9l2.4 0.3M303.5 168.4l-2.8 2.2M182.4 220.7l-2.0 0.3M181.5 212.0l-1.7 1.2M212.0 218.4l1.5 -1.8M194.0 249.1l1.1 2.2M160.1 225.7l0.3 2.5M195.8 217.1l-0.7 3.0M213.2 241.2l-0.2 2.7M198.5 218.7l-3.1 0.3M172.9 232.9l-2.7 0.0M142.7 219.2l-4.2 -0.7M202.2 248.2l3.0 3.3M198.8 239.4l0.7 2.1M215.8 237.2l4.7 1.4M209.7 249.9l1.2 5.1M164.4 224.9l-2.2 1.9M150.4 225.2l-2.5 1.1M212.9 233.6l0.9 2.4M203.3 214.4l2.3 2.1M216.0 227.9l1.0 3.1M110.2 247.6l0.2 2.0M99.8 274.9l-0.3 5.4M134.4 254.5l1.1 1.7M96.0 236.4l-2.0 -1.2M112.0 253.0l0.9 2.9M121.1 245.1l-1.5 1.3M94.5 238.5l-1.8 -3.2M83.5 239.7l-3.8 1.1M121.3 241.2l2.5 0.3M78.3 262.6l-3.3 -0.7M86.0 236.2l-3.8 -2.7M151.9 231.6l1.3 -1.8M152.0 233.3l0.4 2.5M135.1 245.2l-4.5 -0.0M142.6 224.8l3.2 -3.3M145.2 232.3l-0.9 2.4M125.8 240.7l-3.3 2.4M133.4 238.9l-0.9 1.8M141.5 246.2l1.5 6.0M138.2 348.5l2.2 2.4M103.5 306.2l-0.5 2.4M138.6 297.5l3.7 -2.1M76.2 341.8l-2.8 1.4M133.2 366.4l0.6 3.5M65.4 342.6l-3.7 2.8M82.6 357.8l-3.9 0.2M132.9 356.9l3.0 2.1M125.6 329.2l2.6 1.0M112.2 297.8l-1.2 -3.7M132.2 320.9l0.3 2.6M62.5 318.3l-3.2 -0.6M140.0 358.5l-1.2 5.0M93.9 365.0l-3.0 2.2M123.2 354.1l1.1 2.3M152.0 339.1l1.3 5.2M102.7 338.2l0.0 2.7M135.0 321.8l2.1 -1.8M149.3 351.8l1.2 3.4M69.9 355.6l-4.8 1.6M112.1 361.8l-2.2 2.0M109.5 316.3l-1.0 3.0M101.5 370.6l0.2 3.0M120.4 302.3l1.0 -2.3M67.6 359.2l-5.2 0.1M113.3 326.0l0.9 2.5M114.5 308.5l1.3 1.8M77.6 312.9l-2.7 -0.1M134.9 317.6l3.5 0.0M190.2 282.3l1.5 -4.7M195.4 322.8l0.5 1.7M160.6 336.6l-3.1 5.2M194.3 291.6l-2.8 0.5M199.4 321.9l3.0 1.3M194.3 324.3l1.7 1.8M154.5 312.6l-1.4 2.3M192.6 319.0l1.0 1.9M201.0 289.3l0.9 -4.3M153.9 303.6l2.0 0.1M156.2 321.1l-1.8 0.1M206.3 326.5l-0.8 3.6M157.6 305.9l1.9 1.6M137.6 305.4l-4.6 2.5M139.9 306.9l-3.8 0.6M167.6 280.7l-2.0 -2.9M135.3 302.7l-4.1 2.2M108.8 284.3l-5.3 1.5M162.5 291.1l1.0 2.5M129.1 295.7l-2.5 3.1M155.4 295.7l-1.5 4.1M157.7 299.9l1.4 3.1M161.3 297.2l5.0 2.8M160.4 274.4l2.2 -4.0M148.9 296.5l-2.1 2.1M92.8 368.7l0.7 4.6M69.1 368.4l-2.2 3.0M80.2 336.3l1.1 -2.1M92.6 341.1l0.7 -2.8M82.0 367.2l1.2 2.3M125.5 370.4l2.3 -2.0M84.8 361.0l-3.8 -0.9M88.1 363.6l0.2 -3.8M127.2 374.6l5.3 -0.0M102.7 369.3l1.7 0.1M83.3 378.9l-4.5 4.1M281.2 241.8l-4.4 1.5M271.2 240.0l-3.2 -1.5M294.6 232.8l-3.1 -1.7M337.4 212.6l2.0 -3.5M277.8 244.1l-4.0 1.8M329.4 270.1l-1.1 2.8M334.0 220.3l-2.6 0.8M333.9 254.2l2.5 0.6M335.0 267.0l-0.9 3.9M338.8 260.7l1.2 2.2M334.0 260.7l-1.6 2.4M279.1 221.7l-2.3 -2.6M315.6 233.2l-2.5 1.7M327.3 269.0l-2.8 2.2M338.4 252.2l-0.3 1.9M290.0 239.1l-3.5 -0.5M338.1 223.7l1.2 1.6M281.1 247.1l-5.2 1.9M340.8 251.8l1.7 0.2M342.1 225.5l-0.2 2.8M325.6 231.8l1.9 0.9M344.2 270.1l1.4 3.0M300.6 226.7l-0.9 2.8M318.7 228.7l2.5 2.1M336.4 236.5l-2.3 1.7M308.1 252.4l-1.4 1.1M331.4 223.6l2.4 0.7M283.7 230.4l-2.6 -4.2M295.6 256.0l-2.3 0.2M285.6 223.6l-1.7 0.9M373.9 225.8l-0.8 1.5M378.7 221.0l-0.2 1.7M371.5 216.3l1.8 -3.0M362.4 227.4l-0.3 2.4M366.4 250.1l-3.3 1.9M403.1 270.4l0.7 1.7M434.3 277.0l-0.7 2.5M403.3 274.3l-2.0 2.0M421.5 279.6l0.0 2.3M439.2 266.4l-0.9 2.5M417.3 290.2l-2.9 2.3M450.1 281.0l2.0 3.1M437.8 258.1l-1.6 1.1M400.5 274.2l-0.4 1.8M386.6 251.8l2.4 0.3M442.0 289.7l2.5 1.7M434.4 284.0l-2.7 -1.5M419.8 325.4l0.1 2.6M336.4 364.8l2.5 0.7M342.4 361.6l2.7 0.1M316.2 398.3l-1.8 5.6M310.8 354.0l-3.7 -0.6M322.3 394.6l-3.2 -0.3M336.8 370.3l-2.3 1.3M312.7 361.6l-2.0 -2.2M348.6 367.9l-1.7 0.5M343.3 370.4l-0.7 2.0M346.8 359.9l2.8 0.4M323.3 362.6l2.5 1.6M301.5 358.8l-5.3 -1.2M370.2 359.5l4.0 -2.2M318.7 361.5l-1.6 1.0M311.4 372.7l1.4 2.5M390.8 409.1l1.9 1.0M389.8 396.7l0.2 2.7M375.6 404.4l-2.5 1.3M375.9 401.7l-2.1 0.9M366.8 429.2l-1.9 1.8M365.3 388.9l-0.2 -2.0M376.3 405.6l-1.4 1.4M360.3 407.2l-2.8 0.8M383.1 397.2l-1.4 2.1M374.3 406.3l2.6 0.6M347.2 417.9l-4.0 1.8M364.7 413.4l-1.6 1.9M381.7 415.4l-2.1 1.2M391.0 418.4l-0.9 2.1M368.6 419.4l-2.1 0.9M381.1 419.8l-2.4 0.3M397.2 434.0l1.1 3.0" stroke="#e9930c" stroke-width="1.9" stroke-linecap="round" fill="none"/><path d="M185.0 146.0l-2.4 2.2M251.1 162.7l0.5 4.0M258.0 146.6l-2.6 1.0M243.8 115.1l1.1 -4.3M187.6 127.2l-3.8 -2.9M225.4 150.6l-1.8 0.5M257.7 143.3l0.1 3.1M263.0 151.3l1.6 2.2M268.6 154.0l3.3 3.4M265.6 159.7l4.6 3.1M249.2 152.9l-2.5 1.4M265.9 126.5l2.5 -0.4M202.1 156.3l-2.0 4.2M187.6 142.6l-2.8 1.0M242.0 121.8l-2.0 1.1M226.6 140.8l1.9 0.4M195.4 123.8l-3.9 -2.9M259.7 138.9l1.0 2.2M188.1 117.9l-3.4 -0.1M264.6 134.8l1.9 -1.2M246.0 154.1l-0.6 1.5M267.6 156.0l4.0 3.3M292.4 140.4l2.3 -2.8M283.4 160.7l1.6 2.8M310.7 152.3l3.8 -3.1M262.2 138.6l-1.2 -3.8M274.7 171.9l-2.9 1.8M290.0 169.6l1.5 1.8M291.1 136.8l2.8 -3.8M250.8 142.9l-5.9 2.0M252.8 159.7l-2.5 -3.2M247.1 156.6l-5.8 -0.8M258.7 162.4l-2.8 -2.3M253.7 147.9l-2.4 -0.8M277.0 138.2l-1.2 2.3M278.5 138.5l-2.1 1.4M306.0 158.4l3.7 0.9M277.9 143.0l2.1 0.6M261.5 152.5l2.0 2.4M160.2 144.6l-0.6 -3.7M174.7 152.0l1.2 1.8M138.6 168.5l-1.5 -2.7M179.5 150.7l2.2 -3.1M192.3 157.9l4.7 0.7M185.2 149.4l-0.0 -5.6M196.2 176.0l6.0 0.0M174.5 146.0l-4.4 -4.1M210.8 151.7l2.0 2.1M203.9 159.8l-0.5 4.3M206.9 152.6l1.0 2.1M335.0 190.1l-1.8 0.2M349.7 180.7l-1.4 2.2M371.8 176.3l-2.2 0.0M307.4 157.6l-3.3 -0.0M307.5 166.6l-2.9 1.4M371.7 177.5l0.5 1.7M361.5 196.1l1.7 1.8M337.7 203.4l-3.3 5.1M338.6 200.6l1.3 3.6M291.9 168.7l-4.4 -1.2M315.4 155.4l-0.3 -3.6M300.5 188.1l-3.9 0.5M309.6 183.8l-1.8 -1.2M333.6 158.9l2.9 0.3M343.1 196.2l-1.5 1.9M377.5 177.0l3.2 -1.1M314.9 166.6l-1.5 2.4M319.5 189.1l-2.5 1.0M306.2 178.8l-1.7 -2.7M340.3 196.1l-1.3 1.7M316.5 154.2l0.4 2.7M309.9 145.8l-0.5 -1.8M293.8 147.4l-0.9 -5.6M311.8 147.1l2.6 0.3M305.6 145.7l-2.1 -2.3M149.6 246.9l-1.5 4.1M191.4 209.6l1.9 -1.6M211.2 215.0l4.3 -0.9M183.6 254.3l1.0 5.1M193.3 207.8l3.1 -2.9M223.1 236.9l3.2 1.9M179.7 201.5l-2.4 -2.4M167.2 202.6l1.3 -2.7M174.6 217.4l-2.1 0.0M218.5 218.8l3.3 -0.1M155.6 219.6l2.5 0.8M207.8 230.3l0.3 1.6M135.3 217.0l-4.2 2.0M192.1 245.3l1.7 2.7M213.9 234.9l1.6 3.8M213.5 214.1l2.4 -3.4M228.7 216.0l3.0 -0.6M217.5 204.4l-1.9 0.5M210.5 203.0l-1.8 -1.8M85.9 270.0l-6.4 -1.1M133.2 250.9l-2.2 1.0M137.8 254.6l3.0 1.8M131.0 259.0l-1.6 2.2M117.2 231.6l2.5 -3.2M135.4 236.2l-0.2 -5.4M129.0 231.3l-0.4 -4.0M111.5 239.2l1.6 2.8M127.8 237.1l-1.8 -1.5M128.8 238.9l-4.3 -0.6M130.6 231.4l-2.3 -1.4M145.5 246.7l-2.6 2.3M78.6 305.9l-1.9 -3.6M130.8 315.6l-1.7 0.7M129.6 291.1l5.2 -3.1M109.2 360.1l0.6 2.7M97.8 291.8l-1.0 -4.0M85.8 351.6l-2.9 -0.5M105.5 287.2l-2.7 -4.3M133.6 329.5l2.0 1.9M88.0 292.2l-2.9 -3.9M113.3 295.7l0.7 -2.6M68.3 305.7l-5.5 -0.2M116.6 302.5l2.3 -1.5M120.9 298.3l0.2 -2.4M91.6 306.5l0.4 3.0M93.4 363.8l-0.8 4.4M138.1 325.8l3.0 -1.8M68.6 318.4l-2.3 -2.6M84.2 312.8l-1.2 1.4M146.6 337.8l2.5 1.9M151.0 324.8l3.7 -0.3M140.2 343.0l1.4 2.7M99.9 291.4l0.2 -3.7M93.7 285.9l1.1 -5.0M72.5 299.6l-2.9 -1.4M204.8 294.4l2.8 0.4M196.9 286.2l3.2 -0.4M183.6 305.6l-1.1 1.8M142.7 289.4l-5.9 0.8M157.1 301.9l2.8 1.1M217.2 314.6l3.1 0.8M192.3 331.6l3.3 2.6M163.9 279.6l-1.2 -3.0M169.9 287.0l2.2 3.3M157.1 279.2l1.2 2.4M173.5 287.8l2.8 2.9M152.8 280.7l-2.1 1.2M160.9 282.1l0.5 3.0M145.6 271.0l1.4 -4.1M76.2 338.5l-1.4 -1.8M93.4 364.3l-0.0 3.3M56.8 349.7l-4.6 -1.6M80.8 370.3l-2.5 -3.8M120.2 374.7l0.5 1.8M124.5 375.4l0.1 3.3M79.1 365.6l-3.7 -1.1M299.3 226.6l-2.4 -0.1M290.2 220.5l-4.8 0.5M362.7 242.3l0.7 2.3M328.3 253.4l1.7 1.3M363.3 248.0l-2.4 0.4M342.3 235.7l-0.6 2.7M314.0 220.1l-2.5 1.0M352.7 214.8l1.6 -2.9M337.8 270.5l0.7 4.5M329.8 276.2l-3.0 1.5M369.4 245.4l2.6 -0.3M371.4 257.8l0.2 5.4M318.5 237.4l2.7 1.4M355.5 220.4l3.2 -1.4M308.6 234.4l1.6 0.6M327.5 217.1l2.3 0.0M359.7 241.4l-1.6 2.7M294.2 259.9l-2.1 3.5M297.3 212.1l1.6 -3.6M310.0 221.6l3.8 1.0M291.0 214.4l0.9 2.3M358.5 245.6l-2.9 1.7M380.6 222.9l2.1 1.8M376.4 244.8l-2.3 2.1M378.0 222.4l-1.5 1.9M371.2 236.9l-2.4 1.4M356.2 226.9l-2.4 1.5M372.2 221.2l-2.7 0.1M436.1 258.4l1.5 -2.9M400.9 292.9l-3.3 0.0M435.6 286.1l-0.1 2.0M417.1 280.8l2.1 1.7M387.7 275.5l-4.5 0.1M416.3 258.9l-1.2 2.6M433.5 286.2l-1.9 0.4M415.5 257.6l1.7 0.2M444.2 291.5l2.0 4.7M416.5 257.3l1.9 0.2M434.8 281.6l-0.9 2.3M428.2 269.2l-1.7 1.6M391.1 250.6l0.7 2.8M395.5 263.3l-1.9 3.2M394.4 252.3l-1.9 0.1M440.4 292.1l-2.7 2.2M449.2 295.0l-1.2 1.8M441.8 286.8l0.8 2.4M410.3 329.4l-2.9 -0.2M422.3 329.5l-1.4 0.9M418.5 330.1l-1.9 1.2M317.1 358.3l-1.7 -0.5M291.9 368.7l-5.1 -1.0M360.8 364.9l1.0 2.8M362.9 386.8l-3.0 0.2M332.1 382.5l1.3 2.2M308.6 368.7l-2.7 0.9M316.5 402.5l-4.6 1.7M359.0 364.6l2.6 0.6M356.1 375.2l2.0 0.5M360.3 401.0l-2.9 3.7M324.5 363.8l-1.8 1.9M312.9 384.8l-2.3 2.1M356.2 400.4l1.9 5.3M307.6 391.5l-2.7 1.3M312.6 385.2l-3.1 -1.0M352.1 394.4l-1.6 2.6M382.4 373.1l5.5 -0.2M332.6 402.6l-2.1 3.1M353.6 383.1l3.1 0.1M330.3 359.0l1.4 1.8M350.5 368.8l-2.1 2.0M314.0 378.9l-1.6 2.0M369.5 405.3l1.8 1.1M348.7 412.0l-3.1 -2.5M373.5 399.6l-1.9 2.4M361.8 395.8l-1.3 1.1M383.3 431.3l1.7 3.5M377.1 414.2l1.6 0.2M359.5 385.2l-3.4 -2.4M387.5 407.3l1.7 2.5M387.0 413.5l-2.2 1.8M378.7 409.8l3.0 0.9M351.7 410.8l-3.5 2.2M355.1 406.0l-1.9 -0.4M372.5 402.9l-0.7 2.3M305.9 354.0l-1.5 1.2M292.6 347.8l-4.0 -2.4M319.4 347.5l1.3 2.6" stroke="#efa20f" stroke-width="1.9" stroke-linecap="round" fill="none"/><path d="M211.7 118.1l-1.7 -2.2M265.7 139.9l2.0 -0.2M254.4 158.5l0.3 3.7M244.2 125.6l1.9 2.6M258.2 158.7l1.5 2.6M264.7 119.3l1.4 -2.8M186.6 123.9l-4.2 -4.6M271.0 139.6l1.7 2.9M224.4 155.1l-2.4 0.5M261.0 148.2l1.7 2.6M221.7 117.4l-2.6 -2.1M255.7 125.4l2.6 -2.0M258.3 158.6l-0.0 4.3M240.7 166.4l-4.3 3.3M225.2 120.6l0.2 2.7M241.1 163.8l-4.0 3.1M252.9 122.2l3.1 -1.1M216.6 113.9l-1.8 -2.2M266.8 142.2l1.3 3.8M228.7 110.8l1.4 -2.3M209.2 151.3l2.5 1.1M248.9 151.7l-0.2 1.7M211.0 116.8l0.7 -3.1M270.2 149.3l-2.2 0.3M308.9 168.9l3.1 5.0M275.4 141.3l2.3 0.0M269.8 135.1l-2.9 -2.3M295.1 173.4l-0.3 3.1M271.8 175.7l-3.7 1.6M277.3 181.1l-5.6 1.6M292.8 160.7l-1.8 0.9M291.3 137.7l0.8 -4.2M285.5 176.3l0.3 4.2M248.4 167.7l-4.1 -2.0M164.3 150.3l-0.3 1.9M150.1 151.4l-1.3 -3.5M131.7 153.4l-5.9 -0.6M192.8 179.7l4.0 3.4M166.2 143.3l3.0 -4.8M183.6 148.6l0.5 -4.1M184.7 172.6l0.9 2.9M185.5 162.3l-0.1 1.7M183.1 150.2l1.6 -2.1M193.5 171.5l2.4 3.0M214.0 149.2l3.9 1.1M188.8 160.7l-2.9 2.5M184.7 135.9l-2.0 -2.0M199.3 132.0l3.5 -3.4M198.8 136.3l2.2 1.5M199.3 130.3l0.6 -2.9M297.3 176.9l-3.3 -1.1M339.1 178.2l-2.6 1.1M376.8 180.7l2.6 0.2M373.8 178.8l2.0 2.7M344.8 163.9l1.5 2.8M305.0 196.8l-1.7 3.5M324.6 174.6l2.1 1.2M358.5 186.9l-2.1 0.5M322.9 151.5l-0.3 -5.5M322.7 157.9l-2.8 -2.6M292.8 185.7l-4.8 -4.3M355.8 160.4l1.6 0.6M332.6 201.8l-3.5 4.6M351.7 178.8l-1.6 0.8M331.1 165.8l0.8 2.0M306.0 165.3l-3.7 -2.1M333.6 193.0l2.9 1.0M338.5 196.5l-0.8 3.2M357.1 194.1l1.3 3.9M313.8 170.8l-1.5 2.4M311.3 194.2l-3.5 -1.0M373.1 173.3l2.7 -0.3M355.4 198.8l2.0 2.9M357.8 159.8l-3.2 0.3M327.5 157.5l-2.6 -1.0M364.0 162.4l2.0 -0.2M297.1 155.2l0.9 2.4M319.5 163.4l4.2 2.4M297.0 164.8l-5.0 -0.2M307.0 153.9l-0.3 1.9M313.2 168.5l-1.2 5.0M306.2 147.4l-1.7 0.5M212.9 214.6l2.6 -4.1M196.0 246.4l-1.9 2.4M208.3 207.9l2.6 -1.9M167.9 202.2l-3.3 -3.1M203.9 240.3l0.8 1.8M187.3 203.6l0.5 -3.0M203.2 206.2l0.0 -4.6M169.7 205.1l-3.1 -3.9M224.4 219.6l1.6 -2.6M141.0 216.0l-2.1 -2.6M215.6 241.1l5.3 0.9M203.9 217.4l2.5 1.5M186.9 205.1l1.5 -4.5M215.5 228.4l2.6 -1.2M177.7 200.3l-1.6 -2.8M136.5 240.7l-3.7 -3.4M177.0 255.8l-2.7 5.6M143.3 212.7l-4.7 -4.1M189.5 212.8l0.3 2.8M215.0 229.5l1.7 2.9M192.3 202.1l2.8 -1.6M204.2 249.7l-1.0 5.2M163.5 212.5l-1.3 -1.3M226.3 220.4l-0.9 3.9M198.4 208.2l-3.4 -0.4M212.7 218.7l1.7 2.7M231.4 211.0l4.6 3.9M137.2 267.9l2.2 4.9M84.6 254.3l-2.4 0.9M83.9 246.5l-3.6 -0.1M135.3 253.6l1.3 1.9M143.9 242.9l3.0 -0.4M134.8 251.4l2.7 0.6M115.3 234.9l1.8 -3.3M133.0 240.2l1.1 -3.2M132.5 238.2l2.3 -1.2M130.2 232.3l2.4 -3.2M112.1 299.7l1.4 -1.1M129.7 296.6l0.6 -5.4M140.0 332.0l3.0 -1.1M130.4 362.9l4.2 2.6M99.9 372.7l1.0 4.7M86.0 307.2l-2.1 -1.1M146.5 307.8l4.9 1.2M145.7 316.9l2.2 -3.4M154.2 324.7l4.3 3.0M67.7 314.6l-4.3 1.9M100.5 291.1l-2.5 -1.9M199.3 284.9l2.3 -1.3M146.9 296.0l-1.5 -2.9M150.8 280.7l-5.5 -3.2M209.8 300.7l2.7 1.2M158.4 278.7l1.7 -5.8M173.9 284.5l-2.4 -2.7M199.4 290.2l2.0 -3.0M185.4 274.5l3.2 -3.0M208.5 285.6l2.1 -3.7M208.1 320.1l2.6 0.7M206.8 297.0l2.8 -0.9M142.5 274.8l-0.1 -2.9M136.9 273.3l1.1 -3.1M59.6 346.4l-3.2 1.7M87.8 368.0l-1.4 4.8M75.0 335.8l2.1 -3.5M131.1 374.4l2.5 4.5M101.5 362.6l0.5 -2.7M371.8 249.2l1.6 3.1M365.5 232.9l-2.8 0.4M315.2 228.7l0.3 2.0M289.5 226.6l-1.4 -4.6M363.7 245.7l-1.3 2.8M339.7 217.6l2.4 -2.3M304.3 224.0l-2.1 -1.1M292.3 224.0l-3.7 0.0M310.6 253.2l-2.2 2.0M326.4 275.1l0.9 3.2M348.6 209.3l2.4 -4.2M314.5 233.3l-0.1 2.5M335.6 251.6l0.6 2.9M360.6 254.1l-0.3 1.8M275.1 251.8l-3.4 -0.4M369.3 251.8l2.9 2.6M287.3 233.6l-2.9 -2.1M315.5 215.8l-3.5 -1.9M282.4 257.5l-4.5 0.6M368.7 248.5l1.6 3.2M326.9 273.3l-3.1 1.9M277.7 248.9l-2.9 1.3M335.2 273.5l0.3 4.4M359.6 239.4l0.6 2.5M326.5 219.9l0.7 1.7M334.4 273.1l0.7 3.5M306.1 223.3l-0.0 2.4M287.1 223.4l2.5 1.5M365.3 241.9l2.9 1.3M363.7 231.9l2.5 2.0M381.6 239.8l0.4 2.5M377.4 230.3l0.1 1.9M385.3 239.2l-0.0 4.8M363.3 246.4l-1.0 3.9M368.8 217.4l-1.1 -3.5M384.6 238.9l0.3 3.5M425.4 274.3l0.4 3.0M426.3 277.9l-0.2 3.1M411.2 291.2l-0.9 4.0M432.8 290.4l1.3 2.2M443.5 266.9l-2.3 1.2M431.4 268.9l1.7 1.7M424.4 277.6l0.4 2.2M452.2 263.4l4.8 -2.0M419.4 293.9l-0.1 3.9M443.9 274.3l2.0 2.5M437.3 275.0l2.7 1.6M432.4 295.8l-2.3 2.0M425.4 274.4l1.5 1.0M434.5 281.6l-2.1 1.4M404.9 293.0l-4.8 0.4M415.5 283.7l2.7 0.9M429.9 287.2l-1.7 0.6M399.0 259.3l-1.8 -3.2M412.1 256.0l-0.3 -2.6M388.8 283.9l-4.6 -3.1M400.9 283.1l-2.6 -1.5M386.6 250.3l-1.3 1.4M394.3 263.6l-0.1 2.0M377.7 251.7l-1.6 -3.9M437.8 286.1l-2.7 1.1M436.1 285.4l2.3 0.5M438.8 292.3l-2.9 2.6M449.8 282.2l-0.0 1.6M331.6 385.1l2.5 1.5M366.2 362.0l2.3 -2.3M325.8 374.1l-0.7 2.0M316.7 356.6l-1.9 -0.6M330.7 398.2l0.2 4.3M372.6 392.9l-0.9 5.1M355.1 354.5l-1.7 2.3M345.4 399.0l1.8 4.6M335.0 347.0l-2.4 -2.0M338.6 362.2l1.2 2.8M353.1 353.3l2.1 -1.8M337.9 367.1l2.8 0.5M301.7 352.8l-2.1 -2.5M326.2 348.1l-1.7 -2.9M379.6 397.1l1.5 2.8M381.7 431.1l-3.3 2.3M367.9 422.1l-2.7 1.3M370.8 425.1l-2.2 1.7M400.9 410.6l1.3 2.5M383.4 418.0l-2.6 0.7M381.9 385.3l0.7 -2.6M356.0 383.5l-5.9 -2.5M389.1 398.6l-2.3 0.6M353.4 404.0l-2.5 1.4M349.6 393.7l-2.2 -3.0M353.3 420.4l-4.4 0.7M398.9 414.0l0.3 2.3M368.3 386.7l1.4 -3.6M355.2 385.7l-2.0 -4.0M391.1 411.9l1.3 1.7M363.3 395.3l-0.4 1.7M396.6 396.0l-2.3 2.1M351.4 396.1l-4.3 1.2M351.3 422.6l-3.9 1.3M383.2 426.3l-0.0 2.1M306.8 361.6l0.9 5.9M323.2 348.4l-0.1 1.8M322.7 356.3l2.6 0.8M307.0 341.7l0.4 2.1M388.0 428.3l-2.1 -0.1" stroke="#f5b113" stroke-width="1.9" stroke-linecap="round" fill="none"/><path d="M258.4 121.2l1.0 -4.0M259.4 161.2l-0.6 3.7M258.7 161.6l4.1 4.0M266.1 120.1l1.6 -2.3M274.2 131.7l2.4 -2.3M249.4 117.1l0.5 -4.3M241.9 118.3l-1.5 0.8M255.9 112.3l2.5 -1.6M195.8 123.2l-3.4 0.5M236.7 110.2l0.9 -4.9M208.4 120.5l-0.8 -1.8M262.1 127.4l1.7 -1.1M247.4 161.4l0.9 5.2M226.3 116.5l0.9 3.0M259.4 176.3l-4.9 -0.3M259.5 149.4l1.8 0.9M308.9 151.9l3.0 -2.4M251.0 158.7l-3.2 -3.6M304.8 168.6l3.9 1.6M264.8 132.9l-4.2 -1.3M302.6 149.3l2.5 -2.4M306.6 145.8l2.6 -2.7M291.1 139.2l-1.4 1.4M302.6 153.1l1.4 0.8M279.9 175.9l-1.3 3.9M176.9 141.3l-1.1 -3.8M183.1 173.8l-2.9 0.7M195.4 163.7l4.7 0.7M189.6 181.6l2.8 4.8M182.5 157.7l-3.5 1.6M208.1 134.0l1.6 -5.3M309.7 198.2l-3.1 4.2M341.4 171.0l-1.7 0.3M342.7 155.0l-1.6 -3.5M328.5 154.7l-2.9 -1.7M319.3 199.0l-1.5 3.6M347.8 167.8l-0.5 2.9M334.0 167.9l2.4 1.3M322.4 157.6l-2.9 -2.3M332.7 170.0l0.1 2.8M304.1 174.8l-1.9 -1.1M345.6 184.8l0.9 1.9M351.9 165.2l-1.2 1.9M314.7 198.7l-3.9 4.9M372.3 175.9l1.8 0.8M360.1 156.7l1.7 -2.2M379.2 177.8l4.0 0.4M326.9 203.0l-0.3 4.9M363.3 161.6l1.2 -2.5M382.8 177.9l4.0 2.8M385.0 183.0l3.1 0.6M370.9 188.1l2.2 1.7M367.5 189.8l2.3 3.0M362.5 179.1l-0.0 1.7M369.5 164.1l2.9 -2.4M380.0 161.2l3.8 -0.8M313.5 142.5l1.8 -6.0M295.7 163.8l-5.0 -0.4M318.8 159.4l1.1 3.5M320.7 151.5l3.7 -0.7M221.7 229.8l1.7 3.2M225.2 230.9l5.5 -0.2M186.6 204.4l-2.1 -4.5M217.2 242.4l-0.2 2.9M224.8 205.1l3.2 -1.9M218.0 227.2l0.4 3.9M226.6 213.6l2.2 0.8M125.5 237.0l3.5 -1.3M147.9 248.8l4.9 1.9M135.5 273.5l-1.1 3.3M122.4 275.7l-2.1 3.3M121.6 230.7l-1.6 -2.7M125.6 230.9l-4.3 1.7M155.9 328.8l3.9 1.0M100.3 287.7l-3.6 -3.8M84.6 291.7l-0.6 -2.8M147.5 347.3l0.6 4.1M145.8 309.8l3.4 0.1M122.3 288.1l-0.4 -5.2M126.1 298.4l3.3 -2.0M138.3 363.8l-1.0 3.6M187.5 336.4l2.6 3.8M197.1 305.6l-0.4 2.6M148.4 281.6l-1.3 -3.4M222.1 306.6l2.6 2.0M213.0 318.6l0.1 2.9M201.5 285.1l2.0 -4.5M209.7 302.9l3.1 -3.3M171.2 288.9l3.3 -0.3M142.4 270.7l-1.9 -3.0M168.3 288.7l3.2 2.9M96.4 359.7l0.3 5.2M109.2 360.8l-2.9 -4.5M357.6 253.4l-0.1 2.3M329.3 252.4l2.2 1.9M323.3 264.3l-0.1 2.6M298.3 242.6l-1.4 2.1M306.0 207.3l-0.5 -3.2M376.3 228.2l1.8 -3.3M283.1 229.7l-5.1 -0.4M340.8 204.9l-1.6 -3.6M294.4 264.6l-5.3 1.6M314.8 273.6l-3.6 3.6M368.3 243.3l2.2 0.5M317.6 270.5l-1.2 5.3M366.2 239.4l1.7 -1.8M323.1 237.4l1.9 0.7M332.1 209.9l1.8 -2.8M341.3 216.8l-0.4 -2.3M292.8 266.8l-4.0 -0.7M337.6 212.4l-0.2 -3.2M299.0 228.8l2.1 2.3M297.1 260.5l-4.6 -0.5M372.5 242.3l1.5 2.7M320.3 212.9l0.0 -3.9M361.1 238.5l2.1 1.1M290.9 227.9l-2.5 -1.7M359.0 267.3l0.2 5.2M289.5 218.3l-3.0 0.1M359.5 257.4l1.4 2.2M334.0 272.7l-2.1 2.7M281.6 228.8l-3.5 0.6M373.5 218.5l1.3 1.8M354.6 221.8l-1.7 -3.5M359.6 215.0l-2.1 -2.6M395.2 268.7l-3.5 -0.8M394.6 259.9l-2.1 -3.5M411.2 260.5l-1.9 1.6M396.0 272.8l-1.9 -0.7M407.4 270.5l-1.2 1.6M429.5 292.1l-2.3 2.9M391.0 282.4l-3.7 -0.2M434.4 270.6l-2.2 0.1M442.5 265.7l1.8 1.8M425.0 257.1l1.0 -3.0M437.4 257.5l0.9 -3.7M432.9 263.8l-0.8 2.5M434.1 265.7l3.0 0.1M413.5 253.3l-2.0 -1.4M400.6 267.8l-3.0 -1.1M441.0 269.5l2.2 0.6M411.1 255.3l-1.2 -2.7M393.4 248.7l0.5 2.3M389.9 243.9l-1.2 -4.8M400.2 247.3l-0.9 2.6M391.9 257.0l0.2 2.9M451.5 295.4l-1.6 2.0M438.9 288.0l1.5 1.3M410.9 325.3l-5.3 1.6M358.7 360.2l-2.4 1.2M317.6 391.5l-3.0 1.6M310.2 399.5l-2.0 3.7M332.3 355.9l1.7 0.3M332.4 343.8l2.1 -3.0M313.7 362.7l-1.8 -0.6M367.0 394.2l0.1 4.5M346.1 371.7l-2.6 0.2M310.9 384.5l-3.2 1.2M372.4 352.1l0.4 -5.0M369.5 365.3l3.0 1.3M349.8 352.7l1.7 -1.6M363.8 388.6l0.7 2.4M305.3 353.8l-2.4 -3.6M370.6 394.3l4.3 3.6M316.0 343.1l-2.0 -3.7M371.2 434.6l-1.1 4.3M345.8 400.5l-4.3 -3.1M354.4 397.6l-2.0 -2.1M387.2 393.8l1.6 1.3M346.7 399.5l-2.1 -3.9M350.5 415.7l-3.3 0.9M373.4 407.8l3.0 1.1M358.9 392.1l-2.3 -0.7M294.2 352.0l-3.7 -0.7M409.2 435.9l2.3 2.7M391.8 429.0l-3.0 0.4M386.2 435.3l-4.5 3.6" stroke="#fbc017" stroke-width="1.9" stroke-linecap="round" fill="none"/><path d="M282.3 133.9l3.8 -4.4M231.3 112.2l-1.1 -4.0M282.3 141.6l6.1 -0.8M251.3 111.2l3.4 -1.3M188.8 122.9l-3.9 0.4M262.8 160.8l2.2 2.4M278.1 141.8l4.2 -0.4M258.8 114.0l1.6 -3.6M282.0 129.9l4.3 -4.1M220.1 107.5l2.2 -4.3M285.5 133.5l-1.0 -3.8M285.2 137.2l-0.0 -2.1M258.3 174.2l-3.0 0.8M296.5 142.6l1.7 -0.5M255.3 171.9l-1.9 3.6M279.9 132.8l2.1 -2.5M199.9 166.7l2.9 4.0M191.4 182.2l5.3 1.6M185.4 153.9l2.0 -1.0M199.6 164.4l3.1 1.8M215.1 143.7l5.4 1.3M173.8 142.0l-2.4 -3.9M192.3 133.2l-0.0 -2.3M385.5 184.7l3.0 3.5M379.6 157.1l2.4 -2.8M387.2 175.9l3.6 1.7M291.6 168.3l-2.5 -3.7M383.1 176.7l3.7 1.2M380.0 162.7l3.9 -3.1M331.7 199.5l0.5 2.7M333.4 145.4l0.4 -4.6M304.4 178.6l-3.2 -0.6M295.3 162.8l-3.7 -4.3M298.3 183.1l-4.9 1.8M326.8 203.7l-4.7 0.9M337.7 148.0l-0.5 -3.3M382.7 177.6l2.0 3.4M373.4 187.1l1.1 3.9M378.6 177.7l2.9 2.3M320.0 154.7l0.4 -3.5M298.3 172.5l-4.3 0.2M370.7 194.5l-0.3 5.0M308.9 196.1l-3.6 3.8M352.0 145.0l-0.8 -3.4M374.0 181.5l2.9 2.0M312.0 142.8l1.5 -4.6M307.2 142.4l-1.8 -4.0M292.0 163.6l-4.3 1.9M202.5 248.0l-1.7 2.5M196.8 205.4l2.6 -1.3M224.8 233.1l3.9 2.1M229.1 211.5l4.8 0.2M127.1 227.7l3.5 -1.3M126.5 293.1l0.5 -4.1M120.8 284.7l-1.9 -3.7M151.7 347.7l0.7 5.6M123.0 293.5l3.2 -1.5M145.2 302.6l2.9 -3.5M205.0 280.6l-0.2 -4.7M179.5 282.2l1.8 -3.8M207.8 322.5l2.1 1.7M200.9 324.1l3.5 1.1M209.3 296.0l3.7 -1.2M214.7 297.9l3.1 0.6M153.4 282.7l0.4 -5.5M191.9 275.3l4.0 -2.4M219.4 300.6l5.8 0.1M90.0 344.6l2.3 -2.4M276.6 235.9l-4.5 -3.4M351.4 260.3l-0.7 4.0M368.2 251.5l-0.0 3.3M289.5 217.8l-1.9 -2.6M289.4 213.4l-0.9 -4.1M364.1 269.0l1.2 3.7M276.7 236.6l-3.9 2.2M338.4 210.0l0.7 -3.7M360.0 253.7l1.0 1.5M348.2 207.1l0.2 -3.7M349.1 270.3l3.3 3.4M370.1 256.9l1.9 1.8M374.4 255.4l3.8 3.6M303.2 224.8l2.2 1.4M271.6 226.0l-3.3 -2.8M377.2 227.3l-1.5 1.1M368.7 218.2l0.2 -2.6M444.9 281.3l3.2 0.5M401.0 256.2l-1.0 -3.3M446.2 262.1l2.3 -0.1M452.9 273.8l2.1 2.5M433.0 288.2l2.6 2.5M446.8 278.0l0.6 2.3M393.0 265.3l-4.5 0.5M413.0 258.5l-2.2 -2.0M405.0 255.5l-4.1 -0.7M421.2 247.8l0.8 -5.5M410.5 280.8l0.2 2.8M406.4 252.3l-2.0 -4.8M406.8 251.4l-4.6 -2.9M446.3 257.6l3.4 -3.3M457.0 259.8l4.2 -0.8M443.1 257.0l0.3 -4.5M453.6 286.8l-1.3 4.8M388.3 270.5l-5.5 -0.9M455.2 267.3l2.8 -4.0M459.5 276.6l3.5 4.4M419.4 256.3l0.8 2.3M440.3 275.6l-1.5 1.7M402.5 262.0l2.2 2.4M373.8 258.4l-4.1 1.5M450.5 285.9l1.2 1.7M456.2 286.6l1.6 1.2M365.5 394.8l1.8 2.6M382.8 375.3l5.6 0.9M334.7 342.7l1.4 -5.2M348.0 344.0l-1.0 -4.3M356.9 393.6l1.2 2.2M361.6 349.6l3.9 -0.9M377.3 392.8l3.6 3.9M324.8 390.9l-1.5 2.8M377.6 389.8l5.7 0.8M367.5 378.4l-1.4 1.0M369.9 393.9l1.8 4.6M315.2 350.0l-0.4 -2.7M342.6 351.3l1.6 -3.2M331.7 347.4l2.1 -3.9M390.6 391.0l-2.0 1.7M404.7 394.5l5.3 -1.1M360.1 433.7l-3.1 1.6M381.5 389.0l1.8 -1.5M374.7 388.4l2.2 -2.5M388.5 402.5l-1.2 2.1M384.5 424.8l2.6 2.7M393.2 384.9l-1.0 -4.6M400.2 406.0l3.1 0.5M387.9 388.9l0.4 -3.7M313.1 342.1l-0.2 -3.4M326.3 357.5l3.0 3.9M318.4 341.3l1.2 -2.5M395.6 423.3l-1.7 -2.1M400.1 422.6l-1.6 2.4" stroke="#fdcf25" stroke-width="1.9" stroke-linecap="round" fill="none"/><path d="M207.3 111.7l-2.5 -2.2M213.7 110.2l-1.7 -2.3M276.5 122.5l2.4 -3.0M186.5 119.9l-6.2 0.2M279.5 128.9l2.9 -4.6M261.3 113.3l-0.5 -3.6M277.1 128.0l2.8 -3.7M291.1 134.7l0.9 -3.0M266.5 132.5l-0.4 -5.3M268.2 177.9l-4.6 3.5M269.1 135.7l-2.8 -1.2M300.8 134.3l3.2 -1.8M285.1 131.0l-0.1 -3.4M314.0 153.2l5.2 -2.9M281.0 176.8l0.7 2.8M302.0 150.2l3.1 -0.5M295.7 136.7l3.0 -3.7M195.3 159.7l3.6 0.4M174.1 141.4l-0.4 -5.0M195.3 155.0l2.5 -4.7M201.1 166.6l3.6 -0.9M199.4 159.2l3.9 -0.6M213.0 150.8l1.6 3.4M384.1 182.0l4.5 1.4M353.4 202.7l-1.5 3.1M311.9 151.7l-0.9 -4.7M293.5 165.5l-3.3 -1.3M358.3 151.6l-0.4 -4.6M362.2 154.1l2.6 -3.0M386.0 169.6l2.8 1.5M364.1 200.1l4.1 3.6M383.5 175.2l4.3 0.7M374.4 172.9l2.6 -0.6M355.7 146.2l4.1 -3.7M381.7 177.2l2.3 3.4M355.4 152.1l2.4 -1.2M375.1 157.6l1.8 -2.4M360.1 153.6l2.5 -1.9M360.9 155.4l-1.0 -4.0M294.1 165.4l-5.4 0.4M388.0 164.3l2.6 -4.4M334.1 146.1l-2.8 -4.1M346.7 145.8l2.3 -3.7M298.0 160.9l-4.5 0.3M385.0 171.0l5.3 -2.1M378.1 159.7l3.3 -2.2M319.8 149.5l1.7 -3.6M289.4 151.1l-6.2 1.1M289.0 160.8l-3.7 -1.4M318.6 143.7l-1.5 -6.0M315.4 162.1l2.2 3.3M207.7 209.7l4.5 -0.4M216.3 209.2l3.2 -2.3M227.1 234.2l5.3 0.4M182.3 198.2l0.5 -3.9M227.8 213.1l2.5 -1.3M139.2 233.7l4.0 -2.0M137.6 302.2l2.8 -1.6M151.7 318.1l6.1 0.6M146.9 328.8l4.9 0.4M131.2 291.3l1.1 -3.5M150.1 349.0l-0.3 5.5M194.2 276.5l2.8 -4.4M211.7 287.7l5.3 -3.3M115.5 359.4l3.3 -1.6M122.7 362.1l1.6 -3.7M363.2 266.9l5.1 2.9M319.3 209.1l0.5 -5.5M372.5 239.4l4.0 -0.1M368.3 221.6l4.0 -1.3M365.1 232.5l2.0 -1.8M370.8 215.7l2.8 -2.4M344.3 273.2l-0.8 5.8M378.8 225.5l3.9 -1.3M347.4 208.5l0.4 -3.2M340.3 204.3l3.2 -5.6M375.5 237.9l4.1 1.2M332.1 203.6l2.0 -4.4M378.5 256.0l1.5 2.8M361.1 212.6l1.0 -2.9M357.4 256.1l2.6 1.0M367.8 234.9l2.1 -0.8M372.6 258.3l3.6 3.3M322.4 204.0l-0.3 -3.4M375.3 226.8l3.2 -1.0M286.5 227.8l-2.1 -4.5M368.3 215.3l2.4 -3.6M376.5 236.1l3.3 1.0M380.8 222.7l3.5 -3.5M377.2 239.1l3.1 1.4M317.6 207.1l-2.0 -2.6M379.1 233.0l3.1 1.1M357.9 228.6l-1.4 1.8M365.7 214.5l2.4 -3.2M290.0 217.0l-4.7 -2.4M309.4 216.3l4.3 -3.0M382.5 226.6l-1.7 1.0M371.4 214.7l-1.8 -2.7M377.2 213.3l0.1 -4.8M434.1 258.5l0.1 2.5M394.6 259.0l-3.6 -1.8M459.5 262.8l5.6 1.0M451.6 270.8l3.1 1.8M419.0 252.5l2.3 -3.6M445.9 263.2l1.9 0.2M387.2 280.3l-5.3 -1.1M448.3 258.3l0.4 -3.9M438.4 292.1l-0.7 3.0M455.6 268.5l3.4 -0.4M456.1 259.4l5.8 -1.4M409.7 256.7l-2.5 -1.8M433.2 261.7l3.1 0.8M439.4 249.4l2.3 -4.3M451.4 289.2l2.0 2.6M419.2 248.1l0.9 -5.6M410.3 251.2l5.2 -0.7M410.4 260.0l4.6 0.1M377.6 246.8l-0.4 -4.5M408.2 246.5l2.2 -3.3M402.4 244.6l1.7 -5.3M387.5 246.2l-0.2 -2.4M452.3 277.9l1.1 -4.2M446.0 276.5l2.5 -3.0M455.3 289.4l1.6 1.1M443.3 296.2l-0.7 3.8M458.5 289.1l2.9 0.4M412.7 331.0l-3.8 3.1M372.1 359.9l3.7 -2.7M373.2 379.9l2.8 2.7M371.8 359.4l2.0 -1.6M368.1 372.5l2.2 -0.1M350.7 340.9l-2.4 -6.1M365.5 349.5l1.8 -4.3M377.7 364.8l2.5 -4.0M382.8 383.7l3.8 1.1M370.1 360.6l2.2 -1.4M330.6 340.2l-2.1 -3.1M366.3 391.9l0.4 4.5M319.8 352.9l-1.0 -3.2M372.6 354.1l1.2 -5.1M354.8 342.9l-1.6 -3.9M343.8 346.1l-2.2 -3.3M379.4 354.3l4.2 -1.1M378.7 381.4l3.7 0.5M374.1 377.0l2.7 2.8M369.8 370.7l2.9 2.1M400.7 389.2l1.2 -4.0M409.7 410.7l3.8 3.0M391.5 430.8l-1.1 3.4M398.0 417.3l2.5 1.9M393.8 397.0l-1.8 0.2M405.2 424.3l0.1 5.3M396.8 396.9l1.4 -1.6M374.8 385.0l1.2 -3.4M372.9 430.9l-1.6 2.8M349.2 392.7l-1.3 -5.0M406.1 395.9l4.4 1.1M374.7 388.0l-0.9 -3.5M407.0 405.5l4.0 -0.8M346.7 412.8l-2.7 -0.7M402.2 404.4l2.9 -1.1M404.2 392.4l2.8 -1.2M371.6 380.7l1.6 -3.6M388.8 392.2l-2.3 1.4M407.1 393.0l5.9 0.4M409.4 400.7l3.9 -0.2M327.9 355.9l3.7 -0.1M318.4 339.9l2.6 -1.8M294.5 343.7l-3.6 -2.6M404.7 423.8l1.6 -4.9M392.5 421.2l0.7 -3.3M395.3 424.3l-0.9 -3.3M395.1 421.6l1.1 -5.5" stroke="#fedd36" stroke-width="1.9" stroke-linecap="round" fill="none"/><path d="M177.6 326.5C175.2 325.8 168.2 323.9 163.1 322.5C158.0 321.2 152.4 318.6 147.0 318.6C141.6 318.6 135.9 320.0 130.8 322.7C125.8 325.4 119.1 332.8 116.8 334.8L117.2 335.2C119.5 333.2 126.2 325.9 131.2 323.3C136.1 320.7 141.7 319.4 147.0 319.4C152.3 319.4 157.8 322.1 162.9 323.5C167.9 324.8 174.9 326.9 177.4 327.5ZM195.9 330.5C194.3 328.5 189.1 322.7 186.3 318.8C183.6 314.8 181.8 310.3 179.3 306.8C176.8 303.3 172.6 299.3 171.2 297.8L170.8 298.2C172.1 299.7 176.2 303.7 178.7 307.2C181.2 310.7 182.9 315.2 185.7 319.2C188.4 323.2 193.5 329.1 195.1 331.1ZM159.3 330.4C157.6 331.1 152.6 332.3 148.8 334.7C145.0 337.1 140.4 341.1 136.8 344.8C133.1 348.4 128.4 354.8 126.8 356.8L127.2 357.2C128.9 355.2 133.6 348.9 137.2 345.2C140.9 341.6 145.5 337.7 149.2 335.3C152.9 333.0 157.9 331.9 159.7 331.2ZM220.2 287.0C219.0 287.7 215.3 290.0 212.7 291.4C210.1 292.9 207.3 294.3 204.8 295.5C202.3 296.7 199.0 298.1 197.8 298.6L198.2 299.4C199.3 298.9 202.7 297.6 205.2 296.5C207.7 295.3 210.7 293.9 213.3 292.6C215.9 291.2 219.7 289.1 221.0 288.4ZM178.0 262.4C176.9 260.1 173.9 253.4 171.4 248.8C168.9 244.2 166.0 238.3 163.3 234.8C160.6 231.3 156.5 228.9 155.2 227.8L154.8 228.2C156.1 229.4 160.1 231.7 162.7 235.2C165.3 238.7 168.2 244.6 170.6 249.2C173.0 253.8 175.9 260.6 177.0 262.8ZM196.1 282.3C195.7 279.9 194.9 273.1 193.5 267.9C192.0 262.6 189.4 256.4 187.4 250.9C185.4 245.4 183.7 239.8 181.3 234.8C179.0 229.8 174.6 223.2 173.3 220.9L172.7 221.1C174.1 223.5 178.4 230.2 180.7 235.2C183.0 240.2 184.6 245.6 186.6 251.1C188.6 256.6 191.1 262.9 192.5 268.1C193.9 273.4 194.5 280.1 194.9 282.5ZM185.4 273.3C188.0 270.3 197.3 260.9 201.3 255.2C205.3 249.5 207.3 244.2 209.3 239.1C211.3 234.1 212.6 227.4 213.3 225.1L212.7 224.9C212.0 227.2 210.7 233.9 208.7 238.9C206.7 243.8 204.7 249.1 200.7 254.8C196.7 260.4 187.3 269.7 184.6 272.7ZM159.4 258.6C157.1 259.2 150.6 260.6 145.8 262.6C141.1 264.7 135.7 268.0 130.8 270.7C126.0 273.4 119.2 277.4 116.9 278.7L117.1 279.3C119.5 277.9 126.3 273.9 131.2 271.3C136.0 268.6 141.4 265.3 146.2 263.4C150.9 261.4 157.4 260.1 159.6 259.4ZM145.3 254.7C143.3 253.0 137.2 247.0 133.2 244.7C129.2 242.3 125.4 241.0 121.0 240.7C116.7 240.3 109.3 242.4 107.0 242.7L107.0 243.3C109.4 243.0 116.7 241.0 121.0 241.3C125.3 241.7 128.8 243.0 132.8 245.3C136.8 247.7 142.7 253.7 144.7 255.3ZM342.0 289.6C342.1 287.7 342.5 282.0 342.7 278.1C343.0 274.1 343.0 270.2 343.3 266.0C343.6 261.9 344.8 257.5 344.5 253.0C344.1 248.5 341.8 241.3 341.3 238.9L340.7 239.1C341.2 241.4 343.3 248.5 343.5 253.0C343.8 257.5 342.5 261.8 342.1 266.0C341.7 270.1 341.6 274.0 341.3 277.9C340.9 281.9 340.2 287.5 340.0 289.4ZM343.1 265.7C341.4 263.9 336.3 258.2 333.3 254.7C330.3 251.3 328.3 248.1 325.3 244.8C322.2 241.4 316.9 236.5 315.2 234.8L314.8 235.2C316.4 236.9 321.8 241.9 324.7 245.2C327.7 248.6 329.8 251.7 332.7 255.3C335.6 258.8 340.7 264.5 342.3 266.3ZM344.4 253.3C345.9 251.3 350.5 245.3 353.3 241.2C356.2 237.2 359.3 232.9 361.3 229.2C363.3 225.5 364.6 220.8 365.3 219.1L364.7 218.9C364.1 220.5 362.7 225.2 360.7 228.8C358.7 232.5 355.5 236.8 352.7 240.8C349.8 244.7 345.1 250.7 343.6 252.7ZM364.7 293.6C365.9 292.7 368.9 290.0 371.8 288.2C374.7 286.5 378.7 284.5 382.2 283.0C385.8 281.5 389.3 280.2 393.1 279.3C396.9 278.3 400.9 277.7 405.0 277.4C409.2 277.1 413.4 278.0 418.1 277.4C422.7 276.7 430.6 274.0 433.1 273.3L432.9 272.7C430.4 273.4 422.6 276.0 417.9 276.6C413.3 277.3 409.1 276.3 405.0 276.6C400.8 276.9 396.8 277.4 392.9 278.3C389.0 279.2 385.4 280.5 381.8 282.0C378.2 283.5 374.2 285.4 371.2 287.2C368.2 288.9 365.1 291.5 363.9 292.4ZM393.4 279.0C394.4 277.0 397.0 270.8 399.3 267.2C401.6 263.6 404.3 259.9 407.2 257.3C410.2 254.6 415.5 252.3 417.2 251.3L416.8 250.7C415.2 251.7 409.8 254.1 406.8 256.7C403.7 259.4 401.0 263.1 398.7 266.8C396.3 270.4 393.6 276.6 392.6 278.6ZM382.4 282.5C382.3 280.2 382.2 273.2 381.4 268.9C380.5 264.7 378.0 258.9 377.3 256.9L376.7 257.1C377.4 259.1 379.8 264.8 380.6 269.1C381.4 273.3 381.4 280.3 381.6 282.5ZM417.8 277.4C419.7 278.1 425.0 280.0 428.9 281.4C432.7 282.7 437.3 285.0 441.0 285.3C444.7 285.7 449.4 283.6 451.1 283.3L450.9 282.7C449.3 283.0 444.7 285.0 441.0 284.7C437.4 284.3 432.9 282.0 429.1 280.6C425.3 279.3 420.0 277.3 418.2 276.6ZM342.4 295.5C344.2 296.4 349.2 298.7 352.8 300.5C356.3 302.2 360.1 304.0 363.8 306.1C367.4 308.3 371.1 311.0 374.8 313.4C378.4 315.7 381.7 318.2 385.6 320.4C389.4 322.5 393.6 324.5 397.9 326.3C402.1 328.1 407.3 331.0 411.0 331.1C414.7 331.3 418.6 327.9 420.1 327.3L419.9 326.7C418.4 327.3 414.6 330.6 411.0 330.5C407.4 330.3 402.3 327.5 398.1 325.7C394.0 323.9 389.8 321.8 386.0 319.6C382.2 317.5 378.9 315.0 375.2 312.6C371.6 310.2 367.9 307.5 364.2 305.3C360.6 303.1 356.8 301.3 353.2 299.5C349.7 297.7 344.7 295.3 343.0 294.5ZM237.3 176.6C238.3 174.7 241.0 168.8 243.4 165.2C245.7 161.7 249.3 158.5 251.3 155.2C253.3 151.8 254.6 146.8 255.3 145.1L254.7 144.9C254.0 146.5 252.7 151.5 250.7 154.8C248.7 158.1 245.0 161.2 242.6 164.8C240.3 168.3 237.4 174.3 236.3 176.2ZM228.0 154.4C226.6 153.5 222.3 150.3 219.2 148.7C216.0 147.0 212.4 145.3 209.1 144.7C205.7 144.0 200.7 144.7 199.0 144.7L199.0 145.3C200.7 145.3 205.6 144.7 208.9 145.3C212.2 146.0 215.7 147.7 218.8 149.3C221.9 151.0 226.1 154.2 227.6 155.2ZM233.4 165.2C234.7 162.9 239.4 155.8 241.4 151.2C243.3 146.5 244.7 141.4 245.3 137.1C246.0 132.7 245.3 127.0 245.3 125.0L244.7 125.0C244.7 127.0 245.3 132.6 244.7 136.9C244.0 141.3 242.7 146.2 240.6 150.8C238.6 155.5 233.9 162.5 232.6 164.8ZM238.2 200.8C236.7 199.4 232.4 194.8 229.5 192.4C226.7 190.0 224.3 188.2 221.0 186.3C217.6 184.5 212.9 182.5 209.2 181.4C205.5 180.2 202.0 179.2 199.0 179.4C195.9 179.6 193.2 181.4 190.8 182.5C188.4 183.7 187.2 186.1 184.6 186.6C182.0 187.1 178.2 186.3 175.1 185.6C172.0 185.0 167.6 183.2 166.1 182.7L165.9 183.3C167.4 183.8 171.8 185.7 174.9 186.4C178.1 187.0 182.1 187.9 184.8 187.4C187.5 186.9 188.8 184.6 191.2 183.5C193.6 182.3 196.1 180.7 199.0 180.6C202.0 180.4 205.3 181.4 208.8 182.6C212.3 183.8 217.0 185.8 220.2 187.7C223.5 189.5 225.7 191.2 228.5 193.6C231.2 196.1 235.4 200.8 236.8 202.2ZM199.4 179.8C198.4 178.2 195.7 173.2 193.3 170.7C190.9 168.2 188.2 166.0 185.1 164.7C182.1 163.3 176.7 163.0 175.1 162.7L174.9 163.3C176.6 163.6 181.9 164.0 184.9 165.3C187.8 166.6 190.4 168.8 192.7 171.3C195.0 173.8 197.6 178.8 198.6 180.2ZM209.4 181.9C209.1 180.1 208.7 174.4 207.4 170.9C206.0 167.3 203.0 164.2 201.3 160.8C199.6 157.5 197.9 152.5 197.3 150.9L196.7 151.1C197.4 152.8 199.0 157.8 200.7 161.2C202.3 164.5 205.3 167.7 206.6 171.1C207.9 174.6 208.2 180.3 208.6 182.1ZM184.4 186.6C183.2 187.7 179.7 191.0 176.8 192.7C173.9 194.4 168.5 196.0 166.9 196.7L167.1 197.3C168.8 196.6 174.2 195.0 177.2 193.3C180.2 191.7 183.7 188.3 185.0 187.4ZM292.9 183.7C293.3 181.9 295.3 176.5 295.4 173.0C295.5 169.5 294.4 165.9 293.3 162.9C292.3 159.9 289.9 156.2 289.3 154.9L288.7 155.1C289.4 156.5 291.7 160.1 292.7 163.1C293.6 166.1 294.7 169.6 294.6 173.0C294.5 176.4 292.4 181.7 291.9 183.5ZM285.6 190.6C284.5 188.9 281.1 184.1 279.3 180.8C277.6 177.6 276.0 174.2 275.3 170.9C274.7 167.6 275.3 162.7 275.3 161.0L274.7 161.0C274.7 162.7 274.0 167.7 274.7 171.1C275.3 174.4 277.0 177.8 278.7 181.2C280.3 184.5 283.8 189.4 284.8 191.0ZM264.0 205.9C265.1 205.6 267.6 204.4 271.1 203.8C274.6 203.2 280.3 202.6 285.0 202.3C289.8 202.0 294.8 202.3 299.6 202.1C304.4 202.0 309.2 201.6 314.0 201.5C318.8 201.5 323.5 201.6 328.4 202.0C333.2 202.3 338.2 203.0 342.9 203.9C347.7 204.8 354.6 206.7 356.9 207.3L357.1 206.7C354.7 206.1 347.8 204.1 343.1 203.1C338.3 202.2 333.3 201.5 328.4 201.0C323.6 200.6 318.8 200.5 314.0 200.5C309.2 200.4 304.4 200.8 299.6 200.9C294.7 200.9 289.7 200.7 285.0 200.9C280.2 201.1 274.5 201.7 270.9 202.2C267.3 202.7 264.7 203.8 263.4 204.1ZM300.0 201.8C301.1 200.2 304.2 195.4 306.4 192.3C308.6 189.2 310.8 186.1 313.3 183.3C315.8 180.4 318.9 178.2 321.3 175.2C323.6 172.2 326.3 166.8 327.3 165.2L326.7 164.8C325.7 166.5 323.1 171.8 320.7 174.8C318.4 177.8 315.2 179.9 312.7 182.7C310.2 185.6 307.9 188.7 305.6 191.7C303.4 194.8 300.2 199.6 299.2 201.2ZM328.8 201.7C329.9 200.0 332.9 194.3 335.3 191.2C337.7 188.2 340.2 185.3 343.2 183.3C346.2 181.3 351.5 179.9 353.1 179.3L352.9 178.7C351.2 179.4 345.8 180.7 342.8 182.7C339.8 184.7 337.2 187.7 334.7 190.8C332.2 193.9 329.1 199.5 328.0 201.3ZM314.4 201.2C315.5 199.2 318.5 192.6 321.3 189.2C324.1 185.9 329.5 182.6 331.2 181.2L330.8 180.8C329.1 182.1 323.6 185.4 320.7 188.8C317.9 192.1 314.8 198.8 313.6 200.8ZM343.2 203.9C344.9 202.8 349.5 199.1 353.2 197.3C356.8 195.6 361.4 194.0 365.1 193.3C368.7 192.7 373.3 193.3 375.0 193.3L375.0 192.7C373.3 192.7 368.6 192.0 364.9 192.7C361.2 193.3 356.5 194.9 352.8 196.7C349.1 198.4 344.4 202.0 342.8 203.1ZM237.6 183.0C237.4 179.5 237.0 167.4 236.2 161.9C235.5 156.5 234.2 154.0 233.2 150.4C232.2 146.8 231.1 143.2 230.3 140.3C229.4 137.4 228.4 134.1 228.1 132.9L227.5 133.1C227.9 134.3 228.7 137.6 229.5 140.5C230.4 143.4 231.4 147.0 232.4 150.6C233.3 154.2 234.5 156.7 235.2 162.1C235.8 167.5 236.2 179.5 236.4 183.0ZM236.1 161.9C235.3 159.4 232.6 151.2 231.4 146.9C230.2 142.6 230.0 139.2 228.8 135.9C227.6 132.5 225.0 128.4 224.3 126.9L223.7 127.1C224.5 128.6 227.0 132.8 228.2 136.1C229.3 139.4 229.4 142.8 230.6 147.1C231.8 151.4 234.5 159.6 235.3 162.1ZM236.1 162.1C236.8 158.5 238.7 145.8 240.3 140.5C242.0 135.3 245.0 132.2 246.0 130.5L245.4 130.3C244.5 131.9 241.3 135.0 239.7 140.3C238.0 145.6 236.0 158.3 235.3 161.9ZM237.4 173.2C238.4 171.2 241.4 164.9 243.3 161.2C245.3 157.4 247.0 153.4 248.9 150.7C250.7 148.0 253.6 146.1 254.5 145.2L254.1 144.8C253.1 145.7 250.2 147.6 248.3 150.3C246.4 153.0 244.6 157.1 242.7 160.8C240.7 164.6 237.6 170.8 236.6 172.8ZM218.8 184.8C218.1 182.9 215.6 177.2 214.4 173.4C213.2 169.6 212.8 165.7 211.6 161.9C210.4 158.1 208.9 154.7 207.2 150.4C205.5 146.0 202.4 138.3 201.5 135.9L200.9 136.1C201.9 138.5 204.9 146.3 206.6 150.6C208.2 155.0 209.7 158.3 210.8 162.1C212.0 165.9 212.4 169.8 213.6 173.6C214.8 177.5 217.2 183.2 218.0 185.2ZM207.3 180.3C206.3 179.1 203.4 174.9 201.5 173.2C199.5 171.5 197.9 171.0 195.5 170.3C193.1 169.5 188.5 169.0 187.1 168.7L186.9 169.3C188.3 169.6 193.0 170.2 195.3 170.9C197.6 171.7 199.1 172.1 200.9 173.8C202.8 175.5 205.6 179.7 206.5 180.9ZM245.8 194.0C247.3 193.5 253.3 193.4 254.7 190.9C256.0 188.4 254.2 183.0 254.0 179.2C253.7 175.3 252.7 171.1 253.2 167.8C253.8 164.4 256.6 160.6 257.3 159.1L256.7 158.9C256.0 160.3 253.2 164.3 252.6 167.6C252.0 171.0 253.0 175.4 253.2 179.2C253.5 183.0 255.2 188.2 253.9 190.5C252.7 192.8 247.0 192.7 245.6 193.2ZM263.4 183.7C264.1 181.9 265.9 176.2 267.4 173.2C268.8 170.1 269.9 167.5 271.9 165.2C273.8 162.9 277.8 160.2 279.0 159.2L278.6 158.8C277.4 159.8 273.3 162.4 271.3 164.8C269.3 167.1 268.1 169.7 266.6 172.8C265.2 175.9 263.3 181.6 262.6 183.3ZM276.6 394.9C278.3 395.7 283.6 398.8 287.2 400.2C290.8 401.5 294.6 403.6 298.2 402.7C301.8 401.7 305.5 396.7 308.9 394.5C312.4 392.3 315.5 388.6 318.9 389.5C322.3 390.3 326.0 397.1 329.4 399.7C332.7 402.3 337.3 404.3 338.8 405.3L339.2 404.7C337.6 403.8 333.2 401.8 329.8 399.1C326.5 396.4 322.7 389.5 319.1 388.5C315.5 387.6 311.8 391.4 308.3 393.5C304.7 395.6 301.2 400.5 297.8 401.3C294.4 402.2 291.2 400.0 287.8 398.6C284.4 397.3 279.2 394.1 277.4 393.1ZM314.4 384.3C315.5 382.8 318.8 378.1 321.3 375.3C323.8 372.4 326.2 369.6 329.2 367.3C332.2 364.9 337.5 362.3 339.2 361.3L338.8 360.7C337.2 361.7 331.8 364.4 328.8 366.7C325.8 369.1 323.2 371.9 320.7 374.7C318.2 377.6 314.8 382.2 313.6 383.7ZM325.8 395.4C327.7 396.1 333.0 397.7 336.8 399.4C340.7 401.0 345.2 403.0 348.8 405.3C352.5 407.6 357.1 411.9 358.8 413.2L359.2 412.8C357.5 411.4 352.9 407.1 349.2 404.7C345.5 402.4 341.0 400.3 337.2 398.6C333.3 397.0 328.0 395.3 326.2 394.6ZM339.0 373.4C341.0 373.4 347.0 372.7 350.9 373.4C354.9 374.0 359.2 375.3 362.8 377.3C366.5 379.3 371.1 383.9 372.8 385.2L373.2 384.8C371.5 383.4 366.9 378.7 363.2 376.7C359.5 374.7 355.1 373.3 351.1 372.6C347.0 371.9 341.0 372.6 339.0 372.6ZM327.4 378.2C328.1 376.3 329.7 370.7 331.3 367.2C333.0 363.7 336.3 358.8 337.3 357.2L336.7 356.8C335.7 358.5 332.4 363.3 330.7 366.8C329.0 370.3 327.3 376.0 326.6 377.8Z" fill="#4e220a" fill-opacity=".8"/><rect width="484" height="400" fill="url(#phl)"/></svg>
<div id="float">
<!-- properties panel -->
<div class="abs" style="left:793.6px;top:57.0px;width:381.8px;height:550.4px;background:#474747;box-shadow:0 0 30px rgba(0,0,0,.5);"></div>
<div class="abs" style="left:793.6px;top:57.0px;width:381.8px;height:23.2px;background:#282828;"></div>
<span class="t" style="left:802.6px;top:63px;letter-spacing:0.09px;">Info</span>
<div class="abs" style="left:829.2px;top:60.4px;width:51.8px;height:20.0px;background:#474747;border-radius:4px 4px 0 0;"></div>
<div class="abs" style="left:834px;top:60px;width:41.8px;height:20px;overflow:hidden;-webkit-mask-image:linear-gradient(90deg,#000 55%,rgba(0,0,0,.12) 100%);mask-image:linear-gradient(90deg,#000 55%,rgba(0,0,0,.12) 100%)">
<span class="t" style="left:0.0px;top:3px;color:#e8e8e8;letter-spacing:-0.23px;">Eigenschaften</span>
</div>
<div class="abs" style="left:799.1px;top:85.9px;width:36.0px;height:17.4px;background:#282828;border-radius:3px;"></div>
<span class="t" style="left:802.8px;top:87px;letter-spacing:-0.39px;color:#f0f0f0;">Ebene</span>
<span class="t" style="left:844.6px;top:87px;letter-spacing:-0.28px;color:#f0f0f0;">Maske</span>
<span class="t" style="left:887.8px;top:87px;letter-spacing:-0.01px;color:#8a8a8a;">Liveform</span>
<div class="abs" style="left:799.0px;top:108.2px;width:373.0px;height:1.2px;background:#2e2e2e;"></div>
<span class="t" style="left:801.4px;top:122px;letter-spacing:0.06px;">Gradationskurven</span>
<span class="t" style="left:799.0px;top:149px;letter-spacing:-0.28px;">Preset:</span>
<div class="abs" style="left:833.0px;top:146.2px;width:58.0px;height:19.6px;background:#282828;border-radius:3px;"></div>
<span class="t" style="left:838.2px;top:149px;letter-spacing:-0.04px;color:#e6e6e6;">Custom</span>
<span class="t" style="left:799.5px;top:171px;letter-spacing:-0.46px;">Kanal:</span>
<div class="abs" style="left:829.0px;top:169.0px;width:45.8px;height:19.4px;background:#282828;border-radius:3px;"></div>
<span class="t" style="left:834.5px;top:171px;letter-spacing:-1.38px;color:#e6e6e6;">RGB</span>
<div class="abs" style="left:879.5px;top:169.0px;width:53.5px;height:19.4px;background:#282828;border-radius:3px;"></div>
<span class="t" style="left:884.9px;top:171px;letter-spacing:-0.14px;color:#e6e6e6;">Spline</span>
<div class="abs" style="left:937.4px;top:169.4px;width:16.6px;height:18.6px;background:#5b5b5b;border-radius:2.5px;"></div>
<div class="abs" style="left:958.2px;top:169.4px;width:30.3px;height:18.6px;background:#5b5b5b;border-radius:2.5px;"></div>
<span class="t" style="left:962.2px;top:171px;letter-spacing:0.26px;color:#e6e6e6;">Auto</span>
<svg width="1250" height="835" viewBox="0 0 1250 835" style="left:0;top:0"><defs><clipPath id="cvc"><rect x="798.8" y="190.8" width="361.6" height="361.6"/></clipPath></defs><g clip-path="url(#cvc)"><rect x="798.8" y="190.8" width="361.6" height="361.6" fill="#fff"/><path fill="#cbcbcb" d="M799.0 553.0L799.0 472.0L801.0 470.0L802.4 440.0L803.3 300.0L803.3 191.0L812.0 191.0L812.6 300.0L813.6 360.0L815.5 400.0L817.6 430.0L819.8 444.6L823.0 451.0L826.3 455.4L829.0 457.0L832.8 463.0L838.2 464.0L840.0 472.0L842.5 481.3L845.0 490.0L847.9 496.3L852.0 495.5L856.5 494.2L860.0 491.0L863.0 489.9L866.0 491.5L869.4 493.0L875.0 491.0L880.2 492.0L884.0 489.0L886.6 485.6L888.4 478.0L889.9 466.2L891.5 450.0L893.1 433.9L894.4 418.0L895.3 408.0L896.4 416.0L897.4 423.0L899.0 428.0L900.6 433.9L903.9 442.5L908.2 453.2L911.0 463.0L914.7 484.8L921.0 495.3L929.4 502.6L932.5 498.4L934.0 504.0L937.7 508.3L942.0 505.0L946.1 503.7L950.0 502.5L953.0 500.0L956.6 500.5L962.0 497.0L967.1 495.3L970.5 491.0L973.4 486.9L975.0 480.0L976.5 472.2L978.0 466.0L979.2 461.8L980.0 446.0L980.7 432.4L981.8 418.0L982.8 405.2L983.6 398.0L984.5 394.7L985.8 395.5L987.0 397.8L988.6 404.0L990.1 411.4L993.3 428.2L995.0 436.0L996.4 440.8L998.5 442.5L1000.6 447.0L1002.6 452.0L1004.8 455.5L1007.0 458.5L1009.0 462.8L1012.0 467.5L1014.3 470.0L1017.5 470.5L1020.5 472.2L1021.6 467.0L1022.6 464.9L1024.0 469.0L1025.8 472.2L1028.0 476.0L1031.0 480.6L1034.5 487.0L1038.4 493.2L1041.5 496.0L1044.7 496.3L1049.0 495.5L1053.0 493.2L1056.0 489.0L1059.3 484.8L1062.0 484.0L1065.6 480.6L1069.8 477.5L1074.0 473.0L1078.2 468.0L1081.5 465.5L1084.5 461.8L1087.0 456.0L1089.7 449.2L1092.0 441.0L1093.9 432.4L1096.0 416.0L1098.1 401.0L1100.0 389.0L1101.4 383.6L1102.4 395.0L1103.6 415.5L1105.9 445.0L1107.7 467.7L1110.5 468.9L1112.5 468.0L1115.0 471.0L1118.4 479.0L1120.7 479.5L1123.0 471.0L1125.2 469.5L1127.5 479.0L1132.0 492.7L1137.7 504.0L1141.8 512.0L1144.5 512.0L1148.6 506.4L1150.9 499.5L1152.5 483.6L1153.6 461.0L1154.3 438.0L1154.6 392.7L1154.6 191.0L1159.3 191.0L1159.3 553.0Z"/><path d="M889.2 190.8V552.4000000000001M798.8 281.2H1160.4M979.6 190.8V552.4000000000001M798.8 371.6H1160.4M1070.0 190.8V552.4000000000001M798.8 462.0H1160.4" stroke="#000" stroke-opacity=".11" stroke-width="1" fill="none"/><path d="M798.8 552.4000000000001L1160.4 190.8" stroke="#3452cc" stroke-width=".8" fill="none"/><path d="M798.8 552.4L801.8 549.9L804.9 547.4L807.9 544.9L811.0 542.4L814.0 539.9L817.0 537.4L820.1 534.9L823.1 532.4L826.1 529.9L829.2 527.3L832.2 524.7L835.3 522.2L838.3 519.6L841.3 517.0L844.4 514.3L847.4 511.7L850.5 509.0L853.5 506.3L856.5 503.6L859.6 500.9L862.6 498.1L865.7 495.3L868.7 492.5L871.7 489.6L874.8 486.7L877.8 483.8L880.8 480.9L883.9 477.9L886.9 474.8L890.0 471.8L893.0 468.7L896.0 465.5L899.1 462.3L902.1 459.1L905.2 455.8L908.2 452.5L911.2 449.1L914.3 445.7L917.3 442.3L920.3 438.8L923.4 435.3L926.4 431.7L929.5 428.1L932.5 424.5L935.5 420.9L938.6 417.3L941.6 413.6L944.7 409.9L947.7 406.2L950.7 402.5L953.8 398.8L956.8 395.1L959.8 391.3L962.9 387.6L965.9 383.9L969.0 380.1L972.0 376.4L975.0 372.7L978.1 368.9L981.1 365.2L984.2 361.5L987.2 357.8L990.2 354.2L993.3 350.5L996.3 346.9L999.4 343.3L1002.4 339.7L1005.4 336.1L1008.5 332.6L1011.5 329.1L1014.5 325.6L1017.6 322.2L1020.6 318.8L1023.7 315.5L1026.7 312.2L1029.7 308.9L1032.8 305.7L1035.8 302.5L1038.9 299.3L1041.9 296.2L1044.9 293.1L1048.0 290.0L1051.0 287.0L1054.0 283.9L1057.1 281.0L1060.1 278.0L1063.2 275.1L1066.2 272.2L1069.2 269.3L1072.3 266.5L1075.3 263.6L1078.4 260.8L1081.4 258.0L1084.4 255.3L1087.5 252.5L1090.5 249.8L1093.5 247.1L1096.6 244.4L1099.6 241.8L1102.7 239.1L1105.7 236.5L1108.7 233.9L1111.8 231.3L1114.8 228.7L1117.9 226.1L1120.9 223.5L1123.9 221.0L1127.0 218.4L1130.0 215.9L1133.1 213.3L1136.1 210.8L1139.1 208.3L1142.2 205.8L1145.2 203.3L1148.2 200.8L1151.3 198.3L1154.3 195.8L1157.4 193.3L1160.4 190.8" stroke="#4a4a4a" stroke-width=".8" fill="none"/><circle cx="798.8" cy="552.4" r="5.4" fill="#fff" stroke="#555" stroke-width=".8"/><circle cx="903.2" cy="458.0" r="5.6" fill="#fff" stroke="#444" stroke-width=".9"/><circle cx="1017.2" cy="322.7" r="5.8" fill="#2a2a2a"/></g></svg>
<span class="t" style="left:798.8px;top:557px;letter-spacing:-0.47px;">X (in):</span>
<div class="abs" style="left:826.1px;top:554.6px;width:32.9px;height:19.2px;background:#282828;border-radius:3px;"></div>
<span class="t" style="left:829.7px;top:557px;letter-spacing:-0.47px;color:#e6e6e6;">154</span>
<span class="t" style="left:864.3px;top:557px;letter-spacing:-0.36px;">Y (out):</span>
<div class="abs" style="left:898.2px;top:554.6px;width:32.8px;height:19.2px;background:#282828;border-radius:3px;"></div>
<span class="t" style="left:901.8px;top:557px;letter-spacing:-0.67px;color:#e6e6e6;">162</span>
<div class="abs" style="left:794px;top:578px;width:378px;height:9.6px;overflow:hidden">
<span class="t" style="left:5.0px;top:2px;letter-spacing:-0.03px;">Sample from image:</span>
<div class="abs" style="left:104.9px;top:5.1px;width:12.2px;height:6.9px;background:#000;"></div>
<div class="abs" style="left:124.8px;top:5.1px;width:12.5px;height:6.9px;background:#7f7f7f;"></div>
<div class="abs" style="left:144.8px;top:5.1px;width:12.7px;height:6.9px;background:#fff;"></div>
<span class="t" style="left:167.0px;top:4px;">+</span>
</div>
<div class="abs" style="left:793.6px;top:587.3px;width:381.8px;height:1.2px;background:#2c2c2c;"></div>
<div class="abs" style="left:1172.0px;top:190.0px;width:2.6px;height:378.5px;background:#2b2b2b;border-radius:1px;"></div>
<div class="abs" style="left:1134.0px;top:590.0px;width:15.6px;height:16.4px;background:#282828;border-radius:2.5px;"></div>
<svg width="1250" height="835" viewBox="0 0 1250 835" style="left:0;top:0;pointer-events:none"><path d="M1099.8 593.2H1103.6V601" fill="none" stroke="#dedede" stroke-width="2"/><path fill="#dedede" d="M1099.8 600.2H1107.4L1103.6 604.8Z"/><path d="M1117.8 597.2A4.6 4.6 0 0 1 1125.6 594.8M1126.6 599.4A4.6 4.6 0 0 1 1118.8 601.8" fill="none" stroke="#dedede" stroke-width="1.9"/><path fill="#dedede" d="M1127.6 592.4V597.2H1122.8ZM1116.8 604.2V599.4H1121.6Z"/><path fill="#f2f2f2" d="M1135.6 598.2Q1141.8 590.3 1148.0 598.2Q1141.8 606.1 1135.6 598.2Z"/><circle cx="1141.8" cy="598.2" r="2.91" fill="#282828"/><circle cx="1141.8" cy="598.2" r="1.55" fill="#f2f2f2"/><path fill="#dedede" d="M1155.6 594.2L1157.1 602.6Q1161.1 605.2 1165.1 602.6L1166.6 594.2Z"/><ellipse cx="1161.1" cy="594.3" rx="5.5" ry="1.7" fill="#dedede"/><ellipse cx="1161.1" cy="594.4" rx="4.2" ry=".9" fill="#8c8c8c"/><path d="M795 601L801 606.6M795 604L797.8 606.6" stroke="#8a8a8a" stroke-width="1"/><path d="M880 154.6L883 157.6L886 154.6M863.6 177.2L866.6 180.2L869.6 177.2M922 177.2L925 180.2L928 177.2" fill="none" stroke="#e6e6e6" stroke-width="1.7"/><path fill="#e8e8e8" d="M941.6 174.6H949.8L945.7 183Z"/></svg>
<!-- layers panel -->
<div class="abs" style="left:1079.2px;top:57.0px;width:126.1px;height:314.6px;background:#474747;box-shadow:0 0 30px rgba(0,0,0,.5);"></div>
<div class="abs" style="left:1079.2px;top:57.0px;width:126.1px;height:43.3px;background:#282828;"></div>
<div class="abs" style="left:1082.0px;top:60.4px;width:46.4px;height:19.9px;background:#474747;border-radius:4px 4px 0 0;"></div>
<span class="t" style="left:1087.8px;top:63px;letter-spacing:-0.26px;color:#f0f0f0;">Ebenen</span>
<span class="t" style="left:1137.4px;top:63px;letter-spacing:-0.42px;">Kanäle</span>
<span class="t" style="left:1087.6px;top:83px;letter-spacing:-0.21px;">Pfade</span>
<div class="abs" style="left:1187.0px;top:80.4px;width:15.0px;height:17.4px;background:#474747;border-radius:3px;"></div>
<div class="abs" style="left:1080.6px;top:102.0px;width:102.4px;height:19.8px;background:#282828;border-radius:3px;"></div>
<span class="t" style="left:1086.3px;top:105px;letter-spacing:0.21px;color:#eaeaea;">Normal</span>
<span class="t" style="left:1080.9px;top:127px;letter-spacing:-0.01px;color:#e4e4e4;">Deckkraft:</span>
<div class="abs" style="left:1130.0px;top:124.1px;width:33.1px;height:19.5px;background:#282828;border-radius:3px;"></div>
<span class="t" style="left:1134.0px;top:127px;letter-spacing:-0.85px;color:#eaeaea;">100%</span>
<span class="t" style="left:1080.9px;top:147px;letter-spacing:-0.13px;color:#e4e4e4;">Fixieren:</span>
<span class="t" style="left:1080.9px;top:167px;letter-spacing:-0.18px;color:#e4e4e4;">Füllung:</span>
<div class="abs" style="left:1119.1px;top:164.1px;width:33.0px;height:19.5px;background:#282828;border-radius:3px;"></div>
<span class="t" style="left:1122.9px;top:167px;letter-spacing:-0.75px;color:#eaeaea;">100%</span>
<div class="abs" style="left:1079.2px;top:186.9px;width:126.1px;height:1.1px;background:#333;"></div>
<div class="abs" style="left:1079.2px;top:188.0px;width:126.1px;height:31.6px;background:#5c5c5c;"></div>
<div class="abs" style="left:1100.7px;top:188.0px;width:30.5px;height:31.6px;background:#6b6b6b;"></div>
<div class="abs" style="left:1079.2px;top:219.6px;width:126.1px;height:1.0px;background:#3a3a3a;"></div>
<div class="abs" style="left:1160px;top:190px;width:45.3px;height:30px;overflow:hidden">
<span class="t" style="left:5.8px;top:7px;color:#e4e4e4;letter-spacing:0.1px;">Gradationskurven</span>
</div>
<div class="abs" style="left:1125px;top:222px;width:44.6px;height:30px;overflow:hidden;-webkit-mask-image:linear-gradient(90deg,#000 80%,rgba(0,0,0,.2) 100%);mask-image:linear-gradient(90deg,#000 80%,rgba(0,0,0,.2) 100%)">
<span class="t" style="left:3.7px;top:8px;color:#e4e4e4;">Background</span>
</div>
<div class="abs" style="left:1079.2px;top:335.2px;width:126.1px;height:1.0px;background:#3a3a3a;"></div>
<svg width="1250" height="835" viewBox="0 0 1250 835" style="left:0;top:0;pointer-events:none"><path d="M1191.6 86.6H1197.8M1191.6 89.5H1197.8M1191.6 92.4H1197.8" stroke="#b4b4b4" stroke-width="1.7"/><path d="M1172.3 110.5L1175.4 113.6L1178.5 110.5" fill="none" stroke="#e8e8e8" stroke-width="1.7"/><path fill="#e4e4e4" d="M1164.8 130.6H1172.2L1168.5 137.6Z"/><path fill="#e4e4e4" d="M1153.8 170.8H1161.2L1157.5 177.8Z"/><rect x="1126.2" y="149.4" width="10.8" height="10.8" fill="#2e2e2e" stroke="#e6e6e6" stroke-width="1"/><path fill="#e6e6e6" d="M1129.15 149.90h2.45v2.45h-2.45zM1134.05 149.90h2.45v2.45h-2.45zM1126.70 152.35h2.45v2.45h-2.45zM1131.60 152.35h2.45v2.45h-2.45zM1129.15 154.80h2.45v2.45h-2.45zM1134.05 154.80h2.45v2.45h-2.45zM1126.70 157.25h2.45v2.45h-2.45zM1131.60 157.25h2.45v2.45h-2.45z"/><path fill="#e6e6e6" d="M1149.8 148.8L1152 150.6L1147.9 156L1145.9 154.3ZM1145.3 154.9L1147.4 156.7C1148 159 1145.6 160.6 1141.4 160.6C1143.4 159.4 1142.6 156.2 1145.3 154.9Z"/><path d="M1161 150.2V159.8M1156.2 155H1165.8" stroke="#e6e6e6" stroke-width="1"/><path fill="#e6e6e6" d="M1161 148.6L1163 151H1159ZM1161 161.4L1163 159H1159ZM1154.6 155L1157 153V157ZM1167.4 155L1165 153V157Z"/><rect x="1170.6" y="154.2" width="11" height="6.8" rx="1" fill="#e6e6e6"/><path d="M1173 154.6V152.6A3.1 3.1 0 0 1 1179.2 152.6V154.6" fill="none" stroke="#e6e6e6" stroke-width="1.6"/><path fill="#e8e8e8" d="M1083.9 204.4Q1089.9 196.7 1095.9 204.4Q1089.9 212.1 1083.9 204.4Z"/><circle cx="1089.9" cy="204.4" r="2.82" fill="#5c5c5c"/><circle cx="1089.9" cy="204.4" r="1.50" fill="#e8e8e8"/><path fill="#e8e8e8" d="M1083.9 237.0Q1089.9 229.3 1095.9 237.0Q1089.9 244.7 1083.9 237.0Z"/><circle cx="1089.9" cy="237" r="2.82" fill="#474747"/><circle cx="1089.9" cy="237" r="1.50" fill="#e8e8e8"/><rect x="1103.9" y="190.9" width="24.5" height="24.6" fill="#545454" stroke="#c8c8c8" stroke-width="1.8"/><path d="M1116.1 191V216M1104 203.3H1128.4" stroke="#7c7c7c" stroke-width="1"/><path d="M1104.4 215.4C1114.5 215.4 1117.5 191.4 1128 191.4" fill="none" stroke="#d6d6d6" stroke-width="1.3"/><rect x="1132.5" y="197.8" width="4.8" height="5.8" rx="1.6" fill="none" stroke="#e2e2e2" stroke-width="1.2"/><rect x="1132.5" y="204.9" width="4.8" height="5.8" rx="1.6" fill="none" stroke="#e2e2e2" stroke-width="1.2"/><path d="M1134.9 201.4V207.2" stroke="#e2e2e2" stroke-width="1.2"/><rect x="1140.4" y="190.4" width="17.4" height="26" fill="#fff" stroke="#0a0a0a" stroke-width="1"/><rect x="1089.8" y="344.5" width="5" height="4.2" rx="1.6" fill="none" stroke="#cfcfcf" stroke-width="1.6"/><rect x="1095.4" y="344.5" width="5" height="4.2" rx="1.6" fill="none" stroke="#cfcfcf" stroke-width="1.6"/><path d="M1092.6 346.6H1097.6" stroke="#cfcfcf" stroke-width="1.5"/><text x="1107.6" y="350.6" font-family="Liberation Sans,sans-serif" font-size="11.6" letter-spacing="-.2" fill="#c4c4c4">eff</text><path fill="#cfcfcf" d="M1121.6 349.2V352.6H1118.2Z"/><rect x="1127.6" y="342.3" width="11.8" height="8.5" fill="#cfcfcf"/><circle cx="1133.5" cy="346.5" r="2.7" fill="#474747"/><circle cx="1152.2" cy="346.6" r="5.2" fill="none" stroke="#cfcfcf" stroke-width="1.3"/><path fill="#cfcfcf" d="M1152.2 341.4A5.2 5.2 0 0 0 1152.2 351.8Z"/><path fill="#cfcfcf" d="M1160 349.4V352.8H1156.6Z"/><path fill="#cfcfcf" d="M1165.9 342.6Q1165.9 341.8 1166.7 341.8H1170.4L1171.8 343.2H1177.5Q1178.3 343.2 1178.3 344V350Q1178.3 350.8 1177.5 350.8H1166.7Q1165.9 350.8 1165.9 350Z"/><path d="M1186.3 341.6H1196.8V352H1190.2L1186.3 348.1ZM1186.3 348.1H1190.2V352" fill="none" stroke="#cfcfcf" stroke-width="1.2"/><path fill="#cfcfcf" d="M1186.3 360.0L1187.8 368.0Q1191.8 370.6 1195.8 368.0L1197.3 360.0Z"/><ellipse cx="1191.8" cy="360.1" rx="5.5" ry="1.7" fill="#cfcfcf"/><ellipse cx="1191.8" cy="360.2" rx="4.2" ry=".9" fill="#8c8c8c"/><path d="M1080.4 365L1087 371.2M1080.4 368.2L1083.6 371.2" stroke="#8a8a8a" stroke-width="1"/></svg>
<svg width="17.5" height="25.8" viewBox="0 0 484 707" preserveAspectRatio="none" style="left:1103.2px;top:222.8px"><defs><linearGradient id="thw" x1="0" x2="1" y1="0" y2=".25"><stop offset="0" stop-color="#853d03"/><stop offset="0.35" stop-color="#b86806"/><stop offset="0.7" stop-color="#e09812"/><stop offset="1" stop-color="#f8cc30"/></linearGradient></defs><rect width="484" height="707" fill="url(#thw)"/><rect y="590" width="484" height="117" fill="#eaa416"/><ellipse cx="240" cy="270" rx="150" ry="130" fill="#eeaa18" fill-opacity=".85"/><ellipse cx="150" cy="310" rx="70" ry="60" fill="#e89c14"/><ellipse cx="330" cy="250" rx="80" ry="70" fill="#f8c428"/><ellipse cx="350" cy="390" rx="60" ry="50" fill="#f4b81e"/><path d="M235 540C200 470 250 420 260 330L272 330C268 430 230 470 262 540Z" fill="#6a3a16"/><path d="M159 527C159 590 185 628 212 634H279C305 628 331 590 331 527Z" fill="#e09412"/><rect width="484" height="707" fill="none" stroke="#000" stroke-width="26"/></svg>
<!-- right icon column -->
<div class="abs" style="left:1210.6px;top:116.4px;width:24.2px;height:20.8px;background:#282828;border-radius:3px;"></div>
<svg width="1250" height="835" viewBox="0 0 1250 835" style="left:0;top:0;pointer-events:none"><path d="M1190.6 51.4L1188.8 53.2L1190.6 55M1194.6 51.4L1196.4 53.2L1194.6 55M1220.6 51.4L1218.8 53.2L1220.6 55M1224.6 51.4L1226.4 53.2L1224.6 55" fill="none" stroke="#c8c8c8" stroke-width="1.1"/><path fill="#1c1c1c" d="M1205.4 139.8h2.2v3.4h-2.2zM1205.4 195.4h2.2v3.4h-2.2zM1205.4 250.2h2.2v3.4h-2.2z"/><path fill="#cfcfcf" d="M1214.8 63.2H1225.2V70.6A4.6 4.6 0 0 0 1222 75.8H1214.8Z"/><path d="M1216.4 65.6H1223.4M1216.4 68H1223.4M1216.4 70.4H1221.6M1216.4 72.8H1220.4" stroke="#474747" stroke-width="1"/><circle cx="1226.8" cy="74.8" r="3.5" fill="#474747" stroke="#cfcfcf" stroke-width="1.1"/><path d="M1226.8 72.6V75H1228.8" fill="none" stroke="#cfcfcf" stroke-width="1"/><rect x="1215.40" y="88.50" width="5.1" height="4.9" fill="#bdbdbd"/><rect x="1220.47" y="88.50" width="5.1" height="4.9" fill="#b4b4b4"/><rect x="1225.54" y="88.50" width="5.1" height="4.9" fill="#adadad"/><rect x="1215.40" y="93.37" width="5.1" height="4.9" fill="#a2a2a2"/><rect x="1220.47" y="93.37" width="5.1" height="4.9" fill="#929292"/><rect x="1225.54" y="93.37" width="5.1" height="4.9" fill="#8c8c8c"/><rect x="1215.40" y="98.24" width="5.1" height="4.9" fill="#848484"/><rect x="1220.47" y="98.24" width="5.1" height="4.9" fill="#747474"/><rect x="1225.54" y="98.24" width="5.1" height="4.9" fill="#6e6e6e"/><rect x="1215" y="88.1" width="15.9" height="15.3" fill="none" stroke="#d0d0d0" stroke-width="1"/><path fill="#dadada" stroke="#282828" stroke-width=".9" d="M1222.9 127.1L1231 130.7L1222.9 134.3L1214.9 130.7Z"/><path fill="#dadada" stroke="#282828" stroke-width=".9" d="M1222.9 123.4L1231 127.0L1222.9 130.6L1214.9 127.0Z"/><path fill="#dadada" stroke="#282828" stroke-width=".9" d="M1222.9 119.7L1231 123.3L1222.9 126.9L1214.9 123.3Z"/><circle cx="1223" cy="147.9" r="4.2" fill="#8a8a8a" stroke="#c8c8c8" stroke-width="1"/><circle cx="1220" cy="153.6" r="4.2" fill="none" stroke="#c8c8c8" stroke-width="1"/><circle cx="1226" cy="153.6" r="4.2" fill="#b0b0b0" fill-opacity=".75" stroke="#c8c8c8" stroke-width="1"/><path d="M1215.8 182.2C1217.6 167.6 1227.9 167.6 1229.7 182.2" fill="none" stroke="#cfcfcf" stroke-width="1.4"/><path d="M1217 171H1228.6" stroke="#cfcfcf" stroke-width="1"/><circle cx="1216" cy="171" r="1.4" fill="#474747" stroke="#cfcfcf" stroke-width=".9"/><circle cx="1229.6" cy="171" r="1.4" fill="#474747" stroke="#cfcfcf" stroke-width=".9"/><rect x="1221.4" y="169.8" width="2.7" height="2.7" fill="#cfcfcf"/></svg>
</div>
<div class="abs" style="left:0.0px;top:833.7px;width:1250.0px;height:1.3px;background:#130d13;"></div>
</div>
</body>
</html>
